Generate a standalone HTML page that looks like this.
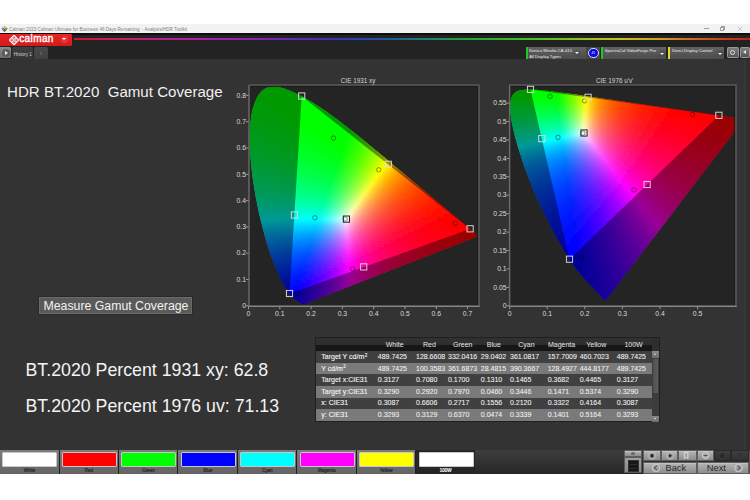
<!DOCTYPE html>
<html><head><meta charset="utf-8">
<style>
*{box-sizing:border-box}
html,body{margin:0;padding:0}
body{width:750px;height:500px;position:relative;overflow:hidden;background:#fff;font-family:"Liberation Sans",sans-serif}
.abs{position:absolute}
#titlebar{position:absolute;left:0;top:24px;width:750px;height:9px;background:#f2f2f2}
#titlebar .t{position:absolute;left:9px;top:3.2px;font-size:4.6px;color:#7e7e7e;white-space:pre;line-height:6px}
#hdr{position:absolute;left:0;top:33px;width:750px;height:14px;background:linear-gradient(#0e0e0e 0,#0e0e0e 2px,#222 2.5px)}
#calbtn{position:absolute;left:0;top:0.8px;width:71.5px;height:11.9px;background:linear-gradient(#e82424,#d41a1a);border-radius:0 1px 1px 0}
#calbtn .lg{position:absolute;left:19.2px;top:-1.4px;font-size:10px;color:#fff;line-height:14px;letter-spacing:0.4px;-webkit-text-stroke:0.4px #fff}
#rainbow{position:absolute;left:74px;top:4.8px;width:676px;height:2.6px;background:linear-gradient(90deg,#c81830 0%,#c0206a 8.3%,#b0209a 15.7%,#9a20b0 23%,#7028b0 30.5%,#4030b0 37.9%,#2050a8 45.3%,#207878 51.2%,#20a040 57.1%,#40c020 67.5%,#90c020 74.9%,#c8c020 80.8%,#d0a020 86.7%,#c86020 92.6%,#c02020 100%);filter:blur(0.45px)}
#tabrow{position:absolute;left:0;top:47px;width:750px;height:12px;background:#232323}
#main{position:absolute;left:0;top:59px;width:750px;height:391px;background:#333}
#rstrip{position:absolute;left:744px;top:59px;width:6px;height:391px;background:linear-gradient(90deg,#373737 0,#373737 2px,#2f2f2f 2px)}
.dev{position:absolute;top:47px;height:12px;background:linear-gradient(#626262,#4c4c4c);border-left:2px solid #22c822}
.dev .dt{position:absolute;left:1.6px;top:1.2px;font-size:4.2px;line-height:5.4px;color:#ececec;white-space:pre}
.dd{position:absolute;width:7px;height:7px;border-radius:3.5px;background:rgba(0,0,0,0.08)}
.dd:after{content:"";position:absolute;left:1.4px;top:2.4px;border-left:2.1px solid transparent;border-right:2.1px solid transparent;border-top:2.6px solid #f4f4f4}
#ttl{position:absolute;left:7px;top:81.7px;font-size:15.1px;color:#f0f0f0;white-space:pre;line-height:20px}
.big{position:absolute;left:25.5px;font-size:17.75px;color:#f4f4f4;white-space:pre;line-height:22px}
#mbtn{position:absolute;left:38px;top:295.7px;width:155px;height:19px;background:#5a5a5a;border:1px solid #2a2a2a;box-shadow:inset 0 0 0 1px #6a6a6a}
#mbtn span{position:absolute;left:4.5px;top:2px;font-size:12.3px;line-height:14px;color:#f2f2f2;white-space:pre}
svg text{font-family:"Liberation Sans",sans-serif}
.ct{font-size:6.35px;fill:#d4d4d4}
.tx{font-size:6.8px;fill:#dadada;text-anchor:middle}
.ty{font-size:6.8px;fill:#dadada;text-anchor:end}
.cg rect{width:3px;height:3px}
.tb{position:absolute;left:315px;top:337.3px;width:345px;height:85.2px;background:#2e2e2e;border:1px solid #202020}
.th{position:absolute;left:0;top:0.2px;width:335.6px;height:13.1px;background:linear-gradient(#313131 0,#2e2e2e 6.6px,#171717 7.4px,#161616 100%)}
.hd{position:absolute;top:3px;width:80px;text-align:center;font-size:7px;line-height:8px;color:#e6e6e6}
.ra,.rb{position:absolute;left:0;width:335.6px;height:11.6px}
.sp{font-size:4.6px;position:relative;top:-2.6px;margin-left:0.4px}
.ra{background:#404040}
.rb{background:#7a7a7a}
.lb{position:absolute;left:5.3px;top:1.8px;font-size:7px;line-height:8px;color:#f4f4f4;white-space:pre;-webkit-text-stroke:0.12px #f4f4f4}
.vl{position:absolute;top:1.8px;font-size:7px;line-height:8px;color:#f0f0f0;white-space:pre;-webkit-text-stroke:0.08px #f0f0f0}
.sb{position:absolute;left:336.4px;top:13px;width:6.2px;height:71px;background:#3c3c3c}
.sbt{position:absolute;left:0;top:0;width:6.2px;height:6.5px;background:linear-gradient(#8a8a8a,#6a6a6a)}
.sbt:after,.sbb:after{content:'';position:absolute;left:1.3px;border-left:1.8px solid transparent;border-right:1.8px solid transparent}
.sbt:after{top:1.8px;border-bottom:2.2px solid #d8d8d8}
.sbb:after{top:2.2px;border-top:2.2px solid #d8d8d8}
.sbth{position:absolute;left:0.6px;top:7.5px;width:5px;height:34px;background:linear-gradient(90deg,#505050,#5e5e5e);border-radius:1px}
.sbb{position:absolute;left:0;top:64.5px;width:6.2px;height:6.5px;background:linear-gradient(#8a8a8a,#6a6a6a)}
#bbar{position:absolute;left:0;top:450px;width:750px;height:24px;background:linear-gradient(#3a3a3a,#222)}
.tile{position:absolute;top:0;width:59.6px;height:24px;background:linear-gradient(#7c7c7c,#646464);border-right:0.9px solid #202020}
.tile .sw{position:absolute;left:2.4px;top:2px;width:55px;height:14.8px;border:0.5px solid #c8c8c8;border-radius:1px;box-shadow:0 0 0.5px #444}
.tile .tl{position:absolute;left:0;top:18.1px;width:59px;text-align:center;font-size:4.5px;line-height:6px;color:#222;-webkit-text-stroke:0.15px #222}
.tile.sel{background:#262626}
.tile.sel .tl{color:#fff;-webkit-text-stroke:0.2px #fff}
.nb{position:absolute;background:linear-gradient(#b6b6b6,#8c8c8c);border:0.5px solid #5e5e5e;box-shadow:inset 0 0.6px 0 #cfcfcf}
.nbd{position:absolute;background:linear-gradient(#3e3e3e,#303030);border:0.5px solid #2a2a2a}
#bottomwhite{position:absolute;left:0;top:474px;width:750px;height:26px;background:#fff}
</style></head>
<body>
<div id="titlebar">
  <svg class="abs" style="left:0.8px;top:1.2px" width="7" height="7" viewBox="0 0 8 8">
    <path d="M4 0.6 L5.9 2.5 L4 4.4 L2.1 2.5Z" fill="#d8d040"/>
    <path d="M5.9 2.5 L7.8 4.4 L5.9 6.3 L4 4.4Z" fill="#40b040"/>
    <path d="M4 4.4 L5.9 6.3 L4 8 L2.1 6.3Z" fill="#a83050"/>
    <path d="M2.1 2.5 L4 4.4 L2.1 6.3 L0.2 4.4Z" fill="#40a0d0"/>
  </svg>
  <div class="t">Calman 2023 Calman Ultimate for Business 46 Days Remaining  - Analysis/HDR Toolkit</div>
  <div class="abs" style="left:704px;top:4.4px;width:4.5px;height:0.5px;background:#a0a0a0"></div>
  <div class="abs" style="left:720.2px;top:3px;width:3.6px;height:3.6px;border:0.5px solid #a0a0a0"></div><div class="abs" style="left:721px;top:2.2px;width:3.6px;height:3.6px;border-top:0.5px solid #a0a0a0;border-right:0.5px solid #a0a0a0"></div>
  <svg class="abs" style="left:737px;top:2.2px" width="6" height="6"><path d="M0.8 0.8L5.2 5.2M5.2 0.8L0.8 5.2" stroke="#a0a0a0" stroke-width="0.5"/></svg>
</div>
<div id="hdr">
  <div id="calbtn">
    <svg class="abs" style="left:8.5px;top:0.8px" width="10" height="10" viewBox="0 0 10 10">
      <path d="M5 0.3 L9.7 5 L5 9.7 L0.3 5Z" fill="none" stroke="#fff" stroke-width="1.3"/>
      <path d="M5 2.6 L7.4 5 L5 7.4 L2.6 5Z" fill="none" stroke="#fff" stroke-width="0.9"/>
      <path d="M2.6 2.6 L7.4 7.4 M7.4 2.6 L2.6 7.4" stroke="#fff" stroke-width="0.7"/>
    </svg>
    <div class="lg">calman</div>
    <div class="abs" style="left:60.8px;top:1.8px;width:7.6px;height:7.6px;border-radius:3.8px;background:#e23a3a"></div>
    <div class="abs" style="left:62.4px;top:4.6px;border-left:2.2px solid transparent;border-right:2.2px solid transparent;border-top:2.6px solid #fff"></div>
  </div>
  <div id="rainbow"></div>
</div>
<div id="tabrow">
  <div class="abs" style="left:0;top:0.3px;width:10.8px;height:11.2px;background:linear-gradient(#8c8c8c,#6c6c6c);border-radius:0 1.5px 1.5px 0"></div>
  <div class="abs" style="left:2px;top:2px;width:7.5px;height:7.5px;border-radius:3.75px;background:#5c5c5c"></div>
  <div class="abs" style="left:4.5px;top:3.8px;border-top:2px solid transparent;border-bottom:2px solid transparent;border-left:3px solid #f0f0f0"></div>
  <div class="abs" style="left:11.6px;top:-0.3px;width:21.6px;height:12.3px;background:linear-gradient(#3e3e3e,#363636);border-radius:1.5px 1.5px 0 0"></div>
  <div class="abs" style="left:13.8px;top:4.6px;font-size:4.6px;line-height:6px;color:#cdcdcd;white-space:pre">History 1</div>
  <div class="abs" style="left:34px;top:-0.3px;width:13.6px;height:12.3px;background:linear-gradient(#4a4a4a,#404040);border-radius:1.5px 1.5px 0 0"></div>
  <div class="abs" style="left:39.8px;top:5.2px;width:2.4px;height:2.4px;background:#5a5a5a"></div>
</div>
<div class="dev" style="left:525.6px;width:74px">
  <div class="dt">Konica Minolta CA-410
All Display Types</div>
  <div class="dd" style="left:46.5px;top:2.6px"></div>
  <div class="abs" style="left:58px;top:0;width:14px;height:12px;background:#474747"></div>
  <div class="abs" style="left:60.3px;top:0.6px;width:10.8px;height:10.8px;border-radius:5.4px;background:#0808e6;border:0.7px solid #d8d8f8"></div>
  <div class="abs" style="left:60.3px;top:4px;width:10.8px;text-align:center;font-size:3px;line-height:4px;color:#fff">45</div>
</div>
<div class="dev" style="left:601.2px;width:64.5px">
  <div class="dt">SpectraCal VideoForge Pro</div>
  <div class="dd" style="left:55.5px;top:3.3px"></div>
</div>
<div class="dev" style="left:668.3px;width:56px;border-left-color:#e8d820">
  <div class="dt">Direct Display Control</div>
  <div class="dd" style="left:46.5px;top:3.3px"></div>
</div>
<div class="abs" style="left:726.6px;top:47px;width:12.2px;height:11.3px;background:linear-gradient(#7c7c7c,#565656);border:0.5px solid #9a9a9a;border-radius:1.2px"></div>
<div class="abs" style="left:730.1px;top:50.4px;width:5px;height:5px;border-radius:2.5px;border:1.4px solid #dedede"></div>
<div class="abs" style="left:740.2px;top:47px;width:10px;height:11.3px;background:linear-gradient(#7c7c7c,#565656);border:0.5px solid #9a9a9a;border-radius:1.2px"></div>
<div class="abs" style="left:742.6px;top:50.3px;border-top:2.4px solid transparent;border-bottom:2.4px solid transparent;border-right:3px solid #e8e8e8"></div>
<div id="main"></div>
<div id="rstrip"></div>
<div id="ttl">HDR BT.2020  Gamut Coverage</div>
<svg class="abs" style="left:0;top:0" width="750" height="500" viewBox="0 0 750 500">
<filter id="bl" x="-5%" y="-5%" width="110%" height="110%"><feGaussianBlur stdDeviation="1.1"/></filter>
<rect x="249" y="85" width="230" height="221" fill="#242424"/>
<rect x="510" y="85" width="226" height="221" fill="#242424"/>
<clipPath id="cl_xy"><path d="M303 304.5 303 304.5 303 304.5 303 304.5 303 304.5 303 304.5 303 304.5 302.9 304.5 302.9 304.5 302.9 304.5 302.9 304.5 302.9 304.5 302.9 304.5 302.9 304.5 302.8 304.5 302.8 304.5 302.8 304.5 302.8 304.5 302.8 304.5 302.8 304.5 302.8 304.5 302.7 304.5 302.7 304.5 302.7 304.5 302.7 304.5 302.7 304.5 302.6 304.5 302.6 304.5 302.6 304.5 302.5 304.5 302.5 304.5 302.5 304.5 302.5 304.5 302.4 304.5 302.4 304.5 302.4 304.5 302.3 304.5 302.3 304.5 302.3 304.5 302.2 304.5 302.2 304.5 302.1 304.4 302 304.4 302 304.4 301.9 304.3 301.8 304.3 301.7 304.2 301.6 304.2 301.6 304.1 301.5 304.1 301.4 304 301.2 303.9 301.1 303.8 301 303.7 300.9 303.6 300.7 303.5 300.6 303.4 300.5 303.3 300.3 303.2 300.1 303.1 300 302.9 299.8 302.8 299.6 302.7 299.4 302.5 299.2 302.3 298.9 302.2 298.7 302 298.4 301.8 298.1 301.6 297.8 301.4 297.5 301.1 297.2 300.9 296.9 300.7 296.5 300.4 296.1 300.1 295.8 299.8 295.4 299.5 294.9 299.2 294.5 298.8 294 298.4 293.6 298 293.1 297.5 292.6 297.1 292 296.5 291.5 296 290.9 295.3 290.3 294.6 289.6 293.7 288.9 292.8 288.1 291.7 287.3 290.6 286.5 289.3 285.7 288 284.7 286.4 283.8 284.8 282.8 283 281.8 281 280.7 278.7 279.5 276.3 278.3 273.7 277.1 270.9 275.8 267.8 274.4 264.5 273 261 271.5 257.1 270 253 268.5 248.6 267.1 243.9 265.6 239 264.2 233.7 262.7 228.2 261.3 222.4 259.8 216.4 258.4 210.2 257.1 203.8 255.8 197.3 254.7 190.7 253.6 184 252.6 177.4 251.8 170.8 251.1 164.2 250.5 157.7 250 151.4 249.7 145.3 249.6 139.3 249.7 133.6 250 128 250.4 122.7 251 117.7 251.8 112.9 252.8 108.5 254.1 104.4 255.5 100.8 257 97.5 258.8 94.6 260.7 92.2 262.7 90.3 264.8 88.8 267.1 87.7 269.4 86.9 271.8 86.5 274.2 86.4 276.7 86.6 279.2 87.1 281.7 87.7 284.2 88.5 286.8 89.4 289.4 90.4 291.9 91.5 294.4 92.7 296.9 93.9 299.4 95.1 301.8 96.3 304.2 97.6 306.5 98.9 308.9 100.2 311.2 101.6 313.5 103 315.8 104.4 318.1 105.9 320.4 107.4 322.6 108.9 324.9 110.5 327.2 112.1 329.4 113.7 331.7 115.3 333.9 116.9 336.2 118.6 338.4 120.3 340.7 122 342.9 123.7 345.1 125.5 347.4 127.2 349.6 129 351.9 130.7 354.1 132.5 356.3 134.3 358.6 136.1 360.8 137.9 363 139.7 365.3 141.6 367.5 143.4 369.7 145.2 372 147.1 374.2 148.9 376.4 150.7 378.7 152.6 380.9 154.4 383.1 156.2 385.3 158.1 387.5 159.9 389.7 161.7 391.9 163.6 394 165.4 396.2 167.2 398.4 169 400.5 170.8 402.6 172.6 404.7 174.3 406.8 176.1 408.9 177.8 411 179.6 413 181.3 415 183 417 184.6 419 186.3 421 187.9 422.9 189.5 424.8 191.1 426.7 192.7 428.5 194.2 430.3 195.7 432.1 197.2 433.9 198.7 435.6 200.1 437.2 201.5 438.8 202.9 440.4 204.2 441.9 205.4 443.3 206.6 444.8 207.8 446.2 209 447.5 210.2 448.9 211.3 450.2 212.3 451.4 213.4 452.6 214.4 453.7 215.3 454.8 216.2 455.9 217.1 456.9 218 457.9 218.8 458.8 219.5 459.7 220.3 460.5 221 461.4 221.7 462.1 222.4 462.9 223 463.6 223.6 464.3 224.2 464.9 224.7 465.6 225.2 466.2 225.7 466.7 226.2 467.3 226.7 467.8 227.1 468.3 227.5 468.8 227.9 469.2 228.3 469.7 228.6 470.1 229 470.5 229.3 470.9 229.7 471.3 230 471.6 230.3 472 230.6 472.3 230.9 472.7 231.2 473 231.4 473.3 231.7 473.6 231.9 473.8 232.1 474.1 232.4 474.3 232.6 474.6 232.8 474.8 233 475 233.1 475.2 233.3 475.4 233.5 475.6 233.6 475.7 233.7 475.9 233.9 476 234 476.2 234.1 476.3 234.2 476.4 234.3 476.6 234.4 476.7 234.5 476.8 234.6 476.9 234.7 477 234.8 477.1 234.9 477.1 234.9 477.2 235 477.3 235 477.3 235.1 477.4 235.1 477.4 235.2 477.5 235.2 477.6 235.3 477.6 235.3 477.7 235.4 477.7 235.4 477.8 235.4 477.8 235.5 477.8 235.5 477.9 235.5 477.9 235.6 478 235.6 478 235.7 478.1 235.7 478.1 235.7 478.1 235.8 478.2 235.8 478.2 235.8 478.3 235.9 478.3 235.9 478.3 235.9 478.3 235.9 478.3 235.9 478.4 235.9 478.4 236 478.4 236 478.4 236 478.4 236 478.4 236 478.4 236 478.4 236 478.5 236 478.5 236 478.5 236Z"/></clipPath>
<clipPath id="cp_xy"><rect x="249" y="86" width="230" height="221"/></clipPath>
<g clip-path="url(#cp_xy)"><g clip-path="url(#cl_xy)"><g class="cg" filter="url(#bl)"><rect x="261" y="82" fill="#00ff00"/><rect x="264" y="82" fill="#00ff00"/><rect x="267" y="82" fill="#00ff00"/><rect x="270" y="82" fill="#00ff00"/><rect x="273" y="82" fill="#00ff00"/><rect x="276" y="82" fill="#00ff00"/><rect x="279" y="82" fill="#00ff00"/><rect x="282" y="82" fill="#00ff00"/><rect x="285" y="82" fill="#00ff00"/><rect x="258" y="85" fill="#00ff00"/><rect x="261" y="85" fill="#00ff00"/><rect x="264" y="85" fill="#00ff00"/><rect x="267" y="85" fill="#00ff00"/><rect x="270" y="85" fill="#00ff00"/><rect x="273" y="85" fill="#00ff00"/><rect x="276" y="85" fill="#00ff00"/><rect x="279" y="85" fill="#00ff00"/><rect x="282" y="85" fill="#00ff00"/><rect x="285" y="85" fill="#00ff00"/><rect x="288" y="85" fill="#00ff00"/><rect x="291" y="85" fill="#00ff00"/><rect x="255" y="88" fill="#00ff00"/><rect x="258" y="88" fill="#00ff00"/><rect x="261" y="88" fill="#00ff00"/><rect x="264" y="88" fill="#00ff00"/><rect x="267" y="88" fill="#00ff00"/><rect x="270" y="88" fill="#00ff00"/><rect x="273" y="88" fill="#00ff00"/><rect x="276" y="88" fill="#00ff00"/><rect x="279" y="88" fill="#00ff00"/><rect x="282" y="88" fill="#00ff00"/><rect x="285" y="88" fill="#00ff00"/><rect x="288" y="88" fill="#00ff00"/><rect x="291" y="88" fill="#00ff00"/><rect x="294" y="88" fill="#00ff00"/><rect x="297" y="88" fill="#00ff00"/><rect x="300" y="88" fill="#00ff00"/><rect x="252" y="91" fill="#00ff02"/><rect x="255" y="91" fill="#00ff01"/><rect x="258" y="91" fill="#00ff00"/><rect x="261" y="91" fill="#00ff00"/><rect x="264" y="91" fill="#00ff00"/><rect x="267" y="91" fill="#00ff00"/><rect x="270" y="91" fill="#00ff00"/><rect x="273" y="91" fill="#00ff00"/><rect x="276" y="91" fill="#00ff00"/><rect x="279" y="91" fill="#00ff00"/><rect x="282" y="91" fill="#00ff00"/><rect x="285" y="91" fill="#00ff00"/><rect x="288" y="91" fill="#00ff00"/><rect x="291" y="91" fill="#00ff00"/><rect x="294" y="91" fill="#00ff00"/><rect x="297" y="91" fill="#00ff00"/><rect x="300" y="91" fill="#00ff00"/><rect x="303" y="91" fill="#00ff00"/><rect x="306" y="91" fill="#00ff00"/><rect x="252" y="94" fill="#00ff05"/><rect x="255" y="94" fill="#00ff03"/><rect x="258" y="94" fill="#00ff02"/><rect x="261" y="94" fill="#00ff01"/><rect x="264" y="94" fill="#00ff00"/><rect x="267" y="94" fill="#00ff00"/><rect x="270" y="94" fill="#00ff00"/><rect x="273" y="94" fill="#00ff00"/><rect x="276" y="94" fill="#00ff00"/><rect x="279" y="94" fill="#00ff00"/><rect x="282" y="94" fill="#00ff00"/><rect x="285" y="94" fill="#00ff00"/><rect x="288" y="94" fill="#00ff00"/><rect x="291" y="94" fill="#00ff00"/><rect x="294" y="94" fill="#00ff00"/><rect x="297" y="94" fill="#00ff00"/><rect x="300" y="94" fill="#00ff00"/><rect x="303" y="94" fill="#00ff00"/><rect x="306" y="94" fill="#00ff00"/><rect x="309" y="94" fill="#00ff00"/><rect x="249" y="97" fill="#00ff08"/><rect x="252" y="97" fill="#00ff07"/><rect x="255" y="97" fill="#00ff05"/><rect x="258" y="97" fill="#00ff04"/><rect x="261" y="97" fill="#00ff03"/><rect x="264" y="97" fill="#00ff01"/><rect x="267" y="97" fill="#00ff00"/><rect x="270" y="97" fill="#00ff00"/><rect x="273" y="97" fill="#00ff00"/><rect x="276" y="97" fill="#00ff00"/><rect x="279" y="97" fill="#00ff00"/><rect x="282" y="97" fill="#00ff00"/><rect x="285" y="97" fill="#00ff00"/><rect x="288" y="97" fill="#00ff00"/><rect x="291" y="97" fill="#00ff00"/><rect x="294" y="97" fill="#00ff00"/><rect x="297" y="97" fill="#00ff00"/><rect x="300" y="97" fill="#00ff00"/><rect x="303" y="97" fill="#00ff00"/><rect x="306" y="97" fill="#00ff00"/><rect x="309" y="97" fill="#00ff00"/><rect x="312" y="97" fill="#00ff00"/><rect x="315" y="97" fill="#00ff00"/><rect x="249" y="100" fill="#00ff0b"/><rect x="252" y="100" fill="#00ff09"/><rect x="255" y="100" fill="#00ff08"/><rect x="258" y="100" fill="#00ff06"/><rect x="261" y="100" fill="#00ff05"/><rect x="264" y="100" fill="#00ff03"/><rect x="267" y="100" fill="#00ff02"/><rect x="270" y="100" fill="#00ff01"/><rect x="273" y="100" fill="#00ff00"/><rect x="276" y="100" fill="#00ff00"/><rect x="279" y="100" fill="#00ff00"/><rect x="282" y="100" fill="#00ff00"/><rect x="285" y="100" fill="#00ff00"/><rect x="288" y="100" fill="#00ff00"/><rect x="291" y="100" fill="#00ff00"/><rect x="294" y="100" fill="#00ff00"/><rect x="297" y="100" fill="#00ff00"/><rect x="300" y="100" fill="#00ff00"/><rect x="303" y="100" fill="#00ff00"/><rect x="306" y="100" fill="#00ff00"/><rect x="309" y="100" fill="#00ff00"/><rect x="312" y="100" fill="#00ff00"/><rect x="315" y="100" fill="#00ff00"/><rect x="318" y="100" fill="#00ff00"/><rect x="321" y="100" fill="#00ff00"/><rect x="249" y="103" fill="#00ff0d"/><rect x="252" y="103" fill="#00ff0c"/><rect x="255" y="103" fill="#00ff0a"/><rect x="258" y="103" fill="#00ff09"/><rect x="261" y="103" fill="#00ff07"/><rect x="264" y="103" fill="#00ff06"/><rect x="267" y="103" fill="#00ff04"/><rect x="270" y="103" fill="#00ff03"/><rect x="273" y="103" fill="#00ff01"/><rect x="276" y="103" fill="#00ff00"/><rect x="279" y="103" fill="#00ff00"/><rect x="282" y="103" fill="#00ff00"/><rect x="285" y="103" fill="#00ff00"/><rect x="288" y="103" fill="#00ff00"/><rect x="291" y="103" fill="#00ff00"/><rect x="294" y="103" fill="#00ff00"/><rect x="297" y="103" fill="#00ff00"/><rect x="300" y="103" fill="#00ff00"/><rect x="303" y="103" fill="#00ff00"/><rect x="306" y="103" fill="#00ff00"/><rect x="309" y="103" fill="#00ff00"/><rect x="312" y="103" fill="#00ff00"/><rect x="315" y="103" fill="#00ff00"/><rect x="318" y="103" fill="#00ff00"/><rect x="321" y="103" fill="#00ff00"/><rect x="324" y="103" fill="#00ff00"/><rect x="249" y="106" fill="#00ff10"/><rect x="252" y="106" fill="#00ff0e"/><rect x="255" y="106" fill="#00ff0d"/><rect x="258" y="106" fill="#00ff0b"/><rect x="261" y="106" fill="#00ff0a"/><rect x="264" y="106" fill="#00ff08"/><rect x="267" y="106" fill="#00ff07"/><rect x="270" y="106" fill="#00ff05"/><rect x="273" y="106" fill="#00ff04"/><rect x="276" y="106" fill="#00ff02"/><rect x="279" y="106" fill="#00ff01"/><rect x="282" y="106" fill="#00ff00"/><rect x="285" y="106" fill="#00ff00"/><rect x="288" y="106" fill="#00ff00"/><rect x="291" y="106" fill="#00ff00"/><rect x="294" y="106" fill="#00ff00"/><rect x="297" y="106" fill="#00ff00"/><rect x="300" y="106" fill="#00ff00"/><rect x="303" y="106" fill="#00ff00"/><rect x="306" y="106" fill="#00ff00"/><rect x="309" y="106" fill="#00ff00"/><rect x="312" y="106" fill="#00ff00"/><rect x="315" y="106" fill="#00ff00"/><rect x="318" y="106" fill="#00ff00"/><rect x="321" y="106" fill="#00ff00"/><rect x="324" y="106" fill="#00ff00"/><rect x="327" y="106" fill="#00ff00"/><rect x="330" y="106" fill="#00ff00"/><rect x="246" y="109" fill="#00ff14"/><rect x="249" y="109" fill="#00ff12"/><rect x="252" y="109" fill="#00ff11"/><rect x="255" y="109" fill="#00ff0f"/><rect x="258" y="109" fill="#00ff0e"/><rect x="261" y="109" fill="#00ff0c"/><rect x="264" y="109" fill="#00ff0b"/><rect x="267" y="109" fill="#00ff09"/><rect x="270" y="109" fill="#00ff08"/><rect x="273" y="109" fill="#00ff06"/><rect x="276" y="109" fill="#00ff04"/><rect x="279" y="109" fill="#00ff03"/><rect x="282" y="109" fill="#00ff01"/><rect x="285" y="109" fill="#00ff00"/><rect x="288" y="109" fill="#00ff00"/><rect x="291" y="109" fill="#00ff00"/><rect x="294" y="109" fill="#00ff00"/><rect x="297" y="109" fill="#00ff00"/><rect x="300" y="109" fill="#00ff00"/><rect x="303" y="109" fill="#00ff00"/><rect x="306" y="109" fill="#00ff00"/><rect x="309" y="109" fill="#00ff00"/><rect x="312" y="109" fill="#00ff00"/><rect x="315" y="109" fill="#00ff00"/><rect x="318" y="109" fill="#00ff00"/><rect x="321" y="109" fill="#00ff00"/><rect x="324" y="109" fill="#00ff00"/><rect x="327" y="109" fill="#00ff00"/><rect x="330" y="109" fill="#00ff00"/><rect x="333" y="109" fill="#00ff00"/><rect x="246" y="112" fill="#00ff17"/><rect x="249" y="112" fill="#00ff15"/><rect x="252" y="112" fill="#00ff14"/><rect x="255" y="112" fill="#00ff12"/><rect x="258" y="112" fill="#00ff11"/><rect x="261" y="112" fill="#00ff0f"/><rect x="264" y="112" fill="#00ff0d"/><rect x="267" y="112" fill="#00ff0c"/><rect x="270" y="112" fill="#00ff0a"/><rect x="273" y="112" fill="#00ff09"/><rect x="276" y="112" fill="#00ff07"/><rect x="279" y="112" fill="#00ff05"/><rect x="282" y="112" fill="#00ff04"/><rect x="285" y="112" fill="#00ff02"/><rect x="288" y="112" fill="#00ff01"/><rect x="291" y="112" fill="#00ff00"/><rect x="294" y="112" fill="#00ff00"/><rect x="297" y="112" fill="#00ff00"/><rect x="300" y="112" fill="#00ff00"/><rect x="303" y="112" fill="#00ff00"/><rect x="306" y="112" fill="#00ff00"/><rect x="309" y="112" fill="#00ff00"/><rect x="312" y="112" fill="#00ff00"/><rect x="315" y="112" fill="#00ff00"/><rect x="318" y="112" fill="#00ff00"/><rect x="321" y="112" fill="#00ff00"/><rect x="324" y="112" fill="#00ff00"/><rect x="327" y="112" fill="#00ff00"/><rect x="330" y="112" fill="#00ff00"/><rect x="333" y="112" fill="#00ff00"/><rect x="336" y="112" fill="#00ff00"/><rect x="246" y="115" fill="#00ff1a"/><rect x="249" y="115" fill="#00ff18"/><rect x="252" y="115" fill="#00ff17"/><rect x="255" y="115" fill="#00ff15"/><rect x="258" y="115" fill="#00ff13"/><rect x="261" y="115" fill="#00ff12"/><rect x="264" y="115" fill="#00ff10"/><rect x="267" y="115" fill="#00ff0f"/><rect x="270" y="115" fill="#00ff0d"/><rect x="273" y="115" fill="#00ff0b"/><rect x="276" y="115" fill="#00ff0a"/><rect x="279" y="115" fill="#00ff08"/><rect x="282" y="115" fill="#00ff06"/><rect x="285" y="115" fill="#00ff05"/><rect x="288" y="115" fill="#00ff03"/><rect x="291" y="115" fill="#00ff01"/><rect x="294" y="115" fill="#00ff00"/><rect x="297" y="115" fill="#00ff00"/><rect x="300" y="115" fill="#00ff00"/><rect x="303" y="115" fill="#00ff00"/><rect x="306" y="115" fill="#00ff00"/><rect x="309" y="115" fill="#00ff00"/><rect x="312" y="115" fill="#00ff00"/><rect x="315" y="115" fill="#00ff00"/><rect x="318" y="115" fill="#00ff00"/><rect x="321" y="115" fill="#00ff00"/><rect x="324" y="115" fill="#00ff00"/><rect x="327" y="115" fill="#00ff00"/><rect x="330" y="115" fill="#00ff00"/><rect x="333" y="115" fill="#00ff00"/><rect x="336" y="115" fill="#00ff00"/><rect x="339" y="115" fill="#00ff00"/><rect x="342" y="115" fill="#00ff00"/><rect x="246" y="118" fill="#00ff1d"/><rect x="249" y="118" fill="#00ff1b"/><rect x="252" y="118" fill="#00ff19"/><rect x="255" y="118" fill="#00ff18"/><rect x="258" y="118" fill="#00ff16"/><rect x="261" y="118" fill="#00ff15"/><rect x="264" y="118" fill="#00ff13"/><rect x="267" y="118" fill="#00ff12"/><rect x="270" y="118" fill="#00ff10"/><rect x="273" y="118" fill="#00ff0e"/><rect x="276" y="118" fill="#00ff0d"/><rect x="279" y="118" fill="#00ff0b"/><rect x="282" y="118" fill="#00ff09"/><rect x="285" y="118" fill="#00ff07"/><rect x="288" y="118" fill="#00ff06"/><rect x="291" y="118" fill="#00ff04"/><rect x="294" y="118" fill="#00ff02"/><rect x="297" y="118" fill="#00ff01"/><rect x="300" y="118" fill="#00ff00"/><rect x="303" y="118" fill="#00ff00"/><rect x="306" y="118" fill="#00ff00"/><rect x="309" y="118" fill="#00ff00"/><rect x="312" y="118" fill="#00ff00"/><rect x="315" y="118" fill="#00ff00"/><rect x="318" y="118" fill="#00ff00"/><rect x="321" y="118" fill="#00ff00"/><rect x="324" y="118" fill="#00ff00"/><rect x="327" y="118" fill="#00ff00"/><rect x="330" y="118" fill="#00ff00"/><rect x="333" y="118" fill="#00ff00"/><rect x="336" y="118" fill="#00ff00"/><rect x="339" y="118" fill="#00ff00"/><rect x="342" y="118" fill="#00ff00"/><rect x="345" y="118" fill="#00ff00"/><rect x="246" y="121" fill="#00ff20"/><rect x="249" y="121" fill="#00ff1e"/><rect x="252" y="121" fill="#00ff1d"/><rect x="255" y="121" fill="#00ff1b"/><rect x="258" y="121" fill="#00ff19"/><rect x="261" y="121" fill="#00ff18"/><rect x="264" y="121" fill="#00ff16"/><rect x="267" y="121" fill="#00ff15"/><rect x="270" y="121" fill="#00ff13"/><rect x="273" y="121" fill="#00ff11"/><rect x="276" y="121" fill="#00ff10"/><rect x="279" y="121" fill="#00ff0e"/><rect x="282" y="121" fill="#00ff0c"/><rect x="285" y="121" fill="#00ff0a"/><rect x="288" y="121" fill="#00ff09"/><rect x="291" y="121" fill="#00ff07"/><rect x="294" y="121" fill="#00ff05"/><rect x="297" y="121" fill="#00ff03"/><rect x="300" y="121" fill="#00ff01"/><rect x="303" y="121" fill="#00ff00"/><rect x="306" y="121" fill="#00ff00"/><rect x="309" y="121" fill="#00ff00"/><rect x="312" y="121" fill="#00ff00"/><rect x="315" y="121" fill="#00ff00"/><rect x="318" y="121" fill="#00ff00"/><rect x="321" y="121" fill="#00ff00"/><rect x="324" y="121" fill="#00ff00"/><rect x="327" y="121" fill="#00ff00"/><rect x="330" y="121" fill="#00ff00"/><rect x="333" y="121" fill="#00ff00"/><rect x="336" y="121" fill="#00ff00"/><rect x="339" y="121" fill="#00ff00"/><rect x="342" y="121" fill="#00ff00"/><rect x="345" y="121" fill="#00ff00"/><rect x="348" y="121" fill="#00ff00"/><rect x="246" y="124" fill="#00ff23"/><rect x="249" y="124" fill="#00ff21"/><rect x="252" y="124" fill="#00ff20"/><rect x="255" y="124" fill="#00ff1e"/><rect x="258" y="124" fill="#00ff1d"/><rect x="261" y="124" fill="#00ff1b"/><rect x="264" y="124" fill="#00ff19"/><rect x="267" y="124" fill="#00ff18"/><rect x="270" y="124" fill="#00ff16"/><rect x="273" y="124" fill="#00ff14"/><rect x="276" y="124" fill="#00ff13"/><rect x="279" y="124" fill="#00ff11"/><rect x="282" y="124" fill="#00ff0f"/><rect x="285" y="124" fill="#00ff0d"/><rect x="288" y="124" fill="#00ff0c"/><rect x="291" y="124" fill="#00ff0a"/><rect x="294" y="124" fill="#00ff08"/><rect x="297" y="124" fill="#00ff06"/><rect x="300" y="124" fill="#00ff04"/><rect x="303" y="124" fill="#00ff02"/><rect x="306" y="124" fill="#00ff01"/><rect x="309" y="124" fill="#00ff00"/><rect x="312" y="124" fill="#00ff00"/><rect x="315" y="124" fill="#00ff00"/><rect x="318" y="124" fill="#00ff00"/><rect x="321" y="124" fill="#00ff00"/><rect x="324" y="124" fill="#00ff00"/><rect x="327" y="124" fill="#00ff00"/><rect x="330" y="124" fill="#00ff00"/><rect x="333" y="124" fill="#00ff00"/><rect x="336" y="124" fill="#00ff00"/><rect x="339" y="124" fill="#00ff00"/><rect x="342" y="124" fill="#00ff00"/><rect x="345" y="124" fill="#00ff00"/><rect x="348" y="124" fill="#00ff00"/><rect x="351" y="124" fill="#07ff00"/><rect x="246" y="127" fill="#00ff26"/><rect x="249" y="127" fill="#00ff25"/><rect x="252" y="127" fill="#00ff23"/><rect x="255" y="127" fill="#00ff22"/><rect x="258" y="127" fill="#00ff20"/><rect x="261" y="127" fill="#00ff1e"/><rect x="264" y="127" fill="#00ff1d"/><rect x="267" y="127" fill="#00ff1b"/><rect x="270" y="127" fill="#00ff19"/><rect x="273" y="127" fill="#00ff18"/><rect x="276" y="127" fill="#00ff16"/><rect x="279" y="127" fill="#00ff14"/><rect x="282" y="127" fill="#00ff12"/><rect x="285" y="127" fill="#00ff11"/><rect x="288" y="127" fill="#00ff0f"/><rect x="291" y="127" fill="#00ff0d"/><rect x="294" y="127" fill="#00ff0b"/><rect x="297" y="127" fill="#00ff09"/><rect x="300" y="127" fill="#00ff07"/><rect x="303" y="127" fill="#00ff05"/><rect x="306" y="127" fill="#00ff03"/><rect x="309" y="127" fill="#00ff02"/><rect x="312" y="127" fill="#00ff00"/><rect x="315" y="127" fill="#00ff00"/><rect x="318" y="127" fill="#00ff00"/><rect x="321" y="127" fill="#00ff00"/><rect x="324" y="127" fill="#00ff00"/><rect x="327" y="127" fill="#00ff00"/><rect x="330" y="127" fill="#00ff00"/><rect x="333" y="127" fill="#00ff00"/><rect x="336" y="127" fill="#00ff00"/><rect x="339" y="127" fill="#00ff00"/><rect x="342" y="127" fill="#00ff00"/><rect x="345" y="127" fill="#00ff00"/><rect x="348" y="127" fill="#02ff00"/><rect x="351" y="127" fill="#0aff00"/><rect x="354" y="127" fill="#13ff00"/><rect x="357" y="127" fill="#1dff00"/><rect x="246" y="130" fill="#00ff2a"/><rect x="249" y="130" fill="#00ff28"/><rect x="252" y="130" fill="#00ff27"/><rect x="255" y="130" fill="#00ff25"/><rect x="258" y="130" fill="#00ff23"/><rect x="261" y="130" fill="#00ff22"/><rect x="264" y="130" fill="#00ff20"/><rect x="267" y="130" fill="#00ff1e"/><rect x="270" y="130" fill="#00ff1d"/><rect x="273" y="130" fill="#00ff1b"/><rect x="276" y="130" fill="#00ff19"/><rect x="279" y="130" fill="#00ff17"/><rect x="282" y="130" fill="#00ff16"/><rect x="285" y="130" fill="#00ff14"/><rect x="288" y="130" fill="#00ff12"/><rect x="291" y="130" fill="#00ff10"/><rect x="294" y="130" fill="#00ff0e"/><rect x="297" y="130" fill="#00ff0c"/><rect x="300" y="130" fill="#00ff0a"/><rect x="303" y="130" fill="#00ff08"/><rect x="306" y="130" fill="#00ff07"/><rect x="309" y="130" fill="#00ff05"/><rect x="312" y="130" fill="#00ff03"/><rect x="315" y="130" fill="#00ff01"/><rect x="318" y="130" fill="#00ff00"/><rect x="321" y="130" fill="#00ff00"/><rect x="324" y="130" fill="#00ff00"/><rect x="327" y="130" fill="#00ff00"/><rect x="330" y="130" fill="#00ff00"/><rect x="333" y="130" fill="#00ff00"/><rect x="336" y="130" fill="#00ff00"/><rect x="339" y="130" fill="#00ff00"/><rect x="342" y="130" fill="#00ff00"/><rect x="345" y="130" fill="#00ff00"/><rect x="348" y="130" fill="#04ff00"/><rect x="351" y="130" fill="#0dff00"/><rect x="354" y="130" fill="#17ff00"/><rect x="357" y="130" fill="#21ff00"/><rect x="360" y="130" fill="#2bff00"/><rect x="246" y="133" fill="#00ff2d"/><rect x="249" y="133" fill="#00ff2c"/><rect x="252" y="133" fill="#00ff2a"/><rect x="255" y="133" fill="#00ff29"/><rect x="258" y="133" fill="#00ff27"/><rect x="261" y="133" fill="#00ff25"/><rect x="264" y="133" fill="#00ff24"/><rect x="267" y="133" fill="#00ff22"/><rect x="270" y="133" fill="#00ff20"/><rect x="273" y="133" fill="#00ff1f"/><rect x="276" y="133" fill="#00ff1d"/><rect x="279" y="133" fill="#00ff1b"/><rect x="282" y="133" fill="#00ff19"/><rect x="285" y="133" fill="#00ff17"/><rect x="288" y="133" fill="#00ff15"/><rect x="291" y="133" fill="#00ff14"/><rect x="294" y="133" fill="#00ff12"/><rect x="297" y="133" fill="#00ff10"/><rect x="300" y="133" fill="#00ff0e"/><rect x="303" y="133" fill="#00ff0c"/><rect x="306" y="133" fill="#00ff0a"/><rect x="309" y="133" fill="#00ff08"/><rect x="312" y="133" fill="#00ff06"/><rect x="315" y="133" fill="#00ff04"/><rect x="318" y="133" fill="#00ff02"/><rect x="321" y="133" fill="#00ff00"/><rect x="324" y="133" fill="#00ff00"/><rect x="327" y="133" fill="#00ff00"/><rect x="330" y="133" fill="#00ff00"/><rect x="333" y="133" fill="#00ff00"/><rect x="336" y="133" fill="#00ff00"/><rect x="339" y="133" fill="#00ff00"/><rect x="342" y="133" fill="#00ff00"/><rect x="345" y="133" fill="#00ff00"/><rect x="348" y="133" fill="#07ff00"/><rect x="351" y="133" fill="#11ff00"/><rect x="354" y="133" fill="#1bff00"/><rect x="357" y="133" fill="#25ff00"/><rect x="360" y="133" fill="#2fff00"/><rect x="363" y="133" fill="#3aff00"/><rect x="246" y="136" fill="#00ff31"/><rect x="249" y="136" fill="#00ff2f"/><rect x="252" y="136" fill="#00ff2e"/><rect x="255" y="136" fill="#00ff2c"/><rect x="258" y="136" fill="#00ff2b"/><rect x="261" y="136" fill="#00ff29"/><rect x="264" y="136" fill="#00ff27"/><rect x="267" y="136" fill="#00ff26"/><rect x="270" y="136" fill="#00ff24"/><rect x="273" y="136" fill="#00ff22"/><rect x="276" y="136" fill="#00ff20"/><rect x="279" y="136" fill="#00ff1f"/><rect x="282" y="136" fill="#00ff1d"/><rect x="285" y="136" fill="#00ff1b"/><rect x="288" y="136" fill="#00ff19"/><rect x="291" y="136" fill="#00ff17"/><rect x="294" y="136" fill="#00ff15"/><rect x="297" y="136" fill="#00ff13"/><rect x="300" y="136" fill="#00ff11"/><rect x="303" y="136" fill="#00ff0f"/><rect x="306" y="136" fill="#00ff0d"/><rect x="309" y="136" fill="#00ff0b"/><rect x="312" y="136" fill="#00ff09"/><rect x="315" y="136" fill="#00ff07"/><rect x="318" y="136" fill="#00ff05"/><rect x="321" y="136" fill="#00ff03"/><rect x="324" y="136" fill="#00ff01"/><rect x="327" y="136" fill="#00ff00"/><rect x="330" y="136" fill="#00ff00"/><rect x="333" y="136" fill="#00ff00"/><rect x="336" y="136" fill="#00ff00"/><rect x="339" y="136" fill="#00ff00"/><rect x="342" y="136" fill="#00ff00"/><rect x="345" y="136" fill="#02ff00"/><rect x="348" y="136" fill="#0bff00"/><rect x="351" y="136" fill="#14ff00"/><rect x="354" y="136" fill="#1eff00"/><rect x="357" y="136" fill="#29ff00"/><rect x="360" y="136" fill="#34ff00"/><rect x="363" y="136" fill="#3fff00"/><rect x="366" y="136" fill="#4bff00"/><rect x="246" y="139" fill="#00ff35"/><rect x="249" y="139" fill="#00ff33"/><rect x="252" y="139" fill="#00ff32"/><rect x="255" y="139" fill="#00ff30"/><rect x="258" y="139" fill="#00ff2f"/><rect x="261" y="139" fill="#00ff2d"/><rect x="264" y="139" fill="#00ff2b"/><rect x="267" y="139" fill="#00ff29"/><rect x="270" y="139" fill="#00ff28"/><rect x="273" y="139" fill="#00ff26"/><rect x="276" y="139" fill="#00ff24"/><rect x="279" y="139" fill="#00ff22"/><rect x="282" y="139" fill="#00ff21"/><rect x="285" y="139" fill="#00ff1f"/><rect x="288" y="139" fill="#00ff1d"/><rect x="291" y="139" fill="#00ff1b"/><rect x="294" y="139" fill="#00ff19"/><rect x="297" y="139" fill="#00ff17"/><rect x="300" y="139" fill="#00ff15"/><rect x="303" y="139" fill="#00ff13"/><rect x="306" y="139" fill="#00ff11"/><rect x="309" y="139" fill="#00ff0f"/><rect x="312" y="139" fill="#00ff0d"/><rect x="315" y="139" fill="#00ff0b"/><rect x="318" y="139" fill="#00ff08"/><rect x="321" y="139" fill="#00ff06"/><rect x="324" y="139" fill="#00ff04"/><rect x="327" y="139" fill="#00ff02"/><rect x="330" y="139" fill="#00ff00"/><rect x="333" y="139" fill="#00ff00"/><rect x="336" y="139" fill="#00ff00"/><rect x="339" y="139" fill="#00ff00"/><rect x="342" y="139" fill="#00ff00"/><rect x="345" y="139" fill="#05ff00"/><rect x="348" y="139" fill="#0eff00"/><rect x="351" y="139" fill="#18ff00"/><rect x="354" y="139" fill="#23ff00"/><rect x="357" y="139" fill="#2eff00"/><rect x="360" y="139" fill="#39ff00"/><rect x="363" y="139" fill="#44ff00"/><rect x="366" y="139" fill="#51ff00"/><rect x="369" y="139" fill="#5dff00"/><rect x="372" y="139" fill="#6aff00"/><rect x="246" y="142" fill="#00ff39"/><rect x="249" y="142" fill="#00ff37"/><rect x="252" y="142" fill="#00ff36"/><rect x="255" y="142" fill="#00ff34"/><rect x="258" y="142" fill="#00ff33"/><rect x="261" y="142" fill="#00ff31"/><rect x="264" y="142" fill="#00ff2f"/><rect x="267" y="142" fill="#00ff2e"/><rect x="270" y="142" fill="#00ff2c"/><rect x="273" y="142" fill="#00ff2a"/><rect x="276" y="142" fill="#00ff28"/><rect x="279" y="142" fill="#00ff26"/><rect x="282" y="142" fill="#00ff25"/><rect x="285" y="142" fill="#00ff23"/><rect x="288" y="142" fill="#00ff21"/><rect x="291" y="142" fill="#00ff1f"/><rect x="294" y="142" fill="#00ff1d"/><rect x="297" y="142" fill="#00ff1b"/><rect x="300" y="142" fill="#00ff19"/><rect x="303" y="142" fill="#00ff17"/><rect x="306" y="142" fill="#00ff15"/><rect x="309" y="142" fill="#00ff13"/><rect x="312" y="142" fill="#00ff10"/><rect x="315" y="142" fill="#00ff0e"/><rect x="318" y="142" fill="#00ff0c"/><rect x="321" y="142" fill="#00ff0a"/><rect x="324" y="142" fill="#00ff08"/><rect x="327" y="142" fill="#00ff05"/><rect x="330" y="142" fill="#00ff03"/><rect x="333" y="142" fill="#00ff01"/><rect x="336" y="142" fill="#00ff00"/><rect x="339" y="142" fill="#00ff00"/><rect x="342" y="142" fill="#00ff00"/><rect x="345" y="142" fill="#08ff00"/><rect x="348" y="142" fill="#12ff00"/><rect x="351" y="142" fill="#1cff00"/><rect x="354" y="142" fill="#27ff00"/><rect x="357" y="142" fill="#32ff00"/><rect x="360" y="142" fill="#3eff00"/><rect x="363" y="142" fill="#4aff00"/><rect x="366" y="142" fill="#57ff00"/><rect x="369" y="142" fill="#63ff00"/><rect x="372" y="142" fill="#71ff00"/><rect x="375" y="142" fill="#7eff00"/><rect x="246" y="145" fill="#00ff3d"/><rect x="249" y="145" fill="#00ff3c"/><rect x="252" y="145" fill="#00ff3a"/><rect x="255" y="145" fill="#00ff38"/><rect x="258" y="145" fill="#00ff37"/><rect x="261" y="145" fill="#00ff35"/><rect x="264" y="145" fill="#00ff33"/><rect x="267" y="145" fill="#00ff32"/><rect x="270" y="145" fill="#00ff30"/><rect x="273" y="145" fill="#00ff2e"/><rect x="276" y="145" fill="#00ff2c"/><rect x="279" y="145" fill="#00ff2b"/><rect x="282" y="145" fill="#00ff29"/><rect x="285" y="145" fill="#00ff27"/><rect x="288" y="145" fill="#00ff25"/><rect x="291" y="145" fill="#00ff23"/><rect x="294" y="145" fill="#00ff21"/><rect x="297" y="145" fill="#00ff1f"/><rect x="300" y="145" fill="#00ff1d"/><rect x="303" y="145" fill="#00ff1b"/><rect x="306" y="145" fill="#00ff19"/><rect x="309" y="145" fill="#00ff17"/><rect x="312" y="145" fill="#00ff14"/><rect x="315" y="145" fill="#00ff12"/><rect x="318" y="145" fill="#00ff10"/><rect x="321" y="145" fill="#00ff0e"/><rect x="324" y="145" fill="#00ff0b"/><rect x="327" y="145" fill="#00ff09"/><rect x="330" y="145" fill="#00ff07"/><rect x="333" y="145" fill="#00ff04"/><rect x="336" y="145" fill="#00ff02"/><rect x="339" y="145" fill="#00ff00"/><rect x="342" y="145" fill="#02ff00"/><rect x="345" y="145" fill="#0bff00"/><rect x="348" y="145" fill="#16ff00"/><rect x="351" y="145" fill="#20ff00"/><rect x="354" y="145" fill="#2cff00"/><rect x="357" y="145" fill="#37ff00"/><rect x="360" y="145" fill="#44ff00"/><rect x="363" y="145" fill="#50ff00"/><rect x="366" y="145" fill="#5dff00"/><rect x="369" y="145" fill="#6aff00"/><rect x="372" y="145" fill="#78ff00"/><rect x="375" y="145" fill="#86ff00"/><rect x="378" y="145" fill="#95ff00"/><rect x="246" y="148" fill="#00ff41"/><rect x="249" y="148" fill="#00ff40"/><rect x="252" y="148" fill="#00ff3e"/><rect x="255" y="148" fill="#00ff3d"/><rect x="258" y="148" fill="#00ff3b"/><rect x="261" y="148" fill="#00ff39"/><rect x="264" y="148" fill="#00ff38"/><rect x="267" y="148" fill="#00ff36"/><rect x="270" y="148" fill="#00ff34"/><rect x="273" y="148" fill="#00ff33"/><rect x="276" y="148" fill="#00ff31"/><rect x="279" y="148" fill="#00ff2f"/><rect x="282" y="148" fill="#00ff2d"/><rect x="285" y="148" fill="#00ff2b"/><rect x="288" y="148" fill="#00ff29"/><rect x="291" y="148" fill="#00ff27"/><rect x="294" y="148" fill="#00ff25"/><rect x="297" y="148" fill="#00ff23"/><rect x="300" y="148" fill="#00ff21"/><rect x="303" y="148" fill="#00ff1f"/><rect x="306" y="148" fill="#00ff1d"/><rect x="309" y="148" fill="#00ff1b"/><rect x="312" y="148" fill="#00ff19"/><rect x="315" y="148" fill="#00ff16"/><rect x="318" y="148" fill="#00ff14"/><rect x="321" y="148" fill="#00ff12"/><rect x="324" y="148" fill="#00ff0f"/><rect x="327" y="148" fill="#00ff0d"/><rect x="330" y="148" fill="#00ff0b"/><rect x="333" y="148" fill="#00ff08"/><rect x="336" y="148" fill="#00ff06"/><rect x="339" y="148" fill="#00ff03"/><rect x="342" y="148" fill="#05ff01"/><rect x="345" y="148" fill="#0fff00"/><rect x="348" y="148" fill="#1aff00"/><rect x="351" y="148" fill="#25ff00"/><rect x="354" y="148" fill="#31ff00"/><rect x="357" y="148" fill="#3dff00"/><rect x="360" y="148" fill="#49ff00"/><rect x="363" y="148" fill="#56ff00"/><rect x="366" y="148" fill="#64ff00"/><rect x="369" y="148" fill="#72ff00"/><rect x="372" y="148" fill="#80ff00"/><rect x="375" y="148" fill="#8fff00"/><rect x="378" y="148" fill="#9eff00"/><rect x="381" y="148" fill="#aeff00"/><rect x="246" y="151" fill="#00ff46"/><rect x="249" y="151" fill="#00ff44"/><rect x="252" y="151" fill="#00ff43"/><rect x="255" y="151" fill="#00ff41"/><rect x="258" y="151" fill="#00ff40"/><rect x="261" y="151" fill="#00ff3e"/><rect x="264" y="151" fill="#00ff3c"/><rect x="267" y="151" fill="#00ff3b"/><rect x="270" y="151" fill="#00ff39"/><rect x="273" y="151" fill="#00ff37"/><rect x="276" y="151" fill="#00ff35"/><rect x="279" y="151" fill="#00ff34"/><rect x="282" y="151" fill="#00ff32"/><rect x="285" y="151" fill="#00ff30"/><rect x="288" y="151" fill="#00ff2e"/><rect x="291" y="151" fill="#00ff2c"/><rect x="294" y="151" fill="#00ff2a"/><rect x="297" y="151" fill="#00ff28"/><rect x="300" y="151" fill="#00ff26"/><rect x="303" y="151" fill="#00ff24"/><rect x="306" y="151" fill="#00ff22"/><rect x="309" y="151" fill="#00ff1f"/><rect x="312" y="151" fill="#00ff1d"/><rect x="315" y="151" fill="#00ff1b"/><rect x="318" y="151" fill="#00ff19"/><rect x="321" y="151" fill="#00ff16"/><rect x="324" y="151" fill="#00ff14"/><rect x="327" y="151" fill="#00ff11"/><rect x="330" y="151" fill="#00ff0f"/><rect x="333" y="151" fill="#00ff0c"/><rect x="336" y="151" fill="#00ff0a"/><rect x="339" y="151" fill="#00ff07"/><rect x="342" y="151" fill="#08ff05"/><rect x="345" y="151" fill="#13ff02"/><rect x="348" y="151" fill="#1eff00"/><rect x="351" y="151" fill="#2aff00"/><rect x="354" y="151" fill="#36ff00"/><rect x="357" y="151" fill="#43ff00"/><rect x="360" y="151" fill="#50ff00"/><rect x="363" y="151" fill="#5dff00"/><rect x="366" y="151" fill="#6bff00"/><rect x="369" y="151" fill="#79ff00"/><rect x="372" y="151" fill="#88ff00"/><rect x="375" y="151" fill="#98ff00"/><rect x="378" y="151" fill="#a8ff00"/><rect x="381" y="151" fill="#b8ff00"/><rect x="384" y="151" fill="#c9ff00"/><rect x="246" y="154" fill="#00ff4b"/><rect x="249" y="154" fill="#00ff49"/><rect x="252" y="154" fill="#00ff48"/><rect x="255" y="154" fill="#00ff46"/><rect x="258" y="154" fill="#00ff44"/><rect x="261" y="154" fill="#00ff43"/><rect x="264" y="154" fill="#00ff41"/><rect x="267" y="154" fill="#00ff3f"/><rect x="270" y="154" fill="#00ff3e"/><rect x="273" y="154" fill="#00ff3c"/><rect x="276" y="154" fill="#00ff3a"/><rect x="279" y="154" fill="#00ff38"/><rect x="282" y="154" fill="#00ff36"/><rect x="285" y="154" fill="#00ff35"/><rect x="288" y="154" fill="#00ff33"/><rect x="291" y="154" fill="#00ff31"/><rect x="294" y="154" fill="#00ff2f"/><rect x="297" y="154" fill="#00ff2d"/><rect x="300" y="154" fill="#00ff2b"/><rect x="303" y="154" fill="#00ff28"/><rect x="306" y="154" fill="#00ff26"/><rect x="309" y="154" fill="#00ff24"/><rect x="312" y="154" fill="#00ff22"/><rect x="315" y="154" fill="#00ff20"/><rect x="318" y="154" fill="#00ff1d"/><rect x="321" y="154" fill="#00ff1b"/><rect x="324" y="154" fill="#00ff18"/><rect x="327" y="154" fill="#00ff16"/><rect x="330" y="154" fill="#00ff13"/><rect x="333" y="154" fill="#00ff11"/><rect x="336" y="154" fill="#00ff0e"/><rect x="339" y="154" fill="#02ff0c"/><rect x="342" y="154" fill="#0cff09"/><rect x="345" y="154" fill="#17ff06"/><rect x="348" y="154" fill="#23ff04"/><rect x="351" y="154" fill="#2fff01"/><rect x="354" y="154" fill="#3bff00"/><rect x="357" y="154" fill="#49ff00"/><rect x="360" y="154" fill="#56ff00"/><rect x="363" y="154" fill="#64ff00"/><rect x="366" y="154" fill="#73ff00"/><rect x="369" y="154" fill="#82ff00"/><rect x="372" y="154" fill="#91ff00"/><rect x="375" y="154" fill="#a1ff00"/><rect x="378" y="154" fill="#b2ff00"/><rect x="381" y="154" fill="#c3ff00"/><rect x="384" y="154" fill="#d5ff00"/><rect x="387" y="154" fill="#e7ff00"/><rect x="390" y="154" fill="#faff00"/><rect x="246" y="157" fill="#00ff50"/><rect x="249" y="157" fill="#00ff4e"/><rect x="252" y="157" fill="#00ff4d"/><rect x="255" y="157" fill="#00ff4b"/><rect x="258" y="157" fill="#00ff49"/><rect x="261" y="157" fill="#00ff48"/><rect x="264" y="157" fill="#00ff46"/><rect x="267" y="157" fill="#00ff44"/><rect x="270" y="157" fill="#00ff43"/><rect x="273" y="157" fill="#00ff41"/><rect x="276" y="157" fill="#00ff3f"/><rect x="279" y="157" fill="#00ff3d"/><rect x="282" y="157" fill="#00ff3b"/><rect x="285" y="157" fill="#00ff3a"/><rect x="288" y="157" fill="#00ff38"/><rect x="291" y="157" fill="#00ff36"/><rect x="294" y="157" fill="#00ff34"/><rect x="297" y="157" fill="#00ff32"/><rect x="300" y="157" fill="#00ff30"/><rect x="303" y="157" fill="#00ff2d"/><rect x="306" y="157" fill="#00ff2b"/><rect x="309" y="157" fill="#00ff29"/><rect x="312" y="157" fill="#00ff27"/><rect x="315" y="157" fill="#00ff24"/><rect x="318" y="157" fill="#00ff22"/><rect x="321" y="157" fill="#00ff20"/><rect x="324" y="157" fill="#00ff1d"/><rect x="327" y="157" fill="#00ff1b"/><rect x="330" y="157" fill="#00ff18"/><rect x="333" y="157" fill="#00ff16"/><rect x="336" y="157" fill="#00ff13"/><rect x="339" y="157" fill="#05ff10"/><rect x="342" y="157" fill="#10ff0e"/><rect x="345" y="157" fill="#1cff0b"/><rect x="348" y="157" fill="#28ff08"/><rect x="351" y="157" fill="#34ff05"/><rect x="354" y="157" fill="#41ff02"/><rect x="357" y="157" fill="#4fff00"/><rect x="360" y="157" fill="#5dff00"/><rect x="363" y="157" fill="#6cff00"/><rect x="366" y="157" fill="#7bff00"/><rect x="369" y="157" fill="#8aff00"/><rect x="372" y="157" fill="#9bff00"/><rect x="375" y="157" fill="#abff00"/><rect x="378" y="157" fill="#bdff00"/><rect x="381" y="157" fill="#cfff00"/><rect x="384" y="157" fill="#e1ff00"/><rect x="387" y="157" fill="#f4ff00"/><rect x="390" y="157" fill="#fff600"/><rect x="393" y="157" fill="#ffe400"/><rect x="246" y="160" fill="#00ff55"/><rect x="249" y="160" fill="#00ff53"/><rect x="252" y="160" fill="#00ff52"/><rect x="255" y="160" fill="#00ff50"/><rect x="258" y="160" fill="#00ff4f"/><rect x="261" y="160" fill="#00ff4d"/><rect x="264" y="160" fill="#00ff4b"/><rect x="267" y="160" fill="#00ff4a"/><rect x="270" y="160" fill="#00ff48"/><rect x="273" y="160" fill="#00ff46"/><rect x="276" y="160" fill="#00ff44"/><rect x="279" y="160" fill="#00ff43"/><rect x="282" y="160" fill="#00ff41"/><rect x="285" y="160" fill="#00ff3f"/><rect x="288" y="160" fill="#00ff3d"/><rect x="291" y="160" fill="#00ff3b"/><rect x="294" y="160" fill="#00ff39"/><rect x="297" y="160" fill="#00ff37"/><rect x="300" y="160" fill="#00ff35"/><rect x="303" y="160" fill="#00ff33"/><rect x="306" y="160" fill="#00ff30"/><rect x="309" y="160" fill="#00ff2e"/><rect x="312" y="160" fill="#00ff2c"/><rect x="315" y="160" fill="#00ff2a"/><rect x="318" y="160" fill="#00ff27"/><rect x="321" y="160" fill="#00ff25"/><rect x="324" y="160" fill="#00ff22"/><rect x="327" y="160" fill="#00ff20"/><rect x="330" y="160" fill="#00ff1d"/><rect x="333" y="160" fill="#00ff1b"/><rect x="336" y="160" fill="#00ff18"/><rect x="339" y="160" fill="#09ff15"/><rect x="342" y="160" fill="#14ff13"/><rect x="345" y="160" fill="#20ff10"/><rect x="348" y="160" fill="#2dff0d"/><rect x="351" y="160" fill="#3aff0a"/><rect x="354" y="160" fill="#48ff07"/><rect x="357" y="160" fill="#56ff04"/><rect x="360" y="160" fill="#65ff01"/><rect x="363" y="160" fill="#74ff00"/><rect x="366" y="160" fill="#83ff00"/><rect x="369" y="160" fill="#94ff00"/><rect x="372" y="160" fill="#a5ff00"/><rect x="375" y="160" fill="#b6ff00"/><rect x="378" y="160" fill="#c8ff00"/><rect x="381" y="160" fill="#dbff00"/><rect x="384" y="160" fill="#eeff00"/><rect x="387" y="160" fill="#fffb00"/><rect x="390" y="160" fill="#ffe900"/><rect x="393" y="160" fill="#ffd800"/><rect x="396" y="160" fill="#ffc900"/><rect x="246" y="163" fill="#00ff5a"/><rect x="249" y="163" fill="#00ff59"/><rect x="252" y="163" fill="#00ff57"/><rect x="255" y="163" fill="#00ff56"/><rect x="258" y="163" fill="#00ff54"/><rect x="261" y="163" fill="#00ff52"/><rect x="264" y="163" fill="#00ff51"/><rect x="267" y="163" fill="#00ff4f"/><rect x="270" y="163" fill="#00ff4d"/><rect x="273" y="163" fill="#00ff4c"/><rect x="276" y="163" fill="#00ff4a"/><rect x="279" y="163" fill="#00ff48"/><rect x="282" y="163" fill="#00ff46"/><rect x="285" y="163" fill="#00ff44"/><rect x="288" y="163" fill="#00ff42"/><rect x="291" y="163" fill="#00ff40"/><rect x="294" y="163" fill="#00ff3e"/><rect x="297" y="163" fill="#00ff3c"/><rect x="300" y="163" fill="#00ff3a"/><rect x="303" y="163" fill="#00ff38"/><rect x="306" y="163" fill="#00ff36"/><rect x="309" y="163" fill="#00ff34"/><rect x="312" y="163" fill="#00ff32"/><rect x="315" y="163" fill="#00ff2f"/><rect x="318" y="163" fill="#00ff2d"/><rect x="321" y="163" fill="#00ff2a"/><rect x="324" y="163" fill="#00ff28"/><rect x="327" y="163" fill="#00ff25"/><rect x="330" y="163" fill="#00ff23"/><rect x="333" y="163" fill="#00ff20"/><rect x="336" y="163" fill="#02ff1d"/><rect x="339" y="163" fill="#0dff1b"/><rect x="342" y="163" fill="#19ff18"/><rect x="345" y="163" fill="#25ff15"/><rect x="348" y="163" fill="#33ff12"/><rect x="351" y="163" fill="#40ff0f"/><rect x="354" y="163" fill="#4eff0c"/><rect x="357" y="163" fill="#5dff09"/><rect x="360" y="163" fill="#6cff06"/><rect x="363" y="163" fill="#7cff03"/><rect x="366" y="163" fill="#8dff00"/><rect x="369" y="163" fill="#9eff00"/><rect x="372" y="163" fill="#afff00"/><rect x="375" y="163" fill="#c2ff00"/><rect x="378" y="163" fill="#d5ff00"/><rect x="381" y="163" fill="#e8ff00"/><rect x="384" y="163" fill="#fdff00"/><rect x="387" y="163" fill="#ffed00"/><rect x="390" y="163" fill="#ffdc00"/><rect x="393" y="163" fill="#ffcc00"/><rect x="396" y="163" fill="#ffbe00"/><rect x="399" y="163" fill="#ffb100"/><rect x="246" y="166" fill="#00ff60"/><rect x="249" y="166" fill="#00ff5e"/><rect x="252" y="166" fill="#00ff5d"/><rect x="255" y="166" fill="#00ff5b"/><rect x="258" y="166" fill="#00ff5a"/><rect x="261" y="166" fill="#00ff58"/><rect x="264" y="166" fill="#00ff56"/><rect x="267" y="166" fill="#00ff55"/><rect x="270" y="166" fill="#00ff53"/><rect x="273" y="166" fill="#00ff51"/><rect x="276" y="166" fill="#00ff50"/><rect x="279" y="166" fill="#00ff4e"/><rect x="282" y="166" fill="#00ff4c"/><rect x="285" y="166" fill="#00ff4a"/><rect x="288" y="166" fill="#00ff48"/><rect x="291" y="166" fill="#00ff46"/><rect x="294" y="166" fill="#00ff44"/><rect x="297" y="166" fill="#00ff42"/><rect x="300" y="166" fill="#00ff40"/><rect x="303" y="166" fill="#00ff3e"/><rect x="306" y="166" fill="#00ff3c"/><rect x="309" y="166" fill="#00ff3a"/><rect x="312" y="166" fill="#00ff37"/><rect x="315" y="166" fill="#00ff35"/><rect x="318" y="166" fill="#00ff33"/><rect x="321" y="166" fill="#00ff30"/><rect x="324" y="166" fill="#00ff2e"/><rect x="327" y="166" fill="#00ff2b"/><rect x="330" y="166" fill="#00ff29"/><rect x="333" y="166" fill="#00ff26"/><rect x="336" y="166" fill="#05ff23"/><rect x="339" y="166" fill="#11ff20"/><rect x="342" y="166" fill="#1eff1e"/><rect x="345" y="166" fill="#2bff1b"/><rect x="348" y="166" fill="#38ff18"/><rect x="351" y="166" fill="#47ff15"/><rect x="354" y="166" fill="#56ff12"/><rect x="357" y="166" fill="#65ff0e"/><rect x="360" y="166" fill="#75ff0b"/><rect x="363" y="166" fill="#86ff08"/><rect x="366" y="166" fill="#97ff04"/><rect x="369" y="166" fill="#a9ff01"/><rect x="372" y="166" fill="#bbff00"/><rect x="375" y="166" fill="#ceff00"/><rect x="378" y="166" fill="#e2ff00"/><rect x="381" y="166" fill="#f7ff00"/><rect x="384" y="166" fill="#fff200"/><rect x="387" y="166" fill="#ffe000"/><rect x="390" y="166" fill="#ffcf00"/><rect x="393" y="166" fill="#ffc000"/><rect x="396" y="166" fill="#ffb300"/><rect x="399" y="166" fill="#ffa700"/><rect x="402" y="166" fill="#ff9c00"/><rect x="246" y="169" fill="#00ff66"/><rect x="249" y="169" fill="#00ff64"/><rect x="252" y="169" fill="#00ff63"/><rect x="255" y="169" fill="#00ff61"/><rect x="258" y="169" fill="#00ff60"/><rect x="261" y="169" fill="#00ff5e"/><rect x="264" y="169" fill="#00ff5c"/><rect x="267" y="169" fill="#00ff5b"/><rect x="270" y="169" fill="#00ff59"/><rect x="273" y="169" fill="#00ff57"/><rect x="276" y="169" fill="#00ff56"/><rect x="279" y="169" fill="#00ff54"/><rect x="282" y="169" fill="#00ff52"/><rect x="285" y="169" fill="#00ff50"/><rect x="288" y="169" fill="#00ff4e"/><rect x="291" y="169" fill="#00ff4c"/><rect x="294" y="169" fill="#00ff4a"/><rect x="297" y="169" fill="#00ff48"/><rect x="300" y="169" fill="#00ff46"/><rect x="303" y="169" fill="#00ff44"/><rect x="306" y="169" fill="#00ff42"/><rect x="309" y="169" fill="#00ff40"/><rect x="312" y="169" fill="#00ff3e"/><rect x="315" y="169" fill="#00ff3b"/><rect x="318" y="169" fill="#00ff39"/><rect x="321" y="169" fill="#00ff36"/><rect x="324" y="169" fill="#00ff34"/><rect x="327" y="169" fill="#00ff31"/><rect x="330" y="169" fill="#00ff2f"/><rect x="333" y="169" fill="#00ff2c"/><rect x="336" y="169" fill="#09ff29"/><rect x="339" y="169" fill="#16ff27"/><rect x="342" y="169" fill="#23ff24"/><rect x="345" y="169" fill="#31ff21"/><rect x="348" y="169" fill="#3fff1e"/><rect x="351" y="169" fill="#4eff1b"/><rect x="354" y="169" fill="#5dff17"/><rect x="357" y="169" fill="#6dff14"/><rect x="360" y="169" fill="#7eff11"/><rect x="363" y="169" fill="#8fff0e"/><rect x="366" y="169" fill="#a1ff0a"/><rect x="369" y="169" fill="#b4ff07"/><rect x="372" y="169" fill="#c7ff03"/><rect x="375" y="169" fill="#dcff00"/><rect x="378" y="169" fill="#f1ff00"/><rect x="381" y="169" fill="#fff800"/><rect x="384" y="169" fill="#ffe400"/><rect x="387" y="169" fill="#ffd300"/><rect x="390" y="169" fill="#ffc300"/><rect x="393" y="169" fill="#ffb500"/><rect x="396" y="169" fill="#ffa900"/><rect x="399" y="169" fill="#ff9d00"/><rect x="402" y="169" fill="#ff9300"/><rect x="405" y="169" fill="#ff8a00"/><rect x="408" y="169" fill="#ff8100"/><rect x="246" y="172" fill="#00ff6c"/><rect x="249" y="172" fill="#00ff6a"/><rect x="252" y="172" fill="#00ff69"/><rect x="255" y="172" fill="#00ff67"/><rect x="258" y="172" fill="#00ff66"/><rect x="261" y="172" fill="#00ff64"/><rect x="264" y="172" fill="#00ff63"/><rect x="267" y="172" fill="#00ff61"/><rect x="270" y="172" fill="#00ff5f"/><rect x="273" y="172" fill="#00ff5e"/><rect x="276" y="172" fill="#00ff5c"/><rect x="279" y="172" fill="#00ff5a"/><rect x="282" y="172" fill="#00ff58"/><rect x="285" y="172" fill="#00ff57"/><rect x="288" y="172" fill="#00ff55"/><rect x="291" y="172" fill="#00ff53"/><rect x="294" y="172" fill="#00ff51"/><rect x="297" y="172" fill="#00ff4f"/><rect x="300" y="172" fill="#00ff4d"/><rect x="303" y="172" fill="#00ff4b"/><rect x="306" y="172" fill="#00ff49"/><rect x="309" y="172" fill="#00ff46"/><rect x="312" y="172" fill="#00ff44"/><rect x="315" y="172" fill="#00ff42"/><rect x="318" y="172" fill="#00ff3f"/><rect x="321" y="172" fill="#00ff3d"/><rect x="324" y="172" fill="#00ff3b"/><rect x="327" y="172" fill="#00ff38"/><rect x="330" y="172" fill="#00ff35"/><rect x="333" y="172" fill="#02ff33"/><rect x="336" y="172" fill="#0eff30"/><rect x="339" y="172" fill="#1bff2d"/><rect x="342" y="172" fill="#28ff2a"/><rect x="345" y="172" fill="#37ff27"/><rect x="348" y="172" fill="#46ff24"/><rect x="351" y="172" fill="#55ff21"/><rect x="354" y="172" fill="#65ff1e"/><rect x="357" y="172" fill="#76ff1b"/><rect x="360" y="172" fill="#88ff17"/><rect x="363" y="172" fill="#9aff14"/><rect x="366" y="172" fill="#adff10"/><rect x="369" y="172" fill="#c0ff0d"/><rect x="372" y="172" fill="#d5ff09"/><rect x="375" y="172" fill="#eaff05"/><rect x="378" y="172" fill="#fffe01"/><rect x="381" y="172" fill="#ffe900"/><rect x="384" y="172" fill="#ffd600"/><rect x="387" y="172" fill="#ffc600"/><rect x="390" y="172" fill="#ffb800"/><rect x="393" y="172" fill="#ffab00"/><rect x="396" y="172" fill="#ff9f00"/><rect x="399" y="172" fill="#ff9400"/><rect x="402" y="172" fill="#ff8a00"/><rect x="405" y="172" fill="#ff8100"/><rect x="408" y="172" fill="#ff7900"/><rect x="411" y="172" fill="#ff7200"/><rect x="246" y="175" fill="#00ff72"/><rect x="249" y="175" fill="#00ff71"/><rect x="252" y="175" fill="#00ff6f"/><rect x="255" y="175" fill="#00ff6e"/><rect x="258" y="175" fill="#00ff6c"/><rect x="261" y="175" fill="#00ff6b"/><rect x="264" y="175" fill="#00ff69"/><rect x="267" y="175" fill="#00ff68"/><rect x="270" y="175" fill="#00ff66"/><rect x="273" y="175" fill="#00ff64"/><rect x="276" y="175" fill="#00ff63"/><rect x="279" y="175" fill="#00ff61"/><rect x="282" y="175" fill="#00ff5f"/><rect x="285" y="175" fill="#00ff5d"/><rect x="288" y="175" fill="#00ff5c"/><rect x="291" y="175" fill="#00ff5a"/><rect x="294" y="175" fill="#00ff58"/><rect x="297" y="175" fill="#00ff56"/><rect x="300" y="175" fill="#00ff54"/><rect x="303" y="175" fill="#00ff52"/><rect x="306" y="175" fill="#00ff50"/><rect x="309" y="175" fill="#00ff4d"/><rect x="312" y="175" fill="#00ff4b"/><rect x="315" y="175" fill="#00ff49"/><rect x="318" y="175" fill="#00ff47"/><rect x="321" y="175" fill="#00ff44"/><rect x="324" y="175" fill="#00ff42"/><rect x="327" y="175" fill="#00ff3f"/><rect x="330" y="175" fill="#00ff3c"/><rect x="333" y="175" fill="#06ff3a"/><rect x="336" y="175" fill="#13ff37"/><rect x="339" y="175" fill="#20ff34"/><rect x="342" y="175" fill="#2eff31"/><rect x="345" y="175" fill="#3dff2e"/><rect x="348" y="175" fill="#4dff2b"/><rect x="351" y="175" fill="#5dff28"/><rect x="354" y="175" fill="#6eff25"/><rect x="357" y="175" fill="#80ff22"/><rect x="360" y="175" fill="#92ff1e"/><rect x="363" y="175" fill="#a5ff1b"/><rect x="366" y="175" fill="#b9ff17"/><rect x="369" y="175" fill="#ceff13"/><rect x="372" y="175" fill="#e3ff0f"/><rect x="375" y="175" fill="#faff0b"/><rect x="378" y="175" fill="#ffee07"/><rect x="381" y="175" fill="#ffdb03"/><rect x="384" y="175" fill="#ffc900"/><rect x="387" y="175" fill="#ffba00"/><rect x="390" y="175" fill="#ffac00"/><rect x="393" y="175" fill="#ffa000"/><rect x="396" y="175" fill="#ff9500"/><rect x="399" y="175" fill="#ff8b00"/><rect x="402" y="175" fill="#ff8200"/><rect x="405" y="175" fill="#ff7900"/><rect x="408" y="175" fill="#ff7200"/><rect x="411" y="175" fill="#ff6b00"/><rect x="414" y="175" fill="#ff6400"/><rect x="249" y="178" fill="#00ff78"/><rect x="252" y="178" fill="#00ff76"/><rect x="255" y="178" fill="#00ff75"/><rect x="258" y="178" fill="#00ff73"/><rect x="261" y="178" fill="#00ff72"/><rect x="264" y="178" fill="#00ff70"/><rect x="267" y="178" fill="#00ff6f"/><rect x="270" y="178" fill="#00ff6d"/><rect x="273" y="178" fill="#00ff6b"/><rect x="276" y="178" fill="#00ff6a"/><rect x="279" y="178" fill="#00ff68"/><rect x="282" y="178" fill="#00ff66"/><rect x="285" y="178" fill="#00ff65"/><rect x="288" y="178" fill="#00ff63"/><rect x="291" y="178" fill="#00ff61"/><rect x="294" y="178" fill="#00ff5f"/><rect x="297" y="178" fill="#00ff5d"/><rect x="300" y="178" fill="#00ff5b"/><rect x="303" y="178" fill="#00ff59"/><rect x="306" y="178" fill="#00ff57"/><rect x="309" y="178" fill="#00ff55"/><rect x="312" y="178" fill="#00ff53"/><rect x="315" y="178" fill="#00ff50"/><rect x="318" y="178" fill="#00ff4e"/><rect x="321" y="178" fill="#00ff4c"/><rect x="324" y="178" fill="#00ff49"/><rect x="327" y="178" fill="#00ff47"/><rect x="330" y="178" fill="#00ff44"/><rect x="333" y="178" fill="#0aff41"/><rect x="336" y="178" fill="#18ff3f"/><rect x="339" y="178" fill="#26ff3c"/><rect x="342" y="178" fill="#35ff39"/><rect x="345" y="178" fill="#45ff36"/><rect x="348" y="178" fill="#55ff33"/><rect x="351" y="178" fill="#66ff30"/><rect x="354" y="178" fill="#78ff2c"/><rect x="357" y="178" fill="#8aff29"/><rect x="360" y="178" fill="#9eff26"/><rect x="363" y="178" fill="#b2ff22"/><rect x="366" y="178" fill="#c7ff1e"/><rect x="369" y="178" fill="#dcff1a"/><rect x="372" y="178" fill="#f3ff17"/><rect x="375" y="178" fill="#fff412"/><rect x="378" y="178" fill="#ffdf0d"/><rect x="381" y="178" fill="#ffcd08"/><rect x="384" y="178" fill="#ffbd04"/><rect x="387" y="178" fill="#ffaf01"/><rect x="390" y="178" fill="#ffa200"/><rect x="393" y="178" fill="#ff9600"/><rect x="396" y="178" fill="#ff8c00"/><rect x="399" y="178" fill="#ff8200"/><rect x="402" y="178" fill="#ff7a00"/><rect x="405" y="178" fill="#ff7200"/><rect x="408" y="178" fill="#ff6a00"/><rect x="411" y="178" fill="#ff6400"/><rect x="414" y="178" fill="#ff5d00"/><rect x="417" y="178" fill="#ff5800"/><rect x="249" y="181" fill="#00ff7f"/><rect x="252" y="181" fill="#00ff7d"/><rect x="255" y="181" fill="#00ff7c"/><rect x="258" y="181" fill="#00ff7a"/><rect x="261" y="181" fill="#00ff79"/><rect x="264" y="181" fill="#00ff78"/><rect x="267" y="181" fill="#00ff76"/><rect x="270" y="181" fill="#00ff74"/><rect x="273" y="181" fill="#00ff73"/><rect x="276" y="181" fill="#00ff71"/><rect x="279" y="181" fill="#00ff70"/><rect x="282" y="181" fill="#00ff6e"/><rect x="285" y="181" fill="#00ff6c"/><rect x="288" y="181" fill="#00ff6a"/><rect x="291" y="181" fill="#00ff69"/><rect x="294" y="181" fill="#00ff67"/><rect x="297" y="181" fill="#00ff65"/><rect x="300" y="181" fill="#00ff63"/><rect x="303" y="181" fill="#00ff61"/><rect x="306" y="181" fill="#00ff5f"/><rect x="309" y="181" fill="#00ff5d"/><rect x="312" y="181" fill="#00ff5b"/><rect x="315" y="181" fill="#00ff58"/><rect x="318" y="181" fill="#00ff56"/><rect x="321" y="181" fill="#00ff54"/><rect x="324" y="181" fill="#00ff51"/><rect x="327" y="181" fill="#00ff4f"/><rect x="330" y="181" fill="#02ff4c"/><rect x="333" y="181" fill="#0fff49"/><rect x="336" y="181" fill="#1dff47"/><rect x="339" y="181" fill="#2cff44"/><rect x="342" y="181" fill="#3cff41"/><rect x="345" y="181" fill="#4cff3e"/><rect x="348" y="181" fill="#5dff3b"/><rect x="351" y="181" fill="#6fff38"/><rect x="354" y="181" fill="#82ff35"/><rect x="357" y="181" fill="#96ff31"/><rect x="360" y="181" fill="#aaff2e"/><rect x="363" y="181" fill="#bfff2a"/><rect x="366" y="181" fill="#d5ff26"/><rect x="369" y="181" fill="#ecff22"/><rect x="372" y="181" fill="#fffa1e"/><rect x="375" y="181" fill="#ffe418"/><rect x="378" y="181" fill="#ffd112"/><rect x="381" y="181" fill="#ffc00d"/><rect x="384" y="181" fill="#ffb109"/><rect x="387" y="181" fill="#ffa306"/><rect x="390" y="181" fill="#ff9702"/><rect x="393" y="181" fill="#ff8d00"/><rect x="396" y="181" fill="#ff8300"/><rect x="399" y="181" fill="#ff7a00"/><rect x="402" y="181" fill="#ff7200"/><rect x="405" y="181" fill="#ff6a00"/><rect x="408" y="181" fill="#ff6300"/><rect x="411" y="181" fill="#ff5d00"/><rect x="414" y="181" fill="#ff5700"/><rect x="417" y="181" fill="#ff5100"/><rect x="420" y="181" fill="#ff4c00"/><rect x="249" y="184" fill="#00ff86"/><rect x="252" y="184" fill="#00ff85"/><rect x="255" y="184" fill="#00ff83"/><rect x="258" y="184" fill="#00ff82"/><rect x="261" y="184" fill="#00ff81"/><rect x="264" y="184" fill="#00ff7f"/><rect x="267" y="184" fill="#00ff7e"/><rect x="270" y="184" fill="#00ff7c"/><rect x="273" y="184" fill="#00ff7b"/><rect x="276" y="184" fill="#00ff79"/><rect x="279" y="184" fill="#00ff78"/><rect x="282" y="184" fill="#00ff76"/><rect x="285" y="184" fill="#00ff74"/><rect x="288" y="184" fill="#00ff73"/><rect x="291" y="184" fill="#00ff71"/><rect x="294" y="184" fill="#00ff6f"/><rect x="297" y="184" fill="#00ff6d"/><rect x="300" y="184" fill="#00ff6b"/><rect x="303" y="184" fill="#00ff69"/><rect x="306" y="184" fill="#00ff67"/><rect x="309" y="184" fill="#00ff65"/><rect x="312" y="184" fill="#00ff63"/><rect x="315" y="184" fill="#00ff61"/><rect x="318" y="184" fill="#00ff5f"/><rect x="321" y="184" fill="#00ff5c"/><rect x="324" y="184" fill="#00ff5a"/><rect x="327" y="184" fill="#00ff57"/><rect x="330" y="184" fill="#06ff55"/><rect x="333" y="184" fill="#14ff52"/><rect x="336" y="184" fill="#23ff4f"/><rect x="339" y="184" fill="#33ff4d"/><rect x="342" y="184" fill="#43ff4a"/><rect x="345" y="184" fill="#55ff47"/><rect x="348" y="184" fill="#67ff44"/><rect x="351" y="184" fill="#79ff41"/><rect x="354" y="184" fill="#8dff3d"/><rect x="357" y="184" fill="#a2ff3a"/><rect x="360" y="184" fill="#b7ff37"/><rect x="363" y="184" fill="#ceff33"/><rect x="366" y="184" fill="#e5ff2f"/><rect x="369" y="184" fill="#fdff2b"/><rect x="372" y="184" fill="#ffe924"/><rect x="375" y="184" fill="#ffd51d"/><rect x="378" y="184" fill="#ffc318"/><rect x="381" y="184" fill="#ffb312"/><rect x="384" y="184" fill="#ffa50e"/><rect x="387" y="184" fill="#ff990a"/><rect x="390" y="184" fill="#ff8d07"/><rect x="393" y="184" fill="#ff8304"/><rect x="396" y="184" fill="#ff7a01"/><rect x="399" y="184" fill="#ff7200"/><rect x="402" y="184" fill="#ff6a00"/><rect x="405" y="184" fill="#ff6300"/><rect x="408" y="184" fill="#ff5c00"/><rect x="411" y="184" fill="#ff5600"/><rect x="414" y="184" fill="#ff5100"/><rect x="417" y="184" fill="#ff4c00"/><rect x="420" y="184" fill="#ff4700"/><rect x="423" y="184" fill="#ff4200"/><rect x="426" y="184" fill="#ff3e00"/><rect x="249" y="187" fill="#00ff8e"/><rect x="252" y="187" fill="#00ff8d"/><rect x="255" y="187" fill="#00ff8b"/><rect x="258" y="187" fill="#00ff8a"/><rect x="261" y="187" fill="#00ff89"/><rect x="264" y="187" fill="#00ff87"/><rect x="267" y="187" fill="#00ff86"/><rect x="270" y="187" fill="#00ff85"/><rect x="273" y="187" fill="#00ff83"/><rect x="276" y="187" fill="#00ff82"/><rect x="279" y="187" fill="#00ff80"/><rect x="282" y="187" fill="#00ff7e"/><rect x="285" y="187" fill="#00ff7d"/><rect x="288" y="187" fill="#00ff7b"/><rect x="291" y="187" fill="#00ff79"/><rect x="294" y="187" fill="#00ff78"/><rect x="297" y="187" fill="#00ff76"/><rect x="300" y="187" fill="#00ff74"/><rect x="303" y="187" fill="#00ff72"/><rect x="306" y="187" fill="#00ff70"/><rect x="309" y="187" fill="#00ff6e"/><rect x="312" y="187" fill="#00ff6c"/><rect x="315" y="187" fill="#00ff6a"/><rect x="318" y="187" fill="#00ff68"/><rect x="321" y="187" fill="#00ff65"/><rect x="324" y="187" fill="#00ff63"/><rect x="327" y="187" fill="#00ff61"/><rect x="330" y="187" fill="#0bff5e"/><rect x="333" y="187" fill="#1aff5c"/><rect x="336" y="187" fill="#29ff59"/><rect x="339" y="187" fill="#3aff56"/><rect x="342" y="187" fill="#4bff53"/><rect x="345" y="187" fill="#5dff50"/><rect x="348" y="187" fill="#71ff4d"/><rect x="351" y="187" fill="#84ff4a"/><rect x="354" y="187" fill="#99ff47"/><rect x="357" y="187" fill="#afff44"/><rect x="360" y="187" fill="#c6ff40"/><rect x="363" y="187" fill="#ddff3d"/><rect x="366" y="187" fill="#f6ff39"/><rect x="369" y="187" fill="#ffef32"/><rect x="372" y="187" fill="#ffd92a"/><rect x="375" y="187" fill="#ffc623"/><rect x="378" y="187" fill="#ffb61d"/><rect x="381" y="187" fill="#ffa717"/><rect x="384" y="187" fill="#ff9a13"/><rect x="387" y="187" fill="#ff8e0f"/><rect x="390" y="187" fill="#ff840b"/><rect x="393" y="187" fill="#ff7a08"/><rect x="396" y="187" fill="#ff7205"/><rect x="399" y="187" fill="#ff6a02"/><rect x="402" y="187" fill="#ff6200"/><rect x="405" y="187" fill="#ff5c00"/><rect x="408" y="187" fill="#ff5600"/><rect x="411" y="187" fill="#ff5000"/><rect x="414" y="187" fill="#ff4b00"/><rect x="417" y="187" fill="#ff4600"/><rect x="420" y="187" fill="#ff4100"/><rect x="423" y="187" fill="#ff3d00"/><rect x="426" y="187" fill="#ff3900"/><rect x="429" y="187" fill="#ff3500"/><rect x="249" y="190" fill="#00ff96"/><rect x="252" y="190" fill="#00ff95"/><rect x="255" y="190" fill="#00ff94"/><rect x="258" y="190" fill="#00ff93"/><rect x="261" y="190" fill="#00ff91"/><rect x="264" y="190" fill="#00ff90"/><rect x="267" y="190" fill="#00ff8f"/><rect x="270" y="190" fill="#00ff8d"/><rect x="273" y="190" fill="#00ff8c"/><rect x="276" y="190" fill="#00ff8a"/><rect x="279" y="190" fill="#00ff89"/><rect x="282" y="190" fill="#00ff87"/><rect x="285" y="190" fill="#00ff86"/><rect x="288" y="190" fill="#00ff84"/><rect x="291" y="190" fill="#00ff83"/><rect x="294" y="190" fill="#00ff81"/><rect x="297" y="190" fill="#00ff7f"/><rect x="300" y="190" fill="#00ff7d"/><rect x="303" y="190" fill="#00ff7b"/><rect x="306" y="190" fill="#00ff7a"/><rect x="309" y="190" fill="#00ff78"/><rect x="312" y="190" fill="#00ff76"/><rect x="315" y="190" fill="#00ff74"/><rect x="318" y="190" fill="#00ff71"/><rect x="321" y="190" fill="#00ff6f"/><rect x="324" y="190" fill="#00ff6d"/><rect x="327" y="190" fill="#02ff6b"/><rect x="330" y="190" fill="#10ff68"/><rect x="333" y="190" fill="#20ff66"/><rect x="336" y="190" fill="#30ff63"/><rect x="339" y="190" fill="#42ff60"/><rect x="342" y="190" fill="#54ff5e"/><rect x="345" y="190" fill="#67ff5b"/><rect x="348" y="190" fill="#7bff58"/><rect x="351" y="190" fill="#90ff55"/><rect x="354" y="190" fill="#a6ff52"/><rect x="357" y="190" fill="#bdff4e"/><rect x="360" y="190" fill="#d5ff4b"/><rect x="363" y="190" fill="#efff47"/><rect x="366" y="190" fill="#fff541"/><rect x="369" y="190" fill="#ffde37"/><rect x="372" y="190" fill="#ffca2f"/><rect x="375" y="190" fill="#ffb828"/><rect x="378" y="190" fill="#ffa922"/><rect x="381" y="190" fill="#ff9b1c"/><rect x="384" y="190" fill="#ff8f17"/><rect x="387" y="190" fill="#ff8413"/><rect x="390" y="190" fill="#ff7a0f"/><rect x="393" y="190" fill="#ff720c"/><rect x="396" y="190" fill="#ff6908"/><rect x="399" y="190" fill="#ff6206"/><rect x="402" y="190" fill="#ff5b03"/><rect x="405" y="190" fill="#ff5501"/><rect x="408" y="190" fill="#ff4f00"/><rect x="411" y="190" fill="#ff4a00"/><rect x="414" y="190" fill="#ff4500"/><rect x="417" y="190" fill="#ff4000"/><rect x="420" y="190" fill="#ff3c00"/><rect x="423" y="190" fill="#ff3800"/><rect x="426" y="190" fill="#ff3400"/><rect x="429" y="190" fill="#ff3000"/><rect x="432" y="190" fill="#ff2d00"/><rect x="249" y="193" fill="#00ff9f"/><rect x="252" y="193" fill="#00ff9e"/><rect x="255" y="193" fill="#00ff9d"/><rect x="258" y="193" fill="#00ff9b"/><rect x="261" y="193" fill="#00ff9a"/><rect x="264" y="193" fill="#00ff99"/><rect x="267" y="193" fill="#00ff98"/><rect x="270" y="193" fill="#00ff96"/><rect x="273" y="193" fill="#00ff95"/><rect x="276" y="193" fill="#00ff94"/><rect x="279" y="193" fill="#00ff92"/><rect x="282" y="193" fill="#00ff91"/><rect x="285" y="193" fill="#00ff8f"/><rect x="288" y="193" fill="#00ff8e"/><rect x="291" y="193" fill="#00ff8c"/><rect x="294" y="193" fill="#00ff8b"/><rect x="297" y="193" fill="#00ff89"/><rect x="300" y="193" fill="#00ff87"/><rect x="303" y="193" fill="#00ff86"/><rect x="306" y="193" fill="#00ff84"/><rect x="309" y="193" fill="#00ff82"/><rect x="312" y="193" fill="#00ff80"/><rect x="315" y="193" fill="#00ff7e"/><rect x="318" y="193" fill="#00ff7c"/><rect x="321" y="193" fill="#00ff7a"/><rect x="324" y="193" fill="#00ff78"/><rect x="327" y="193" fill="#07ff75"/><rect x="330" y="193" fill="#16ff73"/><rect x="333" y="193" fill="#27ff71"/><rect x="336" y="193" fill="#38ff6e"/><rect x="339" y="193" fill="#4aff6c"/><rect x="342" y="193" fill="#5eff69"/><rect x="345" y="193" fill="#72ff66"/><rect x="348" y="193" fill="#87ff63"/><rect x="351" y="193" fill="#9dff60"/><rect x="354" y="193" fill="#b5ff5d"/><rect x="357" y="193" fill="#cdff5a"/><rect x="360" y="193" fill="#e7ff57"/><rect x="363" y="193" fill="#fffc52"/><rect x="366" y="193" fill="#ffe347"/><rect x="369" y="193" fill="#ffce3d"/><rect x="372" y="193" fill="#ffbc35"/><rect x="375" y="193" fill="#ffab2d"/><rect x="378" y="193" fill="#ff9d27"/><rect x="381" y="193" fill="#ff9021"/><rect x="384" y="193" fill="#ff851c"/><rect x="387" y="193" fill="#ff7b17"/><rect x="390" y="193" fill="#ff7113"/><rect x="393" y="193" fill="#ff6910"/><rect x="396" y="193" fill="#ff610c"/><rect x="399" y="193" fill="#ff5a09"/><rect x="402" y="193" fill="#ff5406"/><rect x="405" y="193" fill="#ff4e04"/><rect x="408" y="193" fill="#ff4902"/><rect x="411" y="193" fill="#ff4400"/><rect x="414" y="193" fill="#ff3f00"/><rect x="417" y="193" fill="#ff3b00"/><rect x="420" y="193" fill="#ff3600"/><rect x="423" y="193" fill="#ff3300"/><rect x="426" y="193" fill="#ff2f00"/><rect x="429" y="193" fill="#ff2c00"/><rect x="432" y="193" fill="#ff2900"/><rect x="435" y="193" fill="#ff2600"/><rect x="252" y="196" fill="#00ffa7"/><rect x="255" y="196" fill="#00ffa6"/><rect x="258" y="196" fill="#00ffa5"/><rect x="261" y="196" fill="#00ffa4"/><rect x="264" y="196" fill="#00ffa3"/><rect x="267" y="196" fill="#00ffa1"/><rect x="270" y="196" fill="#00ffa0"/><rect x="273" y="196" fill="#00ff9f"/><rect x="276" y="196" fill="#00ff9e"/><rect x="279" y="196" fill="#00ff9c"/><rect x="282" y="196" fill="#00ff9b"/><rect x="285" y="196" fill="#00ff9a"/><rect x="288" y="196" fill="#00ff98"/><rect x="291" y="196" fill="#00ff97"/><rect x="294" y="196" fill="#00ff95"/><rect x="297" y="196" fill="#00ff94"/><rect x="300" y="196" fill="#00ff92"/><rect x="303" y="196" fill="#00ff90"/><rect x="306" y="196" fill="#00ff8f"/><rect x="309" y="196" fill="#00ff8d"/><rect x="312" y="196" fill="#00ff8b"/><rect x="315" y="196" fill="#00ff89"/><rect x="318" y="196" fill="#00ff87"/><rect x="321" y="196" fill="#00ff85"/><rect x="324" y="196" fill="#00ff83"/><rect x="327" y="196" fill="#0cff81"/><rect x="330" y="196" fill="#1cff7f"/><rect x="333" y="196" fill="#2eff7d"/><rect x="336" y="196" fill="#40ff7a"/><rect x="339" y="196" fill="#54ff78"/><rect x="342" y="196" fill="#68ff75"/><rect x="345" y="196" fill="#7dff73"/><rect x="348" y="196" fill="#94ff70"/><rect x="351" y="196" fill="#acff6d"/><rect x="354" y="196" fill="#c4ff6a"/><rect x="357" y="196" fill="#deff67"/><rect x="360" y="196" fill="#faff63"/><rect x="363" y="196" fill="#ffe958"/><rect x="366" y="196" fill="#ffd34c"/><rect x="369" y="196" fill="#ffbf42"/><rect x="372" y="196" fill="#ffae3a"/><rect x="375" y="196" fill="#ff9f32"/><rect x="378" y="196" fill="#ff912c"/><rect x="381" y="196" fill="#ff8626"/><rect x="384" y="196" fill="#ff7b20"/><rect x="387" y="196" fill="#ff711c"/><rect x="390" y="196" fill="#ff6917"/><rect x="393" y="196" fill="#ff6113"/><rect x="396" y="196" fill="#ff5a10"/><rect x="399" y="196" fill="#ff530d"/><rect x="402" y="196" fill="#ff4d0a"/><rect x="405" y="196" fill="#ff4807"/><rect x="408" y="196" fill="#ff4205"/><rect x="411" y="196" fill="#ff3e03"/><rect x="414" y="196" fill="#ff3901"/><rect x="417" y="196" fill="#ff3500"/><rect x="420" y="196" fill="#ff3100"/><rect x="423" y="196" fill="#ff2e00"/><rect x="426" y="196" fill="#ff2a00"/><rect x="429" y="196" fill="#ff2700"/><rect x="432" y="196" fill="#ff2400"/><rect x="435" y="196" fill="#ff2100"/><rect x="438" y="196" fill="#ff1f00"/><rect x="252" y="199" fill="#00ffb1"/><rect x="255" y="199" fill="#00ffb0"/><rect x="258" y="199" fill="#00ffaf"/><rect x="261" y="199" fill="#00ffae"/><rect x="264" y="199" fill="#00ffad"/><rect x="267" y="199" fill="#00ffac"/><rect x="270" y="199" fill="#00ffab"/><rect x="273" y="199" fill="#00ffa9"/><rect x="276" y="199" fill="#00ffa8"/><rect x="279" y="199" fill="#00ffa7"/><rect x="282" y="199" fill="#00ffa6"/><rect x="285" y="199" fill="#00ffa5"/><rect x="288" y="199" fill="#00ffa3"/><rect x="291" y="199" fill="#00ffa2"/><rect x="294" y="199" fill="#00ffa1"/><rect x="297" y="199" fill="#00ff9f"/><rect x="300" y="199" fill="#00ff9e"/><rect x="303" y="199" fill="#00ff9c"/><rect x="306" y="199" fill="#00ff9b"/><rect x="309" y="199" fill="#00ff99"/><rect x="312" y="199" fill="#00ff97"/><rect x="315" y="199" fill="#00ff95"/><rect x="318" y="199" fill="#00ff94"/><rect x="321" y="199" fill="#00ff92"/><rect x="324" y="199" fill="#02ff90"/><rect x="327" y="199" fill="#12ff8e"/><rect x="330" y="199" fill="#23ff8c"/><rect x="333" y="199" fill="#36ff8a"/><rect x="336" y="199" fill="#49ff87"/><rect x="339" y="199" fill="#5eff85"/><rect x="342" y="199" fill="#73ff83"/><rect x="345" y="199" fill="#8aff80"/><rect x="348" y="199" fill="#a2ff7e"/><rect x="351" y="199" fill="#bbff7b"/><rect x="354" y="199" fill="#d6ff78"/><rect x="357" y="199" fill="#f2ff75"/><rect x="360" y="199" fill="#fff06b"/><rect x="363" y="199" fill="#ffd75d"/><rect x="366" y="199" fill="#ffc252"/><rect x="369" y="199" fill="#ffb048"/><rect x="372" y="199" fill="#ffa03f"/><rect x="375" y="199" fill="#ff9337"/><rect x="378" y="199" fill="#ff8630"/><rect x="381" y="199" fill="#ff7b2a"/><rect x="384" y="199" fill="#ff7125"/><rect x="387" y="199" fill="#ff6820"/><rect x="390" y="199" fill="#ff601b"/><rect x="393" y="199" fill="#ff5917"/><rect x="396" y="199" fill="#ff5214"/><rect x="399" y="199" fill="#ff4c10"/><rect x="402" y="199" fill="#ff470d"/><rect x="405" y="199" fill="#ff410b"/><rect x="408" y="199" fill="#ff3c08"/><rect x="411" y="199" fill="#ff3806"/><rect x="414" y="199" fill="#ff3403"/><rect x="417" y="199" fill="#ff3001"/><rect x="420" y="199" fill="#ff2c00"/><rect x="423" y="199" fill="#ff2900"/><rect x="426" y="199" fill="#ff2600"/><rect x="429" y="199" fill="#ff2300"/><rect x="432" y="199" fill="#ff2000"/><rect x="435" y="199" fill="#ff1d00"/><rect x="438" y="199" fill="#ff1b00"/><rect x="441" y="199" fill="#ff1800"/><rect x="444" y="199" fill="#ff1600"/><rect x="252" y="202" fill="#00ffbb"/><rect x="255" y="202" fill="#00ffba"/><rect x="258" y="202" fill="#00ffb9"/><rect x="261" y="202" fill="#00ffb9"/><rect x="264" y="202" fill="#00ffb8"/><rect x="267" y="202" fill="#00ffb7"/><rect x="270" y="202" fill="#00ffb6"/><rect x="273" y="202" fill="#00ffb5"/><rect x="276" y="202" fill="#00ffb4"/><rect x="279" y="202" fill="#00ffb3"/><rect x="282" y="202" fill="#00ffb1"/><rect x="285" y="202" fill="#00ffb0"/><rect x="288" y="202" fill="#00ffaf"/><rect x="291" y="202" fill="#00ffae"/><rect x="294" y="202" fill="#00ffad"/><rect x="297" y="202" fill="#00ffab"/><rect x="300" y="202" fill="#00ffaa"/><rect x="303" y="202" fill="#00ffa9"/><rect x="306" y="202" fill="#00ffa7"/><rect x="309" y="202" fill="#00ffa6"/><rect x="312" y="202" fill="#00ffa4"/><rect x="315" y="202" fill="#00ffa3"/><rect x="318" y="202" fill="#00ffa1"/><rect x="321" y="202" fill="#00ff9f"/><rect x="324" y="202" fill="#07ff9e"/><rect x="327" y="202" fill="#18ff9c"/><rect x="330" y="202" fill="#2bff9a"/><rect x="333" y="202" fill="#3eff98"/><rect x="336" y="202" fill="#53ff96"/><rect x="339" y="202" fill="#69ff94"/><rect x="342" y="202" fill="#80ff91"/><rect x="345" y="202" fill="#98ff8f"/><rect x="348" y="202" fill="#b2ff8d"/><rect x="351" y="202" fill="#cdff8a"/><rect x="354" y="202" fill="#e9ff87"/><rect x="357" y="202" fill="#fff781"/><rect x="360" y="202" fill="#ffdd70"/><rect x="363" y="202" fill="#ffc663"/><rect x="366" y="202" fill="#ffb357"/><rect x="369" y="202" fill="#ffa24c"/><rect x="372" y="202" fill="#ff9444"/><rect x="375" y="202" fill="#ff873c"/><rect x="378" y="202" fill="#ff7c35"/><rect x="381" y="202" fill="#ff712e"/><rect x="384" y="202" fill="#ff6829"/><rect x="387" y="202" fill="#ff6024"/><rect x="390" y="202" fill="#ff581f"/><rect x="393" y="202" fill="#ff511b"/><rect x="396" y="202" fill="#ff4b17"/><rect x="399" y="202" fill="#ff4514"/><rect x="402" y="202" fill="#ff4011"/><rect x="405" y="202" fill="#ff3b0e"/><rect x="408" y="202" fill="#ff370b"/><rect x="411" y="202" fill="#ff3209"/><rect x="414" y="202" fill="#ff2e06"/><rect x="417" y="202" fill="#ff2b04"/><rect x="420" y="202" fill="#ff2702"/><rect x="423" y="202" fill="#ff2401"/><rect x="426" y="202" fill="#ff2100"/><rect x="429" y="202" fill="#ff1e00"/><rect x="432" y="202" fill="#ff1c00"/><rect x="435" y="202" fill="#ff1900"/><rect x="438" y="202" fill="#ff1700"/><rect x="441" y="202" fill="#ff1500"/><rect x="444" y="202" fill="#ff1200"/><rect x="447" y="202" fill="#ff1000"/><rect x="252" y="205" fill="#00ffc6"/><rect x="255" y="205" fill="#00ffc6"/><rect x="258" y="205" fill="#00ffc5"/><rect x="261" y="205" fill="#00ffc4"/><rect x="264" y="205" fill="#00ffc3"/><rect x="267" y="205" fill="#00ffc2"/><rect x="270" y="205" fill="#00ffc1"/><rect x="273" y="205" fill="#00ffc1"/><rect x="276" y="205" fill="#00ffc0"/><rect x="279" y="205" fill="#00ffbf"/><rect x="282" y="205" fill="#00ffbe"/><rect x="285" y="205" fill="#00ffbd"/><rect x="288" y="205" fill="#00ffbc"/><rect x="291" y="205" fill="#00ffbb"/><rect x="294" y="205" fill="#00ffba"/><rect x="297" y="205" fill="#00ffb9"/><rect x="300" y="205" fill="#00ffb7"/><rect x="303" y="205" fill="#00ffb6"/><rect x="306" y="205" fill="#00ffb5"/><rect x="309" y="205" fill="#00ffb4"/><rect x="312" y="205" fill="#00ffb2"/><rect x="315" y="205" fill="#00ffb1"/><rect x="318" y="205" fill="#00ffb0"/><rect x="321" y="205" fill="#00ffae"/><rect x="324" y="205" fill="#0dffac"/><rect x="327" y="205" fill="#20ffab"/><rect x="330" y="205" fill="#33ffa9"/><rect x="333" y="205" fill="#48ffa7"/><rect x="336" y="205" fill="#5effa6"/><rect x="339" y="205" fill="#75ffa4"/><rect x="342" y="205" fill="#8effa2"/><rect x="345" y="205" fill="#a8ffa0"/><rect x="348" y="205" fill="#c3ff9d"/><rect x="351" y="205" fill="#e0ff9b"/><rect x="354" y="205" fill="#feff99"/><rect x="357" y="205" fill="#ffe386"/><rect x="360" y="205" fill="#ffcb75"/><rect x="363" y="205" fill="#ffb668"/><rect x="366" y="205" fill="#ffa55c"/><rect x="369" y="205" fill="#ff9551"/><rect x="372" y="205" fill="#ff8848"/><rect x="375" y="205" fill="#ff7c40"/><rect x="378" y="205" fill="#ff7139"/><rect x="381" y="205" fill="#ff6833"/><rect x="384" y="205" fill="#ff5f2d"/><rect x="387" y="205" fill="#ff5728"/><rect x="390" y="205" fill="#ff5023"/><rect x="393" y="205" fill="#ff4a1f"/><rect x="396" y="205" fill="#ff441b"/><rect x="399" y="205" fill="#ff3f17"/><rect x="402" y="205" fill="#ff3a14"/><rect x="405" y="205" fill="#ff3511"/><rect x="408" y="205" fill="#ff310e"/><rect x="411" y="205" fill="#ff2d0c"/><rect x="414" y="205" fill="#ff2909"/><rect x="417" y="205" fill="#ff2607"/><rect x="420" y="205" fill="#ff2305"/><rect x="423" y="205" fill="#ff2003"/><rect x="426" y="205" fill="#ff1d01"/><rect x="429" y="205" fill="#ff1a00"/><rect x="432" y="205" fill="#ff1800"/><rect x="435" y="205" fill="#ff1500"/><rect x="438" y="205" fill="#ff1300"/><rect x="441" y="205" fill="#ff1100"/><rect x="444" y="205" fill="#ff0f00"/><rect x="447" y="205" fill="#ff0d00"/><rect x="450" y="205" fill="#ff0b00"/><rect x="252" y="208" fill="#00ffd2"/><rect x="255" y="208" fill="#00ffd1"/><rect x="258" y="208" fill="#00ffd1"/><rect x="261" y="208" fill="#00ffd0"/><rect x="264" y="208" fill="#00ffcf"/><rect x="267" y="208" fill="#00ffcf"/><rect x="270" y="208" fill="#00ffce"/><rect x="273" y="208" fill="#00ffcd"/><rect x="276" y="208" fill="#00ffcd"/><rect x="279" y="208" fill="#00ffcc"/><rect x="282" y="208" fill="#00ffcb"/><rect x="285" y="208" fill="#00ffca"/><rect x="288" y="208" fill="#00ffc9"/><rect x="291" y="208" fill="#00ffc9"/><rect x="294" y="208" fill="#00ffc8"/><rect x="297" y="208" fill="#00ffc7"/><rect x="300" y="208" fill="#00ffc6"/><rect x="303" y="208" fill="#00ffc5"/><rect x="306" y="208" fill="#00ffc4"/><rect x="309" y="208" fill="#00ffc3"/><rect x="312" y="208" fill="#00ffc2"/><rect x="315" y="208" fill="#00ffc1"/><rect x="318" y="208" fill="#00ffbf"/><rect x="321" y="208" fill="#02ffbe"/><rect x="324" y="208" fill="#14ffbd"/><rect x="327" y="208" fill="#27ffbb"/><rect x="330" y="208" fill="#3cffba"/><rect x="333" y="208" fill="#52ffb9"/><rect x="336" y="208" fill="#6affb7"/><rect x="339" y="208" fill="#83ffb5"/><rect x="342" y="208" fill="#9dffb4"/><rect x="345" y="208" fill="#b9ffb2"/><rect x="348" y="208" fill="#d6ffb0"/><rect x="351" y="208" fill="#f5ffae"/><rect x="354" y="208" fill="#ffea9e"/><rect x="357" y="208" fill="#ffd08b"/><rect x="360" y="208" fill="#ffba7a"/><rect x="363" y="208" fill="#ffa76c"/><rect x="366" y="208" fill="#ff9760"/><rect x="369" y="208" fill="#ff8956"/><rect x="372" y="208" fill="#ff7c4d"/><rect x="375" y="208" fill="#ff7144"/><rect x="378" y="208" fill="#ff673d"/><rect x="381" y="208" fill="#ff5f37"/><rect x="384" y="208" fill="#ff5731"/><rect x="387" y="208" fill="#ff4f2c"/><rect x="390" y="208" fill="#ff4927"/><rect x="393" y="208" fill="#ff4322"/><rect x="396" y="208" fill="#ff3d1e"/><rect x="399" y="208" fill="#ff381b"/><rect x="402" y="208" fill="#ff3417"/><rect x="405" y="208" fill="#ff2f14"/><rect x="408" y="208" fill="#ff2b11"/><rect x="411" y="208" fill="#ff280f"/><rect x="414" y="208" fill="#ff240c"/><rect x="417" y="208" fill="#ff210a"/><rect x="420" y="208" fill="#ff1e08"/><rect x="423" y="208" fill="#ff1b06"/><rect x="426" y="208" fill="#ff1904"/><rect x="429" y="208" fill="#ff1602"/><rect x="432" y="208" fill="#ff1400"/><rect x="435" y="208" fill="#ff1100"/><rect x="438" y="208" fill="#ff0f00"/><rect x="441" y="208" fill="#ff0d00"/><rect x="444" y="208" fill="#ff0c00"/><rect x="447" y="208" fill="#ff0a00"/><rect x="450" y="208" fill="#ff0800"/><rect x="453" y="208" fill="#ff0700"/><rect x="252" y="211" fill="#00ffde"/><rect x="255" y="211" fill="#00ffde"/><rect x="258" y="211" fill="#00ffde"/><rect x="261" y="211" fill="#00ffdd"/><rect x="264" y="211" fill="#00ffdd"/><rect x="267" y="211" fill="#00ffdc"/><rect x="270" y="211" fill="#00ffdc"/><rect x="273" y="211" fill="#00ffdb"/><rect x="276" y="211" fill="#00ffdb"/><rect x="279" y="211" fill="#00ffda"/><rect x="282" y="211" fill="#00ffd9"/><rect x="285" y="211" fill="#00ffd9"/><rect x="288" y="211" fill="#00ffd8"/><rect x="291" y="211" fill="#00ffd8"/><rect x="294" y="211" fill="#00ffd7"/><rect x="297" y="211" fill="#00ffd6"/><rect x="300" y="211" fill="#00ffd6"/><rect x="303" y="211" fill="#00ffd5"/><rect x="306" y="211" fill="#00ffd4"/><rect x="309" y="211" fill="#00ffd3"/><rect x="312" y="211" fill="#00ffd2"/><rect x="315" y="211" fill="#00ffd2"/><rect x="318" y="211" fill="#00ffd1"/><rect x="321" y="211" fill="#08ffd0"/><rect x="324" y="211" fill="#1bffcf"/><rect x="327" y="211" fill="#30ffce"/><rect x="330" y="211" fill="#46ffcd"/><rect x="333" y="211" fill="#5effcc"/><rect x="336" y="211" fill="#77ffca"/><rect x="339" y="211" fill="#92ffc9"/><rect x="342" y="211" fill="#aeffc8"/><rect x="345" y="211" fill="#ccffc7"/><rect x="348" y="211" fill="#ecffc5"/><rect x="351" y="211" fill="#fff2b9"/><rect x="354" y="211" fill="#ffd5a2"/><rect x="357" y="211" fill="#ffbe8f"/><rect x="360" y="211" fill="#ffaa7f"/><rect x="363" y="211" fill="#ff9871"/><rect x="366" y="211" fill="#ff8a65"/><rect x="369" y="211" fill="#ff7d5a"/><rect x="372" y="211" fill="#ff7151"/><rect x="375" y="211" fill="#ff6749"/><rect x="378" y="211" fill="#ff5e41"/><rect x="381" y="211" fill="#ff563b"/><rect x="384" y="211" fill="#ff4e35"/><rect x="387" y="211" fill="#ff482f"/><rect x="390" y="211" fill="#ff422a"/><rect x="393" y="211" fill="#ff3c26"/><rect x="396" y="211" fill="#ff3722"/><rect x="399" y="211" fill="#ff321e"/><rect x="402" y="211" fill="#ff2e1a"/><rect x="405" y="211" fill="#ff2a17"/><rect x="408" y="211" fill="#ff2614"/><rect x="411" y="211" fill="#ff2311"/><rect x="414" y="211" fill="#ff1f0f"/><rect x="417" y="211" fill="#ff1c0c"/><rect x="420" y="211" fill="#ff190a"/><rect x="423" y="211" fill="#ff1708"/><rect x="426" y="211" fill="#ff1406"/><rect x="429" y="211" fill="#ff1204"/><rect x="432" y="211" fill="#ff1003"/><rect x="435" y="211" fill="#ff0e01"/><rect x="438" y="211" fill="#ff0c00"/><rect x="441" y="211" fill="#ff0a00"/><rect x="444" y="211" fill="#ff0800"/><rect x="447" y="211" fill="#ff0700"/><rect x="450" y="211" fill="#ff0500"/><rect x="453" y="211" fill="#ff0400"/><rect x="456" y="211" fill="#ff0200"/><rect x="255" y="214" fill="#00ffec"/><rect x="258" y="214" fill="#00ffeb"/><rect x="261" y="214" fill="#00ffeb"/><rect x="264" y="214" fill="#00ffeb"/><rect x="267" y="214" fill="#00ffea"/><rect x="270" y="214" fill="#00ffea"/><rect x="273" y="214" fill="#00ffea"/><rect x="276" y="214" fill="#00ffea"/><rect x="279" y="214" fill="#00ffe9"/><rect x="282" y="214" fill="#00ffe9"/><rect x="285" y="214" fill="#00ffe9"/><rect x="288" y="214" fill="#00ffe8"/><rect x="291" y="214" fill="#00ffe8"/><rect x="294" y="214" fill="#00ffe7"/><rect x="297" y="214" fill="#00ffe7"/><rect x="300" y="214" fill="#00ffe7"/><rect x="303" y="214" fill="#00ffe6"/><rect x="306" y="214" fill="#00ffe6"/><rect x="309" y="214" fill="#00ffe5"/><rect x="312" y="214" fill="#00ffe5"/><rect x="315" y="214" fill="#00ffe4"/><rect x="318" y="214" fill="#00ffe4"/><rect x="321" y="214" fill="#0fffe3"/><rect x="324" y="214" fill="#24ffe3"/><rect x="327" y="214" fill="#3affe2"/><rect x="330" y="214" fill="#52ffe1"/><rect x="333" y="214" fill="#6bffe1"/><rect x="336" y="214" fill="#86ffe0"/><rect x="339" y="214" fill="#a3ffdf"/><rect x="342" y="214" fill="#c1ffde"/><rect x="345" y="214" fill="#e1ffde"/><rect x="348" y="214" fill="#fffad9"/><rect x="351" y="214" fill="#ffdbbd"/><rect x="354" y="214" fill="#ffc2a6"/><rect x="357" y="214" fill="#ffac93"/><rect x="360" y="214" fill="#ff9a83"/><rect x="363" y="214" fill="#ff8b75"/><rect x="366" y="214" fill="#ff7d69"/><rect x="369" y="214" fill="#ff715e"/><rect x="372" y="214" fill="#ff6655"/><rect x="375" y="214" fill="#ff5d4d"/><rect x="378" y="214" fill="#ff5545"/><rect x="381" y="214" fill="#ff4d3e"/><rect x="384" y="214" fill="#ff4638"/><rect x="387" y="214" fill="#ff4033"/><rect x="390" y="214" fill="#ff3a2e"/><rect x="393" y="214" fill="#ff3529"/><rect x="396" y="214" fill="#ff3025"/><rect x="399" y="214" fill="#ff2c21"/><rect x="402" y="214" fill="#ff281e"/><rect x="405" y="214" fill="#ff241a"/><rect x="408" y="214" fill="#ff2117"/><rect x="411" y="214" fill="#ff1e14"/><rect x="414" y="214" fill="#ff1b12"/><rect x="417" y="214" fill="#ff180f"/><rect x="420" y="214" fill="#ff150d"/><rect x="423" y="214" fill="#ff130b"/><rect x="426" y="214" fill="#ff1009"/><rect x="429" y="214" fill="#ff0e07"/><rect x="432" y="214" fill="#ff0c05"/><rect x="435" y="214" fill="#ff0a03"/><rect x="438" y="214" fill="#ff0802"/><rect x="441" y="214" fill="#ff0700"/><rect x="444" y="214" fill="#ff0500"/><rect x="447" y="214" fill="#ff0300"/><rect x="450" y="214" fill="#ff0200"/><rect x="453" y="214" fill="#ff0100"/><rect x="456" y="214" fill="#ff0000"/><rect x="459" y="214" fill="#ff0000"/><rect x="462" y="214" fill="#ff0000"/><rect x="255" y="217" fill="#00fffa"/><rect x="258" y="217" fill="#00fffa"/><rect x="261" y="217" fill="#00fffa"/><rect x="264" y="217" fill="#00fffa"/><rect x="267" y="217" fill="#00fffa"/><rect x="270" y="217" fill="#00fffa"/><rect x="273" y="217" fill="#00fffa"/><rect x="276" y="217" fill="#00fffa"/><rect x="279" y="217" fill="#00fffa"/><rect x="282" y="217" fill="#00fffa"/><rect x="285" y="217" fill="#00fff9"/><rect x="288" y="217" fill="#00fff9"/><rect x="291" y="217" fill="#00fff9"/><rect x="294" y="217" fill="#00fff9"/><rect x="297" y="217" fill="#00fff9"/><rect x="300" y="217" fill="#00fff9"/><rect x="303" y="217" fill="#00fff9"/><rect x="306" y="217" fill="#00fff9"/><rect x="309" y="217" fill="#00fff9"/><rect x="312" y="217" fill="#00fff9"/><rect x="315" y="217" fill="#00fff9"/><rect x="318" y="217" fill="#02fff9"/><rect x="321" y="217" fill="#16fff9"/><rect x="324" y="217" fill="#2dfff9"/><rect x="327" y="217" fill="#45fff8"/><rect x="330" y="217" fill="#5efff8"/><rect x="333" y="217" fill="#7afff8"/><rect x="336" y="217" fill="#97fff8"/><rect x="339" y="217" fill="#b6fff8"/><rect x="342" y="217" fill="#d7fff8"/><rect x="345" y="217" fill="#fafff8"/><rect x="348" y="217" fill="#ffe2dc"/><rect x="351" y="217" fill="#ffc7c1"/><rect x="354" y="217" fill="#ffb0aa"/><rect x="357" y="217" fill="#ff9c97"/><rect x="360" y="217" fill="#ff8c87"/><rect x="363" y="217" fill="#ff7d79"/><rect x="366" y="217" fill="#ff716d"/><rect x="369" y="217" fill="#ff6662"/><rect x="372" y="217" fill="#ff5c59"/><rect x="375" y="217" fill="#ff5451"/><rect x="378" y="217" fill="#ff4c49"/><rect x="381" y="217" fill="#ff4542"/><rect x="384" y="217" fill="#ff3f3c"/><rect x="387" y="217" fill="#ff3936"/><rect x="390" y="217" fill="#ff3431"/><rect x="393" y="217" fill="#ff2f2d"/><rect x="396" y="217" fill="#ff2a28"/><rect x="399" y="217" fill="#ff2624"/><rect x="402" y="217" fill="#ff2221"/><rect x="405" y="217" fill="#ff1f1d"/><rect x="408" y="217" fill="#ff1c1a"/><rect x="411" y="217" fill="#ff1917"/><rect x="414" y="217" fill="#ff1614"/><rect x="417" y="217" fill="#ff1312"/><rect x="420" y="217" fill="#ff1110"/><rect x="423" y="217" fill="#ff0f0d"/><rect x="426" y="217" fill="#ff0c0b"/><rect x="429" y="217" fill="#ff0a09"/><rect x="432" y="217" fill="#ff0807"/><rect x="435" y="217" fill="#ff0706"/><rect x="438" y="217" fill="#ff0504"/><rect x="441" y="217" fill="#ff0302"/><rect x="444" y="217" fill="#ff0201"/><rect x="447" y="217" fill="#ff0100"/><rect x="450" y="217" fill="#ff0000"/><rect x="453" y="217" fill="#ff0000"/><rect x="456" y="217" fill="#ff0000"/><rect x="459" y="217" fill="#ff0000"/><rect x="462" y="217" fill="#ff0000"/><rect x="465" y="217" fill="#ff0000"/><rect x="255" y="220" fill="#00f5ff"/><rect x="258" y="220" fill="#00f5ff"/><rect x="261" y="220" fill="#00f5ff"/><rect x="264" y="220" fill="#00f4ff"/><rect x="267" y="220" fill="#00f4ff"/><rect x="270" y="220" fill="#00f4ff"/><rect x="273" y="220" fill="#00f4ff"/><rect x="276" y="220" fill="#00f3ff"/><rect x="279" y="220" fill="#00f3ff"/><rect x="282" y="220" fill="#00f3ff"/><rect x="285" y="220" fill="#00f3ff"/><rect x="288" y="220" fill="#00f2ff"/><rect x="291" y="220" fill="#00f2ff"/><rect x="294" y="220" fill="#00f2ff"/><rect x="297" y="220" fill="#00f2ff"/><rect x="300" y="220" fill="#00f1ff"/><rect x="303" y="220" fill="#00f1ff"/><rect x="306" y="220" fill="#00f1ff"/><rect x="309" y="220" fill="#00f0ff"/><rect x="312" y="220" fill="#00f0ff"/><rect x="315" y="220" fill="#00efff"/><rect x="318" y="220" fill="#09efff"/><rect x="321" y="220" fill="#1defff"/><rect x="324" y="220" fill="#33eeff"/><rect x="327" y="220" fill="#4beeff"/><rect x="330" y="220" fill="#65edff"/><rect x="333" y="220" fill="#80edff"/><rect x="336" y="220" fill="#9decff"/><rect x="339" y="220" fill="#bcecff"/><rect x="342" y="220" fill="#dcebff"/><rect x="345" y="220" fill="#ffeaff"/><rect x="348" y="220" fill="#ffccdf"/><rect x="351" y="220" fill="#ffb3c4"/><rect x="354" y="220" fill="#ff9eae"/><rect x="357" y="220" fill="#ff8d9b"/><rect x="360" y="220" fill="#ff7e8b"/><rect x="363" y="220" fill="#ff717d"/><rect x="366" y="220" fill="#ff6571"/><rect x="369" y="220" fill="#ff5b66"/><rect x="372" y="220" fill="#ff535d"/><rect x="375" y="220" fill="#ff4b54"/><rect x="378" y="220" fill="#ff434d"/><rect x="381" y="220" fill="#ff3d46"/><rect x="384" y="220" fill="#ff3740"/><rect x="387" y="220" fill="#ff323a"/><rect x="390" y="220" fill="#ff2d35"/><rect x="393" y="220" fill="#ff2830"/><rect x="396" y="220" fill="#ff242c"/><rect x="399" y="220" fill="#ff2127"/><rect x="402" y="220" fill="#ff1d24"/><rect x="405" y="220" fill="#ff1a20"/><rect x="408" y="220" fill="#ff171d"/><rect x="411" y="220" fill="#ff141a"/><rect x="414" y="220" fill="#ff1117"/><rect x="417" y="220" fill="#ff0f15"/><rect x="420" y="220" fill="#ff0d12"/><rect x="423" y="220" fill="#ff0b10"/><rect x="426" y="220" fill="#ff090e"/><rect x="429" y="220" fill="#ff070c"/><rect x="432" y="220" fill="#ff050a"/><rect x="435" y="220" fill="#ff0308"/><rect x="438" y="220" fill="#ff0206"/><rect x="441" y="220" fill="#ff0005"/><rect x="444" y="220" fill="#ff0003"/><rect x="447" y="220" fill="#ff0002"/><rect x="450" y="220" fill="#ff0000"/><rect x="453" y="220" fill="#ff0000"/><rect x="456" y="220" fill="#ff0000"/><rect x="459" y="220" fill="#ff0000"/><rect x="462" y="220" fill="#ff0000"/><rect x="465" y="220" fill="#ff0000"/><rect x="468" y="220" fill="#ff0000"/><rect x="255" y="223" fill="#00e6ff"/><rect x="258" y="223" fill="#00e6ff"/><rect x="261" y="223" fill="#00e6ff"/><rect x="264" y="223" fill="#00e5ff"/><rect x="267" y="223" fill="#00e5ff"/><rect x="270" y="223" fill="#00e4ff"/><rect x="273" y="223" fill="#00e4ff"/><rect x="276" y="223" fill="#00e3ff"/><rect x="279" y="223" fill="#00e3ff"/><rect x="282" y="223" fill="#00e2ff"/><rect x="285" y="223" fill="#00e2ff"/><rect x="288" y="223" fill="#00e1ff"/><rect x="291" y="223" fill="#00e1ff"/><rect x="294" y="223" fill="#00e0ff"/><rect x="297" y="223" fill="#00dfff"/><rect x="300" y="223" fill="#00dfff"/><rect x="303" y="223" fill="#00deff"/><rect x="306" y="223" fill="#00ddff"/><rect x="309" y="223" fill="#00ddff"/><rect x="312" y="223" fill="#00dcff"/><rect x="315" y="223" fill="#00dbff"/><rect x="318" y="223" fill="#0edaff"/><rect x="321" y="223" fill="#23d9ff"/><rect x="324" y="223" fill="#39d8ff"/><rect x="327" y="223" fill="#50d7ff"/><rect x="330" y="223" fill="#69d6ff"/><rect x="333" y="223" fill="#83d5ff"/><rect x="336" y="223" fill="#9fd4ff"/><rect x="339" y="223" fill="#bcd3ff"/><rect x="342" y="223" fill="#dcd2ff"/><rect x="345" y="223" fill="#fdd1ff"/><rect x="348" y="223" fill="#ffb7e1"/><rect x="351" y="223" fill="#ffa1c7"/><rect x="354" y="223" fill="#ff8eb2"/><rect x="357" y="223" fill="#ff7e9f"/><rect x="360" y="223" fill="#ff718f"/><rect x="363" y="223" fill="#ff6581"/><rect x="366" y="223" fill="#ff5a75"/><rect x="369" y="223" fill="#ff516a"/><rect x="372" y="223" fill="#ff4961"/><rect x="375" y="223" fill="#ff4258"/><rect x="378" y="223" fill="#ff3b50"/><rect x="381" y="223" fill="#ff3549"/><rect x="384" y="223" fill="#ff3043"/><rect x="387" y="223" fill="#ff2b3d"/><rect x="390" y="223" fill="#ff2738"/><rect x="393" y="223" fill="#ff2233"/><rect x="396" y="223" fill="#ff1f2f"/><rect x="399" y="223" fill="#ff1b2b"/><rect x="402" y="223" fill="#ff1827"/><rect x="405" y="223" fill="#ff1523"/><rect x="408" y="223" fill="#ff1220"/><rect x="411" y="223" fill="#ff0f1d"/><rect x="414" y="223" fill="#ff0d1a"/><rect x="417" y="223" fill="#ff0b17"/><rect x="420" y="223" fill="#ff0915"/><rect x="423" y="223" fill="#ff0712"/><rect x="426" y="223" fill="#ff0510"/><rect x="429" y="223" fill="#ff030e"/><rect x="432" y="223" fill="#ff020c"/><rect x="435" y="223" fill="#ff000a"/><rect x="438" y="223" fill="#ff0008"/><rect x="441" y="223" fill="#ff0007"/><rect x="444" y="223" fill="#ff0005"/><rect x="447" y="223" fill="#ff0004"/><rect x="450" y="223" fill="#ff0002"/><rect x="453" y="223" fill="#ff0001"/><rect x="456" y="223" fill="#ff0000"/><rect x="459" y="223" fill="#ff0000"/><rect x="462" y="223" fill="#ff0000"/><rect x="465" y="223" fill="#ff0000"/><rect x="468" y="223" fill="#ff0000"/><rect x="471" y="223" fill="#ff0000"/><rect x="258" y="226" fill="#00d8ff"/><rect x="261" y="226" fill="#00d7ff"/><rect x="264" y="226" fill="#00d7ff"/><rect x="267" y="226" fill="#00d6ff"/><rect x="270" y="226" fill="#00d5ff"/><rect x="273" y="226" fill="#00d5ff"/><rect x="276" y="226" fill="#00d4ff"/><rect x="279" y="226" fill="#00d3ff"/><rect x="282" y="226" fill="#00d3ff"/><rect x="285" y="226" fill="#00d2ff"/><rect x="288" y="226" fill="#00d1ff"/><rect x="291" y="226" fill="#00d0ff"/><rect x="294" y="226" fill="#00cfff"/><rect x="297" y="226" fill="#00ceff"/><rect x="300" y="226" fill="#00cdff"/><rect x="303" y="226" fill="#00ccff"/><rect x="306" y="226" fill="#00cbff"/><rect x="309" y="226" fill="#00caff"/><rect x="312" y="226" fill="#00c9ff"/><rect x="315" y="226" fill="#02c8ff"/><rect x="318" y="226" fill="#14c7ff"/><rect x="321" y="226" fill="#28c5ff"/><rect x="324" y="226" fill="#3dc4ff"/><rect x="327" y="226" fill="#54c3ff"/><rect x="330" y="226" fill="#6cc1ff"/><rect x="333" y="226" fill="#86c0ff"/><rect x="336" y="226" fill="#a1beff"/><rect x="339" y="226" fill="#bdbdff"/><rect x="342" y="226" fill="#dbbbff"/><rect x="345" y="226" fill="#fbb9ff"/><rect x="348" y="226" fill="#ffa4e4"/><rect x="351" y="226" fill="#ff90ca"/><rect x="354" y="226" fill="#ff7fb5"/><rect x="357" y="226" fill="#ff71a3"/><rect x="360" y="226" fill="#ff6493"/><rect x="363" y="226" fill="#ff5985"/><rect x="366" y="226" fill="#ff5079"/><rect x="369" y="226" fill="#ff486e"/><rect x="372" y="226" fill="#ff4064"/><rect x="375" y="226" fill="#ff395c"/><rect x="378" y="226" fill="#ff3354"/><rect x="381" y="226" fill="#ff2e4d"/><rect x="384" y="226" fill="#ff2946"/><rect x="387" y="226" fill="#ff2441"/><rect x="390" y="226" fill="#ff203b"/><rect x="393" y="226" fill="#ff1d36"/><rect x="396" y="226" fill="#ff1932"/><rect x="399" y="226" fill="#ff162e"/><rect x="402" y="226" fill="#ff132a"/><rect x="405" y="226" fill="#ff1026"/><rect x="408" y="226" fill="#ff0d23"/><rect x="411" y="226" fill="#ff0b1f"/><rect x="414" y="226" fill="#ff091d"/><rect x="417" y="226" fill="#ff071a"/><rect x="420" y="226" fill="#ff0517"/><rect x="423" y="226" fill="#ff0315"/><rect x="426" y="226" fill="#ff0112"/><rect x="429" y="226" fill="#ff0010"/><rect x="432" y="226" fill="#ff000e"/><rect x="435" y="226" fill="#ff000c"/><rect x="438" y="226" fill="#ff000a"/><rect x="441" y="226" fill="#ff0009"/><rect x="444" y="226" fill="#ff0007"/><rect x="447" y="226" fill="#ff0006"/><rect x="450" y="226" fill="#ff0004"/><rect x="453" y="226" fill="#ff0003"/><rect x="456" y="226" fill="#ff0002"/><rect x="459" y="226" fill="#ff0000"/><rect x="462" y="226" fill="#ff0000"/><rect x="465" y="226" fill="#ff0000"/><rect x="468" y="226" fill="#ff0000"/><rect x="471" y="226" fill="#ff0000"/><rect x="474" y="226" fill="#ff0000"/><rect x="258" y="229" fill="#00cbff"/><rect x="261" y="229" fill="#00caff"/><rect x="264" y="229" fill="#00c9ff"/><rect x="267" y="229" fill="#00c8ff"/><rect x="270" y="229" fill="#00c7ff"/><rect x="273" y="229" fill="#00c7ff"/><rect x="276" y="229" fill="#00c6ff"/><rect x="279" y="229" fill="#00c5ff"/><rect x="282" y="229" fill="#00c4ff"/><rect x="285" y="229" fill="#00c3ff"/><rect x="288" y="229" fill="#00c2ff"/><rect x="291" y="229" fill="#00c0ff"/><rect x="294" y="229" fill="#00bfff"/><rect x="297" y="229" fill="#00beff"/><rect x="300" y="229" fill="#00bdff"/><rect x="303" y="229" fill="#00bcff"/><rect x="306" y="229" fill="#00baff"/><rect x="309" y="229" fill="#00b9ff"/><rect x="312" y="229" fill="#00b8ff"/><rect x="315" y="229" fill="#07b6ff"/><rect x="318" y="229" fill="#19b5ff"/><rect x="321" y="229" fill="#2db3ff"/><rect x="324" y="229" fill="#42b1ff"/><rect x="327" y="229" fill="#58b0ff"/><rect x="330" y="229" fill="#6faeff"/><rect x="333" y="229" fill="#88acff"/><rect x="336" y="229" fill="#a2aaff"/><rect x="339" y="229" fill="#bea8ff"/><rect x="342" y="229" fill="#dba6ff"/><rect x="345" y="229" fill="#faa3ff"/><rect x="348" y="229" fill="#ff92e6"/><rect x="351" y="229" fill="#ff80cd"/><rect x="354" y="229" fill="#ff71b8"/><rect x="357" y="229" fill="#ff64a6"/><rect x="360" y="229" fill="#ff5896"/><rect x="363" y="229" fill="#ff4f88"/><rect x="366" y="229" fill="#ff467c"/><rect x="369" y="229" fill="#ff3e71"/><rect x="372" y="229" fill="#ff3768"/><rect x="375" y="229" fill="#ff315f"/><rect x="378" y="229" fill="#ff2c57"/><rect x="381" y="229" fill="#ff2750"/><rect x="384" y="229" fill="#ff224a"/><rect x="387" y="229" fill="#ff1e44"/><rect x="390" y="229" fill="#ff1a3e"/><rect x="393" y="229" fill="#ff1739"/><rect x="396" y="229" fill="#ff1435"/><rect x="399" y="229" fill="#ff1130"/><rect x="402" y="229" fill="#ff0e2c"/><rect x="405" y="229" fill="#ff0b29"/><rect x="408" y="229" fill="#ff0925"/><rect x="411" y="229" fill="#ff0722"/><rect x="414" y="229" fill="#ff051f"/><rect x="417" y="229" fill="#ff031c"/><rect x="420" y="229" fill="#ff011a"/><rect x="423" y="229" fill="#ff0017"/><rect x="426" y="229" fill="#ff0015"/><rect x="429" y="229" fill="#ff0013"/><rect x="432" y="229" fill="#ff0010"/><rect x="435" y="229" fill="#ff000f"/><rect x="438" y="229" fill="#ff000d"/><rect x="441" y="229" fill="#ff000b"/><rect x="444" y="229" fill="#ff0009"/><rect x="447" y="229" fill="#ff0008"/><rect x="450" y="229" fill="#ff0006"/><rect x="453" y="229" fill="#ff0005"/><rect x="456" y="229" fill="#ff0003"/><rect x="459" y="229" fill="#ff0002"/><rect x="462" y="229" fill="#ff0001"/><rect x="465" y="229" fill="#ff0000"/><rect x="468" y="229" fill="#ff0000"/><rect x="471" y="229" fill="#ff0000"/><rect x="474" y="229" fill="#ff0000"/><rect x="477" y="229" fill="#ff0000"/><rect x="480" y="229" fill="#ff0000"/><rect x="258" y="232" fill="#00beff"/><rect x="261" y="232" fill="#00bdff"/><rect x="264" y="232" fill="#00bcff"/><rect x="267" y="232" fill="#00bbff"/><rect x="270" y="232" fill="#00baff"/><rect x="273" y="232" fill="#00b9ff"/><rect x="276" y="232" fill="#00b8ff"/><rect x="279" y="232" fill="#00b7ff"/><rect x="282" y="232" fill="#00b5ff"/><rect x="285" y="232" fill="#00b4ff"/><rect x="288" y="232" fill="#00b3ff"/><rect x="291" y="232" fill="#00b2ff"/><rect x="294" y="232" fill="#00b0ff"/><rect x="297" y="232" fill="#00afff"/><rect x="300" y="232" fill="#00adff"/><rect x="303" y="232" fill="#00acff"/><rect x="306" y="232" fill="#00aaff"/><rect x="309" y="232" fill="#00a9ff"/><rect x="312" y="232" fill="#00a7ff"/><rect x="315" y="232" fill="#0da5ff"/><rect x="318" y="232" fill="#1fa4ff"/><rect x="321" y="232" fill="#32a2ff"/><rect x="324" y="232" fill="#46a0ff"/><rect x="327" y="232" fill="#5c9eff"/><rect x="330" y="232" fill="#729cff"/><rect x="333" y="232" fill="#8a99ff"/><rect x="336" y="232" fill="#a497ff"/><rect x="339" y="232" fill="#be95ff"/><rect x="342" y="232" fill="#da92ff"/><rect x="345" y="232" fill="#f88fff"/><rect x="348" y="232" fill="#ff80e9"/><rect x="351" y="232" fill="#ff70d0"/><rect x="354" y="232" fill="#ff63bb"/><rect x="357" y="232" fill="#ff57a9"/><rect x="360" y="232" fill="#ff4d99"/><rect x="363" y="232" fill="#ff448c"/><rect x="366" y="232" fill="#ff3c80"/><rect x="369" y="232" fill="#ff3575"/><rect x="372" y="232" fill="#ff2f6b"/><rect x="375" y="232" fill="#ff2a62"/><rect x="378" y="232" fill="#ff255b"/><rect x="381" y="232" fill="#ff2053"/><rect x="384" y="232" fill="#ff1c4d"/><rect x="387" y="232" fill="#ff1847"/><rect x="390" y="232" fill="#ff1541"/><rect x="393" y="232" fill="#ff113c"/><rect x="396" y="232" fill="#ff0e38"/><rect x="399" y="232" fill="#ff0c33"/><rect x="402" y="232" fill="#ff092f"/><rect x="405" y="232" fill="#ff072c"/><rect x="408" y="232" fill="#ff0528"/><rect x="411" y="232" fill="#ff0325"/><rect x="414" y="232" fill="#ff0122"/><rect x="417" y="232" fill="#ff001f"/><rect x="420" y="232" fill="#ff001c"/><rect x="423" y="232" fill="#ff001a"/><rect x="426" y="232" fill="#ff0017"/><rect x="429" y="232" fill="#ff0015"/><rect x="432" y="232" fill="#ff0013"/><rect x="435" y="232" fill="#ff0011"/><rect x="438" y="232" fill="#ff000f"/><rect x="441" y="232" fill="#ff000d"/><rect x="444" y="232" fill="#ff000b"/><rect x="447" y="232" fill="#ff000a"/><rect x="450" y="232" fill="#ff0008"/><rect x="453" y="232" fill="#ff0007"/><rect x="456" y="232" fill="#ff0005"/><rect x="459" y="232" fill="#ff0004"/><rect x="462" y="232" fill="#ff0003"/><rect x="465" y="232" fill="#ff0001"/><rect x="468" y="232" fill="#ff0000"/><rect x="471" y="232" fill="#ff0000"/><rect x="474" y="232" fill="#ff0000"/><rect x="477" y="232" fill="#ff0000"/><rect x="258" y="235" fill="#00b2ff"/><rect x="261" y="235" fill="#00b1ff"/><rect x="264" y="235" fill="#00b0ff"/><rect x="267" y="235" fill="#00aeff"/><rect x="270" y="235" fill="#00adff"/><rect x="273" y="235" fill="#00acff"/><rect x="276" y="235" fill="#00abff"/><rect x="279" y="235" fill="#00a9ff"/><rect x="282" y="235" fill="#00a8ff"/><rect x="285" y="235" fill="#00a7ff"/><rect x="288" y="235" fill="#00a5ff"/><rect x="291" y="235" fill="#00a4ff"/><rect x="294" y="235" fill="#00a2ff"/><rect x="297" y="235" fill="#00a1ff"/><rect x="300" y="235" fill="#009fff"/><rect x="303" y="235" fill="#009dff"/><rect x="306" y="235" fill="#009bff"/><rect x="309" y="235" fill="#009aff"/><rect x="312" y="235" fill="#0298ff"/><rect x="315" y="235" fill="#1296ff"/><rect x="318" y="235" fill="#2394ff"/><rect x="321" y="235" fill="#3691ff"/><rect x="324" y="235" fill="#4a8fff"/><rect x="327" y="235" fill="#5f8dff"/><rect x="330" y="235" fill="#758bff"/><rect x="333" y="235" fill="#8d88ff"/><rect x="336" y="235" fill="#a585ff"/><rect x="339" y="235" fill="#bf83ff"/><rect x="342" y="235" fill="#da80ff"/><rect x="345" y="235" fill="#f77dff"/><rect x="348" y="235" fill="#ff70eb"/><rect x="351" y="235" fill="#ff62d3"/><rect x="354" y="235" fill="#ff56be"/><rect x="357" y="235" fill="#ff4bac"/><rect x="360" y="235" fill="#ff429d"/><rect x="363" y="235" fill="#ff3a8f"/><rect x="366" y="235" fill="#ff3383"/><rect x="369" y="235" fill="#ff2d78"/><rect x="372" y="235" fill="#ff276e"/><rect x="375" y="235" fill="#ff2266"/><rect x="378" y="235" fill="#ff1e5e"/><rect x="381" y="235" fill="#ff1957"/><rect x="384" y="235" fill="#ff1650"/><rect x="387" y="235" fill="#ff124a"/><rect x="390" y="235" fill="#ff0f44"/><rect x="393" y="235" fill="#ff0c3f"/><rect x="396" y="235" fill="#ff093b"/><rect x="399" y="235" fill="#ff0736"/><rect x="402" y="235" fill="#ff0532"/><rect x="405" y="235" fill="#ff032e"/><rect x="408" y="235" fill="#ff012b"/><rect x="411" y="235" fill="#ff0027"/><rect x="414" y="235" fill="#ff0024"/><rect x="417" y="235" fill="#ff0021"/><rect x="420" y="235" fill="#ff001e"/><rect x="423" y="235" fill="#ff001c"/><rect x="426" y="235" fill="#ff0019"/><rect x="429" y="235" fill="#ff0017"/><rect x="432" y="235" fill="#ff0015"/><rect x="435" y="235" fill="#ff0013"/><rect x="438" y="235" fill="#ff0011"/><rect x="441" y="235" fill="#ff000f"/><rect x="444" y="235" fill="#ff000d"/><rect x="447" y="235" fill="#ff000c"/><rect x="450" y="235" fill="#ff000a"/><rect x="453" y="235" fill="#ff0008"/><rect x="456" y="235" fill="#ff0007"/><rect x="459" y="235" fill="#ff0006"/><rect x="462" y="235" fill="#ff0004"/><rect x="465" y="235" fill="#ff0003"/><rect x="468" y="235" fill="#ff0002"/><rect x="471" y="235" fill="#ff0001"/><rect x="474" y="235" fill="#ff0000"/><rect x="477" y="235" fill="#ff0000"/><rect x="480" y="235" fill="#ff0000"/><rect x="261" y="238" fill="#00a5ff"/><rect x="264" y="238" fill="#00a4ff"/><rect x="267" y="238" fill="#00a2ff"/><rect x="270" y="238" fill="#00a1ff"/><rect x="273" y="238" fill="#00a0ff"/><rect x="276" y="238" fill="#009eff"/><rect x="279" y="238" fill="#009dff"/><rect x="282" y="238" fill="#009bff"/><rect x="285" y="238" fill="#009aff"/><rect x="288" y="238" fill="#0098ff"/><rect x="291" y="238" fill="#0096ff"/><rect x="294" y="238" fill="#0095ff"/><rect x="297" y="238" fill="#0093ff"/><rect x="300" y="238" fill="#0091ff"/><rect x="303" y="238" fill="#008fff"/><rect x="306" y="238" fill="#008dff"/><rect x="309" y="238" fill="#008bff"/><rect x="312" y="238" fill="#0689ff"/><rect x="315" y="238" fill="#1787ff"/><rect x="318" y="238" fill="#2885ff"/><rect x="321" y="238" fill="#3a82ff"/><rect x="324" y="238" fill="#4e80ff"/><rect x="327" y="238" fill="#627dff"/><rect x="330" y="238" fill="#787bff"/><rect x="333" y="238" fill="#8f78ff"/><rect x="336" y="238" fill="#a775ff"/><rect x="339" y="238" fill="#c072ff"/><rect x="342" y="238" fill="#da6fff"/><rect x="345" y="238" fill="#f56cff"/><rect x="348" y="238" fill="#ff61ed"/><rect x="351" y="238" fill="#ff54d5"/><rect x="354" y="238" fill="#ff4ac1"/><rect x="357" y="238" fill="#ff40af"/><rect x="360" y="238" fill="#ff38a0"/><rect x="363" y="238" fill="#ff3192"/><rect x="366" y="238" fill="#ff2a86"/><rect x="369" y="238" fill="#ff257b"/><rect x="372" y="238" fill="#ff2072"/><rect x="375" y="238" fill="#ff1b69"/><rect x="378" y="238" fill="#ff1761"/><rect x="381" y="238" fill="#ff135a"/><rect x="384" y="238" fill="#ff1053"/><rect x="387" y="238" fill="#ff0d4d"/><rect x="390" y="238" fill="#ff0a47"/><rect x="393" y="238" fill="#ff0742"/><rect x="396" y="238" fill="#ff053d"/><rect x="399" y="238" fill="#ff0339"/><rect x="402" y="238" fill="#ff0135"/><rect x="405" y="238" fill="#ff0031"/><rect x="408" y="238" fill="#ff002d"/><rect x="411" y="238" fill="#ff002a"/><rect x="414" y="238" fill="#ff0027"/><rect x="417" y="238" fill="#ff0024"/><rect x="420" y="238" fill="#ff0021"/><rect x="423" y="238" fill="#ff001e"/><rect x="426" y="238" fill="#ff001c"/><rect x="429" y="238" fill="#ff0019"/><rect x="432" y="238" fill="#ff0017"/><rect x="435" y="238" fill="#ff0015"/><rect x="438" y="238" fill="#ff0013"/><rect x="441" y="238" fill="#ff0011"/><rect x="444" y="238" fill="#ff000f"/><rect x="447" y="238" fill="#ff000e"/><rect x="450" y="238" fill="#ff000c"/><rect x="453" y="238" fill="#ff000a"/><rect x="456" y="238" fill="#ff0009"/><rect x="459" y="238" fill="#ff0007"/><rect x="462" y="238" fill="#ff0006"/><rect x="465" y="238" fill="#ff0005"/><rect x="468" y="238" fill="#ff0004"/><rect x="471" y="238" fill="#ff0002"/><rect x="474" y="238" fill="#ff0001"/><rect x="477" y="238" fill="#ff0000"/><rect x="480" y="238" fill="#ff0000"/><rect x="261" y="241" fill="#009aff"/><rect x="264" y="241" fill="#0098ff"/><rect x="267" y="241" fill="#0097ff"/><rect x="270" y="241" fill="#0095ff"/><rect x="273" y="241" fill="#0094ff"/><rect x="276" y="241" fill="#0092ff"/><rect x="279" y="241" fill="#0091ff"/><rect x="282" y="241" fill="#008fff"/><rect x="285" y="241" fill="#008dff"/><rect x="288" y="241" fill="#008cff"/><rect x="291" y="241" fill="#008aff"/><rect x="294" y="241" fill="#0088ff"/><rect x="297" y="241" fill="#0086ff"/><rect x="300" y="241" fill="#0084ff"/><rect x="303" y="241" fill="#0082ff"/><rect x="306" y="241" fill="#0080ff"/><rect x="309" y="241" fill="#007eff"/><rect x="312" y="241" fill="#0b7bff"/><rect x="315" y="241" fill="#1b79ff"/><rect x="318" y="241" fill="#2c77ff"/><rect x="321" y="241" fill="#3f74ff"/><rect x="324" y="241" fill="#5271ff"/><rect x="327" y="241" fill="#666fff"/><rect x="330" y="241" fill="#7b6cff"/><rect x="333" y="241" fill="#9169ff"/><rect x="336" y="241" fill="#a866ff"/><rect x="339" y="241" fill="#c063ff"/><rect x="342" y="241" fill="#d95fff"/><rect x="345" y="241" fill="#f45cff"/><rect x="348" y="241" fill="#ff53ef"/><rect x="351" y="241" fill="#ff48d8"/><rect x="354" y="241" fill="#ff3ec3"/><rect x="357" y="241" fill="#ff36b2"/><rect x="360" y="241" fill="#ff2ea3"/><rect x="363" y="241" fill="#ff2895"/><rect x="366" y="241" fill="#ff2289"/><rect x="369" y="241" fill="#ff1d7e"/><rect x="372" y="241" fill="#ff1875"/><rect x="375" y="241" fill="#ff146c"/><rect x="378" y="241" fill="#ff1064"/><rect x="381" y="241" fill="#ff0d5d"/><rect x="384" y="241" fill="#ff0a56"/><rect x="387" y="241" fill="#ff0750"/><rect x="390" y="241" fill="#ff054a"/><rect x="393" y="241" fill="#ff0245"/><rect x="396" y="241" fill="#ff0040"/><rect x="399" y="241" fill="#ff003c"/><rect x="402" y="241" fill="#ff0037"/><rect x="405" y="241" fill="#ff0033"/><rect x="408" y="241" fill="#ff0030"/><rect x="411" y="241" fill="#ff002c"/><rect x="414" y="241" fill="#ff0029"/><rect x="417" y="241" fill="#ff0026"/><rect x="420" y="241" fill="#ff0023"/><rect x="423" y="241" fill="#ff0021"/><rect x="426" y="241" fill="#ff001e"/><rect x="429" y="241" fill="#ff001c"/><rect x="432" y="241" fill="#ff0019"/><rect x="435" y="241" fill="#ff0017"/><rect x="438" y="241" fill="#ff0015"/><rect x="441" y="241" fill="#ff0013"/><rect x="444" y="241" fill="#ff0011"/><rect x="447" y="241" fill="#ff000f"/><rect x="450" y="241" fill="#ff000e"/><rect x="453" y="241" fill="#ff000c"/><rect x="456" y="241" fill="#ff000b"/><rect x="459" y="241" fill="#ff0009"/><rect x="462" y="241" fill="#ff0008"/><rect x="465" y="241" fill="#ff0006"/><rect x="468" y="241" fill="#ff0005"/><rect x="471" y="241" fill="#ff0004"/><rect x="474" y="241" fill="#ff0003"/><rect x="261" y="244" fill="#008fff"/><rect x="264" y="244" fill="#008eff"/><rect x="267" y="244" fill="#008cff"/><rect x="270" y="244" fill="#008aff"/><rect x="273" y="244" fill="#0089ff"/><rect x="276" y="244" fill="#0087ff"/><rect x="279" y="244" fill="#0085ff"/><rect x="282" y="244" fill="#0083ff"/><rect x="285" y="244" fill="#0082ff"/><rect x="288" y="244" fill="#0080ff"/><rect x="291" y="244" fill="#007eff"/><rect x="294" y="244" fill="#007cff"/><rect x="297" y="244" fill="#007aff"/><rect x="300" y="244" fill="#0078ff"/><rect x="303" y="244" fill="#0075ff"/><rect x="306" y="244" fill="#0073ff"/><rect x="309" y="244" fill="#0171ff"/><rect x="312" y="244" fill="#106eff"/><rect x="315" y="244" fill="#206cff"/><rect x="318" y="244" fill="#3169ff"/><rect x="321" y="244" fill="#4267ff"/><rect x="324" y="244" fill="#5564ff"/><rect x="327" y="244" fill="#6961ff"/><rect x="330" y="244" fill="#7d5eff"/><rect x="333" y="244" fill="#925bff"/><rect x="336" y="244" fill="#a958ff"/><rect x="339" y="244" fill="#c154ff"/><rect x="342" y="244" fill="#d951ff"/><rect x="345" y="244" fill="#f34dff"/><rect x="348" y="244" fill="#ff45f1"/><rect x="351" y="244" fill="#ff3bda"/><rect x="354" y="244" fill="#ff33c6"/><rect x="357" y="244" fill="#ff2bb5"/><rect x="360" y="244" fill="#ff25a6"/><rect x="363" y="244" fill="#ff1f98"/><rect x="366" y="244" fill="#ff1a8c"/><rect x="369" y="244" fill="#ff1581"/><rect x="372" y="244" fill="#ff1178"/><rect x="375" y="244" fill="#ff0e6f"/><rect x="378" y="244" fill="#ff0a67"/><rect x="381" y="244" fill="#ff0760"/><rect x="384" y="244" fill="#ff0559"/><rect x="387" y="244" fill="#ff0253"/><rect x="390" y="244" fill="#ff004d"/><rect x="393" y="244" fill="#ff0048"/><rect x="396" y="244" fill="#ff0043"/><rect x="399" y="244" fill="#ff003e"/><rect x="402" y="244" fill="#ff003a"/><rect x="405" y="244" fill="#ff0036"/><rect x="408" y="244" fill="#ff0032"/><rect x="411" y="244" fill="#ff002f"/><rect x="414" y="244" fill="#ff002c"/><rect x="417" y="244" fill="#ff0028"/><rect x="420" y="244" fill="#ff0026"/><rect x="423" y="244" fill="#ff0023"/><rect x="426" y="244" fill="#ff0020"/><rect x="429" y="244" fill="#ff001e"/><rect x="432" y="244" fill="#ff001b"/><rect x="435" y="244" fill="#ff0019"/><rect x="438" y="244" fill="#ff0017"/><rect x="441" y="244" fill="#ff0015"/><rect x="444" y="244" fill="#ff0013"/><rect x="447" y="244" fill="#ff0011"/><rect x="450" y="244" fill="#ff0010"/><rect x="453" y="244" fill="#ff000e"/><rect x="456" y="244" fill="#ff000c"/><rect x="459" y="244" fill="#ff000b"/><rect x="462" y="244" fill="#ff000a"/><rect x="465" y="244" fill="#ff0008"/><rect x="468" y="244" fill="#ff0007"/><rect x="264" y="247" fill="#0083ff"/><rect x="267" y="247" fill="#0081ff"/><rect x="270" y="247" fill="#0080ff"/><rect x="273" y="247" fill="#007eff"/><rect x="276" y="247" fill="#007cff"/><rect x="279" y="247" fill="#007aff"/><rect x="282" y="247" fill="#0078ff"/><rect x="285" y="247" fill="#0077ff"/><rect x="288" y="247" fill="#0075ff"/><rect x="291" y="247" fill="#0072ff"/><rect x="294" y="247" fill="#0070ff"/><rect x="297" y="247" fill="#006eff"/><rect x="300" y="247" fill="#006cff"/><rect x="303" y="247" fill="#006aff"/><rect x="306" y="247" fill="#0067ff"/><rect x="309" y="247" fill="#0665ff"/><rect x="312" y="247" fill="#1462ff"/><rect x="315" y="247" fill="#2460ff"/><rect x="318" y="247" fill="#355dff"/><rect x="321" y="247" fill="#465aff"/><rect x="324" y="247" fill="#5857ff"/><rect x="327" y="247" fill="#6b54ff"/><rect x="330" y="247" fill="#7f51ff"/><rect x="333" y="247" fill="#944eff"/><rect x="336" y="247" fill="#aa4aff"/><rect x="339" y="247" fill="#c147ff"/><rect x="342" y="247" fill="#d943ff"/><rect x="345" y="247" fill="#f240ff"/><rect x="348" y="247" fill="#ff39f2"/><rect x="351" y="247" fill="#ff30dc"/><rect x="354" y="247" fill="#ff28c8"/><rect x="357" y="247" fill="#ff22b7"/><rect x="360" y="247" fill="#ff1ca8"/><rect x="363" y="247" fill="#ff179b"/><rect x="366" y="247" fill="#ff128f"/><rect x="369" y="247" fill="#ff0e84"/><rect x="372" y="247" fill="#ff0b7b"/><rect x="375" y="247" fill="#ff0772"/><rect x="378" y="247" fill="#ff056a"/><rect x="381" y="247" fill="#ff0262"/><rect x="384" y="247" fill="#ff005c"/><rect x="387" y="247" fill="#ff0055"/><rect x="390" y="247" fill="#ff0050"/><rect x="393" y="247" fill="#ff004a"/><rect x="396" y="247" fill="#ff0045"/><rect x="399" y="247" fill="#ff0041"/><rect x="402" y="247" fill="#ff003d"/><rect x="405" y="247" fill="#ff0039"/><rect x="408" y="247" fill="#ff0035"/><rect x="411" y="247" fill="#ff0031"/><rect x="414" y="247" fill="#ff002e"/><rect x="417" y="247" fill="#ff002b"/><rect x="420" y="247" fill="#ff0028"/><rect x="423" y="247" fill="#ff0025"/><rect x="426" y="247" fill="#ff0022"/><rect x="429" y="247" fill="#ff0020"/><rect x="432" y="247" fill="#ff001e"/><rect x="435" y="247" fill="#ff001b"/><rect x="438" y="247" fill="#ff0019"/><rect x="441" y="247" fill="#ff0017"/><rect x="444" y="247" fill="#ff0015"/><rect x="447" y="247" fill="#ff0013"/><rect x="450" y="247" fill="#ff0012"/><rect x="453" y="247" fill="#ff0010"/><rect x="456" y="247" fill="#ff000e"/><rect x="459" y="247" fill="#ff000d"/><rect x="264" y="250" fill="#0079ff"/><rect x="267" y="250" fill="#0077ff"/><rect x="270" y="250" fill="#0076ff"/><rect x="273" y="250" fill="#0074ff"/><rect x="276" y="250" fill="#0072ff"/><rect x="279" y="250" fill="#0070ff"/><rect x="282" y="250" fill="#006eff"/><rect x="285" y="250" fill="#006cff"/><rect x="288" y="250" fill="#006aff"/><rect x="291" y="250" fill="#0068ff"/><rect x="294" y="250" fill="#0065ff"/><rect x="297" y="250" fill="#0063ff"/><rect x="300" y="250" fill="#0061ff"/><rect x="303" y="250" fill="#005eff"/><rect x="306" y="250" fill="#005cff"/><rect x="309" y="250" fill="#0a59ff"/><rect x="312" y="250" fill="#1957ff"/><rect x="315" y="250" fill="#2854ff"/><rect x="318" y="250" fill="#3851ff"/><rect x="321" y="250" fill="#494eff"/><rect x="324" y="250" fill="#5b4bff"/><rect x="327" y="250" fill="#6e48ff"/><rect x="330" y="250" fill="#8145ff"/><rect x="333" y="250" fill="#9641ff"/><rect x="336" y="250" fill="#ab3eff"/><rect x="339" y="250" fill="#c13aff"/><rect x="342" y="250" fill="#d937ff"/><rect x="345" y="250" fill="#f133ff"/><rect x="348" y="250" fill="#ff2df4"/><rect x="351" y="250" fill="#ff25de"/><rect x="354" y="250" fill="#ff1fcb"/><rect x="357" y="250" fill="#ff19ba"/><rect x="360" y="250" fill="#ff14ab"/><rect x="363" y="250" fill="#ff0f9e"/><rect x="366" y="250" fill="#ff0b92"/><rect x="369" y="250" fill="#ff0887"/><rect x="372" y="250" fill="#ff057d"/><rect x="375" y="250" fill="#ff0275"/><rect x="378" y="250" fill="#ff006d"/><rect x="381" y="250" fill="#ff0065"/><rect x="384" y="250" fill="#ff005e"/><rect x="387" y="250" fill="#ff0058"/><rect x="390" y="250" fill="#ff0052"/><rect x="393" y="250" fill="#ff004d"/><rect x="396" y="250" fill="#ff0048"/><rect x="399" y="250" fill="#ff0043"/><rect x="402" y="250" fill="#ff003f"/><rect x="405" y="250" fill="#ff003b"/><rect x="408" y="250" fill="#ff0037"/><rect x="411" y="250" fill="#ff0034"/><rect x="414" y="250" fill="#ff0030"/><rect x="417" y="250" fill="#ff002d"/><rect x="420" y="250" fill="#ff002a"/><rect x="423" y="250" fill="#ff0027"/><rect x="426" y="250" fill="#ff0025"/><rect x="429" y="250" fill="#ff0022"/><rect x="432" y="250" fill="#ff0020"/><rect x="435" y="250" fill="#ff001d"/><rect x="438" y="250" fill="#ff001b"/><rect x="441" y="250" fill="#ff0019"/><rect x="444" y="250" fill="#ff0017"/><rect x="447" y="250" fill="#ff0015"/><rect x="450" y="250" fill="#ff0013"/><rect x="453" y="250" fill="#ff0012"/><rect x="264" y="253" fill="#0070ff"/><rect x="267" y="253" fill="#006eff"/><rect x="270" y="253" fill="#006cff"/><rect x="273" y="253" fill="#006aff"/><rect x="276" y="253" fill="#0068ff"/><rect x="279" y="253" fill="#0066ff"/><rect x="282" y="253" fill="#0064ff"/><rect x="285" y="253" fill="#0062ff"/><rect x="288" y="253" fill="#0060ff"/><rect x="291" y="253" fill="#005dff"/><rect x="294" y="253" fill="#005bff"/><rect x="297" y="253" fill="#0059ff"/><rect x="300" y="253" fill="#0056ff"/><rect x="303" y="253" fill="#0054ff"/><rect x="306" y="253" fill="#0151ff"/><rect x="309" y="253" fill="#0e4eff"/><rect x="312" y="253" fill="#1d4cff"/><rect x="315" y="253" fill="#2c49ff"/><rect x="318" y="253" fill="#3c46ff"/><rect x="321" y="253" fill="#4d43ff"/><rect x="324" y="253" fill="#5e40ff"/><rect x="327" y="253" fill="#703dff"/><rect x="330" y="253" fill="#8439ff"/><rect x="333" y="253" fill="#9736ff"/><rect x="336" y="253" fill="#ac32ff"/><rect x="339" y="253" fill="#c22fff"/><rect x="342" y="253" fill="#d82bff"/><rect x="345" y="253" fill="#f027ff"/><rect x="348" y="253" fill="#ff22f6"/><rect x="351" y="253" fill="#ff1be0"/><rect x="354" y="253" fill="#ff15cd"/><rect x="357" y="253" fill="#ff10bc"/><rect x="360" y="253" fill="#ff0cad"/><rect x="363" y="253" fill="#ff08a0"/><rect x="366" y="253" fill="#ff0494"/><rect x="369" y="253" fill="#ff018a"/><rect x="372" y="253" fill="#ff0080"/><rect x="375" y="253" fill="#ff0077"/><rect x="378" y="253" fill="#ff006f"/><rect x="381" y="253" fill="#ff0068"/><rect x="384" y="253" fill="#ff0061"/><rect x="387" y="253" fill="#ff005b"/><rect x="390" y="253" fill="#ff0055"/><rect x="393" y="253" fill="#ff0050"/><rect x="396" y="253" fill="#ff004b"/><rect x="399" y="253" fill="#ff0046"/><rect x="402" y="253" fill="#ff0041"/><rect x="405" y="253" fill="#ff003d"/><rect x="408" y="253" fill="#ff003a"/><rect x="411" y="253" fill="#ff0036"/><rect x="414" y="253" fill="#ff0033"/><rect x="417" y="253" fill="#ff002f"/><rect x="420" y="253" fill="#ff002c"/><rect x="423" y="253" fill="#ff0029"/><rect x="426" y="253" fill="#ff0027"/><rect x="429" y="253" fill="#ff0024"/><rect x="432" y="253" fill="#ff0022"/><rect x="435" y="253" fill="#ff001f"/><rect x="438" y="253" fill="#ff001d"/><rect x="441" y="253" fill="#ff001b"/><rect x="444" y="253" fill="#ff0019"/><rect x="267" y="256" fill="#0065ff"/><rect x="270" y="256" fill="#0063ff"/><rect x="273" y="256" fill="#0061ff"/><rect x="276" y="256" fill="#005fff"/><rect x="279" y="256" fill="#005cff"/><rect x="282" y="256" fill="#005aff"/><rect x="285" y="256" fill="#0058ff"/><rect x="288" y="256" fill="#0056ff"/><rect x="291" y="256" fill="#0053ff"/><rect x="294" y="256" fill="#0051ff"/><rect x="297" y="256" fill="#004fff"/><rect x="300" y="256" fill="#004cff"/><rect x="303" y="256" fill="#0049ff"/><rect x="306" y="256" fill="#0547ff"/><rect x="309" y="256" fill="#1244ff"/><rect x="312" y="256" fill="#2141ff"/><rect x="315" y="256" fill="#303eff"/><rect x="318" y="256" fill="#3f3bff"/><rect x="321" y="256" fill="#5038ff"/><rect x="324" y="256" fill="#6135ff"/><rect x="327" y="256" fill="#7332ff"/><rect x="330" y="256" fill="#852eff"/><rect x="333" y="256" fill="#992bff"/><rect x="336" y="256" fill="#ad27ff"/><rect x="339" y="256" fill="#c224ff"/><rect x="342" y="256" fill="#d820ff"/><rect x="345" y="256" fill="#ef1cff"/><rect x="348" y="256" fill="#ff17f7"/><rect x="351" y="256" fill="#ff11e2"/><rect x="354" y="256" fill="#ff0ccf"/><rect x="357" y="256" fill="#ff08bf"/><rect x="360" y="256" fill="#ff04b0"/><rect x="363" y="256" fill="#ff01a3"/><rect x="366" y="256" fill="#ff0097"/><rect x="369" y="256" fill="#ff008c"/><rect x="372" y="256" fill="#ff0083"/><rect x="375" y="256" fill="#ff007a"/><rect x="378" y="256" fill="#ff0072"/><rect x="381" y="256" fill="#ff006a"/><rect x="384" y="256" fill="#ff0064"/><rect x="387" y="256" fill="#ff005d"/><rect x="390" y="256" fill="#ff0058"/><rect x="393" y="256" fill="#ff0052"/><rect x="396" y="256" fill="#ff004d"/><rect x="399" y="256" fill="#ff0048"/><rect x="402" y="256" fill="#ff0044"/><rect x="405" y="256" fill="#ff0040"/><rect x="408" y="256" fill="#ff003c"/><rect x="411" y="256" fill="#ff0038"/><rect x="414" y="256" fill="#ff0035"/><rect x="417" y="256" fill="#ff0032"/><rect x="420" y="256" fill="#ff002e"/><rect x="423" y="256" fill="#ff002c"/><rect x="426" y="256" fill="#ff0029"/><rect x="429" y="256" fill="#ff0026"/><rect x="432" y="256" fill="#ff0024"/><rect x="435" y="256" fill="#ff0021"/><rect x="267" y="259" fill="#005cff"/><rect x="270" y="259" fill="#005aff"/><rect x="273" y="259" fill="#0058ff"/><rect x="276" y="259" fill="#0055ff"/><rect x="279" y="259" fill="#0053ff"/><rect x="282" y="259" fill="#0051ff"/><rect x="285" y="259" fill="#004fff"/><rect x="288" y="259" fill="#004cff"/><rect x="291" y="259" fill="#004aff"/><rect x="294" y="259" fill="#0048ff"/><rect x="297" y="259" fill="#0045ff"/><rect x="300" y="259" fill="#0043ff"/><rect x="303" y="259" fill="#0040ff"/><rect x="306" y="259" fill="#093dff"/><rect x="309" y="259" fill="#163aff"/><rect x="312" y="259" fill="#2437ff"/><rect x="315" y="259" fill="#3334ff"/><rect x="318" y="259" fill="#4331ff"/><rect x="321" y="259" fill="#532eff"/><rect x="324" y="259" fill="#642bff"/><rect x="327" y="259" fill="#7528ff"/><rect x="330" y="259" fill="#8724ff"/><rect x="333" y="259" fill="#9a21ff"/><rect x="336" y="259" fill="#ae1dff"/><rect x="339" y="259" fill="#c319ff"/><rect x="342" y="259" fill="#d815ff"/><rect x="345" y="259" fill="#ee12ff"/><rect x="348" y="259" fill="#ff0df9"/><rect x="351" y="259" fill="#ff08e4"/><rect x="354" y="259" fill="#ff04d1"/><rect x="357" y="259" fill="#ff01c1"/><rect x="360" y="259" fill="#ff00b2"/><rect x="363" y="259" fill="#ff00a5"/><rect x="366" y="259" fill="#ff009a"/><rect x="369" y="259" fill="#ff008f"/><rect x="372" y="259" fill="#ff0085"/><rect x="375" y="259" fill="#ff007d"/><rect x="378" y="259" fill="#ff0074"/><rect x="381" y="259" fill="#ff006d"/><rect x="384" y="259" fill="#ff0066"/><rect x="387" y="259" fill="#ff0060"/><rect x="390" y="259" fill="#ff005a"/><rect x="393" y="259" fill="#ff0055"/><rect x="396" y="259" fill="#ff004f"/><rect x="399" y="259" fill="#ff004b"/><rect x="402" y="259" fill="#ff0046"/><rect x="405" y="259" fill="#ff0042"/><rect x="408" y="259" fill="#ff003e"/><rect x="411" y="259" fill="#ff003a"/><rect x="414" y="259" fill="#ff0037"/><rect x="417" y="259" fill="#ff0034"/><rect x="420" y="259" fill="#ff0031"/><rect x="423" y="259" fill="#ff002e"/><rect x="426" y="259" fill="#ff002b"/><rect x="429" y="259" fill="#ff0028"/><rect x="267" y="262" fill="#0053ff"/><rect x="270" y="262" fill="#0051ff"/><rect x="273" y="262" fill="#004fff"/><rect x="276" y="262" fill="#004dff"/><rect x="279" y="262" fill="#004bff"/><rect x="282" y="262" fill="#0048ff"/><rect x="285" y="262" fill="#0046ff"/><rect x="288" y="262" fill="#0044ff"/><rect x="291" y="262" fill="#0041ff"/><rect x="294" y="262" fill="#003fff"/><rect x="297" y="262" fill="#003cff"/><rect x="300" y="262" fill="#0039ff"/><rect x="303" y="262" fill="#0137ff"/><rect x="306" y="262" fill="#0d34ff"/><rect x="309" y="262" fill="#1a31ff"/><rect x="312" y="262" fill="#282eff"/><rect x="315" y="262" fill="#372bff"/><rect x="318" y="262" fill="#4628ff"/><rect x="321" y="262" fill="#5625ff"/><rect x="324" y="262" fill="#6621ff"/><rect x="327" y="262" fill="#771eff"/><rect x="330" y="262" fill="#891bff"/><rect x="333" y="262" fill="#9c17ff"/><rect x="336" y="262" fill="#af14ff"/><rect x="339" y="262" fill="#c310ff"/><rect x="342" y="262" fill="#d80cff"/><rect x="345" y="262" fill="#ed08ff"/><rect x="348" y="262" fill="#ff04fa"/><rect x="351" y="262" fill="#ff00e5"/><rect x="354" y="262" fill="#ff00d3"/><rect x="357" y="262" fill="#ff00c3"/><rect x="360" y="262" fill="#ff00b5"/><rect x="363" y="262" fill="#ff00a8"/><rect x="366" y="262" fill="#ff009c"/><rect x="369" y="262" fill="#ff0091"/><rect x="372" y="262" fill="#ff0088"/><rect x="375" y="262" fill="#ff007f"/><rect x="378" y="262" fill="#ff0077"/><rect x="381" y="262" fill="#ff0070"/><rect x="384" y="262" fill="#ff0069"/><rect x="387" y="262" fill="#ff0062"/><rect x="390" y="262" fill="#ff005c"/><rect x="393" y="262" fill="#ff0057"/><rect x="396" y="262" fill="#ff0052"/><rect x="399" y="262" fill="#ff004d"/><rect x="402" y="262" fill="#ff0049"/><rect x="405" y="262" fill="#ff0044"/><rect x="408" y="262" fill="#ff0040"/><rect x="411" y="262" fill="#ff003d"/><rect x="414" y="262" fill="#ff0039"/><rect x="417" y="262" fill="#ff0036"/><rect x="420" y="262" fill="#ff0033"/><rect x="270" y="265" fill="#0049ff"/><rect x="273" y="265" fill="#0047ff"/><rect x="276" y="265" fill="#0045ff"/><rect x="279" y="265" fill="#0042ff"/><rect x="282" y="265" fill="#0040ff"/><rect x="285" y="265" fill="#003eff"/><rect x="288" y="265" fill="#003bff"/><rect x="291" y="265" fill="#0039ff"/><rect x="294" y="265" fill="#0036ff"/><rect x="297" y="265" fill="#0033ff"/><rect x="300" y="265" fill="#0031ff"/><rect x="303" y="265" fill="#052eff"/><rect x="306" y="265" fill="#112bff"/><rect x="309" y="265" fill="#1e28ff"/><rect x="312" y="265" fill="#2c25ff"/><rect x="315" y="265" fill="#3a22ff"/><rect x="318" y="265" fill="#491fff"/><rect x="321" y="265" fill="#581cff"/><rect x="324" y="265" fill="#6919ff"/><rect x="327" y="265" fill="#7915ff"/><rect x="330" y="265" fill="#8b12ff"/><rect x="333" y="265" fill="#9d0eff"/><rect x="336" y="265" fill="#b00bff"/><rect x="339" y="265" fill="#c307ff"/><rect x="342" y="265" fill="#d803ff"/><rect x="345" y="265" fill="#ed00ff"/><rect x="348" y="265" fill="#ff00fb"/><rect x="351" y="265" fill="#ff00e7"/><rect x="354" y="265" fill="#ff00d5"/><rect x="357" y="265" fill="#ff00c5"/><rect x="360" y="265" fill="#ff00b7"/><rect x="363" y="265" fill="#ff00aa"/><rect x="366" y="265" fill="#ff009e"/><rect x="369" y="265" fill="#ff0094"/><rect x="372" y="265" fill="#ff008a"/><rect x="375" y="265" fill="#ff0081"/><rect x="378" y="265" fill="#ff0079"/><rect x="381" y="265" fill="#ff0072"/><rect x="384" y="265" fill="#ff006b"/><rect x="387" y="265" fill="#ff0065"/><rect x="390" y="265" fill="#ff005f"/><rect x="393" y="265" fill="#ff0059"/><rect x="396" y="265" fill="#ff0054"/><rect x="399" y="265" fill="#ff004f"/><rect x="402" y="265" fill="#ff004b"/><rect x="405" y="265" fill="#ff0047"/><rect x="408" y="265" fill="#ff0043"/><rect x="411" y="265" fill="#ff003f"/><rect x="414" y="265" fill="#ff003b"/><rect x="270" y="268" fill="#0041ff"/><rect x="273" y="268" fill="#003fff"/><rect x="276" y="268" fill="#003dff"/><rect x="279" y="268" fill="#003aff"/><rect x="282" y="268" fill="#0038ff"/><rect x="285" y="268" fill="#0035ff"/><rect x="288" y="268" fill="#0033ff"/><rect x="291" y="268" fill="#0030ff"/><rect x="294" y="268" fill="#002eff"/><rect x="297" y="268" fill="#002bff"/><rect x="300" y="268" fill="#0028ff"/><rect x="303" y="268" fill="#0826ff"/><rect x="306" y="268" fill="#1423ff"/><rect x="309" y="268" fill="#2120ff"/><rect x="312" y="268" fill="#2f1dff"/><rect x="315" y="268" fill="#3d1aff"/><rect x="318" y="268" fill="#4c17ff"/><rect x="321" y="268" fill="#5b13ff"/><rect x="324" y="268" fill="#6b10ff"/><rect x="327" y="268" fill="#7b0dff"/><rect x="330" y="268" fill="#8c09ff"/><rect x="333" y="268" fill="#9e06ff"/><rect x="336" y="268" fill="#b003ff"/><rect x="339" y="268" fill="#c400ff"/><rect x="342" y="268" fill="#d700ff"/><rect x="345" y="268" fill="#ec00ff"/><rect x="348" y="268" fill="#ff00fd"/><rect x="351" y="268" fill="#ff00e9"/><rect x="354" y="268" fill="#ff00d7"/><rect x="357" y="268" fill="#ff00c7"/><rect x="360" y="268" fill="#ff00b9"/><rect x="363" y="268" fill="#ff00ac"/><rect x="366" y="268" fill="#ff00a1"/><rect x="369" y="268" fill="#ff0096"/><rect x="372" y="268" fill="#ff008d"/><rect x="375" y="268" fill="#ff0084"/><rect x="378" y="268" fill="#ff007c"/><rect x="381" y="268" fill="#ff0074"/><rect x="384" y="268" fill="#ff006e"/><rect x="387" y="268" fill="#ff0067"/><rect x="390" y="268" fill="#ff0061"/><rect x="393" y="268" fill="#ff005c"/><rect x="396" y="268" fill="#ff0056"/><rect x="399" y="268" fill="#ff0052"/><rect x="402" y="268" fill="#ff004d"/><rect x="405" y="268" fill="#ff0049"/><rect x="270" y="271" fill="#003aff"/><rect x="273" y="271" fill="#0037ff"/><rect x="276" y="271" fill="#0035ff"/><rect x="279" y="271" fill="#0033ff"/><rect x="282" y="271" fill="#0030ff"/><rect x="285" y="271" fill="#002eff"/><rect x="288" y="271" fill="#002bff"/><rect x="291" y="271" fill="#0029ff"/><rect x="294" y="271" fill="#0026ff"/><rect x="297" y="271" fill="#0023ff"/><rect x="300" y="271" fill="#0121ff"/><rect x="303" y="271" fill="#0c1eff"/><rect x="306" y="271" fill="#181bff"/><rect x="309" y="271" fill="#2518ff"/><rect x="312" y="271" fill="#3215ff"/><rect x="315" y="271" fill="#4012ff"/><rect x="318" y="271" fill="#4e0fff"/><rect x="321" y="271" fill="#5d0cff"/><rect x="324" y="271" fill="#6d08ff"/><rect x="327" y="271" fill="#7d05ff"/><rect x="330" y="271" fill="#8e02ff"/><rect x="333" y="271" fill="#9f00ff"/><rect x="336" y="271" fill="#b100ff"/><rect x="339" y="271" fill="#c400ff"/><rect x="342" y="271" fill="#d700ff"/><rect x="345" y="271" fill="#eb00ff"/><rect x="348" y="271" fill="#ff00fe"/><rect x="351" y="271" fill="#ff00ea"/><rect x="354" y="271" fill="#ff00d9"/><rect x="357" y="271" fill="#ff00c9"/><rect x="360" y="271" fill="#ff00bb"/><rect x="363" y="271" fill="#ff00ae"/><rect x="366" y="271" fill="#ff00a3"/><rect x="369" y="271" fill="#ff0099"/><rect x="372" y="271" fill="#ff008f"/><rect x="375" y="271" fill="#ff0086"/><rect x="378" y="271" fill="#ff007e"/><rect x="381" y="271" fill="#ff0077"/><rect x="384" y="271" fill="#ff0070"/><rect x="387" y="271" fill="#ff0069"/><rect x="390" y="271" fill="#ff0063"/><rect x="393" y="271" fill="#ff005e"/><rect x="396" y="271" fill="#ff0059"/><rect x="399" y="271" fill="#ff0054"/><rect x="273" y="274" fill="#0030ff"/><rect x="276" y="274" fill="#002eff"/><rect x="279" y="274" fill="#002bff"/><rect x="282" y="274" fill="#0029ff"/><rect x="285" y="274" fill="#0026ff"/><rect x="288" y="274" fill="#0024ff"/><rect x="291" y="274" fill="#0021ff"/><rect x="294" y="274" fill="#001fff"/><rect x="297" y="274" fill="#001cff"/><rect x="300" y="274" fill="#0419ff"/><rect x="303" y="274" fill="#0f16ff"/><rect x="306" y="274" fill="#1b13ff"/><rect x="309" y="274" fill="#2811ff"/><rect x="312" y="274" fill="#350eff"/><rect x="315" y="274" fill="#430bff"/><rect x="318" y="274" fill="#5107ff"/><rect x="321" y="274" fill="#6004ff"/><rect x="324" y="274" fill="#6f01ff"/><rect x="327" y="274" fill="#7f00ff"/><rect x="330" y="274" fill="#8f00ff"/><rect x="333" y="274" fill="#a000ff"/><rect x="336" y="274" fill="#b200ff"/><rect x="339" y="274" fill="#c400ff"/><rect x="342" y="274" fill="#d700ff"/><rect x="345" y="274" fill="#eb00ff"/><rect x="348" y="274" fill="#ff00ff"/><rect x="351" y="274" fill="#ff00ec"/><rect x="354" y="274" fill="#ff00da"/><rect x="357" y="274" fill="#ff00cb"/><rect x="360" y="274" fill="#ff00bd"/><rect x="363" y="274" fill="#ff00b0"/><rect x="366" y="274" fill="#ff00a5"/><rect x="369" y="274" fill="#ff009b"/><rect x="372" y="274" fill="#ff0091"/><rect x="375" y="274" fill="#ff0088"/><rect x="378" y="274" fill="#ff0080"/><rect x="381" y="274" fill="#ff0079"/><rect x="384" y="274" fill="#ff0072"/><rect x="387" y="274" fill="#ff006c"/><rect x="390" y="274" fill="#ff0066"/><rect x="273" y="277" fill="#0029ff"/><rect x="276" y="277" fill="#0027ff"/><rect x="279" y="277" fill="#0024ff"/><rect x="282" y="277" fill="#0022ff"/><rect x="285" y="277" fill="#001fff"/><rect x="288" y="277" fill="#001dff"/><rect x="291" y="277" fill="#001aff"/><rect x="294" y="277" fill="#0018ff"/><rect x="297" y="277" fill="#0015ff"/><rect x="300" y="277" fill="#0812ff"/><rect x="303" y="277" fill="#130fff"/><rect x="306" y="277" fill="#1f0cff"/><rect x="309" y="277" fill="#2b0aff"/><rect x="312" y="277" fill="#3807ff"/><rect x="315" y="277" fill="#4604ff"/><rect x="318" y="277" fill="#5401ff"/><rect x="321" y="277" fill="#6200ff"/><rect x="324" y="277" fill="#7100ff"/><rect x="327" y="277" fill="#8100ff"/><rect x="330" y="277" fill="#9100ff"/><rect x="333" y="277" fill="#a100ff"/><rect x="336" y="277" fill="#b300ff"/><rect x="339" y="277" fill="#c400ff"/><rect x="342" y="277" fill="#d700ff"/><rect x="345" y="277" fill="#ea00ff"/><rect x="348" y="277" fill="#fe00ff"/><rect x="351" y="277" fill="#ff00ed"/><rect x="354" y="277" fill="#ff00dc"/><rect x="357" y="277" fill="#ff00cd"/><rect x="360" y="277" fill="#ff00bf"/><rect x="363" y="277" fill="#ff00b3"/><rect x="366" y="277" fill="#ff00a7"/><rect x="369" y="277" fill="#ff009d"/><rect x="372" y="277" fill="#ff0093"/><rect x="375" y="277" fill="#ff008b"/><rect x="378" y="277" fill="#ff0083"/><rect x="381" y="277" fill="#ff007b"/><rect x="384" y="277" fill="#ff0074"/><rect x="276" y="280" fill="#0020ff"/><rect x="279" y="280" fill="#001eff"/><rect x="282" y="280" fill="#001bff"/><rect x="285" y="280" fill="#0019ff"/><rect x="288" y="280" fill="#0016ff"/><rect x="291" y="280" fill="#0013ff"/><rect x="294" y="280" fill="#0011ff"/><rect x="297" y="280" fill="#010eff"/><rect x="300" y="280" fill="#0b0bff"/><rect x="303" y="280" fill="#1609ff"/><rect x="306" y="280" fill="#2206ff"/><rect x="309" y="280" fill="#2e03ff"/><rect x="312" y="280" fill="#3b00ff"/><rect x="315" y="280" fill="#4800ff"/><rect x="318" y="280" fill="#5600ff"/><rect x="321" y="280" fill="#6400ff"/><rect x="324" y="280" fill="#7300ff"/><rect x="327" y="280" fill="#8200ff"/><rect x="330" y="280" fill="#9200ff"/><rect x="333" y="280" fill="#a200ff"/><rect x="336" y="280" fill="#b300ff"/><rect x="339" y="280" fill="#c500ff"/><rect x="342" y="280" fill="#d700ff"/><rect x="345" y="280" fill="#e900ff"/><rect x="348" y="280" fill="#fd00ff"/><rect x="351" y="280" fill="#ff00ee"/><rect x="354" y="280" fill="#ff00de"/><rect x="357" y="280" fill="#ff00cf"/><rect x="360" y="280" fill="#ff00c1"/><rect x="363" y="280" fill="#ff00b5"/><rect x="366" y="280" fill="#ff00a9"/><rect x="369" y="280" fill="#ff009f"/><rect x="372" y="280" fill="#ff0096"/><rect x="375" y="280" fill="#ff008d"/><rect x="276" y="283" fill="#001aff"/><rect x="279" y="283" fill="#0017ff"/><rect x="282" y="283" fill="#0015ff"/><rect x="285" y="283" fill="#0012ff"/><rect x="288" y="283" fill="#0010ff"/><rect x="291" y="283" fill="#000dff"/><rect x="294" y="283" fill="#000aff"/><rect x="297" y="283" fill="#0408ff"/><rect x="300" y="283" fill="#0e05ff"/><rect x="303" y="283" fill="#1902ff"/><rect x="306" y="283" fill="#2500ff"/><rect x="309" y="283" fill="#3100ff"/><rect x="312" y="283" fill="#3e00ff"/><rect x="315" y="283" fill="#4b00ff"/><rect x="318" y="283" fill="#5800ff"/><rect x="321" y="283" fill="#6600ff"/><rect x="324" y="283" fill="#7500ff"/><rect x="327" y="283" fill="#8400ff"/><rect x="330" y="283" fill="#9300ff"/><rect x="333" y="283" fill="#a300ff"/><rect x="336" y="283" fill="#b400ff"/><rect x="339" y="283" fill="#c500ff"/><rect x="342" y="283" fill="#d700ff"/><rect x="345" y="283" fill="#e900ff"/><rect x="348" y="283" fill="#fc00ff"/><rect x="351" y="283" fill="#ff00f0"/><rect x="354" y="283" fill="#ff00df"/><rect x="357" y="283" fill="#ff00d0"/><rect x="360" y="283" fill="#ff00c3"/><rect x="363" y="283" fill="#ff00b6"/><rect x="366" y="283" fill="#ff00ab"/><rect x="279" y="286" fill="#0011ff"/><rect x="282" y="286" fill="#000fff"/><rect x="285" y="286" fill="#000cff"/><rect x="288" y="286" fill="#000aff"/><rect x="291" y="286" fill="#0007ff"/><rect x="294" y="286" fill="#0004ff"/><rect x="297" y="286" fill="#0702ff"/><rect x="300" y="286" fill="#1100ff"/><rect x="303" y="286" fill="#1d00ff"/><rect x="306" y="286" fill="#2800ff"/><rect x="309" y="286" fill="#3400ff"/><rect x="312" y="286" fill="#4100ff"/><rect x="315" y="286" fill="#4d00ff"/><rect x="318" y="286" fill="#5b00ff"/><rect x="321" y="286" fill="#6800ff"/><rect x="324" y="286" fill="#7700ff"/><rect x="327" y="286" fill="#8500ff"/><rect x="330" y="286" fill="#9500ff"/><rect x="333" y="286" fill="#a400ff"/><rect x="336" y="286" fill="#b400ff"/><rect x="339" y="286" fill="#c500ff"/><rect x="342" y="286" fill="#d600ff"/><rect x="345" y="286" fill="#e800ff"/><rect x="348" y="286" fill="#fb00ff"/><rect x="351" y="286" fill="#ff00f1"/><rect x="354" y="286" fill="#ff00e1"/><rect x="357" y="286" fill="#ff00d2"/><rect x="360" y="286" fill="#ff00c4"/><rect x="279" y="289" fill="#000bff"/><rect x="282" y="289" fill="#0009ff"/><rect x="285" y="289" fill="#0006ff"/><rect x="288" y="289" fill="#0004ff"/><rect x="291" y="289" fill="#0001ff"/><rect x="294" y="289" fill="#0100ff"/><rect x="297" y="289" fill="#0a00ff"/><rect x="300" y="289" fill="#1500ff"/><rect x="303" y="289" fill="#2000ff"/><rect x="306" y="289" fill="#2b00ff"/><rect x="309" y="289" fill="#3700ff"/><rect x="312" y="289" fill="#4300ff"/><rect x="315" y="289" fill="#5000ff"/><rect x="318" y="289" fill="#5d00ff"/><rect x="321" y="289" fill="#6a00ff"/><rect x="324" y="289" fill="#7800ff"/><rect x="327" y="289" fill="#8700ff"/><rect x="330" y="289" fill="#9600ff"/><rect x="333" y="289" fill="#a500ff"/><rect x="336" y="289" fill="#b500ff"/><rect x="339" y="289" fill="#c500ff"/><rect x="342" y="289" fill="#d600ff"/><rect x="345" y="289" fill="#e800ff"/><rect x="348" y="289" fill="#fa00ff"/><rect x="351" y="289" fill="#ff00f2"/><rect x="282" y="292" fill="#0003ff"/><rect x="285" y="292" fill="#0001ff"/><rect x="288" y="292" fill="#0000ff"/><rect x="291" y="292" fill="#0000ff"/><rect x="294" y="292" fill="#0400ff"/><rect x="297" y="292" fill="#0d00ff"/><rect x="300" y="292" fill="#1800ff"/><rect x="303" y="292" fill="#2200ff"/><rect x="306" y="292" fill="#2e00ff"/><rect x="309" y="292" fill="#3900ff"/><rect x="312" y="292" fill="#4600ff"/><rect x="315" y="292" fill="#5200ff"/><rect x="318" y="292" fill="#5f00ff"/><rect x="321" y="292" fill="#6c00ff"/><rect x="324" y="292" fill="#7a00ff"/><rect x="327" y="292" fill="#8800ff"/><rect x="330" y="292" fill="#9700ff"/><rect x="333" y="292" fill="#a600ff"/><rect x="336" y="292" fill="#b600ff"/><rect x="339" y="292" fill="#c600ff"/><rect x="342" y="292" fill="#d600ff"/><rect x="345" y="292" fill="#e700ff"/><rect x="285" y="295" fill="#0000ff"/><rect x="288" y="295" fill="#0000ff"/><rect x="291" y="295" fill="#0000ff"/><rect x="294" y="295" fill="#0600ff"/><rect x="297" y="295" fill="#1000ff"/><rect x="300" y="295" fill="#1b00ff"/><rect x="303" y="295" fill="#2500ff"/><rect x="306" y="295" fill="#3000ff"/><rect x="309" y="295" fill="#3c00ff"/><rect x="312" y="295" fill="#4800ff"/><rect x="315" y="295" fill="#5400ff"/><rect x="318" y="295" fill="#6100ff"/><rect x="321" y="295" fill="#6e00ff"/><rect x="324" y="295" fill="#7c00ff"/><rect x="327" y="295" fill="#8a00ff"/><rect x="330" y="295" fill="#9800ff"/><rect x="333" y="295" fill="#a700ff"/><rect x="336" y="295" fill="#b600ff"/><rect x="285" y="298" fill="#0000ff"/><rect x="288" y="298" fill="#0000ff"/><rect x="291" y="298" fill="#0000ff"/><rect x="294" y="298" fill="#0900ff"/><rect x="297" y="298" fill="#1300ff"/><rect x="300" y="298" fill="#1d00ff"/><rect x="303" y="298" fill="#2800ff"/><rect x="306" y="298" fill="#3300ff"/><rect x="309" y="298" fill="#3f00ff"/><rect x="312" y="298" fill="#4a00ff"/><rect x="315" y="298" fill="#5600ff"/><rect x="318" y="298" fill="#6300ff"/><rect x="321" y="298" fill="#7000ff"/><rect x="324" y="298" fill="#7d00ff"/><rect x="327" y="298" fill="#8b00ff"/><rect x="330" y="298" fill="#9900ff"/><rect x="288" y="301" fill="#0000ff"/><rect x="291" y="301" fill="#0300ff"/><rect x="294" y="301" fill="#0c00ff"/><rect x="297" y="301" fill="#1600ff"/><rect x="300" y="301" fill="#2000ff"/><rect x="303" y="301" fill="#2b00ff"/><rect x="306" y="301" fill="#3600ff"/><rect x="309" y="301" fill="#4100ff"/><rect x="312" y="301" fill="#4d00ff"/><rect x="315" y="301" fill="#5900ff"/><rect x="318" y="301" fill="#6500ff"/><rect x="321" y="301" fill="#7200ff"/><rect x="294" y="304" fill="#0f00ff"/><rect x="297" y="304" fill="#1900ff"/><rect x="300" y="304" fill="#2300ff"/><rect x="303" y="304" fill="#2d00ff"/><rect x="306" y="304" fill="#3800ff"/><rect x="309" y="304" fill="#4300ff"/><rect x="312" y="304" fill="#4f00ff"/><rect x="297" y="307" fill="#1900ff"/><rect x="300" y="307" fill="#2300ff"/><rect x="306" y="307" fill="#3800ff"/></g><path d="M303 304.5 303 304.5 303 304.5 303 304.5 303 304.5 303 304.5 303 304.5 302.9 304.5 302.9 304.5 302.9 304.5 302.9 304.5 302.9 304.5 302.9 304.5 302.9 304.5 302.8 304.5 302.8 304.5 302.8 304.5 302.8 304.5 302.8 304.5 302.8 304.5 302.8 304.5 302.7 304.5 302.7 304.5 302.7 304.5 302.7 304.5 302.7 304.5 302.6 304.5 302.6 304.5 302.6 304.5 302.5 304.5 302.5 304.5 302.5 304.5 302.5 304.5 302.4 304.5 302.4 304.5 302.4 304.5 302.3 304.5 302.3 304.5 302.3 304.5 302.2 304.5 302.2 304.5 302.1 304.4 302 304.4 302 304.4 301.9 304.3 301.8 304.3 301.7 304.2 301.6 304.2 301.6 304.1 301.5 304.1 301.4 304 301.2 303.9 301.1 303.8 301 303.7 300.9 303.6 300.7 303.5 300.6 303.4 300.5 303.3 300.3 303.2 300.1 303.1 300 302.9 299.8 302.8 299.6 302.7 299.4 302.5 299.2 302.3 298.9 302.2 298.7 302 298.4 301.8 298.1 301.6 297.8 301.4 297.5 301.1 297.2 300.9 296.9 300.7 296.5 300.4 296.1 300.1 295.8 299.8 295.4 299.5 294.9 299.2 294.5 298.8 294 298.4 293.6 298 293.1 297.5 292.6 297.1 292 296.5 291.5 296 290.9 295.3 290.3 294.6 289.6 293.7 288.9 292.8 288.1 291.7 287.3 290.6 286.5 289.3 285.7 288 284.7 286.4 283.8 284.8 282.8 283 281.8 281 280.7 278.7 279.5 276.3 278.3 273.7 277.1 270.9 275.8 267.8 274.4 264.5 273 261 271.5 257.1 270 253 268.5 248.6 267.1 243.9 265.6 239 264.2 233.7 262.7 228.2 261.3 222.4 259.8 216.4 258.4 210.2 257.1 203.8 255.8 197.3 254.7 190.7 253.6 184 252.6 177.4 251.8 170.8 251.1 164.2 250.5 157.7 250 151.4 249.7 145.3 249.6 139.3 249.7 133.6 250 128 250.4 122.7 251 117.7 251.8 112.9 252.8 108.5 254.1 104.4 255.5 100.8 257 97.5 258.8 94.6 260.7 92.2 262.7 90.3 264.8 88.8 267.1 87.7 269.4 86.9 271.8 86.5 274.2 86.4 276.7 86.6 279.2 87.1 281.7 87.7 284.2 88.5 286.8 89.4 289.4 90.4 291.9 91.5 294.4 92.7 296.9 93.9 299.4 95.1 301.8 96.3 304.2 97.6 306.5 98.9 308.9 100.2 311.2 101.6 313.5 103 315.8 104.4 318.1 105.9 320.4 107.4 322.6 108.9 324.9 110.5 327.2 112.1 329.4 113.7 331.7 115.3 333.9 116.9 336.2 118.6 338.4 120.3 340.7 122 342.9 123.7 345.1 125.5 347.4 127.2 349.6 129 351.9 130.7 354.1 132.5 356.3 134.3 358.6 136.1 360.8 137.9 363 139.7 365.3 141.6 367.5 143.4 369.7 145.2 372 147.1 374.2 148.9 376.4 150.7 378.7 152.6 380.9 154.4 383.1 156.2 385.3 158.1 387.5 159.9 389.7 161.7 391.9 163.6 394 165.4 396.2 167.2 398.4 169 400.5 170.8 402.6 172.6 404.7 174.3 406.8 176.1 408.9 177.8 411 179.6 413 181.3 415 183 417 184.6 419 186.3 421 187.9 422.9 189.5 424.8 191.1 426.7 192.7 428.5 194.2 430.3 195.7 432.1 197.2 433.9 198.7 435.6 200.1 437.2 201.5 438.8 202.9 440.4 204.2 441.9 205.4 443.3 206.6 444.8 207.8 446.2 209 447.5 210.2 448.9 211.3 450.2 212.3 451.4 213.4 452.6 214.4 453.7 215.3 454.8 216.2 455.9 217.1 456.9 218 457.9 218.8 458.8 219.5 459.7 220.3 460.5 221 461.4 221.7 462.1 222.4 462.9 223 463.6 223.6 464.3 224.2 464.9 224.7 465.6 225.2 466.2 225.7 466.7 226.2 467.3 226.7 467.8 227.1 468.3 227.5 468.8 227.9 469.2 228.3 469.7 228.6 470.1 229 470.5 229.3 470.9 229.7 471.3 230 471.6 230.3 472 230.6 472.3 230.9 472.7 231.2 473 231.4 473.3 231.7 473.6 231.9 473.8 232.1 474.1 232.4 474.3 232.6 474.6 232.8 474.8 233 475 233.1 475.2 233.3 475.4 233.5 475.6 233.6 475.7 233.7 475.9 233.9 476 234 476.2 234.1 476.3 234.2 476.4 234.3 476.6 234.4 476.7 234.5 476.8 234.6 476.9 234.7 477 234.8 477.1 234.9 477.1 234.9 477.2 235 477.3 235 477.3 235.1 477.4 235.1 477.4 235.2 477.5 235.2 477.6 235.3 477.6 235.3 477.7 235.4 477.7 235.4 477.8 235.4 477.8 235.5 477.8 235.5 477.9 235.5 477.9 235.6 478 235.6 478 235.7 478.1 235.7 478.1 235.7 478.1 235.8 478.2 235.8 478.2 235.8 478.3 235.9 478.3 235.9 478.3 235.9 478.3 235.9 478.3 235.9 478.4 235.9 478.4 236 478.4 236 478.4 236 478.4 236 478.4 236 478.4 236 478.4 236 478.5 236 478.5 236 478.5 236Z M470.1 229 301.7 96.2 289.5 293.7Z" fill-rule="evenodd" fill="#000" fill-opacity="0.4"/></g></g>
<clipPath id="cl_uv"><path d="M606.2 299.7 606.2 299.7 606.2 299.7 606.1 299.7 606.1 299.7 606.1 299.7 606.1 299.7 606.1 299.8 606.1 299.8 606 299.8 606 299.8 606 299.8 605.9 299.8 605.9 299.8 605.9 299.8 605.9 299.8 605.8 299.8 605.8 299.8 605.8 299.9 605.8 299.9 605.8 299.9 605.7 299.9 605.7 300 605.7 300 605.6 300 605.6 300 605.5 300 605.5 299.9 605.4 299.9 605.3 299.9 605.3 299.9 605.2 299.9 605.2 299.9 605.1 299.9 605 299.9 605 299.9 604.9 299.9 604.8 299.8 604.7 299.8 604.6 299.7 604.4 299.6 604.3 299.4 604.1 299.3 603.9 299.1 603.7 299 603.5 298.8 603.2 298.5 603 298.3 602.7 298 602.4 297.8 602.1 297.5 601.8 297.1 601.4 296.8 601.1 296.4 600.7 296 600.3 295.6 599.8 295.1 599.4 294.6 598.9 294.1 598.4 293.5 597.9 292.9 597.3 292.4 596.7 291.7 596.1 291.1 595.5 290.4 594.8 289.7 594.1 289 593.3 288.2 592.6 287.3 591.7 286.5 590.9 285.5 590 284.6 589 283.6 588.1 282.6 587.1 281.5 586 280.4 584.9 279.2 583.8 277.9 582.6 276.6 581.4 275.2 580.2 273.7 578.9 272.1 577.5 270.5 576.1 268.7 574.7 266.7 573.1 264.6 571.5 262.2 569.7 259.5 567.8 256.6 565.8 253.5 563.8 250.2 561.7 246.6 559.5 242.9 557.3 239 555 234.8 552.7 230.5 550.4 225.9 548 221.1 545.6 216.2 543.1 211.1 540.7 206 538.3 200.8 536 195.5 533.6 190.2 531.4 184.8 529.2 179.5 527.2 174.2 525.2 169 523.4 163.9 521.8 158.9 520.2 154.1 518.7 149.4 517.4 144.9 516.1 140.6 515 136.5 514.1 132.7 513.2 129 512.5 125.7 511.8 122.5 511.3 119.5 510.9 116.7 510.6 114.2 510.3 111.8 510.2 109.6 510.1 107.5 510.1 105.6 510.2 103.9 510.4 102.2 510.6 100.7 511 99.3 511.3 98 511.8 96.8 512.3 95.8 512.9 94.8 513.5 93.9 514.2 93.2 515 92.5 515.7 92 516.6 91.5 517.4 91.1 518.3 90.7 519.2 90.4 520.2 90.2 521.1 90.1 522.1 89.9 523.1 89.8 524.2 89.7 525.2 89.7 526.3 89.6 527.4 89.6 528.4 89.6 529.5 89.6 530.6 89.6 531.6 89.6 532.7 89.6 533.8 89.7 534.9 89.7 536 89.8 537.1 89.8 538.2 89.9 539.4 90 540.6 90.1 541.7 90.2 542.9 90.3 544.2 90.4 545.4 90.6 546.7 90.7 548 90.8 549.3 91 550.6 91.1 552 91.3 553.4 91.5 554.8 91.7 556.2 91.8 557.7 92 559.2 92.2 560.7 92.4 562.3 92.7 563.9 92.9 565.5 93.1 567.2 93.3 568.9 93.6 570.6 93.8 572.4 94.1 574.2 94.3 576 94.6 577.9 94.8 579.8 95.1 581.7 95.4 583.7 95.7 585.8 96 587.8 96.3 589.9 96.6 592.1 96.9 594.3 97.2 596.5 97.6 598.8 97.9 601.1 98.2 603.4 98.6 605.8 98.9 608.2 99.3 610.7 99.6 613.2 100 615.7 100.4 618.3 100.7 620.9 101.1 623.5 101.5 626.1 101.9 628.8 102.3 631.5 102.7 634.2 103.1 637 103.5 639.7 103.9 642.5 104.3 645.3 104.7 648 105.1 650.7 105.5 653.4 105.9 656 106.3 658.7 106.7 661.3 107.1 664 107.4 666.6 107.8 669.2 108.2 671.8 108.6 674.3 109 676.7 109.3 679.1 109.7 681.5 110 683.8 110.3 686 110.7 688.2 111 690.3 111.3 692.4 111.6 694.4 111.9 696.4 112.2 698.3 112.5 700.1 112.7 701.8 113 703.6 113.2 705.2 113.5 706.8 113.7 708.3 113.9 709.8 114.1 711.2 114.4 712.6 114.6 713.9 114.8 715.2 114.9 716.5 115.1 717.7 115.3 718.8 115.5 720 115.6 721.1 115.8 722.2 116 723.2 116.1 724.2 116.3 725.2 116.4 726.2 116.5 727.1 116.7 728 116.8 728.8 116.9 729.6 117.1 730.4 117.2 731.2 117.3 731.9 117.4 732.6 117.5 733.2 117.6 733.8 117.7 734.3 117.7 734.9 117.8 735.4 117.9 735.9 118 736.3 118 736.8 118.1 737.2 118.2 737.6 118.2 738 118.3 738.3 118.3 738.7 118.4 739 118.4 739.3 118.5 739.5 118.5 739.8 118.5 740 118.6 740.2 118.6 740.4 118.6 740.6 118.7 740.7 118.7 740.9 118.7 741.1 118.7 741.3 118.8 741.4 118.8 741.6 118.8 741.7 118.8 741.9 118.8 742 118.9 742.1 118.9 742.3 118.9 742.4 118.9 742.6 118.9 742.7 119 742.8 119 743 119 743.1 119 743.2 119 743.3 119.1 743.4 119.1 743.5 119.1 743.6 119.1 743.6 119.1 743.7 119.1 743.7 119.1 743.8 119.1 743.8 119.1 743.9 119.1 743.9 119.1 743.9 119.1 743.9 119.2 744 119.2 744 119.2 744 119.2Z"/></clipPath>
<clipPath id="cp_uv"><rect x="510" y="86" width="226" height="221"/></clipPath>
<g clip-path="url(#cp_uv)"><g clip-path="url(#cl_uv)"><g class="cg" filter="url(#bl)"><rect x="513" y="85" fill="#00ff00"/><rect x="516" y="85" fill="#00ff00"/><rect x="519" y="85" fill="#00ff00"/><rect x="522" y="85" fill="#00ff00"/><rect x="525" y="85" fill="#00ff00"/><rect x="528" y="85" fill="#00ff00"/><rect x="531" y="85" fill="#00ff00"/><rect x="534" y="85" fill="#00ff00"/><rect x="537" y="85" fill="#00ff00"/><rect x="540" y="85" fill="#00ff00"/><rect x="543" y="85" fill="#00ff00"/><rect x="546" y="85" fill="#00ff00"/><rect x="549" y="85" fill="#00ff00"/><rect x="552" y="85" fill="#00ff00"/><rect x="510" y="88" fill="#00ff00"/><rect x="513" y="88" fill="#00ff00"/><rect x="516" y="88" fill="#00ff00"/><rect x="519" y="88" fill="#00ff00"/><rect x="522" y="88" fill="#00ff00"/><rect x="525" y="88" fill="#00ff00"/><rect x="528" y="88" fill="#00ff00"/><rect x="531" y="88" fill="#00ff00"/><rect x="534" y="88" fill="#00ff00"/><rect x="537" y="88" fill="#00ff00"/><rect x="540" y="88" fill="#00ff00"/><rect x="543" y="88" fill="#00ff00"/><rect x="546" y="88" fill="#00ff00"/><rect x="549" y="88" fill="#00ff00"/><rect x="552" y="88" fill="#00ff00"/><rect x="555" y="88" fill="#05ff00"/><rect x="558" y="88" fill="#17ff00"/><rect x="561" y="88" fill="#2aff00"/><rect x="564" y="88" fill="#3fff00"/><rect x="567" y="88" fill="#55ff00"/><rect x="570" y="88" fill="#6cff00"/><rect x="573" y="88" fill="#85ff00"/><rect x="507" y="91" fill="#00ff00"/><rect x="510" y="91" fill="#00ff00"/><rect x="513" y="91" fill="#00ff00"/><rect x="516" y="91" fill="#00ff00"/><rect x="519" y="91" fill="#00ff00"/><rect x="522" y="91" fill="#00ff00"/><rect x="525" y="91" fill="#00ff00"/><rect x="528" y="91" fill="#00ff00"/><rect x="531" y="91" fill="#00ff00"/><rect x="534" y="91" fill="#00ff00"/><rect x="537" y="91" fill="#00ff00"/><rect x="540" y="91" fill="#00ff00"/><rect x="543" y="91" fill="#00ff00"/><rect x="546" y="91" fill="#00ff00"/><rect x="549" y="91" fill="#00ff00"/><rect x="552" y="91" fill="#00ff00"/><rect x="555" y="91" fill="#03ff00"/><rect x="558" y="91" fill="#15ff00"/><rect x="561" y="91" fill="#29ff00"/><rect x="564" y="91" fill="#3eff00"/><rect x="567" y="91" fill="#54ff00"/><rect x="570" y="91" fill="#6cff00"/><rect x="573" y="91" fill="#85ff00"/><rect x="576" y="91" fill="#9fff00"/><rect x="579" y="91" fill="#bcff00"/><rect x="582" y="91" fill="#daff00"/><rect x="585" y="91" fill="#faff00"/><rect x="588" y="91" fill="#ffe500"/><rect x="591" y="91" fill="#ffcb00"/><rect x="594" y="91" fill="#ffb600"/><rect x="507" y="94" fill="#00ff08"/><rect x="510" y="94" fill="#00ff07"/><rect x="513" y="94" fill="#00ff06"/><rect x="516" y="94" fill="#00ff05"/><rect x="519" y="94" fill="#00ff04"/><rect x="522" y="94" fill="#00ff03"/><rect x="525" y="94" fill="#00ff02"/><rect x="528" y="94" fill="#00ff01"/><rect x="531" y="94" fill="#00ff00"/><rect x="534" y="94" fill="#00ff00"/><rect x="537" y="94" fill="#00ff00"/><rect x="540" y="94" fill="#00ff00"/><rect x="543" y="94" fill="#00ff00"/><rect x="546" y="94" fill="#00ff00"/><rect x="549" y="94" fill="#00ff00"/><rect x="552" y="94" fill="#00ff00"/><rect x="555" y="94" fill="#01ff00"/><rect x="558" y="94" fill="#13ff00"/><rect x="561" y="94" fill="#27ff00"/><rect x="564" y="94" fill="#3cff00"/><rect x="567" y="94" fill="#53ff00"/><rect x="570" y="94" fill="#6bff00"/><rect x="573" y="94" fill="#85ff00"/><rect x="576" y="94" fill="#a0ff00"/><rect x="579" y="94" fill="#bdff00"/><rect x="582" y="94" fill="#dbff00"/><rect x="585" y="94" fill="#fcff00"/><rect x="588" y="94" fill="#ffe300"/><rect x="591" y="94" fill="#ffc900"/><rect x="594" y="94" fill="#ffb300"/><rect x="597" y="94" fill="#ffa000"/><rect x="600" y="94" fill="#ff9000"/><rect x="603" y="94" fill="#ff8200"/><rect x="606" y="94" fill="#ff7600"/><rect x="609" y="94" fill="#ff6b00"/><rect x="612" y="94" fill="#ff6100"/><rect x="615" y="94" fill="#ff5800"/><rect x="507" y="97" fill="#00ff12"/><rect x="510" y="97" fill="#00ff11"/><rect x="513" y="97" fill="#00ff10"/><rect x="516" y="97" fill="#00ff0f"/><rect x="519" y="97" fill="#00ff0e"/><rect x="522" y="97" fill="#00ff0d"/><rect x="525" y="97" fill="#00ff0c"/><rect x="528" y="97" fill="#00ff0b"/><rect x="531" y="97" fill="#00ff0a"/><rect x="534" y="97" fill="#00ff09"/><rect x="537" y="97" fill="#00ff08"/><rect x="540" y="97" fill="#00ff06"/><rect x="543" y="97" fill="#00ff05"/><rect x="546" y="97" fill="#00ff04"/><rect x="549" y="97" fill="#00ff03"/><rect x="552" y="97" fill="#00ff01"/><rect x="555" y="97" fill="#00ff00"/><rect x="558" y="97" fill="#11ff00"/><rect x="561" y="97" fill="#25ff00"/><rect x="564" y="97" fill="#3bff00"/><rect x="567" y="97" fill="#52ff00"/><rect x="570" y="97" fill="#6aff00"/><rect x="573" y="97" fill="#84ff00"/><rect x="576" y="97" fill="#a0ff00"/><rect x="579" y="97" fill="#beff00"/><rect x="582" y="97" fill="#ddff00"/><rect x="585" y="97" fill="#feff00"/><rect x="588" y="97" fill="#ffe000"/><rect x="591" y="97" fill="#ffc600"/><rect x="594" y="97" fill="#ffb000"/><rect x="597" y="97" fill="#ff9e00"/><rect x="600" y="97" fill="#ff8e00"/><rect x="603" y="97" fill="#ff8000"/><rect x="606" y="97" fill="#ff7300"/><rect x="609" y="97" fill="#ff6800"/><rect x="612" y="97" fill="#ff5f00"/><rect x="615" y="97" fill="#ff5600"/><rect x="618" y="97" fill="#ff4e00"/><rect x="621" y="97" fill="#ff4700"/><rect x="624" y="97" fill="#ff4100"/><rect x="627" y="97" fill="#ff3b00"/><rect x="630" y="97" fill="#ff3600"/><rect x="633" y="97" fill="#ff3100"/><rect x="636" y="97" fill="#ff2c00"/><rect x="507" y="100" fill="#00ff1c"/><rect x="510" y="100" fill="#00ff1b"/><rect x="513" y="100" fill="#00ff1b"/><rect x="516" y="100" fill="#00ff1a"/><rect x="519" y="100" fill="#00ff19"/><rect x="522" y="100" fill="#00ff18"/><rect x="525" y="100" fill="#00ff17"/><rect x="528" y="100" fill="#00ff17"/><rect x="531" y="100" fill="#00ff16"/><rect x="534" y="100" fill="#00ff15"/><rect x="537" y="100" fill="#00ff14"/><rect x="540" y="100" fill="#00ff13"/><rect x="543" y="100" fill="#00ff12"/><rect x="546" y="100" fill="#00ff10"/><rect x="549" y="100" fill="#00ff0f"/><rect x="552" y="100" fill="#00ff0e"/><rect x="555" y="100" fill="#00ff0d"/><rect x="558" y="100" fill="#0fff0b"/><rect x="561" y="100" fill="#23ff0a"/><rect x="564" y="100" fill="#39ff09"/><rect x="567" y="100" fill="#51ff07"/><rect x="570" y="100" fill="#6aff06"/><rect x="573" y="100" fill="#84ff04"/><rect x="576" y="100" fill="#a1ff02"/><rect x="579" y="100" fill="#bfff01"/><rect x="582" y="100" fill="#dfff00"/><rect x="585" y="100" fill="#fffd00"/><rect x="588" y="100" fill="#ffdd00"/><rect x="591" y="100" fill="#ffc300"/><rect x="594" y="100" fill="#ffae00"/><rect x="597" y="100" fill="#ff9b00"/><rect x="600" y="100" fill="#ff8b00"/><rect x="603" y="100" fill="#ff7d00"/><rect x="606" y="100" fill="#ff7100"/><rect x="609" y="100" fill="#ff6600"/><rect x="612" y="100" fill="#ff5c00"/><rect x="615" y="100" fill="#ff5400"/><rect x="618" y="100" fill="#ff4c00"/><rect x="621" y="100" fill="#ff4500"/><rect x="624" y="100" fill="#ff3f00"/><rect x="627" y="100" fill="#ff3900"/><rect x="630" y="100" fill="#ff3400"/><rect x="633" y="100" fill="#ff2f00"/><rect x="636" y="100" fill="#ff2a00"/><rect x="639" y="100" fill="#ff2600"/><rect x="642" y="100" fill="#ff2200"/><rect x="645" y="100" fill="#ff1f00"/><rect x="648" y="100" fill="#ff1c00"/><rect x="651" y="100" fill="#ff1800"/><rect x="654" y="100" fill="#ff1600"/><rect x="657" y="100" fill="#ff1300"/><rect x="507" y="103" fill="#00ff27"/><rect x="510" y="103" fill="#00ff26"/><rect x="513" y="103" fill="#00ff26"/><rect x="516" y="103" fill="#00ff25"/><rect x="519" y="103" fill="#00ff25"/><rect x="522" y="103" fill="#00ff24"/><rect x="525" y="103" fill="#00ff23"/><rect x="528" y="103" fill="#00ff23"/><rect x="531" y="103" fill="#00ff22"/><rect x="534" y="103" fill="#00ff21"/><rect x="537" y="103" fill="#00ff20"/><rect x="540" y="103" fill="#00ff20"/><rect x="543" y="103" fill="#00ff1f"/><rect x="546" y="103" fill="#00ff1e"/><rect x="549" y="103" fill="#00ff1d"/><rect x="552" y="103" fill="#00ff1c"/><rect x="555" y="103" fill="#00ff1b"/><rect x="558" y="103" fill="#0dff1a"/><rect x="561" y="103" fill="#21ff19"/><rect x="564" y="103" fill="#38ff18"/><rect x="567" y="103" fill="#4fff16"/><rect x="570" y="103" fill="#69ff15"/><rect x="573" y="103" fill="#84ff14"/><rect x="576" y="103" fill="#a1ff12"/><rect x="579" y="103" fill="#c0ff11"/><rect x="582" y="103" fill="#e1ff0f"/><rect x="585" y="103" fill="#fffa0d"/><rect x="588" y="103" fill="#ffdb0a"/><rect x="591" y="103" fill="#ffc108"/><rect x="594" y="103" fill="#ffab05"/><rect x="597" y="103" fill="#ff9804"/><rect x="600" y="103" fill="#ff8802"/><rect x="603" y="103" fill="#ff7a01"/><rect x="606" y="103" fill="#ff6e00"/><rect x="609" y="103" fill="#ff6400"/><rect x="612" y="103" fill="#ff5a00"/><rect x="615" y="103" fill="#ff5200"/><rect x="618" y="103" fill="#ff4a00"/><rect x="621" y="103" fill="#ff4300"/><rect x="624" y="103" fill="#ff3d00"/><rect x="627" y="103" fill="#ff3700"/><rect x="630" y="103" fill="#ff3200"/><rect x="633" y="103" fill="#ff2d00"/><rect x="636" y="103" fill="#ff2900"/><rect x="639" y="103" fill="#ff2400"/><rect x="642" y="103" fill="#ff2100"/><rect x="645" y="103" fill="#ff1d00"/><rect x="648" y="103" fill="#ff1a00"/><rect x="651" y="103" fill="#ff1700"/><rect x="654" y="103" fill="#ff1400"/><rect x="657" y="103" fill="#ff1100"/><rect x="660" y="103" fill="#ff0f00"/><rect x="663" y="103" fill="#ff0d00"/><rect x="666" y="103" fill="#ff0a00"/><rect x="669" y="103" fill="#ff0800"/><rect x="672" y="103" fill="#ff0700"/><rect x="675" y="103" fill="#ff0500"/><rect x="507" y="106" fill="#00ff32"/><rect x="510" y="106" fill="#00ff32"/><rect x="513" y="106" fill="#00ff32"/><rect x="516" y="106" fill="#00ff31"/><rect x="519" y="106" fill="#00ff31"/><rect x="522" y="106" fill="#00ff30"/><rect x="525" y="106" fill="#00ff30"/><rect x="528" y="106" fill="#00ff2f"/><rect x="531" y="106" fill="#00ff2f"/><rect x="534" y="106" fill="#00ff2e"/><rect x="537" y="106" fill="#00ff2e"/><rect x="540" y="106" fill="#00ff2d"/><rect x="543" y="106" fill="#00ff2d"/><rect x="546" y="106" fill="#00ff2c"/><rect x="549" y="106" fill="#00ff2b"/><rect x="552" y="106" fill="#00ff2b"/><rect x="555" y="106" fill="#00ff2a"/><rect x="558" y="106" fill="#0bff29"/><rect x="561" y="106" fill="#1fff29"/><rect x="564" y="106" fill="#36ff28"/><rect x="567" y="106" fill="#4eff27"/><rect x="570" y="106" fill="#68ff26"/><rect x="573" y="106" fill="#84ff25"/><rect x="576" y="106" fill="#a1ff24"/><rect x="579" y="106" fill="#c1ff23"/><rect x="582" y="106" fill="#e3ff22"/><rect x="585" y="106" fill="#fff820"/><rect x="588" y="106" fill="#ffd81b"/><rect x="591" y="106" fill="#ffbe16"/><rect x="594" y="106" fill="#ffa813"/><rect x="597" y="106" fill="#ff9510"/><rect x="600" y="106" fill="#ff860d"/><rect x="603" y="106" fill="#ff780b"/><rect x="606" y="106" fill="#ff6c09"/><rect x="609" y="106" fill="#ff6108"/><rect x="612" y="106" fill="#ff5806"/><rect x="615" y="106" fill="#ff4f05"/><rect x="618" y="106" fill="#ff4804"/><rect x="621" y="106" fill="#ff4103"/><rect x="624" y="106" fill="#ff3b02"/><rect x="627" y="106" fill="#ff3501"/><rect x="630" y="106" fill="#ff3000"/><rect x="633" y="106" fill="#ff2b00"/><rect x="636" y="106" fill="#ff2700"/><rect x="639" y="106" fill="#ff2300"/><rect x="642" y="106" fill="#ff1f00"/><rect x="645" y="106" fill="#ff1c00"/><rect x="648" y="106" fill="#ff1800"/><rect x="651" y="106" fill="#ff1500"/><rect x="654" y="106" fill="#ff1300"/><rect x="657" y="106" fill="#ff1000"/><rect x="660" y="106" fill="#ff0e00"/><rect x="663" y="106" fill="#ff0b00"/><rect x="666" y="106" fill="#ff0900"/><rect x="669" y="106" fill="#ff0700"/><rect x="672" y="106" fill="#ff0500"/><rect x="675" y="106" fill="#ff0400"/><rect x="678" y="106" fill="#ff0200"/><rect x="681" y="106" fill="#ff0000"/><rect x="684" y="106" fill="#ff0000"/><rect x="687" y="106" fill="#ff0000"/><rect x="690" y="106" fill="#ff0000"/><rect x="693" y="106" fill="#ff0000"/><rect x="696" y="106" fill="#ff0000"/><rect x="507" y="109" fill="#00ff3e"/><rect x="510" y="109" fill="#00ff3e"/><rect x="513" y="109" fill="#00ff3e"/><rect x="516" y="109" fill="#00ff3d"/><rect x="519" y="109" fill="#00ff3d"/><rect x="522" y="109" fill="#00ff3d"/><rect x="525" y="109" fill="#00ff3d"/><rect x="528" y="109" fill="#00ff3d"/><rect x="531" y="109" fill="#00ff3c"/><rect x="534" y="109" fill="#00ff3c"/><rect x="537" y="109" fill="#00ff3c"/><rect x="540" y="109" fill="#00ff3b"/><rect x="543" y="109" fill="#00ff3b"/><rect x="546" y="109" fill="#00ff3b"/><rect x="549" y="109" fill="#00ff3b"/><rect x="552" y="109" fill="#00ff3a"/><rect x="555" y="109" fill="#00ff3a"/><rect x="558" y="109" fill="#09ff3a"/><rect x="561" y="109" fill="#1dff39"/><rect x="564" y="109" fill="#34ff39"/><rect x="567" y="109" fill="#4dff38"/><rect x="570" y="109" fill="#67ff38"/><rect x="573" y="109" fill="#84ff37"/><rect x="576" y="109" fill="#a2ff37"/><rect x="579" y="109" fill="#c2ff36"/><rect x="582" y="109" fill="#e5ff36"/><rect x="585" y="109" fill="#fff533"/><rect x="588" y="109" fill="#ffd52c"/><rect x="591" y="109" fill="#ffbb26"/><rect x="594" y="109" fill="#ffa521"/><rect x="597" y="109" fill="#ff931d"/><rect x="600" y="109" fill="#ff831a"/><rect x="603" y="109" fill="#ff7516"/><rect x="606" y="109" fill="#ff6914"/><rect x="609" y="109" fill="#ff5f11"/><rect x="612" y="109" fill="#ff550f"/><rect x="615" y="109" fill="#ff4d0d"/><rect x="618" y="109" fill="#ff450c"/><rect x="621" y="109" fill="#ff3f0a"/><rect x="624" y="109" fill="#ff3909"/><rect x="627" y="109" fill="#ff3308"/><rect x="630" y="109" fill="#ff2e07"/><rect x="633" y="109" fill="#ff2905"/><rect x="636" y="109" fill="#ff2505"/><rect x="639" y="109" fill="#ff2104"/><rect x="642" y="109" fill="#ff1d03"/><rect x="645" y="109" fill="#ff1a02"/><rect x="648" y="109" fill="#ff1701"/><rect x="651" y="109" fill="#ff1401"/><rect x="654" y="109" fill="#ff1100"/><rect x="657" y="109" fill="#ff0e00"/><rect x="660" y="109" fill="#ff0c00"/><rect x="663" y="109" fill="#ff0a00"/><rect x="666" y="109" fill="#ff0800"/><rect x="669" y="109" fill="#ff0600"/><rect x="672" y="109" fill="#ff0400"/><rect x="675" y="109" fill="#ff0200"/><rect x="678" y="109" fill="#ff0100"/><rect x="681" y="109" fill="#ff0000"/><rect x="684" y="109" fill="#ff0000"/><rect x="687" y="109" fill="#ff0000"/><rect x="690" y="109" fill="#ff0000"/><rect x="693" y="109" fill="#ff0000"/><rect x="696" y="109" fill="#ff0000"/><rect x="699" y="109" fill="#ff0000"/><rect x="702" y="109" fill="#ff0000"/><rect x="705" y="109" fill="#ff0000"/><rect x="708" y="109" fill="#ff0000"/><rect x="711" y="109" fill="#ff0000"/><rect x="714" y="109" fill="#ff0000"/><rect x="717" y="109" fill="#ff0000"/><rect x="507" y="112" fill="#00ff4a"/><rect x="510" y="112" fill="#00ff4a"/><rect x="513" y="112" fill="#00ff4a"/><rect x="516" y="112" fill="#00ff4a"/><rect x="519" y="112" fill="#00ff4a"/><rect x="522" y="112" fill="#00ff4a"/><rect x="525" y="112" fill="#00ff4a"/><rect x="528" y="112" fill="#00ff4a"/><rect x="531" y="112" fill="#00ff4a"/><rect x="534" y="112" fill="#00ff4a"/><rect x="537" y="112" fill="#00ff4a"/><rect x="540" y="112" fill="#00ff4a"/><rect x="543" y="112" fill="#00ff4a"/><rect x="546" y="112" fill="#00ff4b"/><rect x="549" y="112" fill="#00ff4b"/><rect x="552" y="112" fill="#00ff4b"/><rect x="555" y="112" fill="#00ff4b"/><rect x="558" y="112" fill="#06ff4b"/><rect x="561" y="112" fill="#1bff4b"/><rect x="564" y="112" fill="#33ff4b"/><rect x="567" y="112" fill="#4cff4b"/><rect x="570" y="112" fill="#66ff4b"/><rect x="573" y="112" fill="#83ff4b"/><rect x="576" y="112" fill="#a2ff4b"/><rect x="579" y="112" fill="#c3ff4b"/><rect x="582" y="112" fill="#e7ff4b"/><rect x="585" y="112" fill="#fff248"/><rect x="588" y="112" fill="#ffd23e"/><rect x="591" y="112" fill="#ffb837"/><rect x="594" y="112" fill="#ffa230"/><rect x="597" y="112" fill="#ff902b"/><rect x="600" y="112" fill="#ff8026"/><rect x="603" y="112" fill="#ff7222"/><rect x="606" y="112" fill="#ff671f"/><rect x="609" y="112" fill="#ff5c1c"/><rect x="612" y="112" fill="#ff5319"/><rect x="615" y="112" fill="#ff4b16"/><rect x="618" y="112" fill="#ff4314"/><rect x="621" y="112" fill="#ff3c12"/><rect x="624" y="112" fill="#ff3611"/><rect x="627" y="112" fill="#ff310f"/><rect x="630" y="112" fill="#ff2c0d"/><rect x="633" y="112" fill="#ff270c"/><rect x="636" y="112" fill="#ff230b"/><rect x="639" y="112" fill="#ff1f0a"/><rect x="642" y="112" fill="#ff1b09"/><rect x="645" y="112" fill="#ff1808"/><rect x="648" y="112" fill="#ff1507"/><rect x="651" y="112" fill="#ff1206"/><rect x="654" y="112" fill="#ff0f05"/><rect x="657" y="112" fill="#ff0d04"/><rect x="660" y="112" fill="#ff0b04"/><rect x="663" y="112" fill="#ff0803"/><rect x="666" y="112" fill="#ff0602"/><rect x="669" y="112" fill="#ff0502"/><rect x="672" y="112" fill="#ff0301"/><rect x="675" y="112" fill="#ff0101"/><rect x="678" y="112" fill="#ff0000"/><rect x="681" y="112" fill="#ff0000"/><rect x="684" y="112" fill="#ff0000"/><rect x="687" y="112" fill="#ff0000"/><rect x="690" y="112" fill="#ff0000"/><rect x="693" y="112" fill="#ff0000"/><rect x="696" y="112" fill="#ff0000"/><rect x="699" y="112" fill="#ff0000"/><rect x="702" y="112" fill="#ff0000"/><rect x="705" y="112" fill="#ff0000"/><rect x="708" y="112" fill="#ff0000"/><rect x="711" y="112" fill="#ff0000"/><rect x="714" y="112" fill="#ff0000"/><rect x="717" y="112" fill="#ff0000"/><rect x="720" y="112" fill="#ff0000"/><rect x="723" y="112" fill="#ff0000"/><rect x="726" y="112" fill="#ff0000"/><rect x="729" y="112" fill="#ff0000"/><rect x="732" y="112" fill="#ff0000"/><rect x="735" y="112" fill="#ff0000"/><rect x="738" y="112" fill="#ff0000"/><rect x="507" y="115" fill="#00ff57"/><rect x="510" y="115" fill="#00ff57"/><rect x="513" y="115" fill="#00ff57"/><rect x="516" y="115" fill="#00ff57"/><rect x="519" y="115" fill="#00ff58"/><rect x="522" y="115" fill="#00ff58"/><rect x="525" y="115" fill="#00ff58"/><rect x="528" y="115" fill="#00ff59"/><rect x="531" y="115" fill="#00ff59"/><rect x="534" y="115" fill="#00ff59"/><rect x="537" y="115" fill="#00ff5a"/><rect x="540" y="115" fill="#00ff5a"/><rect x="543" y="115" fill="#00ff5a"/><rect x="546" y="115" fill="#00ff5b"/><rect x="549" y="115" fill="#00ff5b"/><rect x="552" y="115" fill="#00ff5c"/><rect x="555" y="115" fill="#00ff5c"/><rect x="558" y="115" fill="#04ff5d"/><rect x="561" y="115" fill="#19ff5d"/><rect x="564" y="115" fill="#31ff5e"/><rect x="567" y="115" fill="#4aff5e"/><rect x="570" y="115" fill="#66ff5f"/><rect x="573" y="115" fill="#83ff60"/><rect x="576" y="115" fill="#a3ff60"/><rect x="579" y="115" fill="#c5ff61"/><rect x="582" y="115" fill="#e9ff62"/><rect x="585" y="115" fill="#ffef5d"/><rect x="588" y="115" fill="#ffcf51"/><rect x="591" y="115" fill="#ffb547"/><rect x="594" y="115" fill="#ff9f40"/><rect x="597" y="115" fill="#ff8d39"/><rect x="600" y="115" fill="#ff7d33"/><rect x="603" y="115" fill="#ff702e"/><rect x="606" y="115" fill="#ff642a"/><rect x="609" y="115" fill="#ff5926"/><rect x="612" y="115" fill="#ff5023"/><rect x="615" y="115" fill="#ff4820"/><rect x="618" y="115" fill="#ff411d"/><rect x="621" y="115" fill="#ff3a1b"/><rect x="624" y="115" fill="#ff3418"/><rect x="627" y="115" fill="#ff2f16"/><rect x="630" y="115" fill="#ff2a15"/><rect x="633" y="115" fill="#ff2513"/><rect x="636" y="115" fill="#ff2111"/><rect x="639" y="115" fill="#ff1d10"/><rect x="642" y="115" fill="#ff1a0f"/><rect x="645" y="115" fill="#ff160d"/><rect x="648" y="115" fill="#ff130c"/><rect x="651" y="115" fill="#ff110b"/><rect x="654" y="115" fill="#ff0e0a"/><rect x="657" y="115" fill="#ff0b09"/><rect x="660" y="115" fill="#ff0908"/><rect x="663" y="115" fill="#ff0708"/><rect x="666" y="115" fill="#ff0507"/><rect x="669" y="115" fill="#ff0306"/><rect x="672" y="115" fill="#ff0205"/><rect x="675" y="115" fill="#ff0005"/><rect x="678" y="115" fill="#ff0004"/><rect x="681" y="115" fill="#ff0004"/><rect x="684" y="115" fill="#ff0003"/><rect x="687" y="115" fill="#ff0003"/><rect x="690" y="115" fill="#ff0002"/><rect x="693" y="115" fill="#ff0002"/><rect x="696" y="115" fill="#ff0001"/><rect x="699" y="115" fill="#ff0001"/><rect x="702" y="115" fill="#ff0000"/><rect x="705" y="115" fill="#ff0000"/><rect x="708" y="115" fill="#ff0000"/><rect x="711" y="115" fill="#ff0000"/><rect x="714" y="115" fill="#ff0000"/><rect x="717" y="115" fill="#ff0000"/><rect x="720" y="115" fill="#ff0000"/><rect x="723" y="115" fill="#ff0000"/><rect x="726" y="115" fill="#ff0000"/><rect x="729" y="115" fill="#ff0000"/><rect x="732" y="115" fill="#ff0000"/><rect x="735" y="115" fill="#ff0000"/><rect x="738" y="115" fill="#ff0000"/><rect x="507" y="118" fill="#00ff64"/><rect x="510" y="118" fill="#00ff64"/><rect x="513" y="118" fill="#00ff65"/><rect x="516" y="118" fill="#00ff65"/><rect x="519" y="118" fill="#00ff66"/><rect x="522" y="118" fill="#00ff66"/><rect x="525" y="118" fill="#00ff67"/><rect x="528" y="118" fill="#00ff68"/><rect x="531" y="118" fill="#00ff68"/><rect x="534" y="118" fill="#00ff69"/><rect x="537" y="118" fill="#00ff6a"/><rect x="540" y="118" fill="#00ff6a"/><rect x="543" y="118" fill="#00ff6b"/><rect x="546" y="118" fill="#00ff6c"/><rect x="549" y="118" fill="#00ff6d"/><rect x="552" y="118" fill="#00ff6e"/><rect x="555" y="118" fill="#00ff6f"/><rect x="558" y="118" fill="#01ff70"/><rect x="561" y="118" fill="#17ff71"/><rect x="564" y="118" fill="#2fff72"/><rect x="567" y="118" fill="#49ff73"/><rect x="570" y="118" fill="#65ff74"/><rect x="573" y="118" fill="#83ff76"/><rect x="576" y="118" fill="#a3ff77"/><rect x="579" y="118" fill="#c6ff79"/><rect x="582" y="118" fill="#ebff7a"/><rect x="585" y="118" fill="#ffec73"/><rect x="588" y="118" fill="#ffcc65"/><rect x="591" y="118" fill="#ffb259"/><rect x="594" y="118" fill="#ff9c50"/><rect x="597" y="118" fill="#ff8a47"/><rect x="600" y="118" fill="#ff7a41"/><rect x="603" y="118" fill="#ff6d3b"/><rect x="606" y="118" fill="#ff6135"/><rect x="609" y="118" fill="#ff5731"/><rect x="612" y="118" fill="#ff4e2d"/><rect x="615" y="118" fill="#ff4629"/><rect x="618" y="118" fill="#ff3e26"/><rect x="621" y="118" fill="#ff3823"/><rect x="624" y="118" fill="#ff3221"/><rect x="627" y="118" fill="#ff2d1e"/><rect x="630" y="118" fill="#ff281c"/><rect x="633" y="118" fill="#ff231a"/><rect x="636" y="118" fill="#ff1f18"/><rect x="639" y="118" fill="#ff1b16"/><rect x="642" y="118" fill="#ff1815"/><rect x="645" y="118" fill="#ff1513"/><rect x="648" y="118" fill="#ff1212"/><rect x="651" y="118" fill="#ff0f11"/><rect x="654" y="118" fill="#ff0c10"/><rect x="657" y="118" fill="#ff0a0e"/><rect x="660" y="118" fill="#ff080d"/><rect x="663" y="118" fill="#ff060c"/><rect x="666" y="118" fill="#ff040c"/><rect x="669" y="118" fill="#ff020b"/><rect x="672" y="118" fill="#ff000a"/><rect x="675" y="118" fill="#ff0009"/><rect x="678" y="118" fill="#ff0008"/><rect x="681" y="118" fill="#ff0008"/><rect x="684" y="118" fill="#ff0007"/><rect x="687" y="118" fill="#ff0006"/><rect x="690" y="118" fill="#ff0006"/><rect x="693" y="118" fill="#ff0005"/><rect x="696" y="118" fill="#ff0005"/><rect x="699" y="118" fill="#ff0004"/><rect x="702" y="118" fill="#ff0004"/><rect x="705" y="118" fill="#ff0003"/><rect x="708" y="118" fill="#ff0003"/><rect x="711" y="118" fill="#ff0002"/><rect x="714" y="118" fill="#ff0002"/><rect x="717" y="118" fill="#ff0002"/><rect x="720" y="118" fill="#ff0001"/><rect x="723" y="118" fill="#ff0001"/><rect x="726" y="118" fill="#ff0001"/><rect x="729" y="118" fill="#ff0000"/><rect x="732" y="118" fill="#ff0000"/><rect x="735" y="118" fill="#ff0000"/><rect x="738" y="118" fill="#ff0000"/><rect x="507" y="121" fill="#00ff71"/><rect x="510" y="121" fill="#00ff72"/><rect x="513" y="121" fill="#00ff73"/><rect x="516" y="121" fill="#00ff73"/><rect x="519" y="121" fill="#00ff74"/><rect x="522" y="121" fill="#00ff75"/><rect x="525" y="121" fill="#00ff76"/><rect x="528" y="121" fill="#00ff77"/><rect x="531" y="121" fill="#00ff78"/><rect x="534" y="121" fill="#00ff79"/><rect x="537" y="121" fill="#00ff7a"/><rect x="540" y="121" fill="#00ff7b"/><rect x="543" y="121" fill="#00ff7d"/><rect x="546" y="121" fill="#00ff7e"/><rect x="549" y="121" fill="#00ff7f"/><rect x="552" y="121" fill="#00ff81"/><rect x="555" y="121" fill="#00ff82"/><rect x="558" y="121" fill="#00ff84"/><rect x="561" y="121" fill="#14ff85"/><rect x="564" y="121" fill="#2dff87"/><rect x="567" y="121" fill="#47ff89"/><rect x="570" y="121" fill="#64ff8b"/><rect x="573" y="121" fill="#83ff8d"/><rect x="576" y="121" fill="#a4ff8f"/><rect x="579" y="121" fill="#c7ff91"/><rect x="582" y="121" fill="#eeff94"/><rect x="585" y="121" fill="#ffe98a"/><rect x="588" y="121" fill="#ffc979"/><rect x="591" y="121" fill="#ffaf6b"/><rect x="594" y="121" fill="#ff9960"/><rect x="597" y="121" fill="#ff8756"/><rect x="600" y="121" fill="#ff774e"/><rect x="603" y="121" fill="#ff6a47"/><rect x="606" y="121" fill="#ff5e41"/><rect x="609" y="121" fill="#ff543c"/><rect x="612" y="121" fill="#ff4b37"/><rect x="615" y="121" fill="#ff4333"/><rect x="618" y="121" fill="#ff3c2f"/><rect x="621" y="121" fill="#ff362c"/><rect x="624" y="121" fill="#ff3029"/><rect x="627" y="121" fill="#ff2b26"/><rect x="630" y="121" fill="#ff2624"/><rect x="633" y="121" fill="#ff2121"/><rect x="636" y="121" fill="#ff1d1f"/><rect x="639" y="121" fill="#ff1a1d"/><rect x="642" y="121" fill="#ff161b"/><rect x="645" y="121" fill="#ff131a"/><rect x="648" y="121" fill="#ff1018"/><rect x="651" y="121" fill="#ff0d16"/><rect x="654" y="121" fill="#ff0b15"/><rect x="657" y="121" fill="#ff0814"/><rect x="660" y="121" fill="#ff0613"/><rect x="663" y="121" fill="#ff0411"/><rect x="666" y="121" fill="#ff0210"/><rect x="669" y="121" fill="#ff010f"/><rect x="672" y="121" fill="#ff000e"/><rect x="675" y="121" fill="#ff000d"/><rect x="678" y="121" fill="#ff000d"/><rect x="681" y="121" fill="#ff000c"/><rect x="684" y="121" fill="#ff000b"/><rect x="687" y="121" fill="#ff000a"/><rect x="690" y="121" fill="#ff000a"/><rect x="693" y="121" fill="#ff0009"/><rect x="696" y="121" fill="#ff0008"/><rect x="699" y="121" fill="#ff0008"/><rect x="702" y="121" fill="#ff0007"/><rect x="705" y="121" fill="#ff0007"/><rect x="708" y="121" fill="#ff0006"/><rect x="711" y="121" fill="#ff0005"/><rect x="714" y="121" fill="#ff0005"/><rect x="717" y="121" fill="#ff0005"/><rect x="720" y="121" fill="#ff0004"/><rect x="723" y="121" fill="#ff0004"/><rect x="726" y="121" fill="#ff0003"/><rect x="729" y="121" fill="#ff0003"/><rect x="732" y="121" fill="#ff0002"/><rect x="735" y="121" fill="#ff0002"/><rect x="738" y="121" fill="#ff0002"/><rect x="507" y="124" fill="#00ff7f"/><rect x="510" y="124" fill="#00ff80"/><rect x="513" y="124" fill="#00ff81"/><rect x="516" y="124" fill="#00ff82"/><rect x="519" y="124" fill="#00ff83"/><rect x="522" y="124" fill="#00ff85"/><rect x="525" y="124" fill="#00ff86"/><rect x="528" y="124" fill="#00ff87"/><rect x="531" y="124" fill="#00ff89"/><rect x="534" y="124" fill="#00ff8a"/><rect x="537" y="124" fill="#00ff8c"/><rect x="540" y="124" fill="#00ff8d"/><rect x="543" y="124" fill="#00ff8f"/><rect x="546" y="124" fill="#00ff91"/><rect x="549" y="124" fill="#00ff92"/><rect x="552" y="124" fill="#00ff94"/><rect x="555" y="124" fill="#00ff96"/><rect x="558" y="124" fill="#00ff99"/><rect x="561" y="124" fill="#12ff9b"/><rect x="564" y="124" fill="#2bff9d"/><rect x="567" y="124" fill="#46ffa0"/><rect x="570" y="124" fill="#63ffa2"/><rect x="573" y="124" fill="#82ffa5"/><rect x="576" y="124" fill="#a4ffa8"/><rect x="579" y="124" fill="#c9ffac"/><rect x="582" y="124" fill="#f0ffaf"/><rect x="585" y="124" fill="#ffe6a1"/><rect x="588" y="124" fill="#ffc58e"/><rect x="591" y="124" fill="#ffab7e"/><rect x="594" y="124" fill="#ff9671"/><rect x="597" y="124" fill="#ff8466"/><rect x="600" y="124" fill="#ff745d"/><rect x="603" y="124" fill="#ff6755"/><rect x="606" y="124" fill="#ff5c4e"/><rect x="609" y="124" fill="#ff5247"/><rect x="612" y="124" fill="#ff4942"/><rect x="615" y="124" fill="#ff413d"/><rect x="618" y="124" fill="#ff3a39"/><rect x="621" y="124" fill="#ff3335"/><rect x="624" y="124" fill="#ff2e31"/><rect x="627" y="124" fill="#ff282e"/><rect x="630" y="124" fill="#ff242b"/><rect x="633" y="124" fill="#ff1f29"/><rect x="636" y="124" fill="#ff1b26"/><rect x="639" y="124" fill="#ff1824"/><rect x="642" y="124" fill="#ff1422"/><rect x="645" y="124" fill="#ff1120"/><rect x="648" y="124" fill="#ff0e1e"/><rect x="651" y="124" fill="#ff0c1c"/><rect x="654" y="124" fill="#ff091b"/><rect x="657" y="124" fill="#ff0719"/><rect x="660" y="124" fill="#ff0518"/><rect x="663" y="124" fill="#ff0316"/><rect x="666" y="124" fill="#ff0115"/><rect x="669" y="124" fill="#ff0014"/><rect x="672" y="124" fill="#ff0013"/><rect x="675" y="124" fill="#ff0012"/><rect x="678" y="124" fill="#ff0011"/><rect x="681" y="124" fill="#ff0010"/><rect x="684" y="124" fill="#ff000f"/><rect x="687" y="124" fill="#ff000e"/><rect x="690" y="124" fill="#ff000d"/><rect x="693" y="124" fill="#ff000d"/><rect x="696" y="124" fill="#ff000c"/><rect x="699" y="124" fill="#ff000b"/><rect x="702" y="124" fill="#ff000b"/><rect x="705" y="124" fill="#ff000a"/><rect x="708" y="124" fill="#ff0009"/><rect x="711" y="124" fill="#ff0009"/><rect x="714" y="124" fill="#ff0008"/><rect x="717" y="124" fill="#ff0008"/><rect x="720" y="124" fill="#ff0007"/><rect x="723" y="124" fill="#ff0007"/><rect x="726" y="124" fill="#ff0006"/><rect x="729" y="124" fill="#ff0006"/><rect x="732" y="124" fill="#ff0005"/><rect x="735" y="124" fill="#ff0005"/><rect x="738" y="124" fill="#ff0004"/><rect x="507" y="127" fill="#00ff8d"/><rect x="510" y="127" fill="#00ff8f"/><rect x="513" y="127" fill="#00ff90"/><rect x="516" y="127" fill="#00ff91"/><rect x="519" y="127" fill="#00ff93"/><rect x="522" y="127" fill="#00ff95"/><rect x="525" y="127" fill="#00ff96"/><rect x="528" y="127" fill="#00ff98"/><rect x="531" y="127" fill="#00ff9a"/><rect x="534" y="127" fill="#00ff9c"/><rect x="537" y="127" fill="#00ff9e"/><rect x="540" y="127" fill="#00ffa0"/><rect x="543" y="127" fill="#00ffa2"/><rect x="546" y="127" fill="#00ffa4"/><rect x="549" y="127" fill="#00ffa6"/><rect x="552" y="127" fill="#00ffa9"/><rect x="555" y="127" fill="#00ffac"/><rect x="558" y="127" fill="#00ffae"/><rect x="561" y="127" fill="#0fffb1"/><rect x="564" y="127" fill="#28ffb5"/><rect x="567" y="127" fill="#44ffb8"/><rect x="570" y="127" fill="#62ffbb"/><rect x="573" y="127" fill="#82ffbf"/><rect x="576" y="127" fill="#a5ffc3"/><rect x="579" y="127" fill="#caffc8"/><rect x="582" y="127" fill="#f3ffcc"/><rect x="585" y="127" fill="#ffe2ba"/><rect x="588" y="127" fill="#ffc2a3"/><rect x="591" y="127" fill="#ffa891"/><rect x="594" y="127" fill="#ff9382"/><rect x="597" y="127" fill="#ff8176"/><rect x="600" y="127" fill="#ff716b"/><rect x="603" y="127" fill="#ff6462"/><rect x="606" y="127" fill="#ff595a"/><rect x="609" y="127" fill="#ff4f53"/><rect x="612" y="127" fill="#ff464d"/><rect x="615" y="127" fill="#ff3e47"/><rect x="618" y="127" fill="#ff3743"/><rect x="621" y="127" fill="#ff313e"/><rect x="624" y="127" fill="#ff2b3a"/><rect x="627" y="127" fill="#ff2636"/><rect x="630" y="127" fill="#ff2233"/><rect x="633" y="127" fill="#ff1d30"/><rect x="636" y="127" fill="#ff192d"/><rect x="639" y="127" fill="#ff162b"/><rect x="642" y="127" fill="#ff1328"/><rect x="645" y="127" fill="#ff1026"/><rect x="648" y="127" fill="#ff0d24"/><rect x="651" y="127" fill="#ff0a22"/><rect x="654" y="127" fill="#ff0820"/><rect x="657" y="127" fill="#ff051f"/><rect x="660" y="127" fill="#ff031d"/><rect x="663" y="127" fill="#ff021c"/><rect x="666" y="127" fill="#ff001a"/><rect x="669" y="127" fill="#ff0019"/><rect x="672" y="127" fill="#ff0018"/><rect x="675" y="127" fill="#ff0016"/><rect x="678" y="127" fill="#ff0015"/><rect x="681" y="127" fill="#ff0014"/><rect x="684" y="127" fill="#ff0013"/><rect x="687" y="127" fill="#ff0012"/><rect x="690" y="127" fill="#ff0011"/><rect x="693" y="127" fill="#ff0011"/><rect x="696" y="127" fill="#ff0010"/><rect x="699" y="127" fill="#ff000f"/><rect x="702" y="127" fill="#ff000e"/><rect x="705" y="127" fill="#ff000d"/><rect x="708" y="127" fill="#ff000d"/><rect x="711" y="127" fill="#ff000c"/><rect x="714" y="127" fill="#ff000b"/><rect x="717" y="127" fill="#ff000b"/><rect x="720" y="127" fill="#ff000a"/><rect x="723" y="127" fill="#ff000a"/><rect x="726" y="127" fill="#ff0009"/><rect x="729" y="127" fill="#ff0009"/><rect x="732" y="127" fill="#ff0008"/><rect x="735" y="127" fill="#ff0008"/><rect x="738" y="127" fill="#ff0007"/><rect x="507" y="130" fill="#00ff9c"/><rect x="510" y="130" fill="#00ff9e"/><rect x="513" y="130" fill="#00ffa0"/><rect x="516" y="130" fill="#00ffa1"/><rect x="519" y="130" fill="#00ffa3"/><rect x="522" y="130" fill="#00ffa5"/><rect x="525" y="130" fill="#00ffa7"/><rect x="528" y="130" fill="#00ffa9"/><rect x="531" y="130" fill="#00ffac"/><rect x="534" y="130" fill="#00ffae"/><rect x="537" y="130" fill="#00ffb0"/><rect x="540" y="130" fill="#00ffb3"/><rect x="543" y="130" fill="#00ffb6"/><rect x="546" y="130" fill="#00ffb8"/><rect x="549" y="130" fill="#00ffbb"/><rect x="552" y="130" fill="#00ffbf"/><rect x="555" y="130" fill="#00ffc2"/><rect x="558" y="130" fill="#00ffc5"/><rect x="561" y="130" fill="#0dffc9"/><rect x="564" y="130" fill="#26ffcd"/><rect x="567" y="130" fill="#42ffd1"/><rect x="570" y="130" fill="#61ffd6"/><rect x="573" y="130" fill="#82ffdb"/><rect x="576" y="130" fill="#a5ffe0"/><rect x="579" y="130" fill="#ccffe5"/><rect x="582" y="130" fill="#f6ffeb"/><rect x="585" y="130" fill="#ffdfd3"/><rect x="588" y="130" fill="#ffbfba"/><rect x="591" y="130" fill="#ffa5a5"/><rect x="594" y="130" fill="#ff8f94"/><rect x="597" y="130" fill="#ff7d86"/><rect x="600" y="130" fill="#ff6e7a"/><rect x="603" y="130" fill="#ff6170"/><rect x="606" y="130" fill="#ff5667"/><rect x="609" y="130" fill="#ff4c5f"/><rect x="612" y="130" fill="#ff4358"/><rect x="615" y="130" fill="#ff3c52"/><rect x="618" y="130" fill="#ff354c"/><rect x="621" y="130" fill="#ff2f47"/><rect x="624" y="130" fill="#ff2943"/><rect x="627" y="130" fill="#ff243f"/><rect x="630" y="130" fill="#ff203b"/><rect x="633" y="130" fill="#ff1b38"/><rect x="636" y="130" fill="#ff1835"/><rect x="639" y="130" fill="#ff1432"/><rect x="642" y="130" fill="#ff112f"/><rect x="645" y="130" fill="#ff0e2d"/><rect x="648" y="130" fill="#ff0b2a"/><rect x="651" y="130" fill="#ff0828"/><rect x="654" y="130" fill="#ff0626"/><rect x="657" y="130" fill="#ff0424"/><rect x="660" y="130" fill="#ff0222"/><rect x="663" y="130" fill="#ff0021"/><rect x="666" y="130" fill="#ff001f"/><rect x="669" y="130" fill="#ff001e"/><rect x="672" y="130" fill="#ff001c"/><rect x="675" y="130" fill="#ff001b"/><rect x="678" y="130" fill="#ff001a"/><rect x="681" y="130" fill="#ff0019"/><rect x="684" y="130" fill="#ff0018"/><rect x="687" y="130" fill="#ff0016"/><rect x="690" y="130" fill="#ff0015"/><rect x="693" y="130" fill="#ff0014"/><rect x="696" y="130" fill="#ff0014"/><rect x="699" y="130" fill="#ff0013"/><rect x="702" y="130" fill="#ff0012"/><rect x="705" y="130" fill="#ff0011"/><rect x="708" y="130" fill="#ff0010"/><rect x="711" y="130" fill="#ff000f"/><rect x="714" y="130" fill="#ff000f"/><rect x="717" y="130" fill="#ff000e"/><rect x="720" y="130" fill="#ff000d"/><rect x="723" y="130" fill="#ff000d"/><rect x="726" y="130" fill="#ff000c"/><rect x="729" y="130" fill="#ff000c"/><rect x="732" y="130" fill="#ff000b"/><rect x="735" y="130" fill="#ff000b"/><rect x="738" y="130" fill="#ff000a"/><rect x="510" y="133" fill="#00ffae"/><rect x="513" y="133" fill="#00ffb0"/><rect x="516" y="133" fill="#00ffb2"/><rect x="519" y="133" fill="#00ffb4"/><rect x="522" y="133" fill="#00ffb6"/><rect x="525" y="133" fill="#00ffb9"/><rect x="528" y="133" fill="#00ffbb"/><rect x="531" y="133" fill="#00ffbe"/><rect x="534" y="133" fill="#00ffc1"/><rect x="537" y="133" fill="#00ffc4"/><rect x="540" y="133" fill="#00ffc7"/><rect x="543" y="133" fill="#00ffca"/><rect x="546" y="133" fill="#00ffce"/><rect x="549" y="133" fill="#00ffd1"/><rect x="552" y="133" fill="#00ffd5"/><rect x="555" y="133" fill="#00ffd9"/><rect x="558" y="133" fill="#00ffde"/><rect x="561" y="133" fill="#0affe2"/><rect x="564" y="133" fill="#24ffe7"/><rect x="567" y="133" fill="#40ffec"/><rect x="570" y="133" fill="#60fff2"/><rect x="573" y="133" fill="#81fff8"/><rect x="576" y="133" fill="#a6fffe"/><rect x="579" y="133" fill="#c9f9ff"/><rect x="582" y="133" fill="#edf3ff"/><rect x="585" y="133" fill="#ffdcee"/><rect x="588" y="133" fill="#ffbbd1"/><rect x="591" y="133" fill="#ffa1ba"/><rect x="594" y="133" fill="#ff8ca7"/><rect x="597" y="133" fill="#ff7a97"/><rect x="600" y="133" fill="#ff6b89"/><rect x="603" y="133" fill="#ff5e7e"/><rect x="606" y="133" fill="#ff5374"/><rect x="609" y="133" fill="#ff496b"/><rect x="612" y="133" fill="#ff4163"/><rect x="615" y="133" fill="#ff395d"/><rect x="618" y="133" fill="#ff3256"/><rect x="621" y="133" fill="#ff2c51"/><rect x="624" y="133" fill="#ff274c"/><rect x="627" y="133" fill="#ff2247"/><rect x="630" y="133" fill="#ff1d43"/><rect x="633" y="133" fill="#ff193f"/><rect x="636" y="133" fill="#ff163c"/><rect x="639" y="133" fill="#ff1239"/><rect x="642" y="133" fill="#ff0f36"/><rect x="645" y="133" fill="#ff0c33"/><rect x="648" y="133" fill="#ff0931"/><rect x="651" y="133" fill="#ff072e"/><rect x="654" y="133" fill="#ff052c"/><rect x="657" y="133" fill="#ff032a"/><rect x="660" y="133" fill="#ff0128"/><rect x="663" y="133" fill="#ff0026"/><rect x="666" y="133" fill="#ff0024"/><rect x="669" y="133" fill="#ff0023"/><rect x="672" y="133" fill="#ff0021"/><rect x="675" y="133" fill="#ff0020"/><rect x="678" y="133" fill="#ff001e"/><rect x="681" y="133" fill="#ff001d"/><rect x="684" y="133" fill="#ff001c"/><rect x="687" y="133" fill="#ff001b"/><rect x="690" y="133" fill="#ff001a"/><rect x="693" y="133" fill="#ff0018"/><rect x="696" y="133" fill="#ff0017"/><rect x="699" y="133" fill="#ff0016"/><rect x="702" y="133" fill="#ff0016"/><rect x="705" y="133" fill="#ff0015"/><rect x="708" y="133" fill="#ff0014"/><rect x="711" y="133" fill="#ff0013"/><rect x="714" y="133" fill="#ff0012"/><rect x="717" y="133" fill="#ff0011"/><rect x="720" y="133" fill="#ff0011"/><rect x="723" y="133" fill="#ff0010"/><rect x="726" y="133" fill="#ff000f"/><rect x="729" y="133" fill="#ff000f"/><rect x="732" y="133" fill="#ff000e"/><rect x="735" y="133" fill="#ff000d"/><rect x="738" y="133" fill="#ff000d"/><rect x="510" y="136" fill="#00ffbe"/><rect x="513" y="136" fill="#00ffc0"/><rect x="516" y="136" fill="#00ffc3"/><rect x="519" y="136" fill="#00ffc6"/><rect x="522" y="136" fill="#00ffc8"/><rect x="525" y="136" fill="#00ffcb"/><rect x="528" y="136" fill="#00ffce"/><rect x="531" y="136" fill="#00ffd1"/><rect x="534" y="136" fill="#00ffd5"/><rect x="537" y="136" fill="#00ffd8"/><rect x="540" y="136" fill="#00ffdc"/><rect x="543" y="136" fill="#00ffe0"/><rect x="546" y="136" fill="#00ffe4"/><rect x="549" y="136" fill="#00ffe8"/><rect x="552" y="136" fill="#00ffed"/><rect x="555" y="136" fill="#00fff2"/><rect x="558" y="136" fill="#00fff7"/><rect x="561" y="136" fill="#07fffd"/><rect x="564" y="136" fill="#21fcff"/><rect x="567" y="136" fill="#3cf6ff"/><rect x="570" y="136" fill="#59f0ff"/><rect x="573" y="136" fill="#76eaff"/><rect x="576" y="136" fill="#95e3ff"/><rect x="579" y="136" fill="#b4ddff"/><rect x="582" y="136" fill="#d4d6ff"/><rect x="585" y="136" fill="#f5d0ff"/><rect x="588" y="136" fill="#ffb8e9"/><rect x="591" y="136" fill="#ff9ecf"/><rect x="594" y="136" fill="#ff88ba"/><rect x="597" y="136" fill="#ff77a8"/><rect x="600" y="136" fill="#ff6899"/><rect x="603" y="136" fill="#ff5b8c"/><rect x="606" y="136" fill="#ff5081"/><rect x="609" y="136" fill="#ff4678"/><rect x="612" y="136" fill="#ff3e6f"/><rect x="615" y="136" fill="#ff3767"/><rect x="618" y="136" fill="#ff3061"/><rect x="621" y="136" fill="#ff2a5b"/><rect x="624" y="136" fill="#ff2555"/><rect x="627" y="136" fill="#ff2050"/><rect x="630" y="136" fill="#ff1b4c"/><rect x="633" y="136" fill="#ff1747"/><rect x="636" y="136" fill="#ff1444"/><rect x="639" y="136" fill="#ff1040"/><rect x="642" y="136" fill="#ff0d3d"/><rect x="645" y="136" fill="#ff0a3a"/><rect x="648" y="136" fill="#ff0837"/><rect x="651" y="136" fill="#ff0534"/><rect x="654" y="136" fill="#ff0332"/><rect x="657" y="136" fill="#ff0130"/><rect x="660" y="136" fill="#ff002d"/><rect x="663" y="136" fill="#ff002b"/><rect x="666" y="136" fill="#ff002a"/><rect x="669" y="136" fill="#ff0028"/><rect x="672" y="136" fill="#ff0026"/><rect x="675" y="136" fill="#ff0024"/><rect x="678" y="136" fill="#ff0023"/><rect x="681" y="136" fill="#ff0022"/><rect x="684" y="136" fill="#ff0020"/><rect x="687" y="136" fill="#ff001f"/><rect x="690" y="136" fill="#ff001e"/><rect x="693" y="136" fill="#ff001c"/><rect x="696" y="136" fill="#ff001b"/><rect x="699" y="136" fill="#ff001a"/><rect x="702" y="136" fill="#ff0019"/><rect x="705" y="136" fill="#ff0018"/><rect x="708" y="136" fill="#ff0017"/><rect x="711" y="136" fill="#ff0016"/><rect x="714" y="136" fill="#ff0016"/><rect x="717" y="136" fill="#ff0015"/><rect x="720" y="136" fill="#ff0014"/><rect x="723" y="136" fill="#ff0013"/><rect x="726" y="136" fill="#ff0012"/><rect x="729" y="136" fill="#ff0012"/><rect x="732" y="136" fill="#ff0011"/><rect x="735" y="136" fill="#ff0010"/><rect x="510" y="139" fill="#00ffcf"/><rect x="513" y="139" fill="#00ffd2"/><rect x="516" y="139" fill="#00ffd5"/><rect x="519" y="139" fill="#00ffd8"/><rect x="522" y="139" fill="#00ffdb"/><rect x="525" y="139" fill="#00ffde"/><rect x="528" y="139" fill="#00ffe2"/><rect x="531" y="139" fill="#00ffe6"/><rect x="534" y="139" fill="#00ffea"/><rect x="537" y="139" fill="#00ffee"/><rect x="540" y="139" fill="#00fff2"/><rect x="543" y="139" fill="#00fff7"/><rect x="546" y="139" fill="#00fffc"/><rect x="549" y="139" fill="#00fdff"/><rect x="552" y="139" fill="#00f8ff"/><rect x="555" y="139" fill="#00f3ff"/><rect x="558" y="139" fill="#00edff"/><rect x="561" y="139" fill="#04e8ff"/><rect x="564" y="139" fill="#1be2ff"/><rect x="567" y="139" fill="#34ddff"/><rect x="570" y="139" fill="#4ed7ff"/><rect x="573" y="139" fill="#69d1ff"/><rect x="576" y="139" fill="#85cbff"/><rect x="579" y="139" fill="#a2c5ff"/><rect x="582" y="139" fill="#bfbfff"/><rect x="585" y="139" fill="#deb9ff"/><rect x="588" y="139" fill="#fdb2ff"/><rect x="591" y="139" fill="#ff9ae5"/><rect x="594" y="139" fill="#ff85cd"/><rect x="597" y="139" fill="#ff73ba"/><rect x="600" y="139" fill="#ff65a9"/><rect x="603" y="139" fill="#ff589b"/><rect x="606" y="139" fill="#ff4d8f"/><rect x="609" y="139" fill="#ff4484"/><rect x="612" y="139" fill="#ff3b7b"/><rect x="615" y="139" fill="#ff3473"/><rect x="618" y="139" fill="#ff2d6b"/><rect x="621" y="139" fill="#ff2764"/><rect x="624" y="139" fill="#ff225e"/><rect x="627" y="139" fill="#ff1d59"/><rect x="630" y="139" fill="#ff1954"/><rect x="633" y="139" fill="#ff154f"/><rect x="636" y="139" fill="#ff124b"/><rect x="639" y="139" fill="#ff0e47"/><rect x="642" y="139" fill="#ff0b44"/><rect x="645" y="139" fill="#ff0941"/><rect x="648" y="139" fill="#ff063d"/><rect x="651" y="139" fill="#ff043b"/><rect x="654" y="139" fill="#ff0238"/><rect x="657" y="139" fill="#ff0035"/><rect x="660" y="139" fill="#ff0033"/><rect x="663" y="139" fill="#ff0031"/><rect x="666" y="139" fill="#ff002f"/><rect x="669" y="139" fill="#ff002d"/><rect x="672" y="139" fill="#ff002b"/><rect x="675" y="139" fill="#ff0029"/><rect x="678" y="139" fill="#ff0028"/><rect x="681" y="139" fill="#ff0026"/><rect x="684" y="139" fill="#ff0025"/><rect x="687" y="139" fill="#ff0023"/><rect x="690" y="139" fill="#ff0022"/><rect x="693" y="139" fill="#ff0021"/><rect x="696" y="139" fill="#ff001f"/><rect x="699" y="139" fill="#ff001e"/><rect x="702" y="139" fill="#ff001d"/><rect x="705" y="139" fill="#ff001c"/><rect x="708" y="139" fill="#ff001b"/><rect x="711" y="139" fill="#ff001a"/><rect x="714" y="139" fill="#ff0019"/><rect x="717" y="139" fill="#ff0018"/><rect x="720" y="139" fill="#ff0017"/><rect x="723" y="139" fill="#ff0016"/><rect x="726" y="139" fill="#ff0016"/><rect x="729" y="139" fill="#ff0015"/><rect x="732" y="139" fill="#ff0014"/><rect x="510" y="142" fill="#00ffe0"/><rect x="513" y="142" fill="#00ffe3"/><rect x="516" y="142" fill="#00ffe7"/><rect x="519" y="142" fill="#00ffea"/><rect x="522" y="142" fill="#00ffee"/><rect x="525" y="142" fill="#00fff2"/><rect x="528" y="142" fill="#00fff6"/><rect x="531" y="142" fill="#00fffb"/><rect x="534" y="142" fill="#00ffff"/><rect x="537" y="142" fill="#00faff"/><rect x="540" y="142" fill="#00f5ff"/><rect x="543" y="142" fill="#00f1ff"/><rect x="546" y="142" fill="#00ecff"/><rect x="549" y="142" fill="#00e7ff"/><rect x="552" y="142" fill="#00e2ff"/><rect x="555" y="142" fill="#00dcff"/><rect x="558" y="142" fill="#00d7ff"/><rect x="561" y="142" fill="#01d2ff"/><rect x="564" y="142" fill="#16cdff"/><rect x="567" y="142" fill="#2ec7ff"/><rect x="570" y="142" fill="#46c2ff"/><rect x="573" y="142" fill="#5fbcff"/><rect x="576" y="142" fill="#78b6ff"/><rect x="579" y="142" fill="#93b1ff"/><rect x="582" y="142" fill="#aeabff"/><rect x="585" y="142" fill="#c9a5ff"/><rect x="588" y="142" fill="#e69fff"/><rect x="591" y="142" fill="#ff96fb"/><rect x="594" y="142" fill="#ff81e1"/><rect x="597" y="142" fill="#ff70cc"/><rect x="600" y="142" fill="#ff61ba"/><rect x="603" y="142" fill="#ff55aa"/><rect x="606" y="142" fill="#ff4a9d"/><rect x="609" y="142" fill="#ff4191"/><rect x="612" y="142" fill="#ff3887"/><rect x="615" y="142" fill="#ff317e"/><rect x="618" y="142" fill="#ff2b76"/><rect x="621" y="142" fill="#ff256e"/><rect x="624" y="142" fill="#ff2068"/><rect x="627" y="142" fill="#ff1b62"/><rect x="630" y="142" fill="#ff175d"/><rect x="633" y="142" fill="#ff1358"/><rect x="636" y="142" fill="#ff1053"/><rect x="639" y="142" fill="#ff0c4f"/><rect x="642" y="142" fill="#ff094b"/><rect x="645" y="142" fill="#ff0747"/><rect x="648" y="142" fill="#ff0444"/><rect x="651" y="142" fill="#ff0241"/><rect x="654" y="142" fill="#ff003e"/><rect x="657" y="142" fill="#ff003b"/><rect x="660" y="142" fill="#ff0039"/><rect x="663" y="142" fill="#ff0036"/><rect x="666" y="142" fill="#ff0034"/><rect x="669" y="142" fill="#ff0032"/><rect x="672" y="142" fill="#ff0030"/><rect x="675" y="142" fill="#ff002e"/><rect x="678" y="142" fill="#ff002c"/><rect x="681" y="142" fill="#ff002b"/><rect x="684" y="142" fill="#ff0029"/><rect x="687" y="142" fill="#ff0028"/><rect x="690" y="142" fill="#ff0026"/><rect x="693" y="142" fill="#ff0025"/><rect x="696" y="142" fill="#ff0023"/><rect x="699" y="142" fill="#ff0022"/><rect x="702" y="142" fill="#ff0021"/><rect x="705" y="142" fill="#ff0020"/><rect x="708" y="142" fill="#ff001f"/><rect x="711" y="142" fill="#ff001e"/><rect x="714" y="142" fill="#ff001d"/><rect x="717" y="142" fill="#ff001c"/><rect x="720" y="142" fill="#ff001b"/><rect x="723" y="142" fill="#ff001a"/><rect x="726" y="142" fill="#ff0019"/><rect x="729" y="142" fill="#ff0018"/><rect x="513" y="145" fill="#00fff6"/><rect x="516" y="145" fill="#00fffa"/><rect x="519" y="145" fill="#00fffe"/><rect x="522" y="145" fill="#00fcff"/><rect x="525" y="145" fill="#00f7ff"/><rect x="528" y="145" fill="#00f3ff"/><rect x="531" y="145" fill="#00efff"/><rect x="534" y="145" fill="#00eaff"/><rect x="537" y="145" fill="#00e6ff"/><rect x="540" y="145" fill="#00e1ff"/><rect x="543" y="145" fill="#00dcff"/><rect x="546" y="145" fill="#00d8ff"/><rect x="549" y="145" fill="#00d3ff"/><rect x="552" y="145" fill="#00ceff"/><rect x="555" y="145" fill="#00c9ff"/><rect x="558" y="145" fill="#00c4ff"/><rect x="561" y="145" fill="#00bfff"/><rect x="564" y="145" fill="#12baff"/><rect x="567" y="145" fill="#28b5ff"/><rect x="570" y="145" fill="#3eafff"/><rect x="573" y="145" fill="#55aaff"/><rect x="576" y="145" fill="#6da5ff"/><rect x="579" y="145" fill="#859fff"/><rect x="582" y="145" fill="#9e99ff"/><rect x="585" y="145" fill="#b894ff"/><rect x="588" y="145" fill="#d28eff"/><rect x="591" y="145" fill="#ed88ff"/><rect x="594" y="145" fill="#ff7ef6"/><rect x="597" y="145" fill="#ff6cde"/><rect x="600" y="145" fill="#ff5ecb"/><rect x="603" y="145" fill="#ff52ba"/><rect x="606" y="145" fill="#ff47ab"/><rect x="609" y="145" fill="#ff3e9e"/><rect x="612" y="145" fill="#ff3693"/><rect x="615" y="145" fill="#ff2f89"/><rect x="618" y="145" fill="#ff2881"/><rect x="621" y="145" fill="#ff2379"/><rect x="624" y="145" fill="#ff1e72"/><rect x="627" y="145" fill="#ff196b"/><rect x="630" y="145" fill="#ff1565"/><rect x="633" y="145" fill="#ff1160"/><rect x="636" y="145" fill="#ff0e5b"/><rect x="639" y="145" fill="#ff0a56"/><rect x="642" y="145" fill="#ff0852"/><rect x="645" y="145" fill="#ff054e"/><rect x="648" y="145" fill="#ff034b"/><rect x="651" y="145" fill="#ff0147"/><rect x="654" y="145" fill="#ff0044"/><rect x="657" y="145" fill="#ff0041"/><rect x="660" y="145" fill="#ff003f"/><rect x="663" y="145" fill="#ff003c"/><rect x="666" y="145" fill="#ff003a"/><rect x="669" y="145" fill="#ff0037"/><rect x="672" y="145" fill="#ff0035"/><rect x="675" y="145" fill="#ff0033"/><rect x="678" y="145" fill="#ff0031"/><rect x="681" y="145" fill="#ff002f"/><rect x="684" y="145" fill="#ff002e"/><rect x="687" y="145" fill="#ff002c"/><rect x="690" y="145" fill="#ff002a"/><rect x="693" y="145" fill="#ff0029"/><rect x="696" y="145" fill="#ff0027"/><rect x="699" y="145" fill="#ff0026"/><rect x="702" y="145" fill="#ff0025"/><rect x="705" y="145" fill="#ff0024"/><rect x="708" y="145" fill="#ff0022"/><rect x="711" y="145" fill="#ff0021"/><rect x="714" y="145" fill="#ff0020"/><rect x="717" y="145" fill="#ff001f"/><rect x="720" y="145" fill="#ff001e"/><rect x="723" y="145" fill="#ff001d"/><rect x="726" y="145" fill="#ff001c"/><rect x="729" y="145" fill="#ff001b"/><rect x="513" y="148" fill="#00f5ff"/><rect x="516" y="148" fill="#00f1ff"/><rect x="519" y="148" fill="#00edff"/><rect x="522" y="148" fill="#00e9ff"/><rect x="525" y="148" fill="#00e5ff"/><rect x="528" y="148" fill="#00e0ff"/><rect x="531" y="148" fill="#00dcff"/><rect x="534" y="148" fill="#00d8ff"/><rect x="537" y="148" fill="#00d3ff"/><rect x="540" y="148" fill="#00cfff"/><rect x="543" y="148" fill="#00caff"/><rect x="546" y="148" fill="#00c6ff"/><rect x="549" y="148" fill="#00c1ff"/><rect x="552" y="148" fill="#00bdff"/><rect x="555" y="148" fill="#00b8ff"/><rect x="558" y="148" fill="#00b3ff"/><rect x="561" y="148" fill="#00aeff"/><rect x="564" y="148" fill="#0fa9ff"/><rect x="567" y="148" fill="#23a4ff"/><rect x="570" y="148" fill="#379fff"/><rect x="573" y="148" fill="#4d9aff"/><rect x="576" y="148" fill="#6395ff"/><rect x="579" y="148" fill="#7a90ff"/><rect x="582" y="148" fill="#918aff"/><rect x="585" y="148" fill="#a985ff"/><rect x="588" y="148" fill="#c17fff"/><rect x="591" y="148" fill="#da7aff"/><rect x="594" y="148" fill="#f474ff"/><rect x="597" y="148" fill="#ff69f1"/><rect x="600" y="148" fill="#ff5adc"/><rect x="603" y="148" fill="#ff4ec9"/><rect x="606" y="148" fill="#ff44ba"/><rect x="609" y="148" fill="#ff3bac"/><rect x="612" y="148" fill="#ff33a0"/><rect x="615" y="148" fill="#ff2c95"/><rect x="618" y="148" fill="#ff268c"/><rect x="621" y="148" fill="#ff2083"/><rect x="624" y="148" fill="#ff1b7b"/><rect x="627" y="148" fill="#ff1774"/><rect x="630" y="148" fill="#ff136e"/><rect x="633" y="148" fill="#ff0f68"/><rect x="636" y="148" fill="#ff0c63"/><rect x="639" y="148" fill="#ff095e"/><rect x="642" y="148" fill="#ff065a"/><rect x="645" y="148" fill="#ff0355"/><rect x="648" y="148" fill="#ff0152"/><rect x="651" y="148" fill="#ff004e"/><rect x="654" y="148" fill="#ff004b"/><rect x="657" y="148" fill="#ff0047"/><rect x="660" y="148" fill="#ff0044"/><rect x="663" y="148" fill="#ff0042"/><rect x="666" y="148" fill="#ff003f"/><rect x="669" y="148" fill="#ff003d"/><rect x="672" y="148" fill="#ff003a"/><rect x="675" y="148" fill="#ff0038"/><rect x="678" y="148" fill="#ff0036"/><rect x="681" y="148" fill="#ff0034"/><rect x="684" y="148" fill="#ff0032"/><rect x="687" y="148" fill="#ff0030"/><rect x="690" y="148" fill="#ff002f"/><rect x="693" y="148" fill="#ff002d"/><rect x="696" y="148" fill="#ff002c"/><rect x="699" y="148" fill="#ff002a"/><rect x="702" y="148" fill="#ff0029"/><rect x="705" y="148" fill="#ff0027"/><rect x="708" y="148" fill="#ff0026"/><rect x="711" y="148" fill="#ff0025"/><rect x="714" y="148" fill="#ff0024"/><rect x="717" y="148" fill="#ff0023"/><rect x="720" y="148" fill="#ff0021"/><rect x="723" y="148" fill="#ff0020"/><rect x="726" y="148" fill="#ff001f"/><rect x="513" y="151" fill="#00e4ff"/><rect x="516" y="151" fill="#00e0ff"/><rect x="519" y="151" fill="#00dcff"/><rect x="522" y="151" fill="#00d8ff"/><rect x="525" y="151" fill="#00d4ff"/><rect x="528" y="151" fill="#00d0ff"/><rect x="531" y="151" fill="#00ccff"/><rect x="534" y="151" fill="#00c8ff"/><rect x="537" y="151" fill="#00c3ff"/><rect x="540" y="151" fill="#00bfff"/><rect x="543" y="151" fill="#00bbff"/><rect x="546" y="151" fill="#00b6ff"/><rect x="549" y="151" fill="#00b2ff"/><rect x="552" y="151" fill="#00adff"/><rect x="555" y="151" fill="#00a9ff"/><rect x="558" y="151" fill="#00a4ff"/><rect x="561" y="151" fill="#009fff"/><rect x="564" y="151" fill="#0c9bff"/><rect x="567" y="151" fill="#1e96ff"/><rect x="570" y="151" fill="#3291ff"/><rect x="573" y="151" fill="#468cff"/><rect x="576" y="151" fill="#5b87ff"/><rect x="579" y="151" fill="#7082ff"/><rect x="582" y="151" fill="#867dff"/><rect x="585" y="151" fill="#9c78ff"/><rect x="588" y="151" fill="#b273ff"/><rect x="591" y="151" fill="#ca6eff"/><rect x="594" y="151" fill="#e168ff"/><rect x="597" y="151" fill="#f963ff"/><rect x="600" y="151" fill="#ff57ed"/><rect x="603" y="151" fill="#ff4bda"/><rect x="606" y="151" fill="#ff41c8"/><rect x="609" y="151" fill="#ff38ba"/><rect x="612" y="151" fill="#ff30ad"/><rect x="615" y="151" fill="#ff29a1"/><rect x="618" y="151" fill="#ff2397"/><rect x="621" y="151" fill="#ff1e8e"/><rect x="624" y="151" fill="#ff1985"/><rect x="627" y="151" fill="#ff147e"/><rect x="630" y="151" fill="#ff1077"/><rect x="633" y="151" fill="#ff0d71"/><rect x="636" y="151" fill="#ff0a6b"/><rect x="639" y="151" fill="#ff0766"/><rect x="642" y="151" fill="#ff0461"/><rect x="645" y="151" fill="#ff025d"/><rect x="648" y="151" fill="#ff0058"/><rect x="651" y="151" fill="#ff0054"/><rect x="654" y="151" fill="#ff0051"/><rect x="657" y="151" fill="#ff004e"/><rect x="660" y="151" fill="#ff004a"/><rect x="663" y="151" fill="#ff0047"/><rect x="666" y="151" fill="#ff0045"/><rect x="669" y="151" fill="#ff0042"/><rect x="672" y="151" fill="#ff003f"/><rect x="675" y="151" fill="#ff003d"/><rect x="678" y="151" fill="#ff003b"/><rect x="681" y="151" fill="#ff0039"/><rect x="684" y="151" fill="#ff0037"/><rect x="687" y="151" fill="#ff0035"/><rect x="690" y="151" fill="#ff0033"/><rect x="693" y="151" fill="#ff0031"/><rect x="696" y="151" fill="#ff0030"/><rect x="699" y="151" fill="#ff002e"/><rect x="702" y="151" fill="#ff002d"/><rect x="705" y="151" fill="#ff002b"/><rect x="708" y="151" fill="#ff002a"/><rect x="711" y="151" fill="#ff0029"/><rect x="714" y="151" fill="#ff0027"/><rect x="717" y="151" fill="#ff0026"/><rect x="720" y="151" fill="#ff0025"/><rect x="723" y="151" fill="#ff0024"/><rect x="516" y="154" fill="#00d1ff"/><rect x="519" y="154" fill="#00cdff"/><rect x="522" y="154" fill="#00c9ff"/><rect x="525" y="154" fill="#00c5ff"/><rect x="528" y="154" fill="#00c1ff"/><rect x="531" y="154" fill="#00bdff"/><rect x="534" y="154" fill="#00b9ff"/><rect x="537" y="154" fill="#00b5ff"/><rect x="540" y="154" fill="#00b1ff"/><rect x="543" y="154" fill="#00acff"/><rect x="546" y="154" fill="#00a8ff"/><rect x="549" y="154" fill="#00a4ff"/><rect x="552" y="154" fill="#00a0ff"/><rect x="555" y="154" fill="#009bff"/><rect x="558" y="154" fill="#0097ff"/><rect x="561" y="154" fill="#0092ff"/><rect x="564" y="154" fill="#098eff"/><rect x="567" y="154" fill="#1a89ff"/><rect x="570" y="154" fill="#2d85ff"/><rect x="573" y="154" fill="#3f80ff"/><rect x="576" y="154" fill="#537bff"/><rect x="579" y="154" fill="#6776ff"/><rect x="582" y="154" fill="#7b71ff"/><rect x="585" y="154" fill="#906dff"/><rect x="588" y="154" fill="#a568ff"/><rect x="591" y="154" fill="#bb63ff"/><rect x="594" y="154" fill="#d15dff"/><rect x="597" y="154" fill="#e858ff"/><rect x="600" y="154" fill="#fe53ff"/><rect x="603" y="154" fill="#ff47ea"/><rect x="606" y="154" fill="#ff3dd8"/><rect x="609" y="154" fill="#ff35c8"/><rect x="612" y="154" fill="#ff2dba"/><rect x="615" y="154" fill="#ff26ad"/><rect x="618" y="154" fill="#ff20a2"/><rect x="621" y="154" fill="#ff1b98"/><rect x="624" y="154" fill="#ff168f"/><rect x="627" y="154" fill="#ff1287"/><rect x="630" y="154" fill="#ff0e80"/><rect x="633" y="154" fill="#ff0b79"/><rect x="636" y="154" fill="#ff0873"/><rect x="639" y="154" fill="#ff056e"/><rect x="642" y="154" fill="#ff0269"/><rect x="645" y="154" fill="#ff0064"/><rect x="648" y="154" fill="#ff005f"/><rect x="651" y="154" fill="#ff005b"/><rect x="654" y="154" fill="#ff0057"/><rect x="657" y="154" fill="#ff0054"/><rect x="660" y="154" fill="#ff0050"/><rect x="663" y="154" fill="#ff004d"/><rect x="666" y="154" fill="#ff004a"/><rect x="669" y="154" fill="#ff0047"/><rect x="672" y="154" fill="#ff0045"/><rect x="675" y="154" fill="#ff0042"/><rect x="678" y="154" fill="#ff0040"/><rect x="681" y="154" fill="#ff003e"/><rect x="684" y="154" fill="#ff003b"/><rect x="687" y="154" fill="#ff0039"/><rect x="690" y="154" fill="#ff0038"/><rect x="693" y="154" fill="#ff0036"/><rect x="696" y="154" fill="#ff0034"/><rect x="699" y="154" fill="#ff0032"/><rect x="702" y="154" fill="#ff0031"/><rect x="705" y="154" fill="#ff002f"/><rect x="708" y="154" fill="#ff002e"/><rect x="711" y="154" fill="#ff002c"/><rect x="714" y="154" fill="#ff002b"/><rect x="717" y="154" fill="#ff002a"/><rect x="720" y="154" fill="#ff0028"/><rect x="516" y="157" fill="#00c3ff"/><rect x="519" y="157" fill="#00bfff"/><rect x="522" y="157" fill="#00bbff"/><rect x="525" y="157" fill="#00b7ff"/><rect x="528" y="157" fill="#00b4ff"/><rect x="531" y="157" fill="#00b0ff"/><rect x="534" y="157" fill="#00acff"/><rect x="537" y="157" fill="#00a8ff"/><rect x="540" y="157" fill="#00a4ff"/><rect x="543" y="157" fill="#00a0ff"/><rect x="546" y="157" fill="#009cff"/><rect x="549" y="157" fill="#0098ff"/><rect x="552" y="157" fill="#0093ff"/><rect x="555" y="157" fill="#008fff"/><rect x="558" y="157" fill="#008bff"/><rect x="561" y="157" fill="#0087ff"/><rect x="564" y="157" fill="#0682ff"/><rect x="567" y="157" fill="#177eff"/><rect x="570" y="157" fill="#2879ff"/><rect x="573" y="157" fill="#3a75ff"/><rect x="576" y="157" fill="#4c70ff"/><rect x="579" y="157" fill="#5f6cff"/><rect x="582" y="157" fill="#7267ff"/><rect x="585" y="157" fill="#8662ff"/><rect x="588" y="157" fill="#9a5eff"/><rect x="591" y="157" fill="#ae59ff"/><rect x="594" y="157" fill="#c354ff"/><rect x="597" y="157" fill="#d84fff"/><rect x="600" y="157" fill="#ed4aff"/><rect x="603" y="157" fill="#ff44fb"/><rect x="606" y="157" fill="#ff3ae7"/><rect x="609" y="157" fill="#ff32d6"/><rect x="612" y="157" fill="#ff2ac7"/><rect x="615" y="157" fill="#ff23ba"/><rect x="618" y="157" fill="#ff1eae"/><rect x="621" y="157" fill="#ff18a3"/><rect x="624" y="157" fill="#ff149a"/><rect x="627" y="157" fill="#ff1091"/><rect x="630" y="157" fill="#ff0c89"/><rect x="633" y="157" fill="#ff0982"/><rect x="636" y="157" fill="#ff067c"/><rect x="639" y="157" fill="#ff0376"/><rect x="642" y="157" fill="#ff0070"/><rect x="645" y="157" fill="#ff006b"/><rect x="648" y="157" fill="#ff0066"/><rect x="651" y="157" fill="#ff0062"/><rect x="654" y="157" fill="#ff005e"/><rect x="657" y="157" fill="#ff005a"/><rect x="660" y="157" fill="#ff0056"/><rect x="663" y="157" fill="#ff0053"/><rect x="666" y="157" fill="#ff0050"/><rect x="669" y="157" fill="#ff004d"/><rect x="672" y="157" fill="#ff004a"/><rect x="675" y="157" fill="#ff0047"/><rect x="678" y="157" fill="#ff0045"/><rect x="681" y="157" fill="#ff0042"/><rect x="684" y="157" fill="#ff0040"/><rect x="687" y="157" fill="#ff003e"/><rect x="690" y="157" fill="#ff003c"/><rect x="693" y="157" fill="#ff003a"/><rect x="696" y="157" fill="#ff0038"/><rect x="699" y="157" fill="#ff0036"/><rect x="702" y="157" fill="#ff0035"/><rect x="705" y="157" fill="#ff0033"/><rect x="708" y="157" fill="#ff0032"/><rect x="711" y="157" fill="#ff0030"/><rect x="714" y="157" fill="#ff002f"/><rect x="717" y="157" fill="#ff002d"/><rect x="720" y="157" fill="#ff002c"/><rect x="516" y="160" fill="#00b6ff"/><rect x="519" y="160" fill="#00b3ff"/><rect x="522" y="160" fill="#00afff"/><rect x="525" y="160" fill="#00abff"/><rect x="528" y="160" fill="#00a7ff"/><rect x="531" y="160" fill="#00a4ff"/><rect x="534" y="160" fill="#00a0ff"/><rect x="537" y="160" fill="#009cff"/><rect x="540" y="160" fill="#0098ff"/><rect x="543" y="160" fill="#0094ff"/><rect x="546" y="160" fill="#0090ff"/><rect x="549" y="160" fill="#008cff"/><rect x="552" y="160" fill="#0088ff"/><rect x="555" y="160" fill="#0084ff"/><rect x="558" y="160" fill="#0080ff"/><rect x="561" y="160" fill="#007cff"/><rect x="564" y="160" fill="#0478ff"/><rect x="567" y="160" fill="#1374ff"/><rect x="570" y="160" fill="#246fff"/><rect x="573" y="160" fill="#356bff"/><rect x="576" y="160" fill="#4667ff"/><rect x="579" y="160" fill="#5862ff"/><rect x="582" y="160" fill="#6a5eff"/><rect x="585" y="160" fill="#7c59ff"/><rect x="588" y="160" fill="#8f55ff"/><rect x="591" y="160" fill="#a250ff"/><rect x="594" y="160" fill="#b64bff"/><rect x="597" y="160" fill="#ca47ff"/><rect x="600" y="160" fill="#de42ff"/><rect x="603" y="160" fill="#f23dff"/><rect x="606" y="160" fill="#ff37f7"/><rect x="609" y="160" fill="#ff2ee4"/><rect x="612" y="160" fill="#ff27d4"/><rect x="615" y="160" fill="#ff21c6"/><rect x="618" y="160" fill="#ff1bba"/><rect x="621" y="160" fill="#ff16ae"/><rect x="624" y="160" fill="#ff11a4"/><rect x="627" y="160" fill="#ff0d9b"/><rect x="630" y="160" fill="#ff0a93"/><rect x="633" y="160" fill="#ff078b"/><rect x="636" y="160" fill="#ff0484"/><rect x="639" y="160" fill="#ff017e"/><rect x="642" y="160" fill="#ff0078"/><rect x="645" y="160" fill="#ff0072"/><rect x="648" y="160" fill="#ff006d"/><rect x="651" y="160" fill="#ff0069"/><rect x="654" y="160" fill="#ff0064"/><rect x="657" y="160" fill="#ff0060"/><rect x="660" y="160" fill="#ff005d"/><rect x="663" y="160" fill="#ff0059"/><rect x="666" y="160" fill="#ff0056"/><rect x="669" y="160" fill="#ff0052"/><rect x="672" y="160" fill="#ff004f"/><rect x="675" y="160" fill="#ff004d"/><rect x="678" y="160" fill="#ff004a"/><rect x="681" y="160" fill="#ff0047"/><rect x="684" y="160" fill="#ff0045"/><rect x="687" y="160" fill="#ff0043"/><rect x="690" y="160" fill="#ff0041"/><rect x="693" y="160" fill="#ff003e"/><rect x="696" y="160" fill="#ff003c"/><rect x="699" y="160" fill="#ff003b"/><rect x="702" y="160" fill="#ff0039"/><rect x="705" y="160" fill="#ff0037"/><rect x="708" y="160" fill="#ff0035"/><rect x="711" y="160" fill="#ff0034"/><rect x="714" y="160" fill="#ff0032"/><rect x="717" y="160" fill="#ff0031"/><rect x="519" y="163" fill="#00a7ff"/><rect x="522" y="163" fill="#00a4ff"/><rect x="525" y="163" fill="#00a0ff"/><rect x="528" y="163" fill="#009cff"/><rect x="531" y="163" fill="#0099ff"/><rect x="534" y="163" fill="#0095ff"/><rect x="537" y="163" fill="#0091ff"/><rect x="540" y="163" fill="#008eff"/><rect x="543" y="163" fill="#008aff"/><rect x="546" y="163" fill="#0086ff"/><rect x="549" y="163" fill="#0082ff"/><rect x="552" y="163" fill="#007eff"/><rect x="555" y="163" fill="#007aff"/><rect x="558" y="163" fill="#0076ff"/><rect x="561" y="163" fill="#0072ff"/><rect x="564" y="163" fill="#026eff"/><rect x="567" y="163" fill="#116aff"/><rect x="570" y="163" fill="#2066ff"/><rect x="573" y="163" fill="#3062ff"/><rect x="576" y="163" fill="#405eff"/><rect x="579" y="163" fill="#515aff"/><rect x="582" y="163" fill="#6255ff"/><rect x="585" y="163" fill="#7451ff"/><rect x="588" y="163" fill="#864dff"/><rect x="591" y="163" fill="#9848ff"/><rect x="594" y="163" fill="#aa44ff"/><rect x="597" y="163" fill="#bd3fff"/><rect x="600" y="163" fill="#d03bff"/><rect x="603" y="163" fill="#e436ff"/><rect x="606" y="163" fill="#f732ff"/><rect x="609" y="163" fill="#ff2bf3"/><rect x="612" y="163" fill="#ff24e2"/><rect x="615" y="163" fill="#ff1ed3"/><rect x="618" y="163" fill="#ff18c6"/><rect x="621" y="163" fill="#ff13ba"/><rect x="624" y="163" fill="#ff0faf"/><rect x="627" y="163" fill="#ff0ba5"/><rect x="630" y="163" fill="#ff089c"/><rect x="633" y="163" fill="#ff0494"/><rect x="636" y="163" fill="#ff028d"/><rect x="639" y="163" fill="#ff0086"/><rect x="642" y="163" fill="#ff0080"/><rect x="645" y="163" fill="#ff007a"/><rect x="648" y="163" fill="#ff0075"/><rect x="651" y="163" fill="#ff0070"/><rect x="654" y="163" fill="#ff006b"/><rect x="657" y="163" fill="#ff0067"/><rect x="660" y="163" fill="#ff0063"/><rect x="663" y="163" fill="#ff005f"/><rect x="666" y="163" fill="#ff005b"/><rect x="669" y="163" fill="#ff0058"/><rect x="672" y="163" fill="#ff0055"/><rect x="675" y="163" fill="#ff0052"/><rect x="678" y="163" fill="#ff004f"/><rect x="681" y="163" fill="#ff004c"/><rect x="684" y="163" fill="#ff004a"/><rect x="687" y="163" fill="#ff0047"/><rect x="690" y="163" fill="#ff0045"/><rect x="693" y="163" fill="#ff0043"/><rect x="696" y="163" fill="#ff0041"/><rect x="699" y="163" fill="#ff003f"/><rect x="702" y="163" fill="#ff003d"/><rect x="705" y="163" fill="#ff003b"/><rect x="708" y="163" fill="#ff0039"/><rect x="711" y="163" fill="#ff0038"/><rect x="714" y="163" fill="#ff0036"/><rect x="519" y="166" fill="#009dff"/><rect x="522" y="166" fill="#0099ff"/><rect x="525" y="166" fill="#0096ff"/><rect x="528" y="166" fill="#0092ff"/><rect x="531" y="166" fill="#008fff"/><rect x="534" y="166" fill="#008bff"/><rect x="537" y="166" fill="#0088ff"/><rect x="540" y="166" fill="#0084ff"/><rect x="543" y="166" fill="#0080ff"/><rect x="546" y="166" fill="#007dff"/><rect x="549" y="166" fill="#0079ff"/><rect x="552" y="166" fill="#0075ff"/><rect x="555" y="166" fill="#0071ff"/><rect x="558" y="166" fill="#006eff"/><rect x="561" y="166" fill="#006aff"/><rect x="564" y="166" fill="#0066ff"/><rect x="567" y="166" fill="#0e62ff"/><rect x="570" y="166" fill="#1d5eff"/><rect x="573" y="166" fill="#2c5aff"/><rect x="576" y="166" fill="#3b56ff"/><rect x="579" y="166" fill="#4b52ff"/><rect x="582" y="166" fill="#5c4eff"/><rect x="585" y="166" fill="#6c4aff"/><rect x="588" y="166" fill="#7d45ff"/><rect x="591" y="166" fill="#8e41ff"/><rect x="594" y="166" fill="#a03dff"/><rect x="597" y="166" fill="#b239ff"/><rect x="600" y="166" fill="#c434ff"/><rect x="603" y="166" fill="#d630ff"/><rect x="606" y="166" fill="#e92cff"/><rect x="609" y="166" fill="#fc27ff"/><rect x="612" y="166" fill="#ff21f0"/><rect x="615" y="166" fill="#ff1be0"/><rect x="618" y="166" fill="#ff15d2"/><rect x="621" y="166" fill="#ff11c5"/><rect x="624" y="166" fill="#ff0cb9"/><rect x="627" y="166" fill="#ff09af"/><rect x="630" y="166" fill="#ff05a6"/><rect x="633" y="166" fill="#ff029d"/><rect x="636" y="166" fill="#ff0095"/><rect x="639" y="166" fill="#ff008e"/><rect x="642" y="166" fill="#ff0088"/><rect x="645" y="166" fill="#ff0082"/><rect x="648" y="166" fill="#ff007c"/><rect x="651" y="166" fill="#ff0077"/><rect x="654" y="166" fill="#ff0072"/><rect x="657" y="166" fill="#ff006d"/><rect x="660" y="166" fill="#ff0069"/><rect x="663" y="166" fill="#ff0065"/><rect x="666" y="166" fill="#ff0061"/><rect x="669" y="166" fill="#ff005e"/><rect x="672" y="166" fill="#ff005a"/><rect x="675" y="166" fill="#ff0057"/><rect x="678" y="166" fill="#ff0054"/><rect x="681" y="166" fill="#ff0051"/><rect x="684" y="166" fill="#ff004f"/><rect x="687" y="166" fill="#ff004c"/><rect x="690" y="166" fill="#ff004a"/><rect x="693" y="166" fill="#ff0047"/><rect x="696" y="166" fill="#ff0045"/><rect x="699" y="166" fill="#ff0043"/><rect x="702" y="166" fill="#ff0041"/><rect x="705" y="166" fill="#ff003f"/><rect x="708" y="166" fill="#ff003d"/><rect x="711" y="166" fill="#ff003c"/><rect x="519" y="169" fill="#0093ff"/><rect x="522" y="169" fill="#0090ff"/><rect x="525" y="169" fill="#008cff"/><rect x="528" y="169" fill="#0089ff"/><rect x="531" y="169" fill="#0086ff"/><rect x="534" y="169" fill="#0082ff"/><rect x="537" y="169" fill="#007fff"/><rect x="540" y="169" fill="#007bff"/><rect x="543" y="169" fill="#0078ff"/><rect x="546" y="169" fill="#0074ff"/><rect x="549" y="169" fill="#0070ff"/><rect x="552" y="169" fill="#006dff"/><rect x="555" y="169" fill="#0069ff"/><rect x="558" y="169" fill="#0065ff"/><rect x="561" y="169" fill="#0062ff"/><rect x="564" y="169" fill="#005eff"/><rect x="567" y="169" fill="#0c5aff"/><rect x="570" y="169" fill="#1a56ff"/><rect x="573" y="169" fill="#2853ff"/><rect x="576" y="169" fill="#374fff"/><rect x="579" y="169" fill="#464bff"/><rect x="582" y="169" fill="#5547ff"/><rect x="585" y="169" fill="#6543ff"/><rect x="588" y="169" fill="#753fff"/><rect x="591" y="169" fill="#863bff"/><rect x="594" y="169" fill="#9637ff"/><rect x="597" y="169" fill="#a733ff"/><rect x="600" y="169" fill="#b82fff"/><rect x="603" y="169" fill="#ca2aff"/><rect x="606" y="169" fill="#db26ff"/><rect x="609" y="169" fill="#ed22ff"/><rect x="612" y="169" fill="#ff1efe"/><rect x="615" y="169" fill="#ff18ed"/><rect x="618" y="169" fill="#ff13de"/><rect x="621" y="169" fill="#ff0ed1"/><rect x="624" y="169" fill="#ff0ac4"/><rect x="627" y="169" fill="#ff06b9"/><rect x="630" y="169" fill="#ff03b0"/><rect x="633" y="169" fill="#ff00a7"/><rect x="636" y="169" fill="#ff009e"/><rect x="639" y="169" fill="#ff0097"/><rect x="642" y="169" fill="#ff0090"/><rect x="645" y="169" fill="#ff0089"/><rect x="648" y="169" fill="#ff0083"/><rect x="651" y="169" fill="#ff007e"/><rect x="654" y="169" fill="#ff0079"/><rect x="657" y="169" fill="#ff0074"/><rect x="660" y="169" fill="#ff006f"/><rect x="663" y="169" fill="#ff006b"/><rect x="666" y="169" fill="#ff0067"/><rect x="669" y="169" fill="#ff0063"/><rect x="672" y="169" fill="#ff0060"/><rect x="675" y="169" fill="#ff005c"/><rect x="678" y="169" fill="#ff0059"/><rect x="681" y="169" fill="#ff0056"/><rect x="684" y="169" fill="#ff0054"/><rect x="687" y="169" fill="#ff0051"/><rect x="690" y="169" fill="#ff004e"/><rect x="693" y="169" fill="#ff004c"/><rect x="696" y="169" fill="#ff004a"/><rect x="699" y="169" fill="#ff0047"/><rect x="702" y="169" fill="#ff0045"/><rect x="705" y="169" fill="#ff0043"/><rect x="708" y="169" fill="#ff0041"/><rect x="711" y="169" fill="#ff003f"/><rect x="522" y="172" fill="#0087ff"/><rect x="525" y="172" fill="#0084ff"/><rect x="528" y="172" fill="#0080ff"/><rect x="531" y="172" fill="#007dff"/><rect x="534" y="172" fill="#007aff"/><rect x="537" y="172" fill="#0076ff"/><rect x="540" y="172" fill="#0073ff"/><rect x="543" y="172" fill="#0070ff"/><rect x="546" y="172" fill="#006cff"/><rect x="549" y="172" fill="#0069ff"/><rect x="552" y="172" fill="#0065ff"/><rect x="555" y="172" fill="#0062ff"/><rect x="558" y="172" fill="#005eff"/><rect x="561" y="172" fill="#005aff"/><rect x="564" y="172" fill="#0057ff"/><rect x="567" y="172" fill="#0a53ff"/><rect x="570" y="172" fill="#1750ff"/><rect x="573" y="172" fill="#254cff"/><rect x="576" y="172" fill="#3348ff"/><rect x="579" y="172" fill="#4144ff"/><rect x="582" y="172" fill="#5041ff"/><rect x="585" y="172" fill="#5f3dff"/><rect x="588" y="172" fill="#6e39ff"/><rect x="591" y="172" fill="#7e35ff"/><rect x="594" y="172" fill="#8e31ff"/><rect x="597" y="172" fill="#9e2dff"/><rect x="600" y="172" fill="#ae29ff"/><rect x="603" y="172" fill="#bf25ff"/><rect x="606" y="172" fill="#cf21ff"/><rect x="609" y="172" fill="#e01dff"/><rect x="612" y="172" fill="#f219ff"/><rect x="615" y="172" fill="#ff15fb"/><rect x="618" y="172" fill="#ff10eb"/><rect x="621" y="172" fill="#ff0bdc"/><rect x="624" y="172" fill="#ff07d0"/><rect x="627" y="172" fill="#ff04c4"/><rect x="630" y="172" fill="#ff01b9"/><rect x="633" y="172" fill="#ff00b0"/><rect x="636" y="172" fill="#ff00a7"/><rect x="639" y="172" fill="#ff009f"/><rect x="642" y="172" fill="#ff0098"/><rect x="645" y="172" fill="#ff0091"/><rect x="648" y="172" fill="#ff008b"/><rect x="651" y="172" fill="#ff0085"/><rect x="654" y="172" fill="#ff007f"/><rect x="657" y="172" fill="#ff007a"/><rect x="660" y="172" fill="#ff0076"/><rect x="663" y="172" fill="#ff0071"/><rect x="666" y="172" fill="#ff006d"/><rect x="669" y="172" fill="#ff0069"/><rect x="672" y="172" fill="#ff0065"/><rect x="675" y="172" fill="#ff0062"/><rect x="678" y="172" fill="#ff005f"/><rect x="681" y="172" fill="#ff005b"/><rect x="684" y="172" fill="#ff0058"/><rect x="687" y="172" fill="#ff0056"/><rect x="690" y="172" fill="#ff0053"/><rect x="693" y="172" fill="#ff0050"/><rect x="696" y="172" fill="#ff004e"/><rect x="699" y="172" fill="#ff004c"/><rect x="702" y="172" fill="#ff0049"/><rect x="705" y="172" fill="#ff0047"/><rect x="708" y="172" fill="#ff0045"/><rect x="522" y="175" fill="#007fff"/><rect x="525" y="175" fill="#007cff"/><rect x="528" y="175" fill="#0079ff"/><rect x="531" y="175" fill="#0075ff"/><rect x="534" y="175" fill="#0072ff"/><rect x="537" y="175" fill="#006fff"/><rect x="540" y="175" fill="#006cff"/><rect x="543" y="175" fill="#0068ff"/><rect x="546" y="175" fill="#0065ff"/><rect x="549" y="175" fill="#0062ff"/><rect x="552" y="175" fill="#005eff"/><rect x="555" y="175" fill="#005bff"/><rect x="558" y="175" fill="#0057ff"/><rect x="561" y="175" fill="#0054ff"/><rect x="564" y="175" fill="#0050ff"/><rect x="567" y="175" fill="#084dff"/><rect x="570" y="175" fill="#1449ff"/><rect x="573" y="175" fill="#2146ff"/><rect x="576" y="175" fill="#2f42ff"/><rect x="579" y="175" fill="#3d3eff"/><rect x="582" y="175" fill="#4b3bff"/><rect x="585" y="175" fill="#5937ff"/><rect x="588" y="175" fill="#6833ff"/><rect x="591" y="175" fill="#7730ff"/><rect x="594" y="175" fill="#862cff"/><rect x="597" y="175" fill="#9528ff"/><rect x="600" y="175" fill="#a524ff"/><rect x="603" y="175" fill="#b421ff"/><rect x="606" y="175" fill="#c41dff"/><rect x="609" y="175" fill="#d519ff"/><rect x="612" y="175" fill="#e515ff"/><rect x="615" y="175" fill="#f611ff"/><rect x="618" y="175" fill="#ff0df8"/><rect x="621" y="175" fill="#ff09e8"/><rect x="624" y="175" fill="#ff05db"/><rect x="627" y="175" fill="#ff02cf"/><rect x="630" y="175" fill="#ff00c4"/><rect x="633" y="175" fill="#ff00b9"/><rect x="636" y="175" fill="#ff00b0"/><rect x="639" y="175" fill="#ff00a8"/><rect x="642" y="175" fill="#ff00a0"/><rect x="645" y="175" fill="#ff0099"/><rect x="648" y="175" fill="#ff0092"/><rect x="651" y="175" fill="#ff008c"/><rect x="654" y="175" fill="#ff0086"/><rect x="657" y="175" fill="#ff0081"/><rect x="660" y="175" fill="#ff007c"/><rect x="663" y="175" fill="#ff0077"/><rect x="666" y="175" fill="#ff0073"/><rect x="669" y="175" fill="#ff006f"/><rect x="672" y="175" fill="#ff006b"/><rect x="675" y="175" fill="#ff0067"/><rect x="678" y="175" fill="#ff0064"/><rect x="681" y="175" fill="#ff0061"/><rect x="684" y="175" fill="#ff005d"/><rect x="687" y="175" fill="#ff005b"/><rect x="690" y="175" fill="#ff0058"/><rect x="693" y="175" fill="#ff0055"/><rect x="696" y="175" fill="#ff0052"/><rect x="699" y="175" fill="#ff0050"/><rect x="702" y="175" fill="#ff004e"/><rect x="705" y="175" fill="#ff004c"/><rect x="522" y="178" fill="#0077ff"/><rect x="525" y="178" fill="#0074ff"/><rect x="528" y="178" fill="#0071ff"/><rect x="531" y="178" fill="#006eff"/><rect x="534" y="178" fill="#006bff"/><rect x="537" y="178" fill="#0068ff"/><rect x="540" y="178" fill="#0065ff"/><rect x="543" y="178" fill="#0061ff"/><rect x="546" y="178" fill="#005eff"/><rect x="549" y="178" fill="#005bff"/><rect x="552" y="178" fill="#0058ff"/><rect x="555" y="178" fill="#0054ff"/><rect x="558" y="178" fill="#0051ff"/><rect x="561" y="178" fill="#004eff"/><rect x="564" y="178" fill="#004aff"/><rect x="567" y="178" fill="#0647ff"/><rect x="570" y="178" fill="#1243ff"/><rect x="573" y="178" fill="#1e40ff"/><rect x="576" y="178" fill="#2b3cff"/><rect x="579" y="178" fill="#3939ff"/><rect x="582" y="178" fill="#4635ff"/><rect x="585" y="178" fill="#5432ff"/><rect x="588" y="178" fill="#622eff"/><rect x="591" y="178" fill="#702bff"/><rect x="594" y="178" fill="#7e27ff"/><rect x="597" y="178" fill="#8d24ff"/><rect x="600" y="178" fill="#9c20ff"/><rect x="603" y="178" fill="#ab1cff"/><rect x="606" y="178" fill="#ba19ff"/><rect x="609" y="178" fill="#ca15ff"/><rect x="612" y="178" fill="#da11ff"/><rect x="615" y="178" fill="#e90eff"/><rect x="618" y="178" fill="#fa0aff"/><rect x="621" y="178" fill="#ff06f5"/><rect x="624" y="178" fill="#ff03e6"/><rect x="627" y="178" fill="#ff00d9"/><rect x="630" y="178" fill="#ff00ce"/><rect x="633" y="178" fill="#ff00c3"/><rect x="636" y="178" fill="#ff00b9"/><rect x="639" y="178" fill="#ff00b1"/><rect x="642" y="178" fill="#ff00a8"/><rect x="645" y="178" fill="#ff00a1"/><rect x="648" y="178" fill="#ff009a"/><rect x="651" y="178" fill="#ff0094"/><rect x="654" y="178" fill="#ff008d"/><rect x="657" y="178" fill="#ff0088"/><rect x="660" y="178" fill="#ff0083"/><rect x="663" y="178" fill="#ff007e"/><rect x="666" y="178" fill="#ff0079"/><rect x="669" y="178" fill="#ff0075"/><rect x="672" y="178" fill="#ff0071"/><rect x="675" y="178" fill="#ff006d"/><rect x="678" y="178" fill="#ff0069"/><rect x="681" y="178" fill="#ff0066"/><rect x="684" y="178" fill="#ff0063"/><rect x="687" y="178" fill="#ff005f"/><rect x="690" y="178" fill="#ff005c"/><rect x="693" y="178" fill="#ff005a"/><rect x="696" y="178" fill="#ff0057"/><rect x="699" y="178" fill="#ff0054"/><rect x="702" y="178" fill="#ff0052"/><rect x="525" y="181" fill="#006eff"/><rect x="528" y="181" fill="#006bff"/><rect x="531" y="181" fill="#0067ff"/><rect x="534" y="181" fill="#0064ff"/><rect x="537" y="181" fill="#0061ff"/><rect x="540" y="181" fill="#005eff"/><rect x="543" y="181" fill="#005bff"/><rect x="546" y="181" fill="#0058ff"/><rect x="549" y="181" fill="#0055ff"/><rect x="552" y="181" fill="#0052ff"/><rect x="555" y="181" fill="#004eff"/><rect x="558" y="181" fill="#004bff"/><rect x="561" y="181" fill="#0048ff"/><rect x="564" y="181" fill="#0045ff"/><rect x="567" y="181" fill="#0441ff"/><rect x="570" y="181" fill="#103eff"/><rect x="573" y="181" fill="#1c3bff"/><rect x="576" y="181" fill="#2837ff"/><rect x="579" y="181" fill="#3534ff"/><rect x="582" y="181" fill="#4231ff"/><rect x="585" y="181" fill="#4f2dff"/><rect x="588" y="181" fill="#5c2aff"/><rect x="591" y="181" fill="#6a26ff"/><rect x="594" y="181" fill="#7823ff"/><rect x="597" y="181" fill="#861fff"/><rect x="600" y="181" fill="#941cff"/><rect x="603" y="181" fill="#a218ff"/><rect x="606" y="181" fill="#b115ff"/><rect x="609" y="181" fill="#c011ff"/><rect x="612" y="181" fill="#cf0eff"/><rect x="615" y="181" fill="#de0aff"/><rect x="618" y="181" fill="#ed07ff"/><rect x="621" y="181" fill="#fd03ff"/><rect x="624" y="181" fill="#ff00f2"/><rect x="627" y="181" fill="#ff00e4"/><rect x="630" y="181" fill="#ff00d8"/><rect x="633" y="181" fill="#ff00cd"/><rect x="636" y="181" fill="#ff00c3"/><rect x="639" y="181" fill="#ff00b9"/><rect x="642" y="181" fill="#ff00b1"/><rect x="645" y="181" fill="#ff00a9"/><rect x="648" y="181" fill="#ff00a2"/><rect x="651" y="181" fill="#ff009b"/><rect x="654" y="181" fill="#ff0095"/><rect x="657" y="181" fill="#ff008f"/><rect x="660" y="181" fill="#ff0089"/><rect x="663" y="181" fill="#ff0084"/><rect x="666" y="181" fill="#ff007f"/><rect x="669" y="181" fill="#ff007b"/><rect x="672" y="181" fill="#ff0076"/><rect x="675" y="181" fill="#ff0072"/><rect x="678" y="181" fill="#ff006f"/><rect x="681" y="181" fill="#ff006b"/><rect x="684" y="181" fill="#ff0068"/><rect x="687" y="181" fill="#ff0064"/><rect x="690" y="181" fill="#ff0061"/><rect x="693" y="181" fill="#ff005e"/><rect x="696" y="181" fill="#ff005c"/><rect x="699" y="181" fill="#ff0059"/><rect x="702" y="181" fill="#ff0056"/><rect x="525" y="184" fill="#0067ff"/><rect x="528" y="184" fill="#0064ff"/><rect x="531" y="184" fill="#0061ff"/><rect x="534" y="184" fill="#005eff"/><rect x="537" y="184" fill="#005bff"/><rect x="540" y="184" fill="#0058ff"/><rect x="543" y="184" fill="#0055ff"/><rect x="546" y="184" fill="#0052ff"/><rect x="549" y="184" fill="#004fff"/><rect x="552" y="184" fill="#004cff"/><rect x="555" y="184" fill="#0049ff"/><rect x="558" y="184" fill="#0046ff"/><rect x="561" y="184" fill="#0043ff"/><rect x="564" y="184" fill="#003fff"/><rect x="567" y="184" fill="#033cff"/><rect x="570" y="184" fill="#0e39ff"/><rect x="573" y="184" fill="#1936ff"/><rect x="576" y="184" fill="#2533ff"/><rect x="579" y="184" fill="#312fff"/><rect x="582" y="184" fill="#3e2cff"/><rect x="585" y="184" fill="#4a29ff"/><rect x="588" y="184" fill="#5725ff"/><rect x="591" y="184" fill="#6422ff"/><rect x="594" y="184" fill="#721fff"/><rect x="597" y="184" fill="#7f1bff"/><rect x="600" y="184" fill="#8d18ff"/><rect x="603" y="184" fill="#9a15ff"/><rect x="606" y="184" fill="#a811ff"/><rect x="609" y="184" fill="#b70eff"/><rect x="612" y="184" fill="#c50bff"/><rect x="615" y="184" fill="#d407ff"/><rect x="618" y="184" fill="#e204ff"/><rect x="621" y="184" fill="#f101ff"/><rect x="624" y="184" fill="#ff00fe"/><rect x="627" y="184" fill="#ff00ef"/><rect x="630" y="184" fill="#ff00e3"/><rect x="633" y="184" fill="#ff00d7"/><rect x="636" y="184" fill="#ff00cc"/><rect x="639" y="184" fill="#ff00c2"/><rect x="642" y="184" fill="#ff00b9"/><rect x="645" y="184" fill="#ff00b1"/><rect x="648" y="184" fill="#ff00aa"/><rect x="651" y="184" fill="#ff00a2"/><rect x="654" y="184" fill="#ff009c"/><rect x="657" y="184" fill="#ff0096"/><rect x="660" y="184" fill="#ff0090"/><rect x="663" y="184" fill="#ff008b"/><rect x="666" y="184" fill="#ff0085"/><rect x="669" y="184" fill="#ff0081"/><rect x="672" y="184" fill="#ff007c"/><rect x="675" y="184" fill="#ff0078"/><rect x="678" y="184" fill="#ff0074"/><rect x="681" y="184" fill="#ff0070"/><rect x="684" y="184" fill="#ff006d"/><rect x="687" y="184" fill="#ff0069"/><rect x="690" y="184" fill="#ff0066"/><rect x="693" y="184" fill="#ff0063"/><rect x="696" y="184" fill="#ff0060"/><rect x="699" y="184" fill="#ff005d"/><rect x="528" y="187" fill="#005eff"/><rect x="531" y="187" fill="#005bff"/><rect x="534" y="187" fill="#0059ff"/><rect x="537" y="187" fill="#0056ff"/><rect x="540" y="187" fill="#0053ff"/><rect x="543" y="187" fill="#0050ff"/><rect x="546" y="187" fill="#004dff"/><rect x="549" y="187" fill="#004aff"/><rect x="552" y="187" fill="#0047ff"/><rect x="555" y="187" fill="#0044ff"/><rect x="558" y="187" fill="#0041ff"/><rect x="561" y="187" fill="#003eff"/><rect x="564" y="187" fill="#003bff"/><rect x="567" y="187" fill="#0138ff"/><rect x="570" y="187" fill="#0c34ff"/><rect x="573" y="187" fill="#1731ff"/><rect x="576" y="187" fill="#222eff"/><rect x="579" y="187" fill="#2e2bff"/><rect x="582" y="187" fill="#3a28ff"/><rect x="585" y="187" fill="#4625ff"/><rect x="588" y="187" fill="#5222ff"/><rect x="591" y="187" fill="#5f1eff"/><rect x="594" y="187" fill="#6c1bff"/><rect x="597" y="187" fill="#7918ff"/><rect x="600" y="187" fill="#8615ff"/><rect x="603" y="187" fill="#9311ff"/><rect x="606" y="187" fill="#a00eff"/><rect x="609" y="187" fill="#ae0bff"/><rect x="612" y="187" fill="#bc08ff"/><rect x="615" y="187" fill="#ca05ff"/><rect x="618" y="187" fill="#d802ff"/><rect x="621" y="187" fill="#e600ff"/><rect x="624" y="187" fill="#f500ff"/><rect x="627" y="187" fill="#ff00fb"/><rect x="630" y="187" fill="#ff00ed"/><rect x="633" y="187" fill="#ff00e1"/><rect x="636" y="187" fill="#ff00d6"/><rect x="639" y="187" fill="#ff00cb"/><rect x="642" y="187" fill="#ff00c2"/><rect x="645" y="187" fill="#ff00b9"/><rect x="648" y="187" fill="#ff00b1"/><rect x="651" y="187" fill="#ff00aa"/><rect x="654" y="187" fill="#ff00a3"/><rect x="657" y="187" fill="#ff009d"/><rect x="660" y="187" fill="#ff0097"/><rect x="663" y="187" fill="#ff0091"/><rect x="666" y="187" fill="#ff008c"/><rect x="669" y="187" fill="#ff0087"/><rect x="672" y="187" fill="#ff0082"/><rect x="675" y="187" fill="#ff007e"/><rect x="678" y="187" fill="#ff007a"/><rect x="681" y="187" fill="#ff0076"/><rect x="684" y="187" fill="#ff0072"/><rect x="687" y="187" fill="#ff006e"/><rect x="690" y="187" fill="#ff006b"/><rect x="693" y="187" fill="#ff0068"/><rect x="696" y="187" fill="#ff0065"/><rect x="528" y="190" fill="#0059ff"/><rect x="531" y="190" fill="#0056ff"/><rect x="534" y="190" fill="#0053ff"/><rect x="537" y="190" fill="#0050ff"/><rect x="540" y="190" fill="#004eff"/><rect x="543" y="190" fill="#004bff"/><rect x="546" y="190" fill="#0048ff"/><rect x="549" y="190" fill="#0045ff"/><rect x="552" y="190" fill="#0042ff"/><rect x="555" y="190" fill="#003fff"/><rect x="558" y="190" fill="#003cff"/><rect x="561" y="190" fill="#0039ff"/><rect x="564" y="190" fill="#0036ff"/><rect x="567" y="190" fill="#0033ff"/><rect x="570" y="190" fill="#0a30ff"/><rect x="573" y="190" fill="#152dff"/><rect x="576" y="190" fill="#202aff"/><rect x="579" y="190" fill="#2b27ff"/><rect x="582" y="190" fill="#3624ff"/><rect x="585" y="190" fill="#4221ff"/><rect x="588" y="190" fill="#4e1eff"/><rect x="591" y="190" fill="#5a1bff"/><rect x="594" y="190" fill="#6618ff"/><rect x="597" y="190" fill="#7315ff"/><rect x="600" y="190" fill="#7f11ff"/><rect x="603" y="190" fill="#8c0eff"/><rect x="606" y="190" fill="#990bff"/><rect x="609" y="190" fill="#a608ff"/><rect x="612" y="190" fill="#b305ff"/><rect x="615" y="190" fill="#c102ff"/><rect x="618" y="190" fill="#ce00ff"/><rect x="621" y="190" fill="#dc00ff"/><rect x="624" y="190" fill="#ea00ff"/><rect x="627" y="190" fill="#f800ff"/><rect x="630" y="190" fill="#ff00f8"/><rect x="633" y="190" fill="#ff00eb"/><rect x="636" y="190" fill="#ff00df"/><rect x="639" y="190" fill="#ff00d5"/><rect x="642" y="190" fill="#ff00cb"/><rect x="645" y="190" fill="#ff00c2"/><rect x="648" y="190" fill="#ff00b9"/><rect x="651" y="190" fill="#ff00b2"/><rect x="654" y="190" fill="#ff00aa"/><rect x="657" y="190" fill="#ff00a4"/><rect x="660" y="190" fill="#ff009d"/><rect x="663" y="190" fill="#ff0098"/><rect x="666" y="190" fill="#ff0092"/><rect x="669" y="190" fill="#ff008d"/><rect x="672" y="190" fill="#ff0088"/><rect x="675" y="190" fill="#ff0083"/><rect x="678" y="190" fill="#ff007f"/><rect x="681" y="190" fill="#ff007b"/><rect x="684" y="190" fill="#ff0077"/><rect x="687" y="190" fill="#ff0073"/><rect x="690" y="190" fill="#ff0070"/><rect x="693" y="190" fill="#ff006d"/><rect x="528" y="193" fill="#0054ff"/><rect x="531" y="193" fill="#0051ff"/><rect x="534" y="193" fill="#004eff"/><rect x="537" y="193" fill="#004bff"/><rect x="540" y="193" fill="#0049ff"/><rect x="543" y="193" fill="#0046ff"/><rect x="546" y="193" fill="#0043ff"/><rect x="549" y="193" fill="#0040ff"/><rect x="552" y="193" fill="#003dff"/><rect x="555" y="193" fill="#003bff"/><rect x="558" y="193" fill="#0038ff"/><rect x="561" y="193" fill="#0035ff"/><rect x="564" y="193" fill="#0032ff"/><rect x="567" y="193" fill="#002fff"/><rect x="570" y="193" fill="#082cff"/><rect x="573" y="193" fill="#1329ff"/><rect x="576" y="193" fill="#1d26ff"/><rect x="579" y="193" fill="#2823ff"/><rect x="582" y="193" fill="#3320ff"/><rect x="585" y="193" fill="#3e1dff"/><rect x="588" y="193" fill="#4a1aff"/><rect x="591" y="193" fill="#5617ff"/><rect x="594" y="193" fill="#6114ff"/><rect x="597" y="193" fill="#6d11ff"/><rect x="600" y="193" fill="#7a0eff"/><rect x="603" y="193" fill="#860cff"/><rect x="606" y="193" fill="#9209ff"/><rect x="609" y="193" fill="#9f06ff"/><rect x="612" y="193" fill="#ac03ff"/><rect x="615" y="193" fill="#b800ff"/><rect x="618" y="193" fill="#c600ff"/><rect x="621" y="193" fill="#d300ff"/><rect x="624" y="193" fill="#e000ff"/><rect x="627" y="193" fill="#ee00ff"/><rect x="630" y="193" fill="#fb00ff"/><rect x="633" y="193" fill="#ff00f5"/><rect x="636" y="193" fill="#ff00e9"/><rect x="639" y="193" fill="#ff00de"/><rect x="642" y="193" fill="#ff00d4"/><rect x="645" y="193" fill="#ff00ca"/><rect x="648" y="193" fill="#ff00c2"/><rect x="651" y="193" fill="#ff00b9"/><rect x="654" y="193" fill="#ff00b2"/><rect x="657" y="193" fill="#ff00ab"/><rect x="660" y="193" fill="#ff00a4"/><rect x="663" y="193" fill="#ff009e"/><rect x="666" y="193" fill="#ff0098"/><rect x="669" y="193" fill="#ff0093"/><rect x="672" y="193" fill="#ff008e"/><rect x="675" y="193" fill="#ff0089"/><rect x="678" y="193" fill="#ff0085"/><rect x="681" y="193" fill="#ff0080"/><rect x="684" y="193" fill="#ff007c"/><rect x="687" y="193" fill="#ff0079"/><rect x="690" y="193" fill="#ff0075"/><rect x="531" y="196" fill="#004cff"/><rect x="534" y="196" fill="#004aff"/><rect x="537" y="196" fill="#0047ff"/><rect x="540" y="196" fill="#0044ff"/><rect x="543" y="196" fill="#0041ff"/><rect x="546" y="196" fill="#003fff"/><rect x="549" y="196" fill="#003cff"/><rect x="552" y="196" fill="#0039ff"/><rect x="555" y="196" fill="#0036ff"/><rect x="558" y="196" fill="#0034ff"/><rect x="561" y="196" fill="#0031ff"/><rect x="564" y="196" fill="#002eff"/><rect x="567" y="196" fill="#002bff"/><rect x="570" y="196" fill="#0728ff"/><rect x="573" y="196" fill="#1126ff"/><rect x="576" y="196" fill="#1b23ff"/><rect x="579" y="196" fill="#2520ff"/><rect x="582" y="196" fill="#301dff"/><rect x="585" y="196" fill="#3b1aff"/><rect x="588" y="196" fill="#4617ff"/><rect x="591" y="196" fill="#5114ff"/><rect x="594" y="196" fill="#5d12ff"/><rect x="597" y="196" fill="#680fff"/><rect x="600" y="196" fill="#740cff"/><rect x="603" y="196" fill="#8009ff"/><rect x="606" y="196" fill="#8c06ff"/><rect x="609" y="196" fill="#9803ff"/><rect x="612" y="196" fill="#a401ff"/><rect x="615" y="196" fill="#b100ff"/><rect x="618" y="196" fill="#bd00ff"/><rect x="621" y="196" fill="#ca00ff"/><rect x="624" y="196" fill="#d700ff"/><rect x="627" y="196" fill="#e400ff"/><rect x="630" y="196" fill="#f100ff"/><rect x="633" y="196" fill="#fe00ff"/><rect x="636" y="196" fill="#ff00f3"/><rect x="639" y="196" fill="#ff00e7"/><rect x="642" y="196" fill="#ff00dd"/><rect x="645" y="196" fill="#ff00d3"/><rect x="648" y="196" fill="#ff00ca"/><rect x="651" y="196" fill="#ff00c1"/><rect x="654" y="196" fill="#ff00b9"/><rect x="657" y="196" fill="#ff00b2"/><rect x="660" y="196" fill="#ff00ab"/><rect x="663" y="196" fill="#ff00a5"/><rect x="666" y="196" fill="#ff009f"/><rect x="669" y="196" fill="#ff0099"/><rect x="672" y="196" fill="#ff0094"/><rect x="675" y="196" fill="#ff008f"/><rect x="678" y="196" fill="#ff008a"/><rect x="681" y="196" fill="#ff0086"/><rect x="684" y="196" fill="#ff0082"/><rect x="687" y="196" fill="#ff007e"/><rect x="690" y="196" fill="#ff007a"/><rect x="531" y="199" fill="#0048ff"/><rect x="534" y="199" fill="#0045ff"/><rect x="537" y="199" fill="#0043ff"/><rect x="540" y="199" fill="#0040ff"/><rect x="543" y="199" fill="#003dff"/><rect x="546" y="199" fill="#003bff"/><rect x="549" y="199" fill="#0038ff"/><rect x="552" y="199" fill="#0035ff"/><rect x="555" y="199" fill="#0033ff"/><rect x="558" y="199" fill="#0030ff"/><rect x="561" y="199" fill="#002dff"/><rect x="564" y="199" fill="#002aff"/><rect x="567" y="199" fill="#0028ff"/><rect x="570" y="199" fill="#0625ff"/><rect x="573" y="199" fill="#0f22ff"/><rect x="576" y="199" fill="#191fff"/><rect x="579" y="199" fill="#231dff"/><rect x="582" y="199" fill="#2d1aff"/><rect x="585" y="199" fill="#3817ff"/><rect x="588" y="199" fill="#4314ff"/><rect x="591" y="199" fill="#4d12ff"/><rect x="594" y="199" fill="#580fff"/><rect x="597" y="199" fill="#640cff"/><rect x="600" y="199" fill="#6f09ff"/><rect x="603" y="199" fill="#7a06ff"/><rect x="606" y="199" fill="#8604ff"/><rect x="609" y="199" fill="#9201ff"/><rect x="612" y="199" fill="#9d00ff"/><rect x="615" y="199" fill="#a900ff"/><rect x="618" y="199" fill="#b500ff"/><rect x="621" y="199" fill="#c200ff"/><rect x="624" y="199" fill="#ce00ff"/><rect x="627" y="199" fill="#db00ff"/><rect x="630" y="199" fill="#e700ff"/><rect x="633" y="199" fill="#f400ff"/><rect x="636" y="199" fill="#ff00fd"/><rect x="639" y="199" fill="#ff00f1"/><rect x="642" y="199" fill="#ff00e6"/><rect x="645" y="199" fill="#ff00db"/><rect x="648" y="199" fill="#ff00d2"/><rect x="651" y="199" fill="#ff00c9"/><rect x="654" y="199" fill="#ff00c1"/><rect x="657" y="199" fill="#ff00b9"/><rect x="660" y="199" fill="#ff00b2"/><rect x="663" y="199" fill="#ff00ac"/><rect x="666" y="199" fill="#ff00a5"/><rect x="669" y="199" fill="#ff00a0"/><rect x="672" y="199" fill="#ff009a"/><rect x="675" y="199" fill="#ff0095"/><rect x="678" y="199" fill="#ff0090"/><rect x="681" y="199" fill="#ff008b"/><rect x="684" y="199" fill="#ff0087"/><rect x="687" y="199" fill="#ff0083"/><rect x="534" y="202" fill="#0041ff"/><rect x="537" y="202" fill="#003eff"/><rect x="540" y="202" fill="#003cff"/><rect x="543" y="202" fill="#0039ff"/><rect x="546" y="202" fill="#0037ff"/><rect x="549" y="202" fill="#0034ff"/><rect x="552" y="202" fill="#0032ff"/><rect x="555" y="202" fill="#002fff"/><rect x="558" y="202" fill="#002cff"/><rect x="561" y="202" fill="#002aff"/><rect x="564" y="202" fill="#0027ff"/><rect x="567" y="202" fill="#0024ff"/><rect x="570" y="202" fill="#0422ff"/><rect x="573" y="202" fill="#0d1fff"/><rect x="576" y="202" fill="#171cff"/><rect x="579" y="202" fill="#211aff"/><rect x="582" y="202" fill="#2b17ff"/><rect x="585" y="202" fill="#3514ff"/><rect x="588" y="202" fill="#3f12ff"/><rect x="591" y="202" fill="#4a0fff"/><rect x="594" y="202" fill="#540cff"/><rect x="597" y="202" fill="#5f09ff"/><rect x="600" y="202" fill="#6a07ff"/><rect x="603" y="202" fill="#7504ff"/><rect x="606" y="202" fill="#8002ff"/><rect x="609" y="202" fill="#8c00ff"/><rect x="612" y="202" fill="#9700ff"/><rect x="615" y="202" fill="#a200ff"/><rect x="618" y="202" fill="#ae00ff"/><rect x="621" y="202" fill="#ba00ff"/><rect x="624" y="202" fill="#c600ff"/><rect x="627" y="202" fill="#d200ff"/><rect x="630" y="202" fill="#de00ff"/><rect x="633" y="202" fill="#ea00ff"/><rect x="636" y="202" fill="#f700ff"/><rect x="639" y="202" fill="#ff00fb"/><rect x="642" y="202" fill="#ff00ef"/><rect x="645" y="202" fill="#ff00e4"/><rect x="648" y="202" fill="#ff00da"/><rect x="651" y="202" fill="#ff00d1"/><rect x="654" y="202" fill="#ff00c9"/><rect x="657" y="202" fill="#ff00c1"/><rect x="660" y="202" fill="#ff00b9"/><rect x="663" y="202" fill="#ff00b2"/><rect x="666" y="202" fill="#ff00ac"/><rect x="669" y="202" fill="#ff00a6"/><rect x="672" y="202" fill="#ff00a0"/><rect x="675" y="202" fill="#ff009b"/><rect x="678" y="202" fill="#ff0096"/><rect x="681" y="202" fill="#ff0091"/><rect x="684" y="202" fill="#ff008c"/><rect x="534" y="205" fill="#003dff"/><rect x="537" y="205" fill="#003bff"/><rect x="540" y="205" fill="#0038ff"/><rect x="543" y="205" fill="#0036ff"/><rect x="546" y="205" fill="#0033ff"/><rect x="549" y="205" fill="#0031ff"/><rect x="552" y="205" fill="#002eff"/><rect x="555" y="205" fill="#002bff"/><rect x="558" y="205" fill="#0029ff"/><rect x="561" y="205" fill="#0026ff"/><rect x="564" y="205" fill="#0024ff"/><rect x="567" y="205" fill="#0021ff"/><rect x="570" y="205" fill="#031fff"/><rect x="573" y="205" fill="#0c1cff"/><rect x="576" y="205" fill="#1519ff"/><rect x="579" y="205" fill="#1e17ff"/><rect x="582" y="205" fill="#2814ff"/><rect x="585" y="205" fill="#3212ff"/><rect x="588" y="205" fill="#3c0fff"/><rect x="591" y="205" fill="#460cff"/><rect x="594" y="205" fill="#500aff"/><rect x="597" y="205" fill="#5b07ff"/><rect x="600" y="205" fill="#6505ff"/><rect x="603" y="205" fill="#7002ff"/><rect x="606" y="205" fill="#7b00ff"/><rect x="609" y="205" fill="#8600ff"/><rect x="612" y="205" fill="#9100ff"/><rect x="615" y="205" fill="#9c00ff"/><rect x="618" y="205" fill="#a700ff"/><rect x="621" y="205" fill="#b300ff"/><rect x="624" y="205" fill="#be00ff"/><rect x="627" y="205" fill="#ca00ff"/><rect x="630" y="205" fill="#d600ff"/><rect x="633" y="205" fill="#e200ff"/><rect x="636" y="205" fill="#ee00ff"/><rect x="639" y="205" fill="#fa00ff"/><rect x="642" y="205" fill="#ff00f8"/><rect x="645" y="205" fill="#ff00ed"/><rect x="648" y="205" fill="#ff00e3"/><rect x="651" y="205" fill="#ff00d9"/><rect x="654" y="205" fill="#ff00d0"/><rect x="657" y="205" fill="#ff00c8"/><rect x="660" y="205" fill="#ff00c1"/><rect x="663" y="205" fill="#ff00b9"/><rect x="666" y="205" fill="#ff00b3"/><rect x="669" y="205" fill="#ff00ac"/><rect x="672" y="205" fill="#ff00a6"/><rect x="675" y="205" fill="#ff00a1"/><rect x="678" y="205" fill="#ff009c"/><rect x="681" y="205" fill="#ff0097"/><rect x="537" y="208" fill="#0037ff"/><rect x="540" y="208" fill="#0034ff"/><rect x="543" y="208" fill="#0032ff"/><rect x="546" y="208" fill="#0030ff"/><rect x="549" y="208" fill="#002dff"/><rect x="552" y="208" fill="#002bff"/><rect x="555" y="208" fill="#0028ff"/><rect x="558" y="208" fill="#0026ff"/><rect x="561" y="208" fill="#0023ff"/><rect x="564" y="208" fill="#0021ff"/><rect x="567" y="208" fill="#001eff"/><rect x="570" y="208" fill="#021cff"/><rect x="573" y="208" fill="#0a19ff"/><rect x="576" y="208" fill="#1317ff"/><rect x="579" y="208" fill="#1c14ff"/><rect x="582" y="208" fill="#2612ff"/><rect x="585" y="208" fill="#2f0fff"/><rect x="588" y="208" fill="#390dff"/><rect x="591" y="208" fill="#430aff"/><rect x="594" y="208" fill="#4d08ff"/><rect x="597" y="208" fill="#5705ff"/><rect x="600" y="208" fill="#6103ff"/><rect x="603" y="208" fill="#6b00ff"/><rect x="606" y="208" fill="#7600ff"/><rect x="609" y="208" fill="#8100ff"/><rect x="612" y="208" fill="#8b00ff"/><rect x="615" y="208" fill="#9600ff"/><rect x="618" y="208" fill="#a100ff"/><rect x="621" y="208" fill="#ac00ff"/><rect x="624" y="208" fill="#b700ff"/><rect x="627" y="208" fill="#c200ff"/><rect x="630" y="208" fill="#ce00ff"/><rect x="633" y="208" fill="#d900ff"/><rect x="636" y="208" fill="#e500ff"/><rect x="639" y="208" fill="#f000ff"/><rect x="642" y="208" fill="#fc00ff"/><rect x="645" y="208" fill="#ff00f6"/><rect x="648" y="208" fill="#ff00eb"/><rect x="651" y="208" fill="#ff00e1"/><rect x="654" y="208" fill="#ff00d8"/><rect x="657" y="208" fill="#ff00d0"/><rect x="660" y="208" fill="#ff00c8"/><rect x="663" y="208" fill="#ff00c0"/><rect x="666" y="208" fill="#ff00b9"/><rect x="669" y="208" fill="#ff00b3"/><rect x="672" y="208" fill="#ff00ad"/><rect x="675" y="208" fill="#ff00a7"/><rect x="678" y="208" fill="#ff00a1"/><rect x="681" y="208" fill="#ff009c"/><rect x="537" y="211" fill="#0033ff"/><rect x="540" y="211" fill="#0031ff"/><rect x="543" y="211" fill="#002fff"/><rect x="546" y="211" fill="#002cff"/><rect x="549" y="211" fill="#002aff"/><rect x="552" y="211" fill="#0028ff"/><rect x="555" y="211" fill="#0025ff"/><rect x="558" y="211" fill="#0023ff"/><rect x="561" y="211" fill="#0020ff"/><rect x="564" y="211" fill="#001eff"/><rect x="567" y="211" fill="#001bff"/><rect x="570" y="211" fill="#0119ff"/><rect x="573" y="211" fill="#0917ff"/><rect x="576" y="211" fill="#1214ff"/><rect x="579" y="211" fill="#1a12ff"/><rect x="582" y="211" fill="#240fff"/><rect x="585" y="211" fill="#2d0dff"/><rect x="588" y="211" fill="#360aff"/><rect x="591" y="211" fill="#4008ff"/><rect x="594" y="211" fill="#4905ff"/><rect x="597" y="211" fill="#5303ff"/><rect x="600" y="211" fill="#5d01ff"/><rect x="603" y="211" fill="#6700ff"/><rect x="606" y="211" fill="#7100ff"/><rect x="609" y="211" fill="#7b00ff"/><rect x="612" y="211" fill="#8600ff"/><rect x="615" y="211" fill="#9000ff"/><rect x="618" y="211" fill="#9b00ff"/><rect x="621" y="211" fill="#a600ff"/><rect x="624" y="211" fill="#b000ff"/><rect x="627" y="211" fill="#bb00ff"/><rect x="630" y="211" fill="#c600ff"/><rect x="633" y="211" fill="#d100ff"/><rect x="636" y="211" fill="#dd00ff"/><rect x="639" y="211" fill="#e800ff"/><rect x="642" y="211" fill="#f300ff"/><rect x="645" y="211" fill="#ff00ff"/><rect x="648" y="211" fill="#ff00f4"/><rect x="651" y="211" fill="#ff00ea"/><rect x="654" y="211" fill="#ff00e0"/><rect x="657" y="211" fill="#ff00d7"/><rect x="660" y="211" fill="#ff00cf"/><rect x="663" y="211" fill="#ff00c7"/><rect x="666" y="211" fill="#ff00c0"/><rect x="669" y="211" fill="#ff00b9"/><rect x="672" y="211" fill="#ff00b3"/><rect x="675" y="211" fill="#ff00ad"/><rect x="678" y="211" fill="#ff00a7"/><rect x="540" y="214" fill="#002eff"/><rect x="543" y="214" fill="#002cff"/><rect x="546" y="214" fill="#0029ff"/><rect x="549" y="214" fill="#0027ff"/><rect x="552" y="214" fill="#0025ff"/><rect x="555" y="214" fill="#0022ff"/><rect x="558" y="214" fill="#0020ff"/><rect x="561" y="214" fill="#001eff"/><rect x="564" y="214" fill="#001bff"/><rect x="567" y="214" fill="#0019ff"/><rect x="570" y="214" fill="#0016ff"/><rect x="573" y="214" fill="#0814ff"/><rect x="576" y="214" fill="#1012ff"/><rect x="579" y="214" fill="#190fff"/><rect x="582" y="214" fill="#210dff"/><rect x="585" y="214" fill="#2a0bff"/><rect x="588" y="214" fill="#3408ff"/><rect x="591" y="214" fill="#3d06ff"/><rect x="594" y="214" fill="#4603ff"/><rect x="597" y="214" fill="#5001ff"/><rect x="600" y="214" fill="#5900ff"/><rect x="603" y="214" fill="#6300ff"/><rect x="606" y="214" fill="#6d00ff"/><rect x="609" y="214" fill="#7700ff"/><rect x="612" y="214" fill="#8100ff"/><rect x="615" y="214" fill="#8b00ff"/><rect x="618" y="214" fill="#9500ff"/><rect x="621" y="214" fill="#a000ff"/><rect x="624" y="214" fill="#aa00ff"/><rect x="627" y="214" fill="#b500ff"/><rect x="630" y="214" fill="#bf00ff"/><rect x="633" y="214" fill="#ca00ff"/><rect x="636" y="214" fill="#d500ff"/><rect x="639" y="214" fill="#e000ff"/><rect x="642" y="214" fill="#eb00ff"/><rect x="645" y="214" fill="#f600ff"/><rect x="648" y="214" fill="#ff00fd"/><rect x="651" y="214" fill="#ff00f2"/><rect x="654" y="214" fill="#ff00e8"/><rect x="657" y="214" fill="#ff00df"/><rect x="660" y="214" fill="#ff00d6"/><rect x="663" y="214" fill="#ff00ce"/><rect x="666" y="214" fill="#ff00c7"/><rect x="669" y="214" fill="#ff00c0"/><rect x="672" y="214" fill="#ff00b9"/><rect x="675" y="214" fill="#ff00b3"/><rect x="540" y="217" fill="#002bff"/><rect x="543" y="217" fill="#0029ff"/><rect x="546" y="217" fill="#0026ff"/><rect x="549" y="217" fill="#0024ff"/><rect x="552" y="217" fill="#0022ff"/><rect x="555" y="217" fill="#0020ff"/><rect x="558" y="217" fill="#001dff"/><rect x="561" y="217" fill="#001bff"/><rect x="564" y="217" fill="#0019ff"/><rect x="567" y="217" fill="#0016ff"/><rect x="570" y="217" fill="#0014ff"/><rect x="573" y="217" fill="#0712ff"/><rect x="576" y="217" fill="#0f0fff"/><rect x="579" y="217" fill="#170dff"/><rect x="582" y="217" fill="#1f0bff"/><rect x="585" y="217" fill="#2808ff"/><rect x="588" y="217" fill="#3106ff"/><rect x="591" y="217" fill="#3a04ff"/><rect x="594" y="217" fill="#4302ff"/><rect x="597" y="217" fill="#4c00ff"/><rect x="600" y="217" fill="#5600ff"/><rect x="603" y="217" fill="#5f00ff"/><rect x="606" y="217" fill="#6900ff"/><rect x="609" y="217" fill="#7200ff"/><rect x="612" y="217" fill="#7c00ff"/><rect x="615" y="217" fill="#8600ff"/><rect x="618" y="217" fill="#9000ff"/><rect x="621" y="217" fill="#9a00ff"/><rect x="624" y="217" fill="#a400ff"/><rect x="627" y="217" fill="#ae00ff"/><rect x="630" y="217" fill="#b900ff"/><rect x="633" y="217" fill="#c300ff"/><rect x="636" y="217" fill="#cd00ff"/><rect x="639" y="217" fill="#d800ff"/><rect x="642" y="217" fill="#e300ff"/><rect x="645" y="217" fill="#ee00ff"/><rect x="648" y="217" fill="#f800ff"/><rect x="651" y="217" fill="#ff00fb"/><rect x="654" y="217" fill="#ff00f0"/><rect x="657" y="217" fill="#ff00e7"/><rect x="660" y="217" fill="#ff00de"/><rect x="663" y="217" fill="#ff00d6"/><rect x="666" y="217" fill="#ff00ce"/><rect x="669" y="217" fill="#ff00c7"/><rect x="672" y="217" fill="#ff00c0"/><rect x="540" y="220" fill="#0028ff"/><rect x="543" y="220" fill="#0026ff"/><rect x="546" y="220" fill="#0024ff"/><rect x="549" y="220" fill="#0021ff"/><rect x="552" y="220" fill="#001fff"/><rect x="555" y="220" fill="#001dff"/><rect x="558" y="220" fill="#001bff"/><rect x="561" y="220" fill="#0018ff"/><rect x="564" y="220" fill="#0016ff"/><rect x="567" y="220" fill="#0014ff"/><rect x="570" y="220" fill="#0012ff"/><rect x="573" y="220" fill="#050fff"/><rect x="576" y="220" fill="#0d0dff"/><rect x="579" y="220" fill="#150bff"/><rect x="582" y="220" fill="#1e09ff"/><rect x="585" y="220" fill="#2606ff"/><rect x="588" y="220" fill="#2f04ff"/><rect x="591" y="220" fill="#3702ff"/><rect x="594" y="220" fill="#4000ff"/><rect x="597" y="220" fill="#4900ff"/><rect x="600" y="220" fill="#5200ff"/><rect x="603" y="220" fill="#5b00ff"/><rect x="606" y="220" fill="#6500ff"/><rect x="609" y="220" fill="#6e00ff"/><rect x="612" y="220" fill="#7800ff"/><rect x="615" y="220" fill="#8100ff"/><rect x="618" y="220" fill="#8b00ff"/><rect x="621" y="220" fill="#9400ff"/><rect x="624" y="220" fill="#9e00ff"/><rect x="627" y="220" fill="#a800ff"/><rect x="630" y="220" fill="#b200ff"/><rect x="633" y="220" fill="#bc00ff"/><rect x="636" y="220" fill="#c700ff"/><rect x="639" y="220" fill="#d100ff"/><rect x="642" y="220" fill="#db00ff"/><rect x="645" y="220" fill="#e600ff"/><rect x="648" y="220" fill="#f000ff"/><rect x="651" y="220" fill="#fb00ff"/><rect x="654" y="220" fill="#ff00f9"/><rect x="657" y="220" fill="#ff00ef"/><rect x="660" y="220" fill="#ff00e5"/><rect x="663" y="220" fill="#ff00dd"/><rect x="666" y="220" fill="#ff00d5"/><rect x="669" y="220" fill="#ff00cd"/><rect x="672" y="220" fill="#ff00c6"/><rect x="543" y="223" fill="#0023ff"/><rect x="546" y="223" fill="#0021ff"/><rect x="549" y="223" fill="#001fff"/><rect x="552" y="223" fill="#001dff"/><rect x="555" y="223" fill="#001aff"/><rect x="558" y="223" fill="#0018ff"/><rect x="561" y="223" fill="#0016ff"/><rect x="564" y="223" fill="#0014ff"/><rect x="567" y="223" fill="#0012ff"/><rect x="570" y="223" fill="#0010ff"/><rect x="573" y="223" fill="#040dff"/><rect x="576" y="223" fill="#0c0bff"/><rect x="579" y="223" fill="#1409ff"/><rect x="582" y="223" fill="#1c07ff"/><rect x="585" y="223" fill="#2405ff"/><rect x="588" y="223" fill="#2c03ff"/><rect x="591" y="223" fill="#3501ff"/><rect x="594" y="223" fill="#3d00ff"/><rect x="597" y="223" fill="#4600ff"/><rect x="600" y="223" fill="#4f00ff"/><rect x="603" y="223" fill="#5800ff"/><rect x="606" y="223" fill="#6100ff"/><rect x="609" y="223" fill="#6a00ff"/><rect x="612" y="223" fill="#7300ff"/><rect x="615" y="223" fill="#7d00ff"/><rect x="618" y="223" fill="#8600ff"/><rect x="621" y="223" fill="#8f00ff"/><rect x="624" y="223" fill="#9900ff"/><rect x="627" y="223" fill="#a300ff"/><rect x="630" y="223" fill="#ac00ff"/><rect x="633" y="223" fill="#b600ff"/><rect x="636" y="223" fill="#c000ff"/><rect x="639" y="223" fill="#ca00ff"/><rect x="642" y="223" fill="#d400ff"/><rect x="645" y="223" fill="#de00ff"/><rect x="648" y="223" fill="#e800ff"/><rect x="651" y="223" fill="#f300ff"/><rect x="654" y="223" fill="#fd00ff"/><rect x="657" y="223" fill="#ff00f7"/><rect x="660" y="223" fill="#ff00ed"/><rect x="663" y="223" fill="#ff00e4"/><rect x="666" y="223" fill="#ff00dc"/><rect x="669" y="223" fill="#ff00d4"/><rect x="543" y="226" fill="#0021ff"/><rect x="546" y="226" fill="#001eff"/><rect x="549" y="226" fill="#001cff"/><rect x="552" y="226" fill="#001aff"/><rect x="555" y="226" fill="#0018ff"/><rect x="558" y="226" fill="#0016ff"/><rect x="561" y="226" fill="#0014ff"/><rect x="564" y="226" fill="#0012ff"/><rect x="567" y="226" fill="#0010ff"/><rect x="570" y="226" fill="#000dff"/><rect x="573" y="226" fill="#030bff"/><rect x="576" y="226" fill="#0b09ff"/><rect x="579" y="226" fill="#1207ff"/><rect x="582" y="226" fill="#1a05ff"/><rect x="585" y="226" fill="#2203ff"/><rect x="588" y="226" fill="#2a01ff"/><rect x="591" y="226" fill="#3200ff"/><rect x="594" y="226" fill="#3b00ff"/><rect x="597" y="226" fill="#4300ff"/><rect x="600" y="226" fill="#4c00ff"/><rect x="603" y="226" fill="#5500ff"/><rect x="606" y="226" fill="#5d00ff"/><rect x="609" y="226" fill="#6600ff"/><rect x="612" y="226" fill="#6f00ff"/><rect x="615" y="226" fill="#7800ff"/><rect x="618" y="226" fill="#8100ff"/><rect x="621" y="226" fill="#8b00ff"/><rect x="624" y="226" fill="#9400ff"/><rect x="627" y="226" fill="#9d00ff"/><rect x="630" y="226" fill="#a700ff"/><rect x="633" y="226" fill="#b000ff"/><rect x="636" y="226" fill="#ba00ff"/><rect x="639" y="226" fill="#c300ff"/><rect x="642" y="226" fill="#cd00ff"/><rect x="645" y="226" fill="#d700ff"/><rect x="648" y="226" fill="#e100ff"/><rect x="651" y="226" fill="#eb00ff"/><rect x="654" y="226" fill="#f500ff"/><rect x="657" y="226" fill="#ff00ff"/><rect x="660" y="226" fill="#ff00f5"/><rect x="663" y="226" fill="#ff00ec"/><rect x="666" y="226" fill="#ff00e3"/><rect x="546" y="229" fill="#001cff"/><rect x="549" y="229" fill="#001aff"/><rect x="552" y="229" fill="#0018ff"/><rect x="555" y="229" fill="#0016ff"/><rect x="558" y="229" fill="#0014ff"/><rect x="561" y="229" fill="#0012ff"/><rect x="564" y="229" fill="#0010ff"/><rect x="567" y="229" fill="#000eff"/><rect x="570" y="229" fill="#000cff"/><rect x="573" y="229" fill="#0209ff"/><rect x="576" y="229" fill="#0907ff"/><rect x="579" y="229" fill="#1105ff"/><rect x="582" y="229" fill="#1903ff"/><rect x="585" y="229" fill="#2001ff"/><rect x="588" y="229" fill="#2800ff"/><rect x="591" y="229" fill="#3000ff"/><rect x="594" y="229" fill="#3800ff"/><rect x="597" y="229" fill="#4100ff"/><rect x="600" y="229" fill="#4900ff"/><rect x="603" y="229" fill="#5100ff"/><rect x="606" y="229" fill="#5a00ff"/><rect x="609" y="229" fill="#6300ff"/><rect x="612" y="229" fill="#6b00ff"/><rect x="615" y="229" fill="#7400ff"/><rect x="618" y="229" fill="#7d00ff"/><rect x="621" y="229" fill="#8600ff"/><rect x="624" y="229" fill="#8f00ff"/><rect x="627" y="229" fill="#9800ff"/><rect x="630" y="229" fill="#a100ff"/><rect x="633" y="229" fill="#ab00ff"/><rect x="636" y="229" fill="#b400ff"/><rect x="639" y="229" fill="#bd00ff"/><rect x="642" y="229" fill="#c700ff"/><rect x="645" y="229" fill="#d000ff"/><rect x="648" y="229" fill="#da00ff"/><rect x="651" y="229" fill="#e400ff"/><rect x="654" y="229" fill="#ee00ff"/><rect x="657" y="229" fill="#f800ff"/><rect x="660" y="229" fill="#ff00fd"/><rect x="663" y="229" fill="#ff00f3"/><rect x="546" y="232" fill="#001aff"/><rect x="549" y="232" fill="#0018ff"/><rect x="552" y="232" fill="#0016ff"/><rect x="555" y="232" fill="#0014ff"/><rect x="558" y="232" fill="#0012ff"/><rect x="561" y="232" fill="#0010ff"/><rect x="564" y="232" fill="#000eff"/><rect x="567" y="232" fill="#000cff"/><rect x="570" y="232" fill="#000aff"/><rect x="573" y="232" fill="#0108ff"/><rect x="576" y="232" fill="#0806ff"/><rect x="579" y="232" fill="#1004ff"/><rect x="582" y="232" fill="#1702ff"/><rect x="585" y="232" fill="#1f00ff"/><rect x="588" y="232" fill="#2600ff"/><rect x="591" y="232" fill="#2e00ff"/><rect x="594" y="232" fill="#3600ff"/><rect x="597" y="232" fill="#3e00ff"/><rect x="600" y="232" fill="#4600ff"/><rect x="603" y="232" fill="#4e00ff"/><rect x="606" y="232" fill="#5700ff"/><rect x="609" y="232" fill="#5f00ff"/><rect x="612" y="232" fill="#6800ff"/><rect x="615" y="232" fill="#7000ff"/><rect x="618" y="232" fill="#7900ff"/><rect x="621" y="232" fill="#8200ff"/><rect x="624" y="232" fill="#8a00ff"/><rect x="627" y="232" fill="#9300ff"/><rect x="630" y="232" fill="#9c00ff"/><rect x="633" y="232" fill="#a500ff"/><rect x="636" y="232" fill="#ae00ff"/><rect x="639" y="232" fill="#b700ff"/><rect x="642" y="232" fill="#c100ff"/><rect x="645" y="232" fill="#ca00ff"/><rect x="648" y="232" fill="#d300ff"/><rect x="651" y="232" fill="#dd00ff"/><rect x="654" y="232" fill="#e600ff"/><rect x="657" y="232" fill="#f000ff"/><rect x="660" y="232" fill="#fa00ff"/><rect x="663" y="232" fill="#ff00fb"/><rect x="549" y="235" fill="#0016ff"/><rect x="552" y="235" fill="#0014ff"/><rect x="555" y="235" fill="#0012ff"/><rect x="558" y="235" fill="#0010ff"/><rect x="561" y="235" fill="#000eff"/><rect x="564" y="235" fill="#000cff"/><rect x="567" y="235" fill="#000aff"/><rect x="570" y="235" fill="#0008ff"/><rect x="573" y="235" fill="#0106ff"/><rect x="576" y="235" fill="#0704ff"/><rect x="579" y="235" fill="#0e02ff"/><rect x="582" y="235" fill="#1600ff"/><rect x="585" y="235" fill="#1d00ff"/><rect x="588" y="235" fill="#2400ff"/><rect x="591" y="235" fill="#2c00ff"/><rect x="594" y="235" fill="#3400ff"/><rect x="597" y="235" fill="#3c00ff"/><rect x="600" y="235" fill="#4400ff"/><rect x="603" y="235" fill="#4c00ff"/><rect x="606" y="235" fill="#5400ff"/><rect x="609" y="235" fill="#5c00ff"/><rect x="612" y="235" fill="#6400ff"/><rect x="615" y="235" fill="#6c00ff"/><rect x="618" y="235" fill="#7500ff"/><rect x="621" y="235" fill="#7d00ff"/><rect x="624" y="235" fill="#8600ff"/><rect x="627" y="235" fill="#8f00ff"/><rect x="630" y="235" fill="#9700ff"/><rect x="633" y="235" fill="#a000ff"/><rect x="636" y="235" fill="#a900ff"/><rect x="639" y="235" fill="#b200ff"/><rect x="642" y="235" fill="#bb00ff"/><rect x="645" y="235" fill="#c400ff"/><rect x="648" y="235" fill="#cd00ff"/><rect x="651" y="235" fill="#d600ff"/><rect x="654" y="235" fill="#e000ff"/><rect x="657" y="235" fill="#e900ff"/><rect x="660" y="235" fill="#f200ff"/><rect x="552" y="238" fill="#0012ff"/><rect x="555" y="238" fill="#0010ff"/><rect x="558" y="238" fill="#000eff"/><rect x="561" y="238" fill="#000cff"/><rect x="564" y="238" fill="#000aff"/><rect x="567" y="238" fill="#0008ff"/><rect x="570" y="238" fill="#0006ff"/><rect x="573" y="238" fill="#0004ff"/><rect x="576" y="238" fill="#0603ff"/><rect x="579" y="238" fill="#0d01ff"/><rect x="582" y="238" fill="#1400ff"/><rect x="585" y="238" fill="#1b00ff"/><rect x="588" y="238" fill="#2300ff"/><rect x="591" y="238" fill="#2a00ff"/><rect x="594" y="238" fill="#3200ff"/><rect x="597" y="238" fill="#3900ff"/><rect x="600" y="238" fill="#4100ff"/><rect x="603" y="238" fill="#4900ff"/><rect x="606" y="238" fill="#5100ff"/><rect x="609" y="238" fill="#5900ff"/><rect x="612" y="238" fill="#6100ff"/><rect x="615" y="238" fill="#6900ff"/><rect x="618" y="238" fill="#7100ff"/><rect x="621" y="238" fill="#7900ff"/><rect x="624" y="238" fill="#8200ff"/><rect x="627" y="238" fill="#8a00ff"/><rect x="630" y="238" fill="#9300ff"/><rect x="633" y="238" fill="#9b00ff"/><rect x="636" y="238" fill="#a400ff"/><rect x="639" y="238" fill="#ad00ff"/><rect x="642" y="238" fill="#b500ff"/><rect x="645" y="238" fill="#be00ff"/><rect x="648" y="238" fill="#c700ff"/><rect x="651" y="238" fill="#d000ff"/><rect x="654" y="238" fill="#d900ff"/><rect x="657" y="238" fill="#e200ff"/><rect x="552" y="241" fill="#0010ff"/><rect x="555" y="241" fill="#000eff"/><rect x="558" y="241" fill="#000cff"/><rect x="561" y="241" fill="#000aff"/><rect x="564" y="241" fill="#0008ff"/><rect x="567" y="241" fill="#0007ff"/><rect x="570" y="241" fill="#0005ff"/><rect x="573" y="241" fill="#0003ff"/><rect x="576" y="241" fill="#0501ff"/><rect x="579" y="241" fill="#0c00ff"/><rect x="582" y="241" fill="#1300ff"/><rect x="585" y="241" fill="#1a00ff"/><rect x="588" y="241" fill="#2100ff"/><rect x="591" y="241" fill="#2800ff"/><rect x="594" y="241" fill="#3000ff"/><rect x="597" y="241" fill="#3700ff"/><rect x="600" y="241" fill="#3f00ff"/><rect x="603" y="241" fill="#4600ff"/><rect x="606" y="241" fill="#4e00ff"/><rect x="609" y="241" fill="#5600ff"/><rect x="612" y="241" fill="#5e00ff"/><rect x="615" y="241" fill="#6500ff"/><rect x="618" y="241" fill="#6d00ff"/><rect x="621" y="241" fill="#7600ff"/><rect x="624" y="241" fill="#7e00ff"/><rect x="627" y="241" fill="#8600ff"/><rect x="630" y="241" fill="#8e00ff"/><rect x="633" y="241" fill="#9700ff"/><rect x="636" y="241" fill="#9f00ff"/><rect x="639" y="241" fill="#a700ff"/><rect x="642" y="241" fill="#b000ff"/><rect x="645" y="241" fill="#b900ff"/><rect x="648" y="241" fill="#c100ff"/><rect x="651" y="241" fill="#ca00ff"/><rect x="654" y="241" fill="#d300ff"/><rect x="555" y="244" fill="#000cff"/><rect x="558" y="244" fill="#000aff"/><rect x="561" y="244" fill="#0009ff"/><rect x="564" y="244" fill="#0007ff"/><rect x="567" y="244" fill="#0005ff"/><rect x="570" y="244" fill="#0003ff"/><rect x="573" y="244" fill="#0001ff"/><rect x="576" y="244" fill="#0400ff"/><rect x="579" y="244" fill="#0b00ff"/><rect x="582" y="244" fill="#1200ff"/><rect x="585" y="244" fill="#1800ff"/><rect x="588" y="244" fill="#1f00ff"/><rect x="591" y="244" fill="#2600ff"/><rect x="594" y="244" fill="#2e00ff"/><rect x="597" y="244" fill="#3500ff"/><rect x="600" y="244" fill="#3c00ff"/><rect x="603" y="244" fill="#4400ff"/><rect x="606" y="244" fill="#4b00ff"/><rect x="609" y="244" fill="#5300ff"/><rect x="612" y="244" fill="#5b00ff"/><rect x="615" y="244" fill="#6200ff"/><rect x="618" y="244" fill="#6a00ff"/><rect x="621" y="244" fill="#7200ff"/><rect x="624" y="244" fill="#7a00ff"/><rect x="627" y="244" fill="#8200ff"/><rect x="630" y="244" fill="#8a00ff"/><rect x="633" y="244" fill="#9200ff"/><rect x="636" y="244" fill="#9a00ff"/><rect x="639" y="244" fill="#a300ff"/><rect x="642" y="244" fill="#ab00ff"/><rect x="645" y="244" fill="#b300ff"/><rect x="648" y="244" fill="#bc00ff"/><rect x="651" y="244" fill="#c400ff"/><rect x="654" y="244" fill="#cd00ff"/><rect x="555" y="247" fill="#000bff"/><rect x="558" y="247" fill="#0009ff"/><rect x="561" y="247" fill="#0007ff"/><rect x="564" y="247" fill="#0005ff"/><rect x="567" y="247" fill="#0004ff"/><rect x="570" y="247" fill="#0002ff"/><rect x="573" y="247" fill="#0000ff"/><rect x="576" y="247" fill="#0400ff"/><rect x="579" y="247" fill="#0a00ff"/><rect x="582" y="247" fill="#1000ff"/><rect x="585" y="247" fill="#1700ff"/><rect x="588" y="247" fill="#1e00ff"/><rect x="591" y="247" fill="#2500ff"/><rect x="594" y="247" fill="#2c00ff"/><rect x="597" y="247" fill="#3300ff"/><rect x="600" y="247" fill="#3a00ff"/><rect x="603" y="247" fill="#4100ff"/><rect x="606" y="247" fill="#4900ff"/><rect x="609" y="247" fill="#5000ff"/><rect x="612" y="247" fill="#5800ff"/><rect x="615" y="247" fill="#5f00ff"/><rect x="618" y="247" fill="#6700ff"/><rect x="621" y="247" fill="#6e00ff"/><rect x="624" y="247" fill="#7600ff"/><rect x="627" y="247" fill="#7e00ff"/><rect x="630" y="247" fill="#8600ff"/><rect x="633" y="247" fill="#8e00ff"/><rect x="636" y="247" fill="#9600ff"/><rect x="639" y="247" fill="#9e00ff"/><rect x="642" y="247" fill="#a600ff"/><rect x="645" y="247" fill="#ae00ff"/><rect x="648" y="247" fill="#b700ff"/><rect x="651" y="247" fill="#bf00ff"/><rect x="558" y="250" fill="#0007ff"/><rect x="561" y="250" fill="#0006ff"/><rect x="564" y="250" fill="#0004ff"/><rect x="567" y="250" fill="#0002ff"/><rect x="570" y="250" fill="#0001ff"/><rect x="573" y="250" fill="#0000ff"/><rect x="576" y="250" fill="#0300ff"/><rect x="579" y="250" fill="#0900ff"/><rect x="582" y="250" fill="#0f00ff"/><rect x="585" y="250" fill="#1600ff"/><rect x="588" y="250" fill="#1c00ff"/><rect x="591" y="250" fill="#2300ff"/><rect x="594" y="250" fill="#2a00ff"/><rect x="597" y="250" fill="#3100ff"/><rect x="600" y="250" fill="#3800ff"/><rect x="603" y="250" fill="#3f00ff"/><rect x="606" y="250" fill="#4600ff"/><rect x="609" y="250" fill="#4d00ff"/><rect x="612" y="250" fill="#5500ff"/><rect x="615" y="250" fill="#5c00ff"/><rect x="618" y="250" fill="#6400ff"/><rect x="621" y="250" fill="#6b00ff"/><rect x="624" y="250" fill="#7300ff"/><rect x="627" y="250" fill="#7a00ff"/><rect x="630" y="250" fill="#8200ff"/><rect x="633" y="250" fill="#8a00ff"/><rect x="636" y="250" fill="#9200ff"/><rect x="639" y="250" fill="#9a00ff"/><rect x="642" y="250" fill="#a100ff"/><rect x="645" y="250" fill="#a900ff"/><rect x="648" y="250" fill="#b200ff"/><rect x="558" y="253" fill="#0006ff"/><rect x="561" y="253" fill="#0004ff"/><rect x="564" y="253" fill="#0002ff"/><rect x="567" y="253" fill="#0001ff"/><rect x="570" y="253" fill="#0000ff"/><rect x="573" y="253" fill="#0000ff"/><rect x="576" y="253" fill="#0200ff"/><rect x="579" y="253" fill="#0800ff"/><rect x="582" y="253" fill="#0e00ff"/><rect x="585" y="253" fill="#1400ff"/><rect x="588" y="253" fill="#1b00ff"/><rect x="591" y="253" fill="#2200ff"/><rect x="594" y="253" fill="#2800ff"/><rect x="597" y="253" fill="#2f00ff"/><rect x="600" y="253" fill="#3600ff"/><rect x="603" y="253" fill="#3d00ff"/><rect x="606" y="253" fill="#4400ff"/><rect x="609" y="253" fill="#4b00ff"/><rect x="612" y="253" fill="#5200ff"/><rect x="615" y="253" fill="#5900ff"/><rect x="618" y="253" fill="#6100ff"/><rect x="621" y="253" fill="#6800ff"/><rect x="624" y="253" fill="#6f00ff"/><rect x="627" y="253" fill="#7700ff"/><rect x="630" y="253" fill="#7e00ff"/><rect x="633" y="253" fill="#8600ff"/><rect x="636" y="253" fill="#8e00ff"/><rect x="639" y="253" fill="#9500ff"/><rect x="642" y="253" fill="#9d00ff"/><rect x="645" y="253" fill="#a500ff"/><rect x="561" y="256" fill="#0003ff"/><rect x="564" y="256" fill="#0001ff"/><rect x="567" y="256" fill="#0000ff"/><rect x="570" y="256" fill="#0000ff"/><rect x="573" y="256" fill="#0000ff"/><rect x="576" y="256" fill="#0100ff"/><rect x="579" y="256" fill="#0700ff"/><rect x="582" y="256" fill="#0d00ff"/><rect x="585" y="256" fill="#1300ff"/><rect x="588" y="256" fill="#1a00ff"/><rect x="591" y="256" fill="#2000ff"/><rect x="594" y="256" fill="#2700ff"/><rect x="597" y="256" fill="#2d00ff"/><rect x="600" y="256" fill="#3400ff"/><rect x="603" y="256" fill="#3b00ff"/><rect x="606" y="256" fill="#4200ff"/><rect x="609" y="256" fill="#4900ff"/><rect x="612" y="256" fill="#5000ff"/><rect x="615" y="256" fill="#5700ff"/><rect x="618" y="256" fill="#5e00ff"/><rect x="621" y="256" fill="#6500ff"/><rect x="624" y="256" fill="#6c00ff"/><rect x="627" y="256" fill="#7300ff"/><rect x="630" y="256" fill="#7b00ff"/><rect x="633" y="256" fill="#8200ff"/><rect x="636" y="256" fill="#8a00ff"/><rect x="639" y="256" fill="#9100ff"/><rect x="642" y="256" fill="#9900ff"/><rect x="564" y="259" fill="#0000ff"/><rect x="567" y="259" fill="#0000ff"/><rect x="570" y="259" fill="#0000ff"/><rect x="573" y="259" fill="#0000ff"/><rect x="576" y="259" fill="#0000ff"/><rect x="579" y="259" fill="#0600ff"/><rect x="582" y="259" fill="#0c00ff"/><rect x="585" y="259" fill="#1200ff"/><rect x="588" y="259" fill="#1800ff"/><rect x="591" y="259" fill="#1f00ff"/><rect x="594" y="259" fill="#2500ff"/><rect x="597" y="259" fill="#2c00ff"/><rect x="600" y="259" fill="#3200ff"/><rect x="603" y="259" fill="#3900ff"/><rect x="606" y="259" fill="#3f00ff"/><rect x="609" y="259" fill="#4600ff"/><rect x="612" y="259" fill="#4d00ff"/><rect x="615" y="259" fill="#5400ff"/><rect x="618" y="259" fill="#5b00ff"/><rect x="621" y="259" fill="#6200ff"/><rect x="624" y="259" fill="#6900ff"/><rect x="627" y="259" fill="#7000ff"/><rect x="630" y="259" fill="#7700ff"/><rect x="633" y="259" fill="#7f00ff"/><rect x="636" y="259" fill="#8600ff"/><rect x="639" y="259" fill="#8d00ff"/><rect x="642" y="259" fill="#9500ff"/><rect x="564" y="262" fill="#0000ff"/><rect x="567" y="262" fill="#0000ff"/><rect x="570" y="262" fill="#0000ff"/><rect x="573" y="262" fill="#0000ff"/><rect x="576" y="262" fill="#0000ff"/><rect x="579" y="262" fill="#0500ff"/><rect x="582" y="262" fill="#0b00ff"/><rect x="585" y="262" fill="#1100ff"/><rect x="588" y="262" fill="#1700ff"/><rect x="591" y="262" fill="#1d00ff"/><rect x="594" y="262" fill="#2300ff"/><rect x="597" y="262" fill="#2a00ff"/><rect x="600" y="262" fill="#3000ff"/><rect x="603" y="262" fill="#3700ff"/><rect x="606" y="262" fill="#3d00ff"/><rect x="609" y="262" fill="#4400ff"/><rect x="612" y="262" fill="#4b00ff"/><rect x="615" y="262" fill="#5100ff"/><rect x="618" y="262" fill="#5800ff"/><rect x="621" y="262" fill="#5f00ff"/><rect x="624" y="262" fill="#6600ff"/><rect x="627" y="262" fill="#6d00ff"/><rect x="630" y="262" fill="#7400ff"/><rect x="633" y="262" fill="#7b00ff"/><rect x="636" y="262" fill="#8200ff"/><rect x="639" y="262" fill="#8a00ff"/><rect x="567" y="265" fill="#0000ff"/><rect x="570" y="265" fill="#0000ff"/><rect x="573" y="265" fill="#0000ff"/><rect x="576" y="265" fill="#0000ff"/><rect x="579" y="265" fill="#0400ff"/><rect x="582" y="265" fill="#0a00ff"/><rect x="585" y="265" fill="#1000ff"/><rect x="588" y="265" fill="#1600ff"/><rect x="591" y="265" fill="#1c00ff"/><rect x="594" y="265" fill="#2200ff"/><rect x="597" y="265" fill="#2800ff"/><rect x="600" y="265" fill="#2f00ff"/><rect x="603" y="265" fill="#3500ff"/><rect x="606" y="265" fill="#3b00ff"/><rect x="609" y="265" fill="#4200ff"/><rect x="612" y="265" fill="#4800ff"/><rect x="615" y="265" fill="#4f00ff"/><rect x="618" y="265" fill="#5600ff"/><rect x="621" y="265" fill="#5c00ff"/><rect x="624" y="265" fill="#6300ff"/><rect x="627" y="265" fill="#6a00ff"/><rect x="630" y="265" fill="#7100ff"/><rect x="633" y="265" fill="#7800ff"/><rect x="636" y="265" fill="#7f00ff"/><rect x="570" y="268" fill="#0000ff"/><rect x="573" y="268" fill="#0000ff"/><rect x="576" y="268" fill="#0000ff"/><rect x="579" y="268" fill="#0400ff"/><rect x="582" y="268" fill="#0900ff"/><rect x="585" y="268" fill="#0f00ff"/><rect x="588" y="268" fill="#1500ff"/><rect x="591" y="268" fill="#1b00ff"/><rect x="594" y="268" fill="#2100ff"/><rect x="597" y="268" fill="#2700ff"/><rect x="600" y="268" fill="#2d00ff"/><rect x="603" y="268" fill="#3300ff"/><rect x="606" y="268" fill="#3900ff"/><rect x="609" y="268" fill="#4000ff"/><rect x="612" y="268" fill="#4600ff"/><rect x="615" y="268" fill="#4d00ff"/><rect x="618" y="268" fill="#5300ff"/><rect x="621" y="268" fill="#5a00ff"/><rect x="624" y="268" fill="#6100ff"/><rect x="627" y="268" fill="#6700ff"/><rect x="630" y="268" fill="#6e00ff"/><rect x="633" y="268" fill="#7500ff"/><rect x="570" y="271" fill="#0000ff"/><rect x="573" y="271" fill="#0000ff"/><rect x="576" y="271" fill="#0000ff"/><rect x="579" y="271" fill="#0300ff"/><rect x="582" y="271" fill="#0800ff"/><rect x="585" y="271" fill="#0e00ff"/><rect x="588" y="271" fill="#1400ff"/><rect x="591" y="271" fill="#1900ff"/><rect x="594" y="271" fill="#1f00ff"/><rect x="597" y="271" fill="#2500ff"/><rect x="600" y="271" fill="#2b00ff"/><rect x="603" y="271" fill="#3100ff"/><rect x="606" y="271" fill="#3800ff"/><rect x="609" y="271" fill="#3e00ff"/><rect x="612" y="271" fill="#4400ff"/><rect x="615" y="271" fill="#4a00ff"/><rect x="618" y="271" fill="#5100ff"/><rect x="621" y="271" fill="#5700ff"/><rect x="624" y="271" fill="#5e00ff"/><rect x="627" y="271" fill="#6400ff"/><rect x="630" y="271" fill="#6b00ff"/><rect x="633" y="271" fill="#7200ff"/><rect x="573" y="274" fill="#0000ff"/><rect x="576" y="274" fill="#0000ff"/><rect x="579" y="274" fill="#0200ff"/><rect x="582" y="274" fill="#0700ff"/><rect x="585" y="274" fill="#0d00ff"/><rect x="588" y="274" fill="#1200ff"/><rect x="591" y="274" fill="#1800ff"/><rect x="594" y="274" fill="#1e00ff"/><rect x="597" y="274" fill="#2400ff"/><rect x="600" y="274" fill="#2a00ff"/><rect x="603" y="274" fill="#3000ff"/><rect x="606" y="274" fill="#3600ff"/><rect x="609" y="274" fill="#3c00ff"/><rect x="612" y="274" fill="#4200ff"/><rect x="615" y="274" fill="#4800ff"/><rect x="618" y="274" fill="#4f00ff"/><rect x="621" y="274" fill="#5500ff"/><rect x="624" y="274" fill="#5b00ff"/><rect x="627" y="274" fill="#6200ff"/><rect x="630" y="274" fill="#6800ff"/><rect x="576" y="277" fill="#0000ff"/><rect x="579" y="277" fill="#0200ff"/><rect x="582" y="277" fill="#0700ff"/><rect x="585" y="277" fill="#0c00ff"/><rect x="588" y="277" fill="#1100ff"/><rect x="591" y="277" fill="#1700ff"/><rect x="594" y="277" fill="#1d00ff"/><rect x="597" y="277" fill="#2200ff"/><rect x="600" y="277" fill="#2800ff"/><rect x="603" y="277" fill="#2e00ff"/><rect x="606" y="277" fill="#3400ff"/><rect x="609" y="277" fill="#3a00ff"/><rect x="612" y="277" fill="#4000ff"/><rect x="615" y="277" fill="#4600ff"/><rect x="618" y="277" fill="#4c00ff"/><rect x="621" y="277" fill="#5300ff"/><rect x="624" y="277" fill="#5900ff"/><rect x="627" y="277" fill="#5f00ff"/><rect x="579" y="280" fill="#0100ff"/><rect x="582" y="280" fill="#0600ff"/><rect x="585" y="280" fill="#0b00ff"/><rect x="588" y="280" fill="#1000ff"/><rect x="591" y="280" fill="#1600ff"/><rect x="594" y="280" fill="#1b00ff"/><rect x="597" y="280" fill="#2100ff"/><rect x="600" y="280" fill="#2700ff"/><rect x="603" y="280" fill="#2d00ff"/><rect x="606" y="280" fill="#3200ff"/><rect x="609" y="280" fill="#3800ff"/><rect x="612" y="280" fill="#3e00ff"/><rect x="615" y="280" fill="#4400ff"/><rect x="618" y="280" fill="#4a00ff"/><rect x="621" y="280" fill="#5000ff"/><rect x="624" y="280" fill="#5700ff"/><rect x="582" y="283" fill="#0500ff"/><rect x="585" y="283" fill="#0a00ff"/><rect x="588" y="283" fill="#0f00ff"/><rect x="591" y="283" fill="#1500ff"/><rect x="594" y="283" fill="#1a00ff"/><rect x="597" y="283" fill="#2000ff"/><rect x="600" y="283" fill="#2500ff"/><rect x="603" y="283" fill="#2b00ff"/><rect x="606" y="283" fill="#3100ff"/><rect x="609" y="283" fill="#3700ff"/><rect x="612" y="283" fill="#3c00ff"/><rect x="615" y="283" fill="#4200ff"/><rect x="618" y="283" fill="#4800ff"/><rect x="621" y="283" fill="#4e00ff"/><rect x="624" y="283" fill="#5400ff"/><rect x="585" y="286" fill="#0900ff"/><rect x="588" y="286" fill="#0f00ff"/><rect x="591" y="286" fill="#1400ff"/><rect x="594" y="286" fill="#1900ff"/><rect x="597" y="286" fill="#1f00ff"/><rect x="600" y="286" fill="#2400ff"/><rect x="603" y="286" fill="#2a00ff"/><rect x="606" y="286" fill="#2f00ff"/><rect x="609" y="286" fill="#3500ff"/><rect x="612" y="286" fill="#3b00ff"/><rect x="615" y="286" fill="#4000ff"/><rect x="618" y="286" fill="#4600ff"/><rect x="621" y="286" fill="#4c00ff"/><rect x="588" y="289" fill="#0e00ff"/><rect x="591" y="289" fill="#1300ff"/><rect x="594" y="289" fill="#1800ff"/><rect x="597" y="289" fill="#1d00ff"/><rect x="600" y="289" fill="#2300ff"/><rect x="603" y="289" fill="#2800ff"/><rect x="606" y="289" fill="#2e00ff"/><rect x="609" y="289" fill="#3300ff"/><rect x="612" y="289" fill="#3900ff"/><rect x="615" y="289" fill="#3f00ff"/><rect x="618" y="289" fill="#4400ff"/><rect x="591" y="292" fill="#1200ff"/><rect x="594" y="292" fill="#1700ff"/><rect x="597" y="292" fill="#1c00ff"/><rect x="600" y="292" fill="#2200ff"/><rect x="603" y="292" fill="#2700ff"/><rect x="606" y="292" fill="#2c00ff"/><rect x="609" y="292" fill="#3200ff"/><rect x="612" y="292" fill="#3700ff"/><rect x="615" y="292" fill="#3d00ff"/><rect x="591" y="295" fill="#1100ff"/><rect x="594" y="295" fill="#1600ff"/><rect x="597" y="295" fill="#1b00ff"/><rect x="600" y="295" fill="#2000ff"/><rect x="603" y="295" fill="#2600ff"/><rect x="606" y="295" fill="#2b00ff"/><rect x="609" y="295" fill="#3000ff"/><rect x="612" y="295" fill="#3600ff"/><rect x="615" y="295" fill="#3b00ff"/><rect x="594" y="298" fill="#1500ff"/><rect x="597" y="298" fill="#1a00ff"/><rect x="600" y="298" fill="#1f00ff"/><rect x="603" y="298" fill="#2400ff"/><rect x="606" y="298" fill="#2a00ff"/><rect x="609" y="298" fill="#2f00ff"/><rect x="612" y="298" fill="#3400ff"/><rect x="597" y="301" fill="#1900ff"/><rect x="600" y="301" fill="#1e00ff"/><rect x="603" y="301" fill="#2300ff"/><rect x="606" y="301" fill="#2800ff"/><rect x="609" y="301" fill="#2d00ff"/></g><path d="M606.2 299.7 606.2 299.7 606.2 299.7 606.1 299.7 606.1 299.7 606.1 299.7 606.1 299.7 606.1 299.8 606.1 299.8 606 299.8 606 299.8 606 299.8 605.9 299.8 605.9 299.8 605.9 299.8 605.9 299.8 605.8 299.8 605.8 299.8 605.8 299.9 605.8 299.9 605.8 299.9 605.7 299.9 605.7 300 605.7 300 605.6 300 605.6 300 605.5 300 605.5 299.9 605.4 299.9 605.3 299.9 605.3 299.9 605.2 299.9 605.2 299.9 605.1 299.9 605 299.9 605 299.9 604.9 299.9 604.8 299.8 604.7 299.8 604.6 299.7 604.4 299.6 604.3 299.4 604.1 299.3 603.9 299.1 603.7 299 603.5 298.8 603.2 298.5 603 298.3 602.7 298 602.4 297.8 602.1 297.5 601.8 297.1 601.4 296.8 601.1 296.4 600.7 296 600.3 295.6 599.8 295.1 599.4 294.6 598.9 294.1 598.4 293.5 597.9 292.9 597.3 292.4 596.7 291.7 596.1 291.1 595.5 290.4 594.8 289.7 594.1 289 593.3 288.2 592.6 287.3 591.7 286.5 590.9 285.5 590 284.6 589 283.6 588.1 282.6 587.1 281.5 586 280.4 584.9 279.2 583.8 277.9 582.6 276.6 581.4 275.2 580.2 273.7 578.9 272.1 577.5 270.5 576.1 268.7 574.7 266.7 573.1 264.6 571.5 262.2 569.7 259.5 567.8 256.6 565.8 253.5 563.8 250.2 561.7 246.6 559.5 242.9 557.3 239 555 234.8 552.7 230.5 550.4 225.9 548 221.1 545.6 216.2 543.1 211.1 540.7 206 538.3 200.8 536 195.5 533.6 190.2 531.4 184.8 529.2 179.5 527.2 174.2 525.2 169 523.4 163.9 521.8 158.9 520.2 154.1 518.7 149.4 517.4 144.9 516.1 140.6 515 136.5 514.1 132.7 513.2 129 512.5 125.7 511.8 122.5 511.3 119.5 510.9 116.7 510.6 114.2 510.3 111.8 510.2 109.6 510.1 107.5 510.1 105.6 510.2 103.9 510.4 102.2 510.6 100.7 511 99.3 511.3 98 511.8 96.8 512.3 95.8 512.9 94.8 513.5 93.9 514.2 93.2 515 92.5 515.7 92 516.6 91.5 517.4 91.1 518.3 90.7 519.2 90.4 520.2 90.2 521.1 90.1 522.1 89.9 523.1 89.8 524.2 89.7 525.2 89.7 526.3 89.6 527.4 89.6 528.4 89.6 529.5 89.6 530.6 89.6 531.6 89.6 532.7 89.6 533.8 89.7 534.9 89.7 536 89.8 537.1 89.8 538.2 89.9 539.4 90 540.6 90.1 541.7 90.2 542.9 90.3 544.2 90.4 545.4 90.6 546.7 90.7 548 90.8 549.3 91 550.6 91.1 552 91.3 553.4 91.5 554.8 91.7 556.2 91.8 557.7 92 559.2 92.2 560.7 92.4 562.3 92.7 563.9 92.9 565.5 93.1 567.2 93.3 568.9 93.6 570.6 93.8 572.4 94.1 574.2 94.3 576 94.6 577.9 94.8 579.8 95.1 581.7 95.4 583.7 95.7 585.8 96 587.8 96.3 589.9 96.6 592.1 96.9 594.3 97.2 596.5 97.6 598.8 97.9 601.1 98.2 603.4 98.6 605.8 98.9 608.2 99.3 610.7 99.6 613.2 100 615.7 100.4 618.3 100.7 620.9 101.1 623.5 101.5 626.1 101.9 628.8 102.3 631.5 102.7 634.2 103.1 637 103.5 639.7 103.9 642.5 104.3 645.3 104.7 648 105.1 650.7 105.5 653.4 105.9 656 106.3 658.7 106.7 661.3 107.1 664 107.4 666.6 107.8 669.2 108.2 671.8 108.6 674.3 109 676.7 109.3 679.1 109.7 681.5 110 683.8 110.3 686 110.7 688.2 111 690.3 111.3 692.4 111.6 694.4 111.9 696.4 112.2 698.3 112.5 700.1 112.7 701.8 113 703.6 113.2 705.2 113.5 706.8 113.7 708.3 113.9 709.8 114.1 711.2 114.4 712.6 114.6 713.9 114.8 715.2 114.9 716.5 115.1 717.7 115.3 718.8 115.5 720 115.6 721.1 115.8 722.2 116 723.2 116.1 724.2 116.3 725.2 116.4 726.2 116.5 727.1 116.7 728 116.8 728.8 116.9 729.6 117.1 730.4 117.2 731.2 117.3 731.9 117.4 732.6 117.5 733.2 117.6 733.8 117.7 734.3 117.7 734.9 117.8 735.4 117.9 735.9 118 736.3 118 736.8 118.1 737.2 118.2 737.6 118.2 738 118.3 738.3 118.3 738.7 118.4 739 118.4 739.3 118.5 739.5 118.5 739.8 118.5 740 118.6 740.2 118.6 740.4 118.6 740.6 118.7 740.7 118.7 740.9 118.7 741.1 118.7 741.3 118.8 741.4 118.8 741.6 118.8 741.7 118.8 741.9 118.8 742 118.9 742.1 118.9 742.3 118.9 742.4 118.9 742.6 118.9 742.7 119 742.8 119 743 119 743.1 119 743.2 119 743.3 119.1 743.4 119.1 743.5 119.1 743.6 119.1 743.6 119.1 743.7 119.1 743.7 119.1 743.8 119.1 743.8 119.1 743.9 119.1 743.9 119.1 743.9 119.1 743.9 119.2 744 119.2 744 119.2 744 119.2Z M718.9 115.5 530.5 89.6 569.5 259.4Z" fill-rule="evenodd" fill="#000" fill-opacity="0.4"/></g></g>
<path d="M249.0 85H479.0V306.3" fill="none" stroke="#585858" stroke-width="1.6"/>
<path d="M250.0 86.6H477.4V306" fill="none" stroke="#1a1a1a" stroke-width="1" stroke-opacity="0.8"/>
<path d="M249.0 85V306.3H479.0" fill="none" stroke="#6c6c6c" stroke-width="1.4"/>
<path d="M249.0 306.3H479.8" fill="none" stroke="#858585" stroke-width="1.3"/>
<text x="340.8" y="82.8" class="ct">CIE 1931 xy</text>
<path d="M248.5 306.6 v2.6" stroke="#999" stroke-width="1"/>
<text x="248.5" y="316" class="tx">0</text>
<path d="M279.8 306.6 v2.6" stroke="#999" stroke-width="1"/>
<text x="279.8" y="316" class="tx">0.1</text>
<path d="M311.1 306.6 v2.6" stroke="#999" stroke-width="1"/>
<text x="311.1" y="316" class="tx">0.2</text>
<path d="M342.4 306.6 v2.6" stroke="#999" stroke-width="1"/>
<text x="342.4" y="316" class="tx">0.3</text>
<path d="M373.7 306.6 v2.6" stroke="#999" stroke-width="1"/>
<text x="373.7" y="316" class="tx">0.4</text>
<path d="M405.0 306.6 v2.6" stroke="#999" stroke-width="1"/>
<text x="405.0" y="316" class="tx">0.5</text>
<path d="M436.3 306.6 v2.6" stroke="#999" stroke-width="1"/>
<text x="436.3" y="316" class="tx">0.6</text>
<path d="M467.6 306.6 v2.6" stroke="#999" stroke-width="1"/>
<text x="467.6" y="316" class="tx">0.7</text>
<path d="M248.6 305.8 h-2.6" stroke="#999" stroke-width="1"/>
<text x="246.0" y="308.0" class="ty">0</text>
<path d="M248.6 279.5 h-2.6" stroke="#999" stroke-width="1"/>
<text x="246.0" y="281.7" class="ty">0.1</text>
<path d="M248.6 253.2 h-2.6" stroke="#999" stroke-width="1"/>
<text x="246.0" y="255.4" class="ty">0.2</text>
<path d="M248.6 226.9 h-2.6" stroke="#999" stroke-width="1"/>
<text x="246.0" y="229.1" class="ty">0.3</text>
<path d="M248.6 200.6 h-2.6" stroke="#999" stroke-width="1"/>
<text x="246.0" y="202.8" class="ty">0.4</text>
<path d="M248.6 174.3 h-2.6" stroke="#999" stroke-width="1"/>
<text x="246.0" y="176.5" class="ty">0.5</text>
<path d="M248.6 148.0 h-2.6" stroke="#999" stroke-width="1"/>
<text x="246.0" y="150.2" class="ty">0.6</text>
<path d="M248.6 121.7 h-2.6" stroke="#999" stroke-width="1"/>
<text x="246.0" y="123.9" class="ty">0.7</text>
<path d="M248.6 95.4 h-2.6" stroke="#999" stroke-width="1"/>
<text x="246.0" y="97.6" class="ty">0.8</text>
<path d="M509.6 85H736.0V306.3" fill="none" stroke="#585858" stroke-width="1.6"/>
<path d="M510.6 86.6H734.4V306" fill="none" stroke="#1a1a1a" stroke-width="1" stroke-opacity="0.8"/>
<path d="M509.6 85V306.3H736.0" fill="none" stroke="#6c6c6c" stroke-width="1.4"/>
<path d="M509.6 306.3H736.8" fill="none" stroke="#858585" stroke-width="1.3"/>
<text x="596.0" y="82.8" class="ct">CIE 1976 u'v'</text>
<path d="M509.6 306.6 v2.6" stroke="#999" stroke-width="1"/>
<text x="509.6" y="316" class="tx">0</text>
<path d="M547.2 306.6 v2.6" stroke="#999" stroke-width="1"/>
<text x="547.2" y="316" class="tx">0.1</text>
<path d="M584.8 306.6 v2.6" stroke="#999" stroke-width="1"/>
<text x="584.8" y="316" class="tx">0.2</text>
<path d="M622.4 306.6 v2.6" stroke="#999" stroke-width="1"/>
<text x="622.4" y="316" class="tx">0.3</text>
<path d="M660.0 306.6 v2.6" stroke="#999" stroke-width="1"/>
<text x="660.0" y="316" class="tx">0.4</text>
<path d="M697.6 306.6 v2.6" stroke="#999" stroke-width="1"/>
<text x="697.6" y="316" class="tx">0.5</text>
<path d="M509.2 305.8 h-2.6" stroke="#999" stroke-width="1"/>
<text x="506.6" y="308.0" class="ty">0</text>
<path d="M509.2 287.4 h-2.6" stroke="#999" stroke-width="1"/>
<text x="506.6" y="289.6" class="ty">0.05</text>
<path d="M509.2 268.9 h-2.6" stroke="#999" stroke-width="1"/>
<text x="506.6" y="271.1" class="ty">0.1</text>
<path d="M509.2 250.5 h-2.6" stroke="#999" stroke-width="1"/>
<text x="506.6" y="252.7" class="ty">0.15</text>
<path d="M509.2 232.1 h-2.6" stroke="#999" stroke-width="1"/>
<text x="506.6" y="234.3" class="ty">0.2</text>
<path d="M509.2 213.7 h-2.6" stroke="#999" stroke-width="1"/>
<text x="506.6" y="215.9" class="ty">0.25</text>
<path d="M509.2 195.2 h-2.6" stroke="#999" stroke-width="1"/>
<text x="506.6" y="197.4" class="ty">0.3</text>
<path d="M509.2 176.8 h-2.6" stroke="#999" stroke-width="1"/>
<text x="506.6" y="179.0" class="ty">0.35</text>
<path d="M509.2 158.4 h-2.6" stroke="#999" stroke-width="1"/>
<text x="506.6" y="160.6" class="ty">0.4</text>
<path d="M509.2 140.0 h-2.6" stroke="#999" stroke-width="1"/>
<text x="506.6" y="142.2" class="ty">0.45</text>
<path d="M509.2 121.6 h-2.6" stroke="#999" stroke-width="1"/>
<text x="506.6" y="123.8" class="ty">0.5</text>
<path d="M509.2 103.1 h-2.6" stroke="#999" stroke-width="1"/>
<text x="506.6" y="105.3" class="ty">0.55</text>
<circle cx="345.1" cy="219.0" r="2.2" fill="none" stroke="#000" stroke-opacity="0.5" stroke-width="0.8"/>
<circle cx="455.3" cy="223.3" r="2.2" fill="none" stroke="#000" stroke-opacity="0.5" stroke-width="0.8"/>
<circle cx="333.5" cy="138.1" r="2.2" fill="none" stroke="#000" stroke-opacity="0.5" stroke-width="0.8"/>
<circle cx="297.2" cy="293.1" r="2.2" fill="none" stroke="#000" stroke-opacity="0.5" stroke-width="0.8"/>
<circle cx="314.9" cy="217.8" r="2.2" fill="none" stroke="#000" stroke-opacity="0.5" stroke-width="0.8"/>
<circle cx="352.5" cy="268.8" r="2.2" fill="none" stroke="#000" stroke-opacity="0.5" stroke-width="0.8"/>
<circle cx="378.8" cy="169.8" r="2.2" fill="none" stroke="#000" stroke-opacity="0.5" stroke-width="0.8"/>
<rect x="343.3" y="216.0" width="6.2" height="6.2" fill="none" stroke="#1a1a1a" stroke-width="0.95"/>
<rect x="467.0" y="225.7" width="6.2" height="6.2" fill="none" stroke="#dadada" stroke-width="0.95"/>
<rect x="298.6" y="92.9" width="6.2" height="6.2" fill="none" stroke="#dadada" stroke-width="0.95"/>
<rect x="286.4" y="290.4" width="6.2" height="6.2" fill="none" stroke="#dadada" stroke-width="0.95"/>
<rect x="291.3" y="211.9" width="6.2" height="6.2" fill="none" stroke="#dadada" stroke-width="0.95"/>
<rect x="360.6" y="263.8" width="6.2" height="6.2" fill="none" stroke="#dadada" stroke-width="0.95"/>
<rect x="385.2" y="161.2" width="6.2" height="6.2" fill="none" stroke="#dadada" stroke-width="0.95"/>
<circle cx="582.9" cy="133.2" r="2.2" fill="none" stroke="#000" stroke-opacity="0.5" stroke-width="0.8"/>
<circle cx="692.5" cy="114.6" r="2.2" fill="none" stroke="#000" stroke-opacity="0.5" stroke-width="0.8"/>
<circle cx="550.1" cy="96.4" r="2.2" fill="none" stroke="#000" stroke-opacity="0.5" stroke-width="0.8"/>
<circle cx="581.4" cy="257.3" r="2.2" fill="none" stroke="#000" stroke-opacity="0.5" stroke-width="0.8"/>
<circle cx="558.0" cy="137.4" r="2.2" fill="none" stroke="#000" stroke-opacity="0.5" stroke-width="0.8"/>
<circle cx="634.0" cy="189.9" r="2.2" fill="none" stroke="#000" stroke-opacity="0.5" stroke-width="0.8"/>
<circle cx="584.5" cy="100.8" r="2.2" fill="none" stroke="#000" stroke-opacity="0.5" stroke-width="0.8"/>
<rect x="580.9" y="129.9" width="6.2" height="6.2" fill="none" stroke="#1a1a1a" stroke-width="0.95"/>
<rect x="715.8" y="112.2" width="6.2" height="6.2" fill="none" stroke="#dadada" stroke-width="0.95"/>
<rect x="527.4" y="86.3" width="6.2" height="6.2" fill="none" stroke="#dadada" stroke-width="0.95"/>
<rect x="566.4" y="256.1" width="6.2" height="6.2" fill="none" stroke="#dadada" stroke-width="0.95"/>
<rect x="538.7" y="135.5" width="6.2" height="6.2" fill="none" stroke="#dadada" stroke-width="0.95"/>
<rect x="644.0" y="181.4" width="6.2" height="6.2" fill="none" stroke="#dadada" stroke-width="0.95"/>
<rect x="585.0" y="94.2" width="6.2" height="6.2" fill="none" stroke="#dadada" stroke-width="0.95"/>
</svg>
<div id="mbtn"><span>Measure Gamut Coverage</span></div>
<div class="big" style="top:358.8px">BT.2020 Percent 1931 xy: 62.8</div>
<div class="big" style="top:395.3px">BT.2020 Percent 1976 uv: 71.13</div>
<div class="tb">
<div class="th"></div>
<span class="hd" style="left:38.7px">White</span>
<span class="hd" style="left:73.4px">Red</span>
<span class="hd" style="left:106.8px">Green</span>
<span class="hd" style="left:137.8px">Blue</span>
<span class="hd" style="left:170.4px">Cyan</span>
<span class="hd" style="left:205.6px">Magenta</span>
<span class="hd" style="left:240.3px">Yellow</span>
<span class="hd" style="left:277.6px">100W</span>
<div class="ra" style="top:13.0px">
<span class="lb">Target Y cd/m<span class="sp">2</span></span>
<span class="vl" style="left:61.8px">489.7425</span>
<span class="vl" style="left:100.0px">128.6608</span>
<span class="vl" style="left:132.0px">332.0416</span>
<span class="vl" style="left:164.8px">29.0402</span>
<span class="vl" style="left:194.0px">361.0817</span>
<span class="vl" style="left:231.7px">157.7009</span>
<span class="vl" style="left:263.7px">460.7023</span>
<span class="vl" style="left:300.8px">489.7425</span>
</div>
<div class="rb" style="top:24.6px">
<span class="lb">Y cd/m<span class="sp">2</span></span>
<span class="vl" style="left:61.8px">489.7425</span>
<span class="vl" style="left:100.0px">100.3583</span>
<span class="vl" style="left:132.0px">361.6873</span>
<span class="vl" style="left:164.8px">28.4815</span>
<span class="vl" style="left:194.0px">390.3667</span>
<span class="vl" style="left:231.7px">128.4927</span>
<span class="vl" style="left:263.7px">444.8177</span>
<span class="vl" style="left:300.8px">489.7425</span>
</div>
<div class="ra" style="top:36.2px">
<span class="lb">Target x:CIE31</span>
<span class="vl" style="left:61.8px">0.3127</span>
<span class="vl" style="left:100.0px">0.7080</span>
<span class="vl" style="left:132.0px">0.1700</span>
<span class="vl" style="left:164.8px">0.1310</span>
<span class="vl" style="left:194.0px">0.1465</span>
<span class="vl" style="left:231.7px">0.3682</span>
<span class="vl" style="left:263.7px">0.4465</span>
<span class="vl" style="left:300.8px">0.3127</span>
</div>
<div class="rb" style="top:47.8px">
<span class="lb">Target y:CIE31</span>
<span class="vl" style="left:61.8px">0.3290</span>
<span class="vl" style="left:100.0px">0.2920</span>
<span class="vl" style="left:132.0px">0.7970</span>
<span class="vl" style="left:164.8px">0.0460</span>
<span class="vl" style="left:194.0px">0.3446</span>
<span class="vl" style="left:231.7px">0.1471</span>
<span class="vl" style="left:263.7px">0.5374</span>
<span class="vl" style="left:300.8px">0.3290</span>
</div>
<div class="ra" style="top:59.4px">
<span class="lb">x: CIE31</span>
<span class="vl" style="left:61.8px">0.3087</span>
<span class="vl" style="left:100.0px">0.6606</span>
<span class="vl" style="left:132.0px">0.2717</span>
<span class="vl" style="left:164.8px">0.1556</span>
<span class="vl" style="left:194.0px">0.2120</span>
<span class="vl" style="left:231.7px">0.3322</span>
<span class="vl" style="left:263.7px">0.4164</span>
<span class="vl" style="left:300.8px">0.3087</span>
</div>
<div class="rb" style="top:71.0px">
<span class="lb">y: CIE31</span>
<span class="vl" style="left:61.8px">0.3293</span>
<span class="vl" style="left:100.0px">0.3129</span>
<span class="vl" style="left:132.0px">0.6370</span>
<span class="vl" style="left:164.8px">0.0474</span>
<span class="vl" style="left:194.0px">0.3339</span>
<span class="vl" style="left:231.7px">0.1401</span>
<span class="vl" style="left:263.7px">0.5164</span>
<span class="vl" style="left:300.8px">0.3293</span>
</div>
<div class="sb"><div class="sbt"></div><div class="sbth"></div><div class="sbb"></div></div>
</div>
<div id="bbar">
<div class="tile" style="left:0.0px"><div class="sw" style="background:#ffffff"></div><div class="tl">White</div></div>
<div class="tile" style="left:59.5px"><div class="sw" style="background:#ff0000"></div><div class="tl">Red</div></div>
<div class="tile" style="left:118.9px"><div class="sw" style="background:#00ff00"></div><div class="tl">Green</div></div>
<div class="tile" style="left:178.4px"><div class="sw" style="background:#0000ff"></div><div class="tl">Blue</div></div>
<div class="tile" style="left:237.8px"><div class="sw" style="background:#00ffff"></div><div class="tl">Cyan</div></div>
<div class="tile" style="left:297.2px"><div class="sw" style="background:#ff00ff"></div><div class="tl">Magenta</div></div>
<div class="tile" style="left:356.7px"><div class="sw" style="background:#ffff00"></div><div class="tl">Yellow</div></div>
<div class="tile sel" style="left:416.2px"><div class="sw" style="background:#fff"></div><div class="tl">100W</div></div>
  <div class="abs" style="left:475px;top:0;width:149px;height:24px;background:linear-gradient(#3e3e3e,#262626)"></div>
  <div class="nb" style="left:623.9px;top:0;width:18.1px;height:7.2px"></div>
  <div class="abs" style="left:630.8px;top:1.8px;width:4px;height:3px;border-radius:2px;background:#6a6a6a"></div>
  <div class="abs" style="left:623.9px;top:7.2px;width:18.1px;height:16.3px;background:linear-gradient(#a0a0a0,#888);border:0.5px solid #5a5a5a"></div>
  <div class="abs" style="left:627.5px;top:10px;width:11.5px;height:11.7px;background:#161616;border:0.5px solid #333"></div>
  <div class="abs" style="left:629.5px;top:13.5px;width:7.5px;height:5px;border-top:0.4px solid #2c2c2c;border-bottom:0.4px solid #2c2c2c"></div>
  <div class="nb" style="left:643px;top:0;width:17.6px;height:11.4px"></div>
  <div class="nb" style="left:660.6px;top:0;width:17.6px;height:11.4px"></div>
  <div class="nb" style="left:678.2px;top:0;width:18.4px;height:11.4px"></div>
  <div class="nb" style="left:696.6px;top:0;width:17.2px;height:11.4px"></div>
  <div class="nbd" style="left:713.8px;top:0;width:17.4px;height:11.4px"></div>
  <div class="nbd" style="left:731.2px;top:0;width:17.5px;height:11.4px"></div>
  <div class="abs" style="left:748.7px;top:0;width:1.3px;height:24px;background:#555"></div>
  <div class="nb" style="left:643px;top:11.5px;width:53.8px;height:12px"></div>
  <div class="nb" style="left:696.8px;top:11.5px;width:52px;height:12px"></div>
  <svg class="abs" style="left:640px;top:0" width="110" height="24" viewBox="640 450 110 24">
    <circle cx="652" cy="455.8" r="3.4" fill="#9a9a9a" stroke="#c8c8c8" stroke-width="0.8"/>
    <rect x="650.5" y="454.3" width="3" height="3" fill="#222"/>
    <circle cx="670.2" cy="455.8" r="3.4" fill="#9a9a9a" stroke="#c8c8c8" stroke-width="0.8"/>
    <path d="M669 454 L672.2 455.8 L669 457.6Z" fill="#222"/>
    <path d="M684.3 452.5 h3.6 v6.2 l-1.8 -1.6 l-1.8 1.6Z" fill="none" stroke="#e0e0e0" stroke-width="0.9"/>
    <circle cx="705.6" cy="455.5" r="3.2" fill="#a8a8a8" stroke="#d8d8d8" stroke-width="0.9"/>
    <path d="M703.6 455.5 h4" stroke="#555" stroke-width="1"/>
    <circle cx="722.3" cy="455.8" r="3.3" fill="#2a2a2a" stroke="#444" stroke-width="0.8"/>
    <circle cx="740.5" cy="455.5" r="3.6" fill="#343434" stroke="#3e3e3e" stroke-width="0.8"/>
    <circle cx="656" cy="468" r="3.8" fill="#a6a6a6" stroke="#cfcfcf" stroke-width="0.9"/>
    <path d="M657 465.6 L654.5 467.8 L657 470" fill="none" stroke="#555" stroke-width="1.1"/>
    <circle cx="738.6" cy="468" r="3.8" fill="#a6a6a6" stroke="#cfcfcf" stroke-width="0.9"/>
    <path d="M737.6 465.6 L740.1 467.8 L737.6 470" fill="none" stroke="#555" stroke-width="1.1"/>
  </svg>
  <div class="abs" style="left:665.6px;top:12.6px;font-size:9.2px;line-height:11px;color:#262626">Back</div>
  <div class="abs" style="left:706.8px;top:12.6px;font-size:9.3px;line-height:11px;color:#262626">Next</div>
</div>
<div id="bottomwhite"></div>
</body></html>
